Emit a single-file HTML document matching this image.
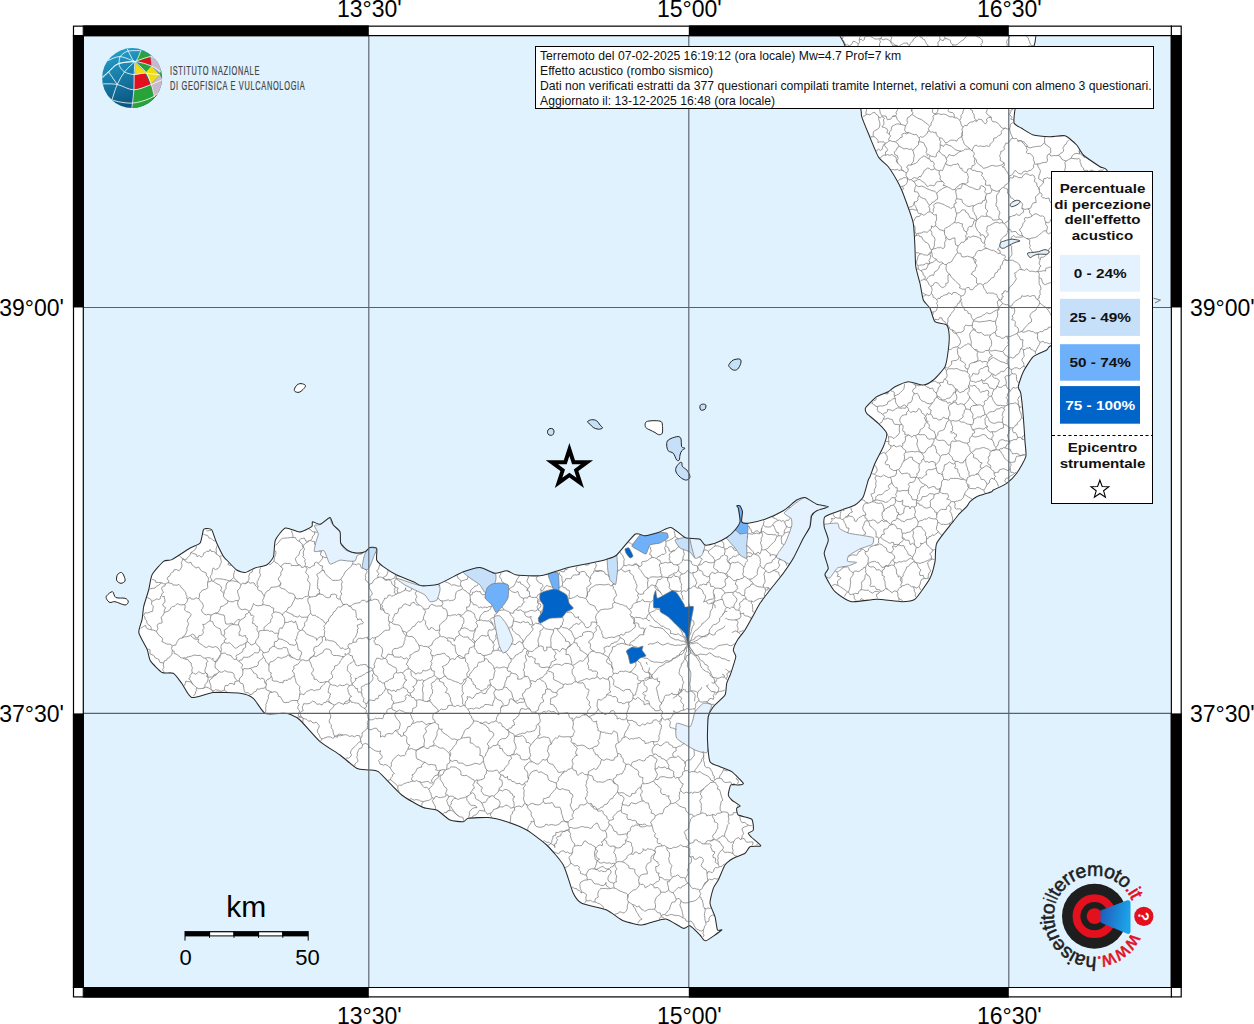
<!DOCTYPE html>
<html><head><meta charset="utf-8">
<style>
html,body{margin:0;padding:0;background:#fff;}
body{width:1254px;height:1024px;position:relative;overflow:hidden;font-family:"Liberation Sans",sans-serif;}
svg text{font-family:"Liberation Sans",sans-serif;}
</style></head><body>
<svg width="1254" height="1024" style="position:absolute;left:0;top:0">
<defs><clipPath id="mapclip"><rect x="83.9" y="36.2" width="1086.8" height="950.8"/></clipPath></defs>
<rect x="83.9" y="36.2" width="1086.8" height="950.8" fill="#e0f2fe"/>
<g clip-path="url(#mapclip)">
<path d="M152.2,574.6 C153.7,571.8 161.6,562.8 163.6,561.3 C165.6,559.8 169.2,560.9 171.9,559.6 C174.6,558.3 187.3,549.7 190.1,548.0 C192.9,546.3 198.8,544.8 200.1,543.0 C201.4,541.2 202.8,531.2 203.4,529.8 C204.0,528.3 205.7,528.5 206.5,528.5 C207.3,528.5 210.7,528.3 211.7,529.8 C212.7,531.2 215.5,540.4 216.7,543.0 C217.9,545.6 222.3,554.6 223.3,556.3 C224.3,558.0 225.4,558.6 226.7,560.0 C228.0,561.4 234.9,568.8 236.7,570.0 C238.5,571.2 243.1,572.7 245.0,572.5 C246.9,572.3 253.3,568.5 255.5,567.8 C257.7,567.0 264.9,566.1 266.7,565.0 C268.5,563.9 272.5,559.4 273.4,556.9 C274.3,554.4 274.2,542.9 275.4,540.0 C276.6,537.1 283.0,528.8 285.4,528.0 C287.8,527.2 296.8,532.1 299.4,532.0 C302.0,531.9 310.4,527.7 311.7,526.7 C313.0,525.7 311.7,522.0 312.5,521.7 C313.3,521.5 318.2,524.6 320.0,524.2 C321.8,523.8 328.7,517.4 330.0,517.5 C331.3,517.6 332.3,523.6 333.3,525.0 C334.3,526.4 339.2,529.9 340.0,531.7 C340.8,533.5 340.0,541.4 340.8,543.3 C341.6,545.2 346.7,549.8 348.3,550.8 C349.9,551.8 355.0,552.9 356.7,553.0 C358.4,553.1 363.7,552.2 365.0,551.7 C366.3,551.2 368.8,547.8 370.0,547.5 C371.2,547.2 376.0,547.0 376.7,548.3 C377.4,549.5 376.0,558.2 376.7,560.0 C377.4,561.8 381.3,565.2 383.3,566.7 C385.3,568.2 393.7,573.5 396.7,575.0 C399.7,576.5 410.8,580.6 413.3,581.7 C415.8,582.8 419.2,585.5 421.7,585.8 C424.2,586.0 434.1,585.6 438.3,584.2 C442.5,582.8 459.1,573.4 463.3,571.7 C467.5,570.0 476.8,567.3 480.0,567.5 C483.2,567.7 492.3,573.0 495.0,573.3 C497.7,573.6 504.5,570.6 506.7,570.8 C508.9,571.0 513.4,574.5 516.7,575.0 C520.0,575.5 536.7,576.0 540.0,575.8 C543.3,575.6 547.2,574.1 550.0,573.3 C552.8,572.5 564.0,568.6 568.3,567.5 C572.6,566.4 589.5,563.3 593.3,562.5 C597.1,561.7 604.4,560.0 606.7,559.2 C609.0,558.5 613.9,557.5 616.7,555.0 C619.5,552.5 632.2,536.1 635.0,534.2 C637.8,532.3 642.7,536.0 645.0,535.8 C647.3,535.6 655.7,533.3 658.3,532.5 C660.9,531.7 668.1,527.0 670.8,527.5 C673.5,528.0 683.1,536.4 685.0,537.5 C686.9,538.6 688.5,538.1 690.0,538.3 C691.5,538.5 698.5,538.5 700.0,539.2 C701.5,539.9 703.5,544.6 705.0,545.0 C706.5,545.4 712.8,544.0 715.0,543.3 C717.2,542.5 724.7,538.8 726.7,537.5 C728.7,536.2 733.7,531.6 735.0,530.0 C736.3,528.4 739.7,523.9 740.0,521.7 C740.3,519.5 738.6,509.9 738.3,508.3 C738.0,506.7 736.5,506.1 736.7,505.8 C736.9,505.6 739.4,505.2 740.0,505.8 C740.6,506.4 742.3,510.1 742.5,511.7 C742.7,513.3 741.1,520.5 741.7,521.7 C742.3,522.9 746.0,523.5 748.3,523.3 C750.6,523.0 761.5,520.5 765.0,519.2 C768.5,518.0 780.1,512.7 783.3,510.8 C786.5,508.9 794.5,501.3 796.7,500.0 C798.9,498.7 803.0,497.1 805.0,497.5 C807.0,497.9 814.4,503.3 816.7,504.2 C819.0,505.1 828.3,506.0 828.3,506.7 C828.3,507.4 818.4,509.9 816.7,510.8 C815.0,511.7 812.4,514.2 811.7,515.8 C811.0,517.4 810.8,524.5 810.0,526.7 C809.2,529.0 805.0,535.1 803.3,538.3 C801.6,541.5 795.3,554.8 793.3,558.3 C791.3,561.8 785.6,570.1 783.3,573.3 C781.0,576.5 772.3,587.0 770.0,590.0 C767.7,593.0 761.8,600.5 760.0,603.3 C758.2,606.1 753.2,615.6 751.7,618.3 C750.2,621.0 746.4,627.8 745.0,630.0 C743.6,632.2 738.7,638.0 737.5,640.0 C736.3,642.0 733.5,648.3 733.3,650.0 C733.1,651.7 736.0,654.4 735.8,656.7 C735.5,659.0 731.7,670.6 730.8,673.3 C729.9,676.0 727.3,681.1 726.7,683.3 C726.1,685.5 726.3,692.7 725.0,695.0 C723.7,697.3 715.0,704.5 713.3,706.7 C711.6,708.9 708.9,713.4 708.3,716.7 C707.7,720.0 707.3,735.5 707.5,740.0 C707.7,744.5 708.8,759.0 710.0,761.7 C711.2,764.4 717.8,765.7 720.0,766.7 C722.2,767.7 729.4,770.0 731.7,771.7 C734.0,773.4 742.6,782.0 743.3,783.3 C744.0,784.6 739.5,784.8 738.3,785.0 C737.0,785.2 731.8,784.0 730.8,785.0 C729.8,786.0 728.2,793.5 728.3,795.0 C728.4,796.5 730.5,798.9 731.7,800.0 C732.9,801.1 739.5,805.0 740.0,805.8 C740.5,806.6 736.9,807.4 736.7,808.3 C736.5,809.2 736.8,813.9 738.3,815.0 C739.8,816.1 750.2,817.7 751.7,819.2 C753.2,820.7 753.6,828.6 753.3,830.0 C753.0,831.4 748.5,832.5 748.3,833.3 C748.1,834.0 750.5,836.2 751.7,837.5 C753.0,838.8 761.0,844.9 760.8,845.8 C760.6,846.7 751.6,846.0 750.0,846.7 C748.4,847.5 746.7,852.1 745.0,853.3 C743.3,854.5 735.3,857.1 733.3,858.3 C731.3,859.5 726.5,862.8 725.0,865.0 C723.5,867.2 719.5,877.7 718.3,880.0 C717.1,882.3 714.1,886.0 713.3,888.3 C712.5,890.6 709.8,900.5 710.0,903.3 C710.2,906.1 714.2,914.0 715.0,916.7 C715.8,919.4 716.8,928.7 717.5,930.0 C718.2,931.3 722.9,928.9 721.7,930.0 C720.5,931.1 708.0,940.3 705.8,940.8 C703.6,941.3 701.6,936.5 700.0,935.0 C698.4,933.5 691.7,926.5 690.0,925.8 C688.3,925.1 685.6,929.0 683.3,928.3 C681.0,927.6 669.7,919.9 666.7,919.2 C663.7,918.5 655.8,921.1 653.3,921.7 C650.8,922.3 644.7,925.1 641.7,925.0 C638.7,924.9 626.8,922.3 623.3,920.8 C619.8,919.3 610.9,911.8 606.7,910.0 C602.5,908.2 585.0,905.0 581.7,903.3 C578.4,901.6 575.1,897.1 573.3,893.3 C571.5,889.5 566.0,869.8 563.3,865.0 C560.6,860.2 550.4,848.5 546.7,845.0 C543.0,841.5 530.7,832.3 526.7,830.0 C522.7,827.7 510.5,823.0 506.7,821.7 C502.9,820.5 492.1,817.8 488.3,817.5 C484.5,817.2 470.8,817.9 468.3,818.3 C465.8,818.7 465.1,821.5 463.3,821.7 C461.5,821.9 452.7,821.2 450.0,820.0 C447.3,818.8 439.4,811.2 436.7,810.0 C434.0,808.8 426.8,809.0 423.3,807.5 C419.8,806.0 406.2,798.6 401.7,795.0 C397.2,791.4 381.6,774.2 378.3,771.7 C375.0,769.2 370.5,770.3 368.3,770.0 C366.1,769.7 359.5,769.8 356.7,768.3 C353.9,766.8 343.7,757.7 340.0,755.0 C336.3,752.3 324.0,745.2 320.0,741.7 C316.0,738.2 303.0,722.8 300.0,720.0 C297.0,717.2 291.7,714.9 290.0,714.2 C288.3,713.5 285.8,713.4 283.3,713.3 C280.8,713.2 268.0,714.8 265.0,713.3 C262.0,711.8 255.8,700.3 253.3,698.3 C250.8,696.3 244.0,693.9 240.0,693.3 C236.0,692.7 218.1,692.1 213.3,692.5 C208.5,692.9 194.9,698.4 191.7,697.5 C188.5,696.6 183.5,685.7 181.7,683.3 C179.9,680.9 175.3,674.4 173.3,673.3 C171.3,672.2 164.4,673.7 162.1,672.5 C159.8,671.3 151.9,663.2 150.4,660.9 C148.9,658.6 148.3,652.1 147.1,649.3 C145.9,646.5 139.3,635.6 138.8,632.6 C138.3,629.6 141.6,622.0 142.1,619.4 C142.6,616.8 143.1,609.1 143.8,606.1 C144.5,603.1 148.0,592.6 148.8,589.5 C149.6,586.4 150.7,577.4 152.2,574.6 Z" fill="#fff"/>
<path d="M838.0,30.0 C857.6,29.4 1016.2,29.4 1036.0,30.0 C1055.8,30.6 1036.0,34.4 1035.8,36.0 C1035.6,37.6 1035.6,41.6 1034.0,46.0 C1032.4,50.4 1021.9,73.7 1020.0,80.0 C1018.1,86.3 1015.6,104.9 1015.0,109.2 C1014.4,113.5 1013.5,121.4 1014.2,123.3 C1014.9,125.2 1019.8,127.1 1021.7,128.3 C1023.6,129.5 1030.5,134.2 1033.3,135.0 C1036.1,135.8 1046.8,136.6 1050.0,136.7 C1053.2,136.8 1062.3,135.0 1065.0,135.8 C1067.7,136.6 1074.9,143.1 1076.7,145.0 C1078.5,146.9 1081.0,152.8 1083.3,155.0 C1085.6,157.2 1097.7,165.2 1100.0,166.7 C1102.3,168.2 1105.2,167.7 1106.7,170.0 C1108.2,172.3 1112.7,181.0 1115.0,190.0 C1117.3,199.0 1127.0,249.0 1130.0,260.0 C1133.0,271.0 1148.0,293.5 1145.0,300.0 C1142.0,306.5 1109.3,320.5 1100.0,325.0 C1090.7,329.5 1057.3,342.5 1052.0,345.0 C1046.7,347.5 1048.6,348.8 1046.7,350.0 C1044.8,351.2 1035.6,354.5 1033.3,356.7 C1031.0,358.9 1024.8,368.7 1023.3,371.7 C1021.8,374.7 1018.5,384.5 1018.3,386.7 C1018.0,388.9 1020.3,390.3 1020.8,393.3 C1021.3,396.3 1022.9,411.9 1023.3,416.7 C1023.7,421.5 1024.8,437.7 1025.0,441.7 C1025.2,445.7 1026.6,453.5 1025.8,456.7 C1025.0,459.9 1018.6,470.6 1016.7,473.3 C1014.8,476.0 1009.0,481.6 1006.7,483.3 C1004.4,485.0 994.8,489.2 993.3,490.0 C991.8,490.8 993.4,491.0 991.7,491.7 C990.0,492.4 978.9,495.7 976.7,496.7 C974.5,497.7 971.0,500.7 970.0,501.7 C969.0,502.7 967.9,505.4 966.7,506.7 C965.5,508.0 959.8,513.3 958.3,515.0 C956.8,516.7 953.9,520.5 951.7,523.3 C949.5,526.1 938.4,539.5 936.7,543.3 C935.0,547.1 935.7,558.2 935.0,561.7 C934.3,565.2 932.0,574.5 930.0,578.3 C928.0,582.0 917.8,596.9 915.0,599.2 C912.2,601.5 905.5,601.7 901.7,601.7 C897.9,601.7 881.7,599.2 876.7,599.2 C871.7,599.2 855.9,602.5 851.7,601.7 C847.5,601.0 837.7,594.4 835.0,591.7 C832.3,589.0 825.7,577.3 825.0,575.0 C824.3,572.7 828.4,570.5 828.3,568.3 C828.2,566.1 824.2,556.1 824.2,553.3 C824.2,550.5 828.3,542.7 828.3,540.0 C828.3,537.3 824.5,529.0 824.2,526.7 C823.9,524.4 823.2,518.4 825.0,516.7 C826.8,515.0 838.7,511.2 841.7,510.0 C844.7,508.8 852.8,506.3 855.0,505.0 C857.2,503.7 862.0,499.2 863.3,496.7 C864.6,494.2 867.6,482.0 868.3,480.0 C869.0,478.0 869.3,478.4 870.0,476.7 C870.7,475.0 873.7,466.3 875.0,463.3 C876.3,460.3 882.1,449.7 883.3,446.7 C884.5,443.7 887.2,435.6 886.7,433.3 C886.2,431.0 880.3,425.3 878.3,423.3 C876.3,421.3 868.0,414.9 866.7,413.3 C865.5,411.7 864.8,409.2 865.8,407.5 C866.8,405.8 874.5,398.3 876.7,396.7 C879.0,395.1 886.5,392.7 888.3,391.7 C890.1,390.7 893.0,387.7 895.0,386.7 C897.0,385.7 905.5,381.9 908.3,381.7 C911.1,381.5 920.8,385.2 923.3,385.0 C925.8,384.8 931.1,381.8 933.3,380.0 C935.5,378.2 943.5,369.7 945.0,366.7 C946.5,363.7 947.9,353.2 948.3,350.0 C948.7,346.8 949.4,337.5 949.2,335.0 C949.0,332.5 948.1,326.3 946.7,325.0 C945.3,323.7 936.7,323.4 935.0,321.7 C933.3,320.0 931.2,310.5 930.0,308.3 C928.8,306.1 924.3,302.5 923.3,300.0 C922.3,297.5 920.8,286.6 920.0,283.3 C919.2,280.0 916.3,270.2 915.8,266.7 C915.3,263.2 915.2,252.6 915.0,248.3 C914.8,244.0 914.1,227.8 913.3,223.3 C912.5,218.8 907.9,206.6 906.7,203.3 C905.5,200.0 902.7,192.3 901.7,190.0 C900.7,187.7 898.0,182.3 896.7,180.0 C895.4,177.7 890.1,169.0 888.3,166.7 C886.5,164.4 880.3,160.0 878.3,156.7 C876.3,153.4 870.0,137.3 868.3,133.3 C866.6,129.3 862.5,119.1 861.7,116.7 C861.0,114.3 861.8,112.9 860.8,109.2 C859.8,105.5 853.6,86.3 852.0,80.0 C850.4,73.7 846.2,50.4 845.0,46.0 C843.8,41.6 840.7,37.6 840.0,36.0 C839.3,34.4 818.4,30.6 838.0,30.0 Z" fill="#fff"/>
<defs><clipPath id="landclip"><path d="M152.2,574.6 C153.7,571.8 161.6,562.8 163.6,561.3 C165.6,559.8 169.2,560.9 171.9,559.6 C174.6,558.3 187.3,549.7 190.1,548.0 C192.9,546.3 198.8,544.8 200.1,543.0 C201.4,541.2 202.8,531.2 203.4,529.8 C204.0,528.3 205.7,528.5 206.5,528.5 C207.3,528.5 210.7,528.3 211.7,529.8 C212.7,531.2 215.5,540.4 216.7,543.0 C217.9,545.6 222.3,554.6 223.3,556.3 C224.3,558.0 225.4,558.6 226.7,560.0 C228.0,561.4 234.9,568.8 236.7,570.0 C238.5,571.2 243.1,572.7 245.0,572.5 C246.9,572.3 253.3,568.5 255.5,567.8 C257.7,567.0 264.9,566.1 266.7,565.0 C268.5,563.9 272.5,559.4 273.4,556.9 C274.3,554.4 274.2,542.9 275.4,540.0 C276.6,537.1 283.0,528.8 285.4,528.0 C287.8,527.2 296.8,532.1 299.4,532.0 C302.0,531.9 310.4,527.7 311.7,526.7 C313.0,525.7 311.7,522.0 312.5,521.7 C313.3,521.5 318.2,524.6 320.0,524.2 C321.8,523.8 328.7,517.4 330.0,517.5 C331.3,517.6 332.3,523.6 333.3,525.0 C334.3,526.4 339.2,529.9 340.0,531.7 C340.8,533.5 340.0,541.4 340.8,543.3 C341.6,545.2 346.7,549.8 348.3,550.8 C349.9,551.8 355.0,552.9 356.7,553.0 C358.4,553.1 363.7,552.2 365.0,551.7 C366.3,551.2 368.8,547.8 370.0,547.5 C371.2,547.2 376.0,547.0 376.7,548.3 C377.4,549.5 376.0,558.2 376.7,560.0 C377.4,561.8 381.3,565.2 383.3,566.7 C385.3,568.2 393.7,573.5 396.7,575.0 C399.7,576.5 410.8,580.6 413.3,581.7 C415.8,582.8 419.2,585.5 421.7,585.8 C424.2,586.0 434.1,585.6 438.3,584.2 C442.5,582.8 459.1,573.4 463.3,571.7 C467.5,570.0 476.8,567.3 480.0,567.5 C483.2,567.7 492.3,573.0 495.0,573.3 C497.7,573.6 504.5,570.6 506.7,570.8 C508.9,571.0 513.4,574.5 516.7,575.0 C520.0,575.5 536.7,576.0 540.0,575.8 C543.3,575.6 547.2,574.1 550.0,573.3 C552.8,572.5 564.0,568.6 568.3,567.5 C572.6,566.4 589.5,563.3 593.3,562.5 C597.1,561.7 604.4,560.0 606.7,559.2 C609.0,558.5 613.9,557.5 616.7,555.0 C619.5,552.5 632.2,536.1 635.0,534.2 C637.8,532.3 642.7,536.0 645.0,535.8 C647.3,535.6 655.7,533.3 658.3,532.5 C660.9,531.7 668.1,527.0 670.8,527.5 C673.5,528.0 683.1,536.4 685.0,537.5 C686.9,538.6 688.5,538.1 690.0,538.3 C691.5,538.5 698.5,538.5 700.0,539.2 C701.5,539.9 703.5,544.6 705.0,545.0 C706.5,545.4 712.8,544.0 715.0,543.3 C717.2,542.5 724.7,538.8 726.7,537.5 C728.7,536.2 733.7,531.6 735.0,530.0 C736.3,528.4 739.7,523.9 740.0,521.7 C740.3,519.5 738.6,509.9 738.3,508.3 C738.0,506.7 736.5,506.1 736.7,505.8 C736.9,505.6 739.4,505.2 740.0,505.8 C740.6,506.4 742.3,510.1 742.5,511.7 C742.7,513.3 741.1,520.5 741.7,521.7 C742.3,522.9 746.0,523.5 748.3,523.3 C750.6,523.0 761.5,520.5 765.0,519.2 C768.5,518.0 780.1,512.7 783.3,510.8 C786.5,508.9 794.5,501.3 796.7,500.0 C798.9,498.7 803.0,497.1 805.0,497.5 C807.0,497.9 814.4,503.3 816.7,504.2 C819.0,505.1 828.3,506.0 828.3,506.7 C828.3,507.4 818.4,509.9 816.7,510.8 C815.0,511.7 812.4,514.2 811.7,515.8 C811.0,517.4 810.8,524.5 810.0,526.7 C809.2,529.0 805.0,535.1 803.3,538.3 C801.6,541.5 795.3,554.8 793.3,558.3 C791.3,561.8 785.6,570.1 783.3,573.3 C781.0,576.5 772.3,587.0 770.0,590.0 C767.7,593.0 761.8,600.5 760.0,603.3 C758.2,606.1 753.2,615.6 751.7,618.3 C750.2,621.0 746.4,627.8 745.0,630.0 C743.6,632.2 738.7,638.0 737.5,640.0 C736.3,642.0 733.5,648.3 733.3,650.0 C733.1,651.7 736.0,654.4 735.8,656.7 C735.5,659.0 731.7,670.6 730.8,673.3 C729.9,676.0 727.3,681.1 726.7,683.3 C726.1,685.5 726.3,692.7 725.0,695.0 C723.7,697.3 715.0,704.5 713.3,706.7 C711.6,708.9 708.9,713.4 708.3,716.7 C707.7,720.0 707.3,735.5 707.5,740.0 C707.7,744.5 708.8,759.0 710.0,761.7 C711.2,764.4 717.8,765.7 720.0,766.7 C722.2,767.7 729.4,770.0 731.7,771.7 C734.0,773.4 742.6,782.0 743.3,783.3 C744.0,784.6 739.5,784.8 738.3,785.0 C737.0,785.2 731.8,784.0 730.8,785.0 C729.8,786.0 728.2,793.5 728.3,795.0 C728.4,796.5 730.5,798.9 731.7,800.0 C732.9,801.1 739.5,805.0 740.0,805.8 C740.5,806.6 736.9,807.4 736.7,808.3 C736.5,809.2 736.8,813.9 738.3,815.0 C739.8,816.1 750.2,817.7 751.7,819.2 C753.2,820.7 753.6,828.6 753.3,830.0 C753.0,831.4 748.5,832.5 748.3,833.3 C748.1,834.0 750.5,836.2 751.7,837.5 C753.0,838.8 761.0,844.9 760.8,845.8 C760.6,846.7 751.6,846.0 750.0,846.7 C748.4,847.5 746.7,852.1 745.0,853.3 C743.3,854.5 735.3,857.1 733.3,858.3 C731.3,859.5 726.5,862.8 725.0,865.0 C723.5,867.2 719.5,877.7 718.3,880.0 C717.1,882.3 714.1,886.0 713.3,888.3 C712.5,890.6 709.8,900.5 710.0,903.3 C710.2,906.1 714.2,914.0 715.0,916.7 C715.8,919.4 716.8,928.7 717.5,930.0 C718.2,931.3 722.9,928.9 721.7,930.0 C720.5,931.1 708.0,940.3 705.8,940.8 C703.6,941.3 701.6,936.5 700.0,935.0 C698.4,933.5 691.7,926.5 690.0,925.8 C688.3,925.1 685.6,929.0 683.3,928.3 C681.0,927.6 669.7,919.9 666.7,919.2 C663.7,918.5 655.8,921.1 653.3,921.7 C650.8,922.3 644.7,925.1 641.7,925.0 C638.7,924.9 626.8,922.3 623.3,920.8 C619.8,919.3 610.9,911.8 606.7,910.0 C602.5,908.2 585.0,905.0 581.7,903.3 C578.4,901.6 575.1,897.1 573.3,893.3 C571.5,889.5 566.0,869.8 563.3,865.0 C560.6,860.2 550.4,848.5 546.7,845.0 C543.0,841.5 530.7,832.3 526.7,830.0 C522.7,827.7 510.5,823.0 506.7,821.7 C502.9,820.5 492.1,817.8 488.3,817.5 C484.5,817.2 470.8,817.9 468.3,818.3 C465.8,818.7 465.1,821.5 463.3,821.7 C461.5,821.9 452.7,821.2 450.0,820.0 C447.3,818.8 439.4,811.2 436.7,810.0 C434.0,808.8 426.8,809.0 423.3,807.5 C419.8,806.0 406.2,798.6 401.7,795.0 C397.2,791.4 381.6,774.2 378.3,771.7 C375.0,769.2 370.5,770.3 368.3,770.0 C366.1,769.7 359.5,769.8 356.7,768.3 C353.9,766.8 343.7,757.7 340.0,755.0 C336.3,752.3 324.0,745.2 320.0,741.7 C316.0,738.2 303.0,722.8 300.0,720.0 C297.0,717.2 291.7,714.9 290.0,714.2 C288.3,713.5 285.8,713.4 283.3,713.3 C280.8,713.2 268.0,714.8 265.0,713.3 C262.0,711.8 255.8,700.3 253.3,698.3 C250.8,696.3 244.0,693.9 240.0,693.3 C236.0,692.7 218.1,692.1 213.3,692.5 C208.5,692.9 194.9,698.4 191.7,697.5 C188.5,696.6 183.5,685.7 181.7,683.3 C179.9,680.9 175.3,674.4 173.3,673.3 C171.3,672.2 164.4,673.7 162.1,672.5 C159.8,671.3 151.9,663.2 150.4,660.9 C148.9,658.6 148.3,652.1 147.1,649.3 C145.9,646.5 139.3,635.6 138.8,632.6 C138.3,629.6 141.6,622.0 142.1,619.4 C142.6,616.8 143.1,609.1 143.8,606.1 C144.5,603.1 148.0,592.6 148.8,589.5 C149.6,586.4 150.7,577.4 152.2,574.6 Z"/><path d="M838.0,30.0 C857.6,29.4 1016.2,29.4 1036.0,30.0 C1055.8,30.6 1036.0,34.4 1035.8,36.0 C1035.6,37.6 1035.6,41.6 1034.0,46.0 C1032.4,50.4 1021.9,73.7 1020.0,80.0 C1018.1,86.3 1015.6,104.9 1015.0,109.2 C1014.4,113.5 1013.5,121.4 1014.2,123.3 C1014.9,125.2 1019.8,127.1 1021.7,128.3 C1023.6,129.5 1030.5,134.2 1033.3,135.0 C1036.1,135.8 1046.8,136.6 1050.0,136.7 C1053.2,136.8 1062.3,135.0 1065.0,135.8 C1067.7,136.6 1074.9,143.1 1076.7,145.0 C1078.5,146.9 1081.0,152.8 1083.3,155.0 C1085.6,157.2 1097.7,165.2 1100.0,166.7 C1102.3,168.2 1105.2,167.7 1106.7,170.0 C1108.2,172.3 1112.7,181.0 1115.0,190.0 C1117.3,199.0 1127.0,249.0 1130.0,260.0 C1133.0,271.0 1148.0,293.5 1145.0,300.0 C1142.0,306.5 1109.3,320.5 1100.0,325.0 C1090.7,329.5 1057.3,342.5 1052.0,345.0 C1046.7,347.5 1048.6,348.8 1046.7,350.0 C1044.8,351.2 1035.6,354.5 1033.3,356.7 C1031.0,358.9 1024.8,368.7 1023.3,371.7 C1021.8,374.7 1018.5,384.5 1018.3,386.7 C1018.0,388.9 1020.3,390.3 1020.8,393.3 C1021.3,396.3 1022.9,411.9 1023.3,416.7 C1023.7,421.5 1024.8,437.7 1025.0,441.7 C1025.2,445.7 1026.6,453.5 1025.8,456.7 C1025.0,459.9 1018.6,470.6 1016.7,473.3 C1014.8,476.0 1009.0,481.6 1006.7,483.3 C1004.4,485.0 994.8,489.2 993.3,490.0 C991.8,490.8 993.4,491.0 991.7,491.7 C990.0,492.4 978.9,495.7 976.7,496.7 C974.5,497.7 971.0,500.7 970.0,501.7 C969.0,502.7 967.9,505.4 966.7,506.7 C965.5,508.0 959.8,513.3 958.3,515.0 C956.8,516.7 953.9,520.5 951.7,523.3 C949.5,526.1 938.4,539.5 936.7,543.3 C935.0,547.1 935.7,558.2 935.0,561.7 C934.3,565.2 932.0,574.5 930.0,578.3 C928.0,582.0 917.8,596.9 915.0,599.2 C912.2,601.5 905.5,601.7 901.7,601.7 C897.9,601.7 881.7,599.2 876.7,599.2 C871.7,599.2 855.9,602.5 851.7,601.7 C847.5,601.0 837.7,594.4 835.0,591.7 C832.3,589.0 825.7,577.3 825.0,575.0 C824.3,572.7 828.4,570.5 828.3,568.3 C828.2,566.1 824.2,556.1 824.2,553.3 C824.2,550.5 828.3,542.7 828.3,540.0 C828.3,537.3 824.5,529.0 824.2,526.7 C823.9,524.4 823.2,518.4 825.0,516.7 C826.8,515.0 838.7,511.2 841.7,510.0 C844.7,508.8 852.8,506.3 855.0,505.0 C857.2,503.7 862.0,499.2 863.3,496.7 C864.6,494.2 867.6,482.0 868.3,480.0 C869.0,478.0 869.3,478.4 870.0,476.7 C870.7,475.0 873.7,466.3 875.0,463.3 C876.3,460.3 882.1,449.7 883.3,446.7 C884.5,443.7 887.2,435.6 886.7,433.3 C886.2,431.0 880.3,425.3 878.3,423.3 C876.3,421.3 868.0,414.9 866.7,413.3 C865.5,411.7 864.8,409.2 865.8,407.5 C866.8,405.8 874.5,398.3 876.7,396.7 C879.0,395.1 886.5,392.7 888.3,391.7 C890.1,390.7 893.0,387.7 895.0,386.7 C897.0,385.7 905.5,381.9 908.3,381.7 C911.1,381.5 920.8,385.2 923.3,385.0 C925.8,384.8 931.1,381.8 933.3,380.0 C935.5,378.2 943.5,369.7 945.0,366.7 C946.5,363.7 947.9,353.2 948.3,350.0 C948.7,346.8 949.4,337.5 949.2,335.0 C949.0,332.5 948.1,326.3 946.7,325.0 C945.3,323.7 936.7,323.4 935.0,321.7 C933.3,320.0 931.2,310.5 930.0,308.3 C928.8,306.1 924.3,302.5 923.3,300.0 C922.3,297.5 920.8,286.6 920.0,283.3 C919.2,280.0 916.3,270.2 915.8,266.7 C915.3,263.2 915.2,252.6 915.0,248.3 C914.8,244.0 914.1,227.8 913.3,223.3 C912.5,218.8 907.9,206.6 906.7,203.3 C905.5,200.0 902.7,192.3 901.7,190.0 C900.7,187.7 898.0,182.3 896.7,180.0 C895.4,177.7 890.1,169.0 888.3,166.7 C886.5,164.4 880.3,160.0 878.3,156.7 C876.3,153.4 870.0,137.3 868.3,133.3 C866.6,129.3 862.5,119.1 861.7,116.7 C861.0,114.3 861.8,112.9 860.8,109.2 C859.8,105.5 853.6,86.3 852.0,80.0 C850.4,73.7 846.2,50.4 845.0,46.0 C843.8,41.6 840.7,37.6 840.0,36.0 C839.3,34.4 818.4,30.6 838.0,30.0 Z"/></clipPath></defs>
<g clip-path="url(#landclip)">
<path d="M314.4,525.6 C314.6,524.8 319.4,525.0 320.7,524.4 C322.0,523.8 328.6,518.1 329.5,518.0 C330.4,517.9 331.1,522.8 331.9,523.6 C332.7,524.4 338.2,526.0 339.1,527.1 C340.0,528.2 342.2,534.9 342.3,536.3 C342.4,537.7 340.4,542.4 340.7,543.5 C341.0,544.6 344.2,549.1 345.5,549.9 C346.8,550.7 354.3,553.3 355.8,553.5 C357.3,553.7 363.7,552.1 363.8,552.3 C363.9,552.5 358.1,554.8 357.4,555.5 C356.7,556.2 355.8,560.5 355.0,561.0 C354.2,561.5 349.1,561.1 347.8,561.0 C346.5,560.9 341.4,559.9 339.9,560.2 C338.4,560.5 331.4,564.4 330.3,564.2 C329.2,564.0 327.6,558.9 327.1,557.8 C326.6,556.7 325.0,551.2 323.9,550.7 C322.8,550.2 315.1,552.2 314.4,551.5 C313.7,550.8 315.7,543.4 316.0,541.9 C316.3,540.4 318.4,535.3 318.3,533.9 C318.2,532.5 314.2,526.4 314.4,525.6 Z" fill="#e3f2fe" stroke="#7a7a7a" stroke-width="0.75"/>
<path d="M369.4,547.5 C370.4,547.0 376.2,548.4 376.6,549.1 C377.0,549.8 374.7,554.1 374.2,555.5 C373.7,556.9 370.8,564.6 370.2,565.8 C369.6,567.0 367.7,569.7 367.0,569.8 C366.3,569.9 362.4,568.7 362.2,567.4 C362.0,566.1 364.0,556.4 364.6,554.7 C365.2,553.0 368.4,548.0 369.4,547.5 Z" fill="#c6e0fa" stroke="#7a7a7a" stroke-width="0.75"/>
<path d="M395.8,578.0 C397.1,578.0 416.5,585.0 420.0,585.5 C423.5,586.0 436.6,583.8 438.3,584.2 C440.0,584.6 440.1,588.7 440.0,590.0 C439.9,591.3 437.8,599.0 437.0,600.0 C436.2,601.0 431.0,602.1 430.0,601.7 C429.0,601.3 426.2,596.0 425.0,595.0 C423.8,594.0 416.7,590.8 415.0,590.0 C413.3,589.2 406.6,586.0 405.0,585.0 C403.4,584.0 394.6,578.0 395.8,578.0 Z" fill="#e3f2fe" stroke="#7a7a7a" stroke-width="0.75"/>
<path d="M462.5,571.0 C463.3,570.1 477.3,567.3 480.0,567.5 C482.7,567.7 493.7,572.3 495.0,573.3 C496.3,574.3 496.1,578.6 495.8,580.0 C495.6,581.4 492.9,589.0 492.0,590.0 C491.1,591.0 486.0,592.9 485.0,592.5 C484.0,592.1 481.2,586.2 480.0,585.0 C478.8,583.8 471.5,579.2 470.0,578.0 C468.5,576.8 461.7,571.9 462.5,571.0 Z" fill="#c6e0fa" stroke="#7a7a7a" stroke-width="0.75"/>
<path d="M487.0,588.0 C487.6,586.8 490.9,584.4 492.0,584.0 C493.1,583.6 498.6,582.9 500.0,583.0 C501.4,583.1 507.6,583.8 508.3,585.0 C509.0,586.2 508.5,596.2 508.0,598.0 C507.5,599.8 503.0,605.8 502.0,607.0 C501.0,608.2 496.8,612.7 496.0,612.5 C495.2,612.3 492.9,606.2 492.0,605.0 C491.1,603.8 485.4,599.4 485.0,598.0 C484.6,596.6 486.4,589.2 487.0,588.0 Z" fill="#6fb0fa" stroke="#7a7a7a" stroke-width="0.75"/>
<path d="M494.0,617.0 C494.3,615.8 498.9,615.3 500.0,616.0 C501.1,616.7 505.9,623.0 507.0,625.0 C508.1,627.0 512.9,637.9 513.0,640.0 C513.1,642.1 508.8,648.9 508.0,650.0 C507.2,651.1 503.8,653.4 503.0,653.0 C502.2,652.6 499.6,646.9 499.0,645.0 C498.4,643.1 496.4,632.3 496.0,630.0 C495.6,627.7 493.7,618.2 494.0,617.0 Z" fill="#e3f2fe" stroke="#7a7a7a" stroke-width="0.75"/>
<path d="M548.0,574.0 C548.3,572.6 557.1,571.7 558.0,573.0 C558.9,574.3 559.3,588.6 559.0,590.0 C558.7,591.4 554.9,591.3 554.0,590.0 C553.1,588.7 547.7,575.4 548.0,574.0 Z" fill="#6fb0fa" stroke="#7a7a7a" stroke-width="0.75"/>
<path d="M540.0,594.2 C540.3,593.5 542.2,592.1 543.3,591.7 C544.4,591.3 552.0,589.3 553.3,589.2 C554.5,589.1 557.2,589.5 558.3,590.0 C559.4,590.5 565.8,593.9 566.7,595.0 C567.6,596.1 568.7,602.2 569.2,603.3 C569.8,604.4 573.5,607.6 573.3,608.3 C573.1,609.0 567.7,610.9 566.7,611.7 C565.7,612.5 563.1,617.0 561.7,617.5 C560.3,618.0 551.8,617.8 550.0,618.3 C548.2,618.8 541.0,623.3 540.0,623.3 C539.0,623.3 538.1,619.3 538.3,618.3 C538.5,617.3 542.1,612.8 542.5,611.7 C542.9,610.6 543.5,606.0 543.3,605.0 C543.1,604.0 540.3,600.9 540.0,600.0 C539.7,599.1 539.7,594.9 540.0,594.2 Z" fill="#0064c8" stroke="#7a7a7a" stroke-width="0.75"/>
<path d="M607.5,558.0 C608.2,556.8 615.7,554.0 616.5,555.0 C617.3,556.0 617.6,567.5 617.5,570.0 C617.4,572.5 616.2,583.8 615.6,584.6 C615.0,585.4 610.6,581.2 610.0,580.0 C609.4,578.8 608.0,571.8 607.8,570.0 C607.6,568.2 606.8,559.2 607.5,558.0 Z" fill="#c6e0fa" stroke="#7a7a7a" stroke-width="0.75"/>
<path d="M625.0,549.0 C625.2,548.6 628.3,547.4 629.0,548.0 C629.7,548.6 632.9,555.2 633.0,556.0 C633.1,556.8 630.6,558.2 630.0,558.0 C629.4,557.8 626.4,553.8 626.0,553.0 C625.6,552.2 624.8,549.4 625.0,549.0 Z" fill="#0064c8" stroke="#7a7a7a" stroke-width="0.75"/>
<path d="M632.0,546.0 C632.2,544.8 638.9,535.9 640.0,535.0 C641.1,534.1 643.5,536.0 645.0,535.8 C646.5,535.6 656.5,532.7 658.3,532.5 C660.1,532.3 666.2,532.5 667.0,533.0 C667.8,533.5 668.6,537.2 668.0,538.0 C667.4,538.8 661.5,542.4 660.0,543.0 C658.5,543.6 651.2,544.1 650.0,545.0 C648.8,545.9 647.0,553.6 646.0,554.0 C645.0,554.4 639.2,550.7 638.0,550.0 C636.8,549.3 631.8,547.2 632.0,546.0 Z" fill="#6fb0fa" stroke="#7a7a7a" stroke-width="0.75"/>
<path d="M675.0,540.0 C675.4,539.1 683.8,537.6 685.0,537.5 C686.2,537.4 688.8,538.2 690.0,538.3 C691.2,538.4 699.2,538.5 700.0,539.2 C700.8,539.9 699.4,545.4 699.0,547.0 C698.6,548.6 695.8,557.6 695.0,558.0 C694.2,558.4 691.2,552.8 690.0,552.0 C688.8,551.2 681.2,549.0 680.0,548.0 C678.8,547.0 674.6,540.9 675.0,540.0 Z" fill="#c6e0fa" stroke="#7a7a7a" stroke-width="0.75"/>
<path d="M655.7,590.5 C656.0,590.7 656.2,598.3 657.6,598.3 C659.0,598.3 670.7,590.9 672.3,590.5 C673.9,590.1 676.1,592.3 677.1,593.4 C678.1,594.5 683.3,603.1 684.0,604.2 C684.7,605.3 684.2,606.9 685.0,607.1 C685.8,607.3 692.7,605.8 693.3,606.6 C693.9,607.4 692.1,615.1 691.8,616.9 C691.5,618.7 690.1,626.3 689.8,628.6 C689.5,630.9 688.3,643.8 687.9,644.2 C687.5,644.6 686.0,635.1 685.0,633.5 C684.0,631.9 677.6,626.1 676.2,624.7 C674.8,623.3 669.7,618.0 668.4,616.9 C667.1,615.8 661.2,612.7 660.5,612.0 C659.8,611.3 660.2,608.5 659.6,608.1 C659.0,607.7 654.2,608.6 653.7,607.6 C653.2,606.6 653.5,597.8 653.7,596.4 C653.9,595.0 655.4,590.3 655.7,590.5 Z" fill="#0064c8" stroke="#7a7a7a" stroke-width="0.75"/>
<path d="M626.4,651.0 C626.7,650.3 631.3,647.4 632.2,647.1 C633.1,646.9 636.1,648.1 637.0,648.0 C637.9,647.9 642.6,646.0 643.0,646.2 C643.4,646.4 641.8,649.2 642.0,650.0 C642.2,650.8 646.1,655.2 645.9,655.9 C645.7,656.6 640.8,657.5 640.0,658.0 C639.2,658.5 636.9,661.3 636.1,661.8 C635.3,662.3 630.9,663.9 630.3,663.7 C629.7,663.5 629.2,659.6 629.0,659.0 C628.8,658.4 628.5,656.6 628.3,655.9 C628.1,655.2 626.1,651.7 626.4,651.0 Z" fill="#0064c8" stroke="#7a7a7a" stroke-width="0.75"/>
<path d="M690.0,538.3 C690.4,536.7 698.8,538.6 700.0,539.2 C701.2,539.8 704.8,543.7 705.0,545.0 C705.2,546.3 702.8,553.9 702.0,555.0 C701.2,556.1 696.0,559.4 695.0,558.0 C694.0,556.6 689.6,539.9 690.0,538.3 Z" fill="#e3f2fe" stroke="#7a7a7a" stroke-width="0.75"/>
<path d="M735.0,530.0 C735.0,529.0 739.7,523.5 740.0,521.7 C740.3,519.9 738.6,509.6 738.3,508.3 C738.0,507.0 736.6,506.0 736.7,505.8 C736.8,505.6 739.5,505.3 740.0,505.8 C740.5,506.3 742.4,510.4 742.5,511.7 C742.6,513.0 741.3,520.8 741.7,521.7 C742.1,522.6 747.0,522.0 747.5,523.0 C748.0,524.0 748.1,532.4 747.5,533.3 C746.9,534.2 741.0,534.3 740.0,534.0 C739.0,533.7 735.0,531.0 735.0,530.0 Z" fill="#6fb0fa" stroke="#7a7a7a" stroke-width="0.75"/>
<path d="M726.7,537.5 C727.3,536.7 733.9,530.3 735.0,530.0 C736.1,529.7 739.0,533.7 740.0,534.0 C741.0,534.3 746.9,532.4 747.5,533.3 C748.1,534.2 746.8,542.9 746.7,545.0 C746.6,547.1 747.3,557.5 746.7,558.3 C746.1,559.1 741.0,555.9 740.0,555.0 C739.0,554.1 736.0,549.2 735.0,548.0 C734.0,546.8 728.7,540.9 728.0,540.0 C727.3,539.1 726.1,538.3 726.7,537.5 Z" fill="#c6e0fa" stroke="#7a7a7a" stroke-width="0.75"/>
<path d="M695.0,711.7 C695.8,710.5 701.9,703.9 703.3,703.3 C704.7,702.7 711.3,703.9 711.7,705.0 C712.1,706.1 708.6,712.8 708.3,716.7 C707.9,720.6 708.6,748.9 707.5,751.7 C706.4,754.5 697.6,751.1 695.0,750.0 C692.4,748.9 678.2,740.5 676.7,738.3 C675.2,736.1 675.6,724.3 676.7,723.3 C677.8,722.3 688.6,727.1 690.0,726.7 C691.4,726.3 692.9,719.5 693.3,718.3 C693.7,717.0 694.2,713.0 695.0,711.7 Z" fill="#e3f2fe" stroke="#7a7a7a" stroke-width="0.75"/>
<path d="M825.1,524.2 C826.4,524.0 836.3,522.7 837.5,523.1 C838.7,523.5 838.8,527.9 839.7,528.7 C840.6,529.5 846.8,532.6 848.7,533.2 C850.6,533.8 860.1,535.0 862.2,535.4 C864.3,535.8 872.6,537.0 873.4,537.7 C874.2,538.5 873.4,543.5 872.3,544.4 C871.2,545.3 861.9,548.0 859.9,548.9 C857.9,549.8 849.7,554.7 848.7,555.7 C847.7,556.7 846.9,560.7 847.6,561.3 C848.3,561.9 856.5,562.0 856.6,562.4 C856.7,562.8 850.3,565.3 848.7,565.8 C847.1,566.3 839.1,567.0 837.5,568.0 C835.9,569.0 830.7,577.6 829.6,578.1 C828.5,578.6 824.6,576.1 824.0,574.0 C823.4,571.9 821.8,556.2 822.0,553.4 C822.2,550.6 826.0,542.2 826.0,539.9 C826.0,537.6 822.6,527.3 822.5,526.0 C822.4,524.7 823.9,524.4 825.1,524.2 Z" fill="#e3f2fe" stroke="#7a7a7a" stroke-width="0.75"/>
<path d="M784.2,513.1 C783.9,514.3 790.6,517.5 791.2,518.5 C791.8,519.5 792.0,524.0 791.8,525.4 C791.6,526.8 789.1,533.6 788.5,535.1 C787.9,536.6 785.6,542.4 784.8,543.7 C784.0,545.0 780.1,550.1 779.4,551.2 C778.7,552.3 775.8,556.3 776.2,557.1 C776.6,557.9 782.6,560.3 783.7,560.9 C784.8,561.5 788.7,564.5 789.6,564.1 C790.5,563.7 793.1,559.0 794.4,556.6 C795.7,554.2 803.9,537.6 805.2,535.1 C806.5,532.6 809.5,528.2 810.0,526.5 C810.5,524.8 810.1,516.4 811.6,514.7 C813.1,513.0 827.9,507.3 828.3,506.4 C828.7,505.5 818.6,504.2 816.7,503.5 C814.8,502.8 807.1,497.5 805.2,497.5 C803.3,497.5 796.1,502.7 794.4,504.0 C792.6,505.3 784.5,511.9 784.2,513.1 Z" fill="#e3f2fe" stroke="#7a7a7a" stroke-width="0.75"/>
</g>
<path d="M164.0,671.8 L164.0,671.8 L162.5,669.6 L163.9,667.3 L163.3,665.1 L163.6,662.9 M163.6,662.9 L160.0,662.5 L158.6,659.2 L155.5,658.1 L153.7,655.4 L150.0,653.9 L150.1,649.9 L147.9,649.0 M163.6,662.9 L164.4,660.8 L166.5,660.4 L167.3,658.3 L169.3,657.7 L170.4,655.9 L172.0,654.6 L172.0,652.5 L172.3,650.5 M172.3,650.5 L171.5,648.3 L172.2,646.0 M172.2,646.0 L171.3,644.7 L169.8,644.1 L168.3,644.2 L166.8,644.1 L164.3,642.7 L161.7,641.5 L162.7,640.0 L162.3,638.2 L161.2,636.9 L159.7,636.1 L157.8,633.9 L156.4,631.4 M156.4,631.4 L153.8,630.2 L151.1,629.8 M151.1,629.8 L149.3,629.4 L147.5,628.7 L146.0,627.4 L145.7,625.4 L144.0,626.0 L142.6,627.1 L141.2,628.0 L140.7,628.4 M149.7,589.2 L150.8,588.6 L152.9,588.3 L155.0,588.0 L156.4,586.2 L158.4,585.4 L160.0,584.0 L161.7,582.8 M161.7,582.8 L158.8,582.5 L155.9,582.4 L155.6,580.7 L154.0,579.9 L152.5,579.5 L151.9,579.3 M184.0,685.2 L184.5,685.3 L185.4,683.2 L185.8,681.0 L187.8,681.6 L189.9,681.6 L191.9,682.5 L193.0,684.4 M193.0,684.4 L191.5,683.2 L191.1,681.3 L190.2,679.7 L188.6,678.7 L190.3,677.4 L190.0,675.4 L191.3,674.1 L192.1,672.4 M192.1,672.4 L191.8,670.0 L192.4,667.6 L191.3,665.5 L191.2,663.0 L189.2,661.6 L187.8,659.5 L185.4,659.2 L183.1,658.2 M183.1,658.2 L181.4,657.8 L179.8,657.1 L178.8,655.8 L177.4,654.8 L175.9,653.9 L174.1,653.5 L174.2,651.4 L172.3,650.5 M151.1,629.8 L151.2,627.6 L150.0,625.7 L148.1,624.7 L146.9,622.8 L146.7,620.7 L145.1,619.2 L144.8,617.1 L143.7,615.4 L144.4,614.1 L145.0,612.7 L146.5,612.9 L148.0,612.9 L150.2,611.9 L152.6,611.3 L152.9,608.7 L153.4,606.2 L151.5,604.2 L151.8,601.4 M151.8,601.4 L150.5,599.0 L147.9,597.8 L147.2,597.6 M151.8,601.4 L154.4,600.3 L156.9,598.8 L158.6,599.5 L160.3,598.8 L160.4,597.0 L161.5,595.5 M161.5,595.5 L161.9,593.6 L163.5,592.5 L162.6,590.8 L161.8,589.2 L161.8,587.4 L163.2,586.4 L165.1,585.8 L165.3,583.9 M165.3,583.9 L163.4,583.7 L161.7,582.8 M165.3,583.9 L166.9,583.0 L168.7,582.8 M168.7,582.8 L168.6,580.6 L167.1,578.9 L168.0,576.8 L170.0,575.7 L170.4,573.9 L171.7,572.5 L173.5,571.6 L174.1,569.7 L176.7,569.6 L178.9,570.9 L180.5,569.0 L181.8,566.8 L181.9,564.6 L181.1,562.6 L182.3,560.8 L182.8,558.6 M182.8,558.6 L181.0,557.2 L179.4,555.8 M156.4,631.4 L157.1,630.0 L158.1,628.8 L157.5,627.3 L157.2,625.7 L157.9,624.2 L159.2,623.4 L160.7,623.2 L162.2,622.8 L161.8,620.0 L161.1,617.2 L163.1,615.1 L164.3,612.5 M164.3,612.5 L164.3,609.9 L165.8,607.8 L163.6,606.4 L162.6,604.1 L164.9,602.3 L164.9,599.4 L164.3,597.9 L164.4,596.4 L162.7,596.7 L161.5,595.5 M172.2,646.0 L173.8,645.3 L175.7,645.2 L176.3,643.5 L177.1,641.9 L178.0,640.4 L178.9,639.0 L180.5,638.3 L182.3,638.0 M182.3,638.0 L183.5,636.0 L185.4,634.7 L186.2,632.6 L187.1,630.4 L186.8,628.0 L187.9,625.9 L188.6,623.6 L187.3,621.4 L188.0,619.0 L189.7,617.2 L191.2,614.7 L189.4,612.4 L186.6,611.7 L184.5,609.8 L185.2,607.1 L184.9,604.3 M184.9,604.3 L182.0,605.0 L179.2,604.5 L177.6,603.7 L176.1,604.5 L175.1,605.6 L173.9,606.6 L172.2,606.6 L171.1,607.7 L170.3,609.0 L169.5,610.3 L167.0,611.6 L164.3,612.5 M182.8,558.6 L183.0,558.6 M183.0,558.6 L184.3,559.7 L186.1,559.7 L186.8,558.3 L188.1,557.2 L190.0,555.2 L190.8,552.6 M190.8,552.6 L192.3,551.7 L193.7,550.6 L195.2,549.5 L196.1,548.0 L196.4,546.2 L196.5,545.7 M184.9,604.3 L186.8,602.3 L187.6,599.6 M187.6,599.6 L186.5,597.9 L187.2,596.1 L185.9,594.8 L185.9,592.9 L184.9,591.4 L183.8,590.1 L182.7,588.7 L181.3,587.7 L180.4,585.9 L179.0,584.4 L177.2,585.2 L175.1,585.0 L173.1,585.1 L172.1,583.4 L170.4,583.3 L168.7,582.8 M187.6,599.6 L188.5,598.0 L190.2,597.4 L191.2,599.1 L193.2,599.1 L194.9,599.0 L195.9,597.7 L197.3,598.4 L198.8,598.5 M198.8,598.5 L199.6,596.1 L199.3,593.6 L201.1,591.9 L202.6,590.0 L205.4,589.4 L207.9,587.8 L207.5,585.0 L207.7,582.1 M207.7,582.1 L208.5,579.7 L208.1,577.3 L206.4,575.3 L206.1,572.8 L203.8,571.9 L201.5,571.0 L200.0,569.0 L198.6,567.0 L196.0,568.1 L193.8,566.3 L191.9,564.7 L191.0,562.4 L188.6,562.9 L186.4,561.8 L184.5,560.4 L183.0,558.6 M183.1,658.2 L184.7,657.5 L186.1,658.5 L187.0,657.0 L188.7,656.8 L191.5,656.1 L194.2,655.0 L197.2,655.5 L200.1,655.4 L201.5,656.1 L202.5,657.2 L203.8,658.0 L205.4,658.2 M205.4,658.2 L207.8,657.6 L210.3,657.9 L211.6,659.1 L213.2,658.3 L212.8,660.0 L213.9,661.3 L216.7,661.7 L218.2,659.2 L219.9,657.4 L220.3,654.9 M220.3,654.9 L220.9,654.0 M220.9,654.0 L220.8,652.2 M220.8,652.2 L219.5,650.1 L218.1,648.0 L215.7,646.5 L213.1,647.4 L210.8,646.9 L208.7,646.0 L206.6,647.6 L204.1,646.7 L202.4,644.9 L200.3,643.8 L197.9,642.0 L198.8,639.2 L196.4,639.3 L194.0,638.7 L192.2,637.1 L190.5,635.4 M190.5,635.4 L188.5,636.3 L186.4,636.7 L184.2,636.9 L182.3,638.0 M193.4,696.3 L193.7,695.7 L195.5,693.4 L195.5,691.7 L196.8,690.7 L196.2,689.2 L196.7,687.6 M196.7,687.6 L194.8,686.0 L193.0,684.4 M190.8,552.6 L192.6,553.3 L194.4,553.9 L196.4,554.5 L197.0,556.6 L199.4,555.5 L201.5,557.2 L203.0,555.5 L203.6,553.2 L205.4,552.5 L206.8,551.1 L209.1,551.4 L210.2,549.4 L211.2,551.4 L213.4,551.5 L215.3,552.3 L216.3,554.1 M216.3,554.1 L216.4,552.5 L216.3,550.9 L216.0,549.3 L216.5,547.7 L217.0,545.7 L217.1,545.6 M215.2,541.2 L213.1,540.4 L211.3,538.6 L208.8,537.8 L207.6,535.4 L204.9,534.9 L203.2,534.0 M190.5,635.4 L192.6,634.1 L194.7,635.3 L195.4,637.7 L197.9,638.0 L198.7,635.9 L200.9,635.4 L202.6,634.2 L203.5,632.4 L202.6,630.1 L204.1,628.3 L203.6,626.2 L202.7,624.3 L204.8,624.4 L206.6,623.1 L208.2,621.9 L210.0,620.8 M210.0,620.8 L210.5,617.9 L211.1,615.0 M211.1,615.0 L209.5,614.7 L208.0,614.2 L206.4,615.0 L204.8,614.4 L203.4,613.3 L202.3,611.9 L201.3,610.0 L202.7,608.4 L203.4,605.6 L202.2,602.9 L200.2,600.9 L198.8,598.5 M196.7,687.6 L198.1,688.6 L199.9,688.6 L201.6,688.5 L203.2,688.4 M203.2,688.4 L204.8,686.7 L205.1,684.5 L206.6,682.9 L207.7,681.0 L208.2,678.8 L207.8,676.5 L207.6,674.1 L205.6,672.7 M205.6,672.7 L205.5,672.6 M205.5,672.6 L203.9,673.8 L202.0,673.4 L200.4,672.5 L198.8,671.7 L197.3,673.0 L195.7,674.2 L193.8,673.4 L192.1,672.4 M211.1,615.0 L213.1,614.1 L215.2,613.2 M215.2,613.2 L217.7,612.7 L219.3,610.7 L220.3,608.6 L220.8,606.3 L223.3,606.1 L225.0,604.3 L227.3,603.3 L228.0,600.9 M228.0,600.9 L226.2,599.7 L224.7,598.0 L223.3,596.1 L223.8,593.8 M223.8,593.8 L222.5,591.8 L220.5,590.5 L221.8,588.3 L220.7,585.9 L219.0,584.6 L217.0,583.9 L215.3,582.7 L213.6,581.4 M213.6,581.4 L211.7,580.9 M211.7,580.9 L209.7,581.6 L207.7,582.1 M213.0,691.8 L212.7,690.8 M212.7,690.8 L212.6,690.7 M212.6,690.7 L210.4,689.3 L208.3,687.8 L205.7,687.1 L203.2,688.4 M212.6,690.7 L210.9,688.5 L210.9,685.8 L210.0,683.3 L209.0,680.9 L210.9,679.1 L212.9,677.5 L214.0,674.8 L216.6,673.8 M216.6,673.8 L215.8,675.5 L213.9,675.8 L212.5,676.9 L210.7,677.1 L208.6,677.1 L206.6,676.7 L207.3,674.3 L205.6,672.7 M220.8,652.2 L221.5,649.4 L220.8,646.7 L221.9,644.0 L224.4,642.5 M224.4,642.5 L224.3,640.2 L226.3,639.0 L224.9,637.6 L223.7,635.9 M223.7,635.9 L221.3,634.4 L221.0,631.5 L220.2,628.8 L217.5,627.8 L215.3,626.4 L213.6,624.4 L212.7,621.7 L210.0,620.8 M205.5,672.6 L204.8,670.8 L205.3,668.9 L205.9,667.1 L206.5,665.4 L206.2,662.9 L208.1,661.4 L206.6,659.9 L205.4,658.2 M211.7,580.9 L211.7,578.9 L210.1,577.6 L210.6,575.8 L211.7,574.3 L212.1,572.7 L212.3,571.1 L212.5,569.4 L213.2,567.9 L215.4,569.6 L218.0,568.5 L219.6,566.6 L220.3,564.2 L221.4,562.3 L221.0,560.1 L220.6,558.0 L219.3,556.3 M219.3,556.3 L218.0,554.9 L216.3,554.1 M216.6,673.8 L218.1,673.0 L219.0,671.5 M219.0,671.5 L217.5,669.4 L215.3,668.0 L215.0,665.4 L215.4,662.9 L216.0,660.5 L217.8,658.9 L219.1,656.9 L220.3,654.9 M213.0,691.7 L213.0,691.0 M213.0,691.0 L212.7,690.8 M219.0,671.5 L220.5,672.1 L222.1,672.2 L223.5,671.5 L224.8,670.5 L227.4,671.9 L230.3,672.2 L232.0,672.4 L233.3,673.3 L234.2,674.7 L234.2,676.4 L235.5,678.9 L237.6,680.9 M237.6,680.9 L239.2,680.9 M239.2,680.9 L239.8,678.0 L242.1,676.1 L242.9,673.4 L242.8,670.5 M242.8,670.5 L242.4,668.9 L241.2,667.7 L242.1,666.4 L242.8,665.0 L240.8,662.9 L238.7,661.2 M238.7,661.2 L236.4,659.3 M236.4,659.3 L234.1,659.4 L232.4,657.8 L231.3,655.8 L229.2,655.0 L226.9,654.6 L225.2,653.1 L223.0,653.1 L220.9,654.0 M213.0,691.0 L214.5,690.6 L215.7,689.5 L217.1,690.2 L218.7,690.1 L220.0,691.0 L221.6,691.2 L223.0,690.4 L224.6,690.2 M224.6,690.2 L224.4,687.8 L225.3,685.5 L228.0,685.6 L229.6,683.4 L232.1,683.5 L234.4,684.7 L234.8,681.7 L237.6,680.9 M205.8,529.6 L206.2,529.9 L207.8,531.0 L209.6,530.4 L211.1,530.6 M219.3,556.3 L221.4,556.0 L222.2,555.9 M227.0,692.1 L226.1,691.4 L224.6,690.2 M223.7,635.9 L224.9,633.2 L224.1,630.3 L226.4,628.8 L228.5,627.0 L230.5,625.0 L233.2,624.5 L235.8,624.9 L238.5,624.8 M238.5,624.8 L238.9,622.2 L240.3,620.1 M240.3,620.1 L238.0,619.3 L236.3,621.1 L234.8,622.6 L233.7,624.4 L231.8,623.1 L229.8,623.9 L227.8,624.1 L225.8,623.9 L225.2,621.7 L224.8,619.5 L224.7,617.2 L224.0,615.0 L221.7,614.8 L219.6,614.1 L217.4,613.5 L215.2,613.2 M228.7,563.1 L227.8,564.4 L230.0,565.4 L231.0,565.4 M213.6,581.4 L214.3,580.1 L215.3,579.0 L216.8,578.7 L218.3,578.8 L221.0,578.9 L223.7,579.4 L226.5,580.0 L229.3,580.9 L231.8,579.4 L233.8,577.3 M233.8,577.3 L233.6,575.0 L234.1,572.8 L234.7,570.6 L235.2,569.6 M223.8,593.8 L224.4,592.2 L223.9,590.7 L225.2,589.9 L226.0,588.5 L226.0,585.7 L226.8,583.0 L229.4,581.3 L232.3,580.7 L235.2,581.3 L238.0,582.1 M238.0,582.1 L237.2,580.7 L235.7,579.9 L234.8,578.6 L233.8,577.3 M236.4,659.3 L236.8,657.7 L235.9,656.3 L236.8,654.9 L238.4,654.5 L240.5,653.0 L242.7,651.6 L243.2,648.9 L245.6,647.4 L245.6,644.9 L246.1,642.3 M246.1,642.3 L245.1,643.7 L243.6,644.1 L242.2,645.1 L240.6,645.1 L239.2,645.9 L238.1,647.0 L236.8,647.8 L235.3,648.3 L234.1,647.3 L233.0,646.0 L231.9,644.8 L230.8,643.7 L229.3,642.7 L227.6,643.3 L226.0,642.9 L224.4,642.5 M249.0,695.8 L249.9,694.6 M249.9,694.6 L248.1,692.5 L245.4,692.9 L244.2,690.7 L243.8,688.3 L243.5,686.0 L242.9,683.8 L240.4,683.1 L239.2,680.9 M240.3,620.1 L242.8,618.7 L245.2,617.1 L245.3,615.5 L245.9,614.0 L247.5,613.6 L248.6,612.4 M248.6,612.4 L249.0,611.3 M249.0,611.3 L247.2,609.8 L245.0,609.0 L242.8,609.7 L240.5,609.2 L239.0,607.3 L238.0,605.3 L237.5,602.9 L238.3,600.7 M238.3,600.7 L235.6,600.5 L233.2,601.8 L230.5,601.7 L228.0,600.9 M238.3,600.7 L239.5,598.7 L238.9,596.5 L238.3,594.4 L237.7,592.4 L237.7,590.1 L239.5,588.7 L240.3,586.8 L241.0,584.8 M241.0,584.8 L239.8,583.1 L238.0,582.1 M241.0,584.8 L242.7,582.9 L245.1,583.9 M245.1,583.9 L246.5,583.2 L247.7,582.2 L248.2,580.7 L248.9,579.4 L249.1,577.8 L248.6,576.4 L249.3,575.0 L249.6,573.5 L250.9,572.6 L252.3,572.0 L252.5,570.5 L252.7,569.9 M246.1,642.3 L247.6,641.8 M247.6,641.8 L246.9,640.1 L247.6,638.4 L245.8,637.6 L245.6,635.6 L243.9,635.8 L242.3,636.4 L240.8,635.4 L239.1,635.4 L239.1,632.6 L240.4,630.0 L239.8,627.3 L238.5,624.8 M247.6,641.8 L249.5,643.3 L251.1,645.1 L253.4,644.3 L255.4,643.0 M255.4,643.0 L256.1,640.2 L258.1,638.1 L258.8,635.3 L258.7,632.5 M258.7,632.5 L257.5,631.3 L256.9,629.7 L257.2,628.1 L257.4,626.5 L255.8,626.0 L255.0,624.5 L253.8,623.5 L252.2,623.2 L252.7,621.5 L253.2,619.9 L252.7,618.0 L254.1,616.6 L252.7,615.3 L250.8,615.3 L250.6,613.2 L248.6,612.4 M238.7,661.2 L240.1,660.2 L241.9,660.0 L242.8,658.5 L243.6,657.0 L245.2,657.2 L246.8,657.4 L248.4,657.0 L250.0,656.8 L250.9,655.4 L252.5,655.0 L253.4,653.7 L254.5,652.7 L256.4,652.8 L258.2,652.9 L259.3,651.3 L259.7,649.4 M259.7,649.4 L259.8,647.2 L258.0,645.9 L256.9,644.3 L255.4,643.0 M249.0,611.3 L251.0,610.0 L251.9,607.7 L252.8,605.6 L253.5,603.4 L255.3,605.2 L257.7,605.8 L260.2,605.6 L262.5,604.9 M262.5,604.9 L263.2,602.6 L262.6,600.3 L263.7,598.3 L264.3,596.1 M264.3,596.1 L262.6,594.0 L261.5,591.4 L260.1,590.9 L258.7,590.5 L257.7,589.2 L257.7,587.6 M257.7,587.6 L256.3,586.4 L255.1,585.0 L254.3,583.1 L252.3,582.7 L250.2,583.3 L248.5,581.9 L246.4,582.3 L245.1,583.9 M242.8,670.5 L244.0,668.4 L246.3,668.8 L248.3,668.7 L250.3,668.3 M250.3,668.3 L252.4,667.6 L254.5,666.8 L257.0,666.4 L258.3,664.3 L258.4,661.8 L260.4,660.2 L261.9,658.5 L263.7,657.1 M263.7,657.1 L262.6,654.8 L263.1,652.3 M263.1,652.3 L261.8,650.4 L259.7,649.4 M268.7,563.9 L268.9,564.2 L270.7,564.4 L271.9,563.0 L273.2,562.0 L274.1,560.6 M274.1,560.6 L274.3,559.0 L274.3,557.3 L275.2,555.9 L275.7,554.4 L276.0,552.7 L275.7,551.1 L274.9,550.6 M249.9,694.6 L252.4,694.2 L253.7,692.1 L256.1,691.3 L257.0,688.9 L259.3,689.2 L261.5,688.3 L263.9,688.3 L265.8,686.8 M265.8,686.8 L266.5,684.6 M266.5,684.6 L265.2,683.5 L264.6,681.9 L264.6,680.2 L263.6,678.8 L261.9,678.0 L260.3,679.1 L258.9,678.0 L257.2,677.6 L257.2,676.0 L256.7,674.4 L255.3,673.5 L253.8,673.0 L252.3,670.4 L250.3,668.3 M258.7,632.5 L259.3,630.9 L261.0,630.6 L262.5,630.4 L264.1,630.4 M264.1,630.4 L264.0,627.4 L266.3,625.6 L268.2,623.7 L270.5,622.3 L270.8,619.6 L272.5,617.5 L271.7,614.7 L273.6,612.5 M273.6,612.5 L273.4,610.3 L273.8,608.1 L271.5,607.6 L269.9,605.9 L268.1,605.6 L266.3,605.3 L264.5,604.7 L262.5,604.9 M263.1,652.3 L264.8,652.8 L266.5,652.3 L268.3,651.9 L269.3,650.3 L269.7,648.4 L271.5,647.8 L272.6,646.2 L274.6,646.6 M274.6,646.6 L274.2,644.1 L274.5,641.7 L277.1,641.2 L278.6,639.0 M278.6,639.0 L277.6,636.3 L278.5,633.5 M278.5,633.5 L276.5,633.1 L274.6,633.5 L273.3,631.9 L271.5,631.0 L269.5,631.3 L267.8,630.2 L265.9,630.4 L264.1,630.4 M266.5,684.6 L265.7,681.9 L267.3,679.5 L269.8,678.6 L271.3,676.3 M271.3,676.3 L270.7,674.6 L271.5,673.0 L269.9,672.4 L268.9,671.1 L268.9,668.2 L269.0,665.3 M269.0,665.3 L267.8,663.1 L265.8,661.6 L265.1,659.2 L263.7,657.1 M257.7,587.6 L258.3,585.8 L256.9,584.6 L257.3,583.0 L257.1,581.4 L258.2,580.3 L258.6,578.7 L259.4,577.4 L260.1,576.0 L260.6,574.3 L259.4,572.9 L259.9,571.4 L259.6,569.8 L260.5,568.5 L260.7,567.3 M266.1,712.5 L265.6,712.0 L265.9,710.1 L265.5,708.2 L266.1,706.4 L265.8,704.4 L266.7,703.0 L267.2,701.3 L267.6,699.6 L268.6,698.2 L268.1,696.2 L269.0,694.4 L269.9,692.3 L272.2,692.4 M272.2,692.4 L270.2,691.2 L268.0,690.7 L265.9,689.3 L265.8,686.8 M264.3,596.1 L265.3,593.4 L266.9,591.2 L269.5,590.0 L270.9,587.4 L273.7,587.1 L276.6,586.9 L279.3,585.7 L280.9,583.2 M280.9,583.2 L279.5,581.1 L278.1,579.0 L279.4,576.9 L281.1,575.0 L280.7,572.8 L282.0,570.9 L282.9,568.5 L280.9,566.9 M280.9,566.9 L279.4,565.1 L277.7,563.5 L275.5,562.5 L274.1,560.6 M273.6,612.5 L275.9,611.9 L278.3,612.5 L280.6,613.1 L282.2,615.0 M282.2,615.0 L283.5,612.9 L285.6,611.5 M285.6,611.5 L287.3,609.9 L288.1,607.7 L290.3,607.0 L291.8,605.1 L292.6,603.0 L293.7,601.1 L294.7,599.1 L295.2,596.9 M295.2,596.9 L294.1,594.4 L291.6,593.3 L288.9,593.0 L286.9,591.2 L284.8,589.3 L282.1,588.5 L280.5,587.8 L279.6,586.3 L280.6,584.9 L280.9,583.2 M272.2,692.4 L274.4,691.6 L276.7,692.2 L278.0,694.1 L278.4,696.4 L280.5,696.8 L281.5,698.7 L282.4,700.3 L283.2,702.0 L285.1,702.6 L287.0,702.4 L289.1,702.4 L290.5,700.8 L292.3,700.7 L294.1,700.4 L296.0,700.6 L297.8,700.3 M297.8,700.3 L299.0,699.1 L299.1,697.5 L299.5,696.0 L299.6,694.5 M299.6,694.5 L300.2,691.9 L299.3,689.5 L299.9,686.7 L298.0,684.6 L296.1,682.8 L295.6,680.3 L294.9,677.8 L294.4,675.4 M294.4,675.4 L293.1,676.6 L291.6,677.4 L290.5,679.2 L288.5,678.8 L287.3,680.5 L285.2,680.2 L283.3,680.9 L283.1,683.0 L281.4,682.5 L279.6,682.6 L278.1,681.6 L276.4,681.1 L274.2,681.2 L272.2,680.4 L272.3,678.2 L271.3,676.3 M280.9,566.9 L282.4,564.7 L284.7,563.2 L287.3,563.6 L289.9,563.2 L291.0,564.3 L291.4,565.8 L292.9,565.5 L294.4,565.5 L297.0,565.7 L299.5,565.0 M299.5,565.0 L297.7,564.3 L296.8,562.5 L295.9,560.9 L295.4,559.1 L296.1,557.4 L297.5,556.2 L298.7,554.9 L299.5,553.3 L299.7,551.5 L300.8,550.0 L302.0,548.7 L303.3,547.5 L302.2,546.0 L302.3,544.1 L300.9,543.0 L299.7,541.6 M299.7,541.6 L297.9,540.8 L296.4,539.6 L295.4,537.5 L293.0,537.6 M293.0,537.6 L290.4,537.5 L287.7,537.9 L285.1,538.1 L282.5,538.3 L280.3,539.9 L278.9,542.1 L277.0,544.0 L275.6,545.3 M293.0,537.6 L292.8,534.7 L291.7,532.0 L291.7,530.6 M269.0,665.3 L269.5,663.5 L270.3,661.8 L272.2,661.6 L273.8,660.6 L275.3,659.8 L276.4,658.5 L277.9,657.1 L279.8,657.8 L281.5,658.4 L283.1,657.5 L284.7,657.0 L286.4,656.8 L287.6,654.9 L290.0,655.2 L291.6,656.4 L292.9,657.8 M292.9,657.8 L291.3,657.2 L289.7,656.6 L289.9,654.8 L288.8,653.3 L288.1,651.9 L287.8,650.4 L287.6,648.8 L286.6,647.6 L284.9,647.8 L283.3,647.2 L282.2,648.6 L280.4,648.9 L278.8,648.8 L277.2,648.4 L276.0,647.4 L274.6,646.6 M278.5,633.5 L278.9,631.7 L278.9,629.8 L280.1,627.9 L282.4,628.4 L282.9,626.8 L283.6,625.4 L284.6,624.0 L284.7,622.3 M284.7,622.3 L284.7,620.3 L284.6,618.3 L283.6,616.5 L282.2,615.0 M297.1,717.4 L298.3,717.2 L300.7,717.2 M300.7,717.2 L298.3,716.0 L298.6,713.3 L299.8,710.9 L297.9,709.0 L297.8,706.6 L299.2,704.6 L297.7,702.7 L297.8,700.3 M303.1,722.2 L302.8,721.0 L303.4,718.4 M303.4,718.4 L300.7,717.2 M292.9,657.8 L294.6,658.4 L296.2,659.4 L298.0,660.0 L299.8,659.2 M299.8,659.2 L300.0,657.1 L300.9,655.1 L301.8,652.9 L300.5,650.8 L298.3,649.9 L297.9,647.5 L297.5,645.4 L296.9,643.3 M296.9,643.3 L294.8,645.3 L291.9,644.9 L289.2,644.3 L287.5,642.0 L285.4,641.1 L283.3,640.0 L281.0,639.1 L278.6,639.0 M294.4,675.4 L294.0,672.8 L292.0,670.9 L294.1,669.0 L293.7,666.2 L295.8,665.1 L298.0,664.1 L299.5,662.3 L300.8,660.3 M300.8,660.3 L299.8,659.2 M296.9,643.3 L296.2,641.5 L295.1,639.9 L297.0,638.6 L296.6,636.3 L297.8,634.8 L297.8,632.9 L298.9,631.4 L300.5,630.5 M300.5,630.5 L297.9,629.0 L297.4,626.0 L296.3,623.5 L295.5,620.9 L294.6,622.3 L292.9,622.4 L291.8,620.9 L290.1,621.4 L287.5,622.4 L284.7,622.3 M300.8,660.3 L302.9,659.7 L304.9,660.5 L307.0,660.9 L308.9,659.9 M308.9,659.9 L309.4,659.5 M309.4,659.5 L310.2,657.7 L312.0,657.1 L313.6,656.1 L314.3,654.3 L314.8,652.4 L313.6,650.8 L313.7,649.0 L314.3,647.2 L316.0,646.6 L317.7,646.1 L319.2,645.1 L320.2,643.5 L321.9,642.5 L322.6,640.7 L322.2,638.8 L322.5,637.0 M322.5,637.0 L320.6,636.7 L318.9,637.5 L317.5,638.8 L316.7,640.4 L316.5,638.3 L314.5,637.7 L313.2,636.5 L311.4,636.1 L308.8,635.0 L306.2,633.9 L304.6,631.4 L302.2,629.9 M302.2,629.9 L300.5,630.5 M295.2,596.9 L296.1,598.7 L298.2,598.9 L300.1,598.4 L301.9,598.9 L303.5,597.9 L304.8,596.6 L306.6,596.7 L308.3,595.8 M308.3,595.8 L308.6,593.9 L308.4,592.0 L309.2,590.3 L309.6,588.4 L309.7,586.5 L310.1,584.5 L309.6,582.5 L307.9,581.2 L307.6,579.2 L308.6,577.4 L308.3,575.4 L306.8,574.0 L305.6,572.3 L306.5,570.4 L307.2,568.3 L305.5,566.8 M305.5,566.8 L304.7,566.5 M304.7,566.5 L303.2,567.3 L301.6,567.5 L301.1,565.9 L299.5,565.0 M302.2,629.9 L302.8,628.2 L304.1,626.8 L304.8,625.1 L304.4,623.2 L305.5,621.7 L307.0,620.7 L307.2,618.8 L307.7,617.1 M307.7,617.1 L304.8,617.2 L301.8,617.3 L300.4,616.5 L299.1,615.5 L297.9,617.1 L296.0,616.7 L294.6,616.0 L293.1,616.0 L292.7,614.2 L290.9,614.0 L288.3,612.6 L285.6,611.5 M299.7,541.6 L299.7,539.8 L300.9,538.5 L302.6,538.6 L304.2,537.8 L305.0,539.4 L305.7,541.0 L307.5,541.3 L309.2,540.7 M309.2,540.7 L310.3,540.4 M310.3,540.4 L312.0,538.6 L312.7,536.2 L314.6,534.4 L314.7,531.8 M314.7,531.8 L312.9,531.8 L311.4,530.8 L310.2,529.4 L308.5,528.9 M303.4,718.4 L303.4,718.5 M303.4,718.5 L302.3,717.2 L300.8,716.2 L300.5,714.5 L300.0,712.9 L301.4,711.4 L303.3,710.6 L302.5,708.8 L302.3,706.8 L303.2,705.2 L303.8,703.5 L305.5,703.9 L307.3,703.7 L308.9,703.7 L310.3,703.1 L311.3,702.0 L312.6,701.1 L315.2,702.1 L316.8,704.3 L319.5,703.9 L322.0,705.1 L322.8,703.7 L324.0,702.6 L325.8,702.6 L326.6,700.9 L328.1,701.5 L329.3,702.4 L330.8,702.9 L332.1,703.9 M332.1,703.9 L330.7,703.0 L329.2,702.4 L329.1,700.7 L328.0,699.3 L329.1,698.2 L329.9,696.9 L330.0,695.3 L330.9,694.0 L329.4,693.2 L328.0,692.4 L328.3,690.8 L328.5,689.2 L329.4,686.6 L330.3,684.1 M330.3,684.1 L328.7,682.0 M328.7,682.0 L326.4,681.5 M326.4,681.5 L325.3,683.0 L323.9,684.4 L322.5,685.8 L320.9,686.8 L320.3,689.0 L318.2,689.8 L316.2,689.9 L314.3,690.8 L312.5,689.7 L310.4,689.7 L308.6,690.7 L306.7,691.5 L305.1,693.0 L303.9,694.8 L301.8,693.9 L299.6,694.5 M320.7,741.2 L320.7,741.0 L322.1,738.9 M322.1,738.9 L320.3,737.7 L319.5,735.7 L318.7,733.8 L317.4,732.2 L317.4,730.0 L318.6,728.1 L319.4,725.9 L317.9,724.0 L316.3,722.2 L314.1,723.0 L312.1,722.3 L310.9,720.7 L308.7,721.3 L307.1,719.7 L305.3,718.9 L303.4,718.5 M307.7,617.1 L308.9,614.9 L310.7,613.3 M310.7,613.3 L310.6,611.2 L310.0,609.2 L310.0,607.2 L309.7,605.1 L308.4,603.1 L307.8,600.8 L308.1,598.0 L310.6,597.0 M310.6,597.0 L308.3,595.8 M326.4,681.5 L324.3,682.0 L322.1,682.5 L319.8,682.6 L318.1,680.9 L316.4,679.3 L314.0,679.2 L314.1,676.7 L312.1,675.1 L311.6,672.9 L313.1,671.2 L313.5,668.9 L311.9,667.2 L311.4,665.3 L310.8,663.4 L309.9,661.7 L308.9,659.9 M314.7,531.8 L316.3,532.4 L317.4,531.9 M305.5,566.8 L307.6,566.7 L309.0,568.0 L310.7,567.3 L312.2,566.1 L314.4,565.4 L314.5,563.0 L316.5,562.1 L318.3,563.4 M318.3,563.4 L319.6,561.7 L321.2,560.4 L322.4,558.6 L322.6,556.5 M322.6,556.5 L320.4,555.0 L321.1,552.3 M321.1,552.3 L319.4,551.1 M315.5,544.7 L314.4,544.2 L314.6,541.5 L312.4,541.3 L310.3,540.4 M309.2,540.7 L307.8,542.1 L306.0,542.8 L304.7,544.3 L303.1,545.3 L303.6,547.3 L304.6,549.1 L303.6,550.9 L303.2,552.9 L303.6,554.9 L302.8,556.7 L304.1,558.1 L305.4,559.6 L304.5,561.3 L305.5,563.1 L305.4,564.8 L304.7,566.5 M345.9,758.6 L347.0,757.9 L348.7,758.2 L349.9,757.1 L351.1,756.1 L351.4,754.4 L350.4,753.0 L351.2,750.4 L352.8,748.2 L354.9,746.6 L356.8,744.6 L358.5,742.5 L360.9,741.2 M360.9,741.2 L360.3,738.8 M360.3,738.8 L359.8,735.9 L356.8,735.4 L354.5,736.8 L352.0,735.7 L349.7,736.5 L347.6,735.2 L345.4,734.7 L343.2,735.0 M343.2,735.0 L340.5,735.6 L337.8,735.9 L336.3,735.8 L334.8,736.0 L334.2,737.5 L332.9,738.4 L330.4,736.9 L327.5,736.9 L324.8,737.9 L322.1,738.9 M322.5,637.0 L324.1,636.3 M324.1,636.3 L324.4,634.7 L324.4,633.0 L324.9,631.1 L323.7,629.7 L324.9,627.9 L323.7,626.2 L324.8,624.8 L326.1,623.6 M326.1,623.6 L324.1,622.2 L322.9,620.2 L320.7,619.2 L319.0,617.5 L316.7,616.7 L315.0,615.2 L312.3,615.4 L310.7,613.3 M310.6,597.0 L313.5,596.7 L316.4,596.1 M316.4,596.1 L318.0,594.6 L320.0,593.8 L319.2,591.8 L319.7,589.6 L317.6,588.7 L317.8,586.4 L317.4,584.6 L317.7,582.7 L317.7,580.5 L318.4,578.5 L317.5,576.5 L316.7,574.5 L318.4,573.3 L320.3,572.4 L321.6,570.3 L324.1,570.8 M324.1,570.8 L322.1,568.8 L322.7,566.0 L320.0,565.5 L318.3,563.4 M321.1,552.3 L321.7,550.9 M309.4,659.5 L311.2,657.6 L313.0,655.6 L315.8,656.7 L318.3,655.0 L320.5,653.8 L322.8,652.7 L323.8,650.3 L326.0,648.8 L328.8,649.2 L331.1,650.7 L331.3,652.2 L331.4,653.7 L332.5,654.8 L333.8,655.5 L336.4,655.5 L339.0,655.7 L341.5,656.4 L344.1,656.8 M344.1,656.8 L345.3,655.4 L344.9,653.6 L346.7,654.7 L348.2,653.4 M348.2,653.4 L349.9,652.6 L349.8,650.8 L350.1,648.9 L348.5,648.0 M348.5,648.0 L346.7,649.0 L344.7,649.5 L343.0,647.7 L340.8,648.7 L339.8,647.1 L338.5,645.6 L336.8,644.5 L336.1,642.7 L334.5,641.9 L333.0,640.9 L331.2,641.0 L329.5,640.6 L327.4,639.9 L325.3,640.3 L325.9,638.0 L324.1,636.3 M324.1,570.8 L324.9,573.3 L326.8,575.1 L328.5,577.1 L330.7,578.5 L332.7,580.5 L335.6,580.3 L338.3,580.4 L340.8,579.5 M340.8,579.5 L342.0,577.3 L343.5,575.4 L344.5,573.2 L345.7,571.1 L347.7,569.6 L349.3,567.8 L351.3,566.3 L352.4,564.0 M352.4,564.0 L353.1,562.5 L352.4,561.0 M326.9,557.3 L324.9,557.7 L322.6,556.5 M326.1,623.6 L326.8,621.8 L328.7,621.1 L328.2,619.1 L329.9,617.8 L330.5,616.0 L332.2,615.1 L333.0,613.6 L333.5,611.9 L335.2,611.2 L336.2,609.6 L337.1,608.0 L338.4,606.8 L340.3,607.2 L342.0,606.1 L343.4,605.1 L345.1,604.4 M345.1,604.4 L342.8,604.5 L341.9,602.4 L341.0,600.6 L340.2,598.9 M340.2,598.9 L338.1,599.0 L336.5,597.6 L336.8,595.2 L334.6,594.2 L332.6,594.2 L330.7,594.8 L330.5,597.0 L328.3,597.8 L326.6,597.5 L325.0,596.9 L324.0,595.6 L322.7,594.5 L320.9,594.4 L319.2,593.7 L317.2,594.1 L316.4,596.1 M343.2,735.0 L341.3,734.6 L339.5,734.1 L337.5,735.0 L337.3,737.2 L335.5,737.0 L334.3,735.6 L333.6,734.1 L333.2,732.4 L332.8,729.8 L331.2,727.7 L331.4,724.8 L329.4,722.9 L329.2,720.3 L330.5,718.1 L330.7,715.6 L329.5,713.4 L329.5,710.8 L331.3,708.9 L333.3,707.4 L334.2,705.1 M334.2,705.1 L332.1,703.9 M328.7,682.0 L329.0,679.9 L330.9,679.0 L332.5,677.7 L332.6,675.6 L331.2,673.7 L331.6,671.4 L333.3,670.1 L334.5,668.3 L334.7,666.0 L336.9,665.4 L338.4,664.3 L339.7,662.9 L340.2,661.0 L341.6,659.7 L342.3,657.8 L344.1,656.8 M348.5,648.0 L347.9,645.8 L349.0,643.8 L351.3,643.8 L353.0,642.2 M353.0,642.2 L353.3,639.3 L355.5,637.2 L356.5,634.6 L357.6,632.0 L357.2,630.1 L358.3,628.5 L357.5,626.9 L357.2,625.1 L358.9,624.7 L360.4,623.9 L362.3,623.9 L363.5,622.4 L361.8,621.2 L361.3,619.2 L359.3,619.0 L357.6,620.0 L357.3,618.3 L356.1,617.1 L356.3,615.5 L356.2,613.9 L355.9,612.2 L355.7,610.6 L354.3,609.8 L352.6,609.5 L351.1,606.9 L348.4,605.8 M348.4,605.8 L347.2,604.1 L345.1,604.4 M340.2,598.9 L340.3,596.3 L341.8,594.2 L340.6,591.7 L341.6,589.2 L342.0,586.7 L341.3,584.3 L342.5,581.8 L340.8,579.5 M348.4,605.8 L351.0,606.2 L352.9,604.3 L355.1,603.4 L357.4,603.0 L360.1,602.6 L361.8,600.4 L364.5,600.3 L366.7,602.0 M366.7,602.0 L369.3,601.1 L371.1,598.9 L370.0,597.7 L370.4,596.0 L371.6,595.1 L372.4,593.7 L371.3,591.4 L369.9,589.2 L369.0,586.7 L369.7,584.1 M369.7,584.1 L368.1,582.9 L367.1,581.2 L365.1,579.8 L365.8,577.5 L365.3,575.6 L366.0,573.7 L367.3,571.8 L365.9,569.9 L365.2,568.9 M363.3,568.0 L361.8,568.4 L360.7,566.5 L360.3,564.3 L358.2,563.8 L356.3,564.8 L354.4,564.2 L352.4,564.0 M334.2,705.1 L336.6,703.9 L338.8,702.4 L341.2,703.4 L343.7,704.4 M343.7,704.4 L345.0,703.0 L346.7,703.8 L348.0,702.8 L349.5,702.3 L349.8,700.6 L349.3,699.0 L349.9,697.2 L351.6,696.4 L350.3,695.4 L349.1,694.5 L348.9,692.9 L348.1,691.4 L348.1,689.7 L347.3,688.2 L348.7,687.1 L349.3,685.5 M349.3,685.5 L347.0,683.7 L344.6,685.3 L342.1,685.7 L339.8,684.8 L337.5,686.6 L335.0,685.1 L332.5,685.2 L330.3,684.1 M360.2,554.1 L361.5,554.0 L363.4,552.8 M366.6,551.4 L366.8,551.3 M349.3,685.5 L352.0,685.0 M352.0,685.0 L352.2,684.3 M352.2,684.3 L351.8,682.7 L351.0,681.2 L350.8,679.5 L351.4,677.9 L350.3,676.2 L351.1,674.4 L349.9,673.1 L348.6,672.0 L347.2,670.4 L347.5,668.4 L347.4,666.4 L348.6,664.8 L349.9,663.5 L351.6,662.8 L352.8,661.5 L354.2,660.4 M354.2,660.4 L352.7,658.4 L352.4,655.9 L349.8,655.4 L348.2,653.4 M355.0,765.9 L355.0,765.9 L354.8,764.1 L356.4,762.6 L358.1,761.3 L357.6,759.2 L356.6,757.2 L357.5,755.6 L357.1,753.7 L357.8,752.0 L358.4,750.3 L359.4,748.5 L361.5,748.1 L362.3,746.4 L362.6,744.5 M362.6,744.5 L361.1,743.2 L360.9,741.2 M360.3,738.8 L361.6,737.6 L362.0,735.9 L362.2,734.3 L362.2,732.6 L363.7,731.8 L364.7,730.6 L366.1,729.6 L367.1,728.3 M367.1,728.3 L367.7,725.5 L367.2,722.6 L367.7,721.2 L368.5,719.9 L368.2,718.4 L368.0,716.9 M368.0,716.9 L367.4,714.7 L365.8,713.0 L366.6,710.6 L365.0,708.5 M365.0,708.5 L362.4,707.3 L360.1,705.6 L359.6,704.0 L358.0,703.5 L356.6,702.9 L355.0,703.1 L353.3,702.2 L351.4,702.4 L350.7,700.6 L348.9,699.8 L347.5,701.0 L345.7,701.4 L344.6,702.8 L343.7,704.4 M354.2,660.4 L354.9,661.9 L355.1,663.5 L355.9,665.0 L357.4,665.7 L359.1,665.7 L360.4,664.8 L362.0,665.0 L363.5,664.5 L366.4,664.7 L367.8,667.2 L370.3,667.7 L372.6,668.8 M372.6,668.8 L374.8,667.2 L374.0,664.6 L374.8,662.5 L375.5,660.5 L376.8,658.1 L379.5,658.5 L381.8,659.4 L384.0,658.3 M384.0,658.3 L382.8,657.0 L381.2,656.2 L381.8,654.5 L382.3,652.8 L382.7,649.9 L381.5,647.2 L380.1,646.0 L378.8,644.8 L377.0,644.7 L375.3,644.3 L374.8,642.4 L373.7,640.8 L375.4,639.5 L375.6,637.4 M375.6,637.4 L373.9,638.2 L372.2,637.6 L371.1,638.8 L369.9,639.9 L367.8,639.2 L367.5,637.0 L365.8,637.7 L363.9,638.2 L362.4,638.7 L360.9,638.2 L359.4,638.4 L357.9,638.8 L356.8,640.1 L356.5,641.9 L354.8,642.4 L353.0,642.2 M365.0,708.5 L366.7,706.2 L365.7,703.5 M365.7,703.5 L364.6,702.2 L363.1,701.6 L363.6,700.0 L364.0,698.4 L362.1,696.3 L361.9,693.5 M361.9,693.5 L360.4,692.1 L358.3,692.2 L357.5,690.4 L357.6,688.5 L355.6,688.5 L354.8,686.7 L353.5,685.7 L352.0,685.0 M362.6,744.5 L365.3,743.4 L368.0,744.4 L368.9,745.9 L368.3,747.6 L370.1,747.2 L371.5,748.4 L373.6,749.8 L375.8,751.0 L378.3,751.5 L380.8,750.8 L379.9,752.4 L380.1,754.2 L381.6,755.2 L382.3,756.8 L381.5,758.4 L380.0,759.2 L378.6,760.6 L379.5,762.4 L380.1,764.2 L382.0,764.4 L383.5,765.3 L385.1,764.4 L387.8,765.6 L390.0,767.7 M390.0,767.7 L391.4,766.4 L391.4,764.6 L391.2,762.8 L392.2,761.3 L393.0,759.7 L394.0,758.4 L395.5,757.5 L396.5,756.1 L398.4,754.8 L400.3,756.1 L402.2,755.7 L404.1,755.7 L405.7,754.4 L405.8,752.4 L406.9,750.8 L407.9,749.2 M407.9,749.2 L408.6,747.0 L409.9,745.1 L407.6,744.1 L406.7,741.8 L406.6,739.6 L407.1,737.4 L405.5,735.9 L403.5,734.9 M403.5,734.9 L402.5,736.2 L400.8,736.3 L400.3,734.7 L398.6,734.2 L397.6,731.8 L395.2,730.6 M395.2,730.6 L393.6,732.3 L392.3,734.1 L390.1,733.5 L387.8,733.7 L385.5,734.7 L384.9,737.1 L382.7,735.9 L380.5,737.1 L380.6,734.4 L380.6,731.8 L378.0,730.8 L376.7,728.3 L374.1,728.2 L371.9,729.6 L369.3,729.7 L367.1,728.3 M361.9,693.5 L361.3,691.7 L361.9,689.9 L361.0,688.0 L362.0,686.3 L363.9,685.8 L365.3,684.6 L367.0,684.1 L368.8,683.9 L370.0,682.9 L370.9,681.7 L372.2,680.7 L372.8,679.3 L373.1,677.6 L372.3,676.1 L372.7,674.4 L373.8,673.2 M373.8,673.2 L373.2,671.4 M373.2,671.4 L371.5,670.4 L369.9,671.5 L368.5,672.2 L366.9,672.5 L365.5,673.4 L364.4,674.5 L362.7,674.9 L361.6,676.2 L359.9,676.5 L358.4,677.2 L357.1,678.5 L355.2,678.3 L355.8,680.2 L354.3,681.6 L353.1,682.9 L352.2,684.3 M373.2,671.4 L372.6,668.8 M399.3,791.5 L399.2,791.4 L398.2,789.9 L397.7,788.1 L397.9,786.3 M397.9,786.3 L396.1,784.6 L394.4,782.8 L392.4,781.4 L390.6,779.7 M390.6,779.7 L388.0,780.2 M375.6,637.4 L378.1,636.4 L380.2,634.6 L382.3,633.0 L384.1,631.0 L385.7,630.2 L387.4,630.3 L389.5,630.0 L389.9,628.0 L389.5,626.4 L388.8,624.8 L389.5,623.2 L389.0,621.5 M389.0,621.5 L388.4,619.9 L388.5,618.1 L388.7,616.4 L389.5,614.8 L388.1,613.7 L386.4,613.3 L384.7,612.6 L384.1,610.8 M384.1,610.8 L382.5,609.9 L380.6,609.6 L380.5,607.8 L380.5,606.0 L380.6,604.3 L379.3,603.2 L378.9,601.7 L378.5,600.3 L377.0,599.7 L375.5,599.2 L373.8,599.3 L372.5,600.2 L370.8,600.3 L369.2,600.0 L367.9,600.9 L366.7,602.0 M365.7,703.5 L367.7,703.2 L368.1,701.1 L369.6,700.0 L371.4,700.2 L373.1,700.5 L374.8,700.5 L375.7,698.6 L377.8,698.8 L378.5,697.1 L378.9,695.3 L380.8,695.2 L382.3,693.9 L383.0,692.5 L384.2,691.3 L385.0,689.8 L385.6,688.3 M385.6,688.3 L384.8,685.7 L384.4,683.0 M384.4,683.0 L382.3,683.1 L381.0,681.5 L379.0,681.1 L377.9,679.4 L377.8,677.4 L376.8,675.7 L374.9,675.0 L373.8,673.2 M390.6,779.7 L390.9,777.8 L392.3,776.4 L392.7,774.4 L394.5,773.5 L393.1,772.3 L391.9,770.8 L391.1,769.2 L390.0,767.7 M368.0,716.9 L368.6,719.6 L371.3,719.9 L373.6,719.5 L375.3,718.0 L377.1,718.9 L379.0,718.2 L380.8,718.5 L382.6,718.8 L383.4,717.0 L383.5,714.9 L385.4,714.2 L386.7,712.6 L386.9,710.5 L388.3,708.9 L390.3,708.6 L392.0,707.4 M392.0,707.4 L392.0,705.5 L393.1,703.8 M393.1,703.8 L393.7,701.5 L391.8,700.0 L391.7,698.0 L391.8,696.1 L390.6,694.2 L388.5,693.5 L387.8,691.6 L387.5,689.5 M387.5,689.5 L385.6,688.3 M384.4,683.0 L385.8,681.4 L387.9,681.1 L389.3,679.5 L391.3,678.8 L393.5,677.9 L393.4,675.4 L394.4,673.5 L396.3,672.5 M396.3,672.5 L396.9,669.9 L395.7,667.5 L393.2,666.7 L391.1,665.2 L389.0,664.2 L387.3,662.7 L387.1,660.2 L385.3,658.5 M385.3,658.5 L384.0,658.3 M369.7,584.1 L372.4,583.1 L373.5,580.4 L375.5,578.7 L378.0,577.6 M378.0,577.6 L377.7,575.5 L379.1,573.8 L377.8,572.3 L376.7,570.7 L378.2,569.6 L378.9,567.9 L379.2,566.1 L380.0,564.5 M375.9,552.7 L375.4,552.4 M384.1,610.8 L383.5,608.8 L381.5,608.1 L382.7,606.1 L381.3,604.4 L382.5,603.1 L383.1,601.3 L384.2,599.9 L384.5,598.1 L386.3,598.4 L387.7,597.3 L388.1,595.3 L390.2,595.0 L391.7,596.2 L393.5,595.7 L395.0,594.8 L396.5,594.1 M396.5,594.1 L395.2,593.2 L393.9,592.3 L395.1,590.9 L394.2,589.2 L395.4,587.8 L394.5,586.1 L393.2,585.4 L392.1,584.2 L391.7,582.8 L391.2,581.3 L390.1,580.2 L388.5,579.9 L385.7,579.5 L383.3,578.0 M383.3,578.0 L382.7,577.8 M382.7,577.8 L380.4,576.9 L378.0,577.6 M382.7,577.8 L384.6,576.6 L386.6,575.6 L387.3,573.6 L388.0,571.5 L387.7,570.4 M375.9,552.7 L375.4,552.4 M385.3,658.5 L386.8,656.3 L388.1,654.0 L390.7,654.5 L393.3,655.2 M393.3,655.2 L392.2,653.1 L392.4,650.7 L393.9,648.7 L396.4,648.4 L398.3,648.2 L399.9,647.1 L402.0,647.0 L403.1,645.2 L404.0,643.6 L404.1,641.7 L405.1,640.0 L404.9,638.1 L406.0,636.2 L404.6,634.4 L403.4,632.9 L402.6,631.2 M402.6,631.2 L402.1,629.4 L401.3,627.7 L400.2,626.1 L398.7,624.9 L396.9,624.8 L395.1,624.3 L393.1,624.0 L391.8,622.6 M391.8,622.6 L389.0,621.5 M387.5,689.5 L389.7,689.8 L391.6,691.1 L394.0,690.0 L395.9,691.9 L397.1,689.5 L399.7,689.9 L401.2,688.2 L403.5,687.6 M403.5,687.6 L403.0,685.4 L404.1,683.3 L405.1,681.3 L407.0,680.1 L404.7,679.0 L404.9,676.5 L403.8,674.7 L402.5,673.1 M402.5,673.1 L401.0,672.2 L399.4,672.7 L397.8,673.1 L396.3,672.5 M397.9,786.3 L399.7,785.0 L401.9,785.4 L403.4,783.9 L405.4,783.3 L407.3,782.4 L409.3,782.3 L411.2,781.3 L413.2,781.2 M413.2,781.2 L411.8,780.0 L411.6,778.2 L412.9,776.6 L411.9,774.8 L413.7,774.4 L414.7,772.9 L415.8,771.6 L416.4,770.0 L417.1,768.5 L418.7,767.9 L420.1,767.2 L421.7,767.2 L421.6,765.5 L422.5,764.1 L423.9,763.4 L424.9,762.1 M424.9,762.1 L422.7,761.9 L420.9,760.6 L419.0,759.7 L417.0,759.0 L416.2,757.0 L416.1,754.9 L415.9,752.7 L416.3,750.6 M416.3,750.6 L415.5,750.2 M415.5,750.2 L413.6,749.5 L411.8,748.5 L409.9,749.0 L407.9,749.2 M383.3,578.0 L384.5,579.8 L386.6,580.5 L388.4,579.2 L390.7,579.7 L392.5,578.8 L394.5,578.1 L395.2,576.1 L395.5,575.2 M395.2,730.6 L396.7,730.0 L398.3,729.9 L399.3,728.6 L399.6,727.0 L400.3,724.2 L399.4,721.3 L397.3,719.5 L395.8,717.1 L395.1,715.8 L394.9,714.2 L395.3,712.8 L396.3,711.6 M396.3,711.6 L395.1,710.5 L393.5,710.2 L392.0,709.2 L392.0,707.4 M403.5,734.9 L403.4,732.7 L405.5,731.9 L406.5,730.4 L407.1,728.6 L407.9,726.7 L410.1,726.5 L411.2,725.1 L412.2,723.5 M412.2,723.5 L413.0,722.2 L413.5,720.7 L412.6,719.5 L412.0,718.1 L411.1,715.5 L409.7,713.1 M409.7,713.1 L408.0,712.9 L406.2,712.9 L404.5,712.2 L403.2,711.0 L401.2,711.0 L399.6,709.8 L398.1,710.9 L396.3,711.6 M391.8,622.6 L393.2,620.6 L392.8,618.1 L394.1,616.2 L394.8,613.9 L397.3,613.4 L398.4,611.1 L398.8,608.3 L401.5,607.7 L402.8,605.2 L405.2,603.7 L407.6,604.9 L410.2,605.8 L410.7,604.4 L411.4,603.0 L412.8,602.6 L414.3,602.3 L415.0,603.6 L416.1,604.7 L417.6,605.1 L419.1,604.9 M419.1,604.9 L417.4,603.4 L416.1,601.4 L415.5,598.9 L417.1,596.9 L416.1,595.1 L415.1,593.2 L416.7,591.1 L416.4,590.7 M412.0,588.5 L411.2,590.0 L410.2,591.3 L408.6,591.0 L407.1,590.6 L405.4,589.6 L405.8,587.7 L405.0,590.3 L402.6,591.4 L400.4,592.6 L398.0,593.2 M398.0,593.2 L396.5,594.1 M402.5,673.1 L403.6,671.7 L405.1,670.6 L406.5,669.4 L408.3,668.9 M408.3,668.9 L408.2,666.2 L406.2,664.2 L407.6,662.1 L408.4,659.6 M408.4,659.6 L406.6,657.9 L404.4,658.9 L402.5,658.1 L401.1,656.5 L399.1,657.4 L397.0,656.9 L394.6,657.2 L393.3,655.2 M398.0,593.2 L397.1,590.6 L398.2,588.0 L396.6,587.6 L395.1,587.1 L394.2,585.5 L395.0,583.9 L394.4,581.2 L396.1,579.1 L396.2,578.3 M396.2,578.1 L396.3,576.6 L396.1,575.6 M421.8,805.7 L421.9,803.8 L423.7,801.5 M423.7,801.5 L422.1,801.3 L420.5,801.1 L419.2,800.1 L417.6,799.9 L415.9,799.5 L414.3,800.2 L412.8,799.5 L411.4,798.8 L409.9,798.8 M409.7,713.1 L411.9,712.8 L412.6,710.7 L412.7,708.5 L414.8,707.7 L416.7,706.4 L416.7,704.2 L416.8,702.1 L415.8,700.3 M415.8,700.3 L414.6,699.0 L413.8,697.5 L411.7,697.5 L410.8,695.5 M410.8,695.5 L409.0,696.1 L407.8,694.6 L406.3,695.1 L405.1,696.3 L406.0,697.8 L405.5,699.6 L404.4,700.9 L402.8,701.6 L400.4,702.1 L397.9,702.7 L395.4,703.0 L393.1,703.8 M410.8,695.5 L410.0,693.2 M410.0,693.2 L407.8,692.1 L407.3,689.8 L405.5,688.5 L403.5,687.6 M416.9,584.5 L416.8,584.3 M410.0,693.2 L411.9,692.3 L413.6,690.9 L414.4,688.5 L412.6,686.7 L414.4,686.1 L415.6,684.6 L416.5,683.0 L416.9,681.1 M416.9,681.1 L416.6,679.3 L414.9,678.7 L413.6,677.7 L412.4,676.7 L411.3,675.4 L411.1,673.7 L410.8,672.1 L411.2,670.5 M411.2,670.5 L410.1,668.9 L408.3,668.9 M415.5,750.2 L417.8,749.5 L419.7,748.1 L422.1,747.5 L424.1,746.2 L424.0,743.8 L424.5,741.4 L424.3,739.0 L423.3,736.7 L424.0,734.6 L425.7,733.1 L426.5,730.8 L425.1,728.7 L426.3,727.0 L428.0,725.7 L429.6,724.4 L431.5,723.5 M431.5,723.5 L428.7,723.5 L426.1,724.7 L424.1,722.8 L421.9,721.2 L419.4,722.0 L416.9,721.8 L414.7,723.0 L412.2,723.5 M402.6,631.2 L404.7,631.6 L406.6,632.7 M406.6,632.7 L408.7,631.0 L410.9,629.4 L412.3,626.9 L415.0,625.9 L416.3,623.4 L418.5,621.6 L420.1,622.3 L421.6,621.4 L422.8,620.4 L423.4,619.0 M423.4,619.0 L423.7,616.4 L424.8,614.0 L425.5,611.1 L423.4,608.9 M423.4,608.9 L422.8,607.5 L421.8,606.3 L420.5,605.6 L419.1,604.9 M408.4,659.6 L410.2,657.7 L409.8,655.1 L412.1,654.4 L413.7,652.6 L416.1,651.6 L418.6,650.9 L419.5,648.3 L419.0,645.7 M419.0,645.7 L418.1,643.5 L416.3,642.0 L415.7,639.7 L414.1,638.0 L412.0,636.4 L409.4,636.6 L406.6,635.7 L406.6,632.7 M411.2,670.5 L412.6,671.0 L413.5,672.3 L415.0,672.9 L415.7,674.4 L416.9,673.3 L418.4,672.9 L420.0,673.4 L421.5,672.9 L422.6,671.6 L423.2,670.1 L424.7,670.9 L426.4,670.7 L428.8,669.7 L431.1,668.3 M431.1,668.3 L430.4,666.6 L431.3,665.0 L432.1,663.2 L430.7,661.8 L431.7,660.3 L432.6,658.8 L432.4,657.0 L431.7,655.3 M431.7,655.3 L430.4,653.0 L431.5,650.5 L430.0,648.7 L428.1,647.1 M428.1,647.1 L425.9,646.4 L423.6,646.5 L421.4,645.3 L419.0,645.7 M423.4,608.9 L426.1,609.2 L428.7,608.4 L429.6,605.8 L431.9,604.3 L434.2,605.3 L436.5,606.2 L438.9,605.9 L441.4,606.1 M441.4,606.1 L442.9,603.6 L441.9,600.9 M441.9,600.9 L440.0,600.5 L438.9,598.7 L437.6,597.9 M415.8,700.3 L417.7,700.1 L419.5,699.6 L421.4,700.0 L423.2,700.6 M423.2,700.6 L422.9,698.1 L423.0,695.6 L423.2,693.1 L422.4,690.7 L422.5,688.2 L423.3,685.8 L422.6,683.2 L423.9,680.9 M423.9,680.9 L422.2,679.7 L420.4,680.4 L418.5,680.1 L416.9,681.1 M431.5,723.5 L433.2,722.8 L435.0,722.3 M435.0,722.3 L434.8,720.3 L433.1,719.4 L432.7,717.7 L432.9,715.9 L433.2,714.0 L434.9,713.1 L436.5,712.3 L438.1,711.8 M438.1,711.8 L438.0,709.6 L436.3,708.3 L435.2,706.6 L433.4,705.6 L432.2,703.9 L431.1,702.1 L429.1,700.9 L426.9,701.5 M426.9,701.5 L424.9,701.4 L423.2,700.6 M438.9,586.4 L439.3,585.4 L439.7,584.4 M423.7,801.5 L426.0,800.8 L428.3,800.6 L430.4,799.5 L432.3,798.0 M432.3,798.0 L431.3,795.8 L430.9,793.5 L429.7,791.4 L428.8,789.2 M428.8,789.2 L427.5,788.2 L426.5,787.0 L424.8,787.6 L423.3,786.7 L422.2,785.6 L421.8,784.1 L420.5,783.2 L420.0,781.7 M420.0,781.7 L418.1,781.6 L416.7,780.4 L415.1,781.3 L413.2,781.2 M428.1,647.1 L429.9,645.9 L431.9,645.0 L432.4,642.9 L433.6,641.1 L435.0,639.5 L436.6,638.3 L438.7,637.6 L440.0,635.9 M440.0,635.9 L439.7,634.2 L438.9,632.8 L439.3,631.1 L439.9,629.6 M439.9,629.6 L438.4,630.1 L436.9,630.5 L435.3,630.3 L434.1,629.2 L432.7,628.0 L431.1,627.3 L430.2,629.2 L428.3,629.5 L427.1,626.8 L425.3,624.4 L425.7,622.9 L425.6,621.2 L424.5,620.1 L423.4,619.0 M416.3,750.6 L418.1,749.4 L420.1,748.6 L421.7,746.9 L424.0,746.6 L425.9,748.2 L428.4,748.6 L429.9,746.4 L432.6,746.0 M432.6,746.0 L434.3,743.8 L433.2,741.2 L435.1,739.6 L436.0,737.2 L437.1,735.0 L436.8,732.6 L437.7,730.4 L438.8,728.3 M438.8,728.3 L438.5,726.4 L438.3,724.4 L436.5,723.6 L435.0,722.3 M423.9,680.9 L426.5,679.6 L429.0,678.0 L431.8,677.2 L434.2,675.4 M434.2,675.4 L434.2,673.2 L434.4,671.1 L431.9,670.7 L431.1,668.3 M435.4,809.0 L435.5,807.8 L434.9,805.3 L433.5,803.2 L432.4,800.5 L434.4,798.3 M434.4,798.3 L432.3,798.0 M426.9,701.5 L428.7,700.8 L430.6,700.2 L429.3,698.2 L430.7,696.3 L431.3,694.7 L432.5,693.4 L432.5,691.8 L432.7,690.1 L431.5,688.4 L432.1,686.4 L431.2,684.5 L432.1,682.6 L433.9,681.9 L435.3,680.6 L436.5,678.8 L438.6,678.8 M438.6,678.8 L436.4,677.1 L434.2,675.4 M420.0,781.7 L421.6,782.6 L423.3,782.1 L425.0,781.9 L426.6,781.4 L428.4,781.5 L429.6,782.9 L431.3,783.1 L432.9,782.8 L431.4,781.2 L432.2,779.1 L433.4,777.7 L434.4,776.1 L436.1,775.3 L438.1,775.1 L438.1,773.0 L439.3,771.5 M439.3,771.5 L441.0,770.1 M441.0,770.1 L438.3,770.5 L435.6,769.8 L436.5,768.4 L435.9,766.8 L435.4,765.0 L433.6,764.9 L431.2,764.4 L428.8,764.9 L426.8,763.5 L424.9,762.1 M428.8,789.2 L430.6,787.3 L432.4,785.4 L433.8,783.2 L434.5,780.6 L436.6,778.8 L438.8,777.0 L438.7,774.2 L439.3,771.5 M441.0,770.1 L443.4,769.6 L445.8,770.0 M445.8,770.0 L446.8,769.3 M446.8,769.3 L446.9,766.8 L447.2,764.3 L449.6,763.0 L450.0,760.2 M450.0,760.2 L449.4,758.2 L450.0,756.2 M450.0,756.2 L449.3,753.4 L447.2,751.5 L445.3,749.6 L443.1,747.9 L440.4,748.2 L437.8,747.1 L436.8,746.0 L435.5,745.2 L434.1,745.9 L432.6,746.0 M438.6,678.8 L439.4,678.9 M439.4,678.9 L441.1,678.4 L442.6,677.6 L444.1,675.9 L446.1,676.7 M446.1,676.7 L444.2,674.6 L443.2,672.1 L443.9,669.1 L442.1,666.7 L444.6,665.6 L447.1,664.3 L448.8,662.1 L450.0,659.6 M450.0,659.6 L449.1,656.9 L446.5,655.7 L445.4,654.7 L444.7,653.3 L443.2,653.4 L441.7,653.9 L439.2,654.4 L436.7,654.6 L434.4,656.0 L431.7,655.3 M439.9,629.6 L439.5,627.3 L439.7,625.0 L441.2,623.3 L442.9,621.9 L444.8,620.7 L446.2,619.1 L447.2,617.1 L447.4,614.9 M447.4,614.9 L447.2,612.0 L446.1,609.3 L444.7,608.7 L443.2,608.5 L442.7,607.1 L441.4,606.1 M434.4,798.3 L435.3,796.5 L437.3,796.5 L438.8,797.6 L440.6,797.6 L442.1,797.1 L443.7,797.1 L445.4,796.5 L446.1,794.9 M446.1,794.9 L445.6,793.2 L446.3,791.5 L447.0,789.8 L446.5,788.1 L444.9,787.2 L443.8,785.8 L443.3,784.1 L442.4,782.5 L441.2,780.9 L440.1,779.2 L440.3,777.2 L440.0,775.2 L442.2,775.1 L443.5,773.2 L444.0,771.1 L445.8,770.0 M438.1,711.8 L439.7,710.3 L441.3,708.9 L443.4,709.7 L445.6,709.3 L447.5,708.0 L447.9,705.6 L450.2,705.3 L452.4,705.5 M452.4,705.5 L452.1,703.5 L451.0,701.9 L450.2,700.0 L450.7,698.0 L449.4,696.3 L449.0,694.3 L447.2,693.2 L445.3,692.5 L446.8,690.6 L447.1,688.3 L445.6,686.6 L443.9,685.0 L443.7,682.8 L441.6,682.0 L439.4,681.2 L439.4,678.9 M438.8,728.3 L440.3,729.4 L442.2,728.9 L441.6,730.7 L442.7,732.3 L445.0,733.9 L447.4,735.4 L449.6,737.3 L451.8,739.1 L454.8,739.0 L457.6,740.0 M457.6,740.0 L459.5,739.6 L461.2,738.3 M461.2,738.3 L462.3,735.9 L463.6,733.6 L464.4,730.9 L466.3,728.9 L469.0,728.0 L470.6,725.5 L472.9,723.7 L473.5,720.9 M473.5,720.9 L473.1,719.2 L471.6,718.2 L471.7,716.3 L470.2,715.2 L469.1,713.7 L469.7,711.9 L468.6,710.7 L467.8,709.1 M467.8,709.1 L466.3,707.7 L465.0,706.0 M465.0,706.0 L463.9,705.2 M463.9,705.2 L462.5,705.8 L461.1,706.5 L459.4,706.2 L458.1,705.2 L456.6,705.6 L455.3,706.6 L453.8,706.2 L452.4,705.5 M441.9,600.9 L443.6,600.9 L445.2,600.8 L446.7,600.2 L448.4,599.9 L449.9,601.0 L451.7,600.4 L453.4,600.2 L454.8,599.3 L455.4,597.5 L455.3,595.7 L455.8,594.0 L456.1,592.2 L457.5,591.1 L459.2,590.3 L461.0,589.9 L462.4,588.7 M462.4,588.7 L462.1,587.1 L460.9,586.0 M460.9,586.0 L458.5,586.2 L456.2,585.5 L453.9,584.7 L451.5,585.2 L449.7,583.6 L447.5,582.6 L445.2,581.9 L444.9,581.8 M450.0,756.2 L450.9,753.7 L449.6,751.3 L451.6,749.8 L452.9,747.7 L454.3,745.9 L455.9,744.3 L456.6,742.0 L457.6,740.0 M450.0,659.6 L452.5,658.6 L454.9,659.6 L456.2,657.5 L458.2,656.0 M458.2,656.0 L458.4,655.4 M458.4,655.4 L456.3,653.4 L455.6,650.6 L455.2,647.8 L455.0,645.0 L453.4,645.1 L452.0,644.5 L451.1,643.2 L450.7,641.7 L449.3,641.0 L447.7,641.0 L447.6,639.4 L446.5,638.2 M446.5,638.2 L445.0,637.3 L443.4,636.6 L441.6,636.9 L440.0,635.9 M443.1,813.8 L444.1,812.7 L446.2,812.6 M446.2,812.6 L448.2,811.1 L449.9,809.4 L449.5,806.9 L448.1,804.8 L447.5,802.7 L446.6,800.7 L447.7,798.8 L448.7,796.9 M448.7,796.9 L448.0,795.1 L446.1,794.9 M446.5,638.2 L448.7,637.8 L451.0,638.1 L453.5,638.6 L454.3,641.1 L455.2,639.1 L455.9,637.0 L457.9,636.1 L459.6,634.7 M459.6,634.7 L459.0,632.9 L458.5,631.1 L460.5,630.3 L461.0,628.2 M461.0,628.2 L462.3,626.6 L462.4,624.6 L463.8,623.0 L463.9,621.0 L463.8,618.9 L462.6,617.2 L460.4,616.6 L459.7,614.5 M459.7,614.5 L457.9,614.1 L456.7,615.5 L455.2,614.6 L453.5,615.0 L451.9,615.1 L450.4,615.8 L448.8,615.6 L447.4,614.9 M448.7,796.9 L450.6,796.1 L452.6,796.3 L454.3,797.2 L455.9,798.4 M455.9,798.4 L457.3,799.2 L458.9,799.4 L460.1,798.3 L461.8,798.2 L464.7,797.6 L467.3,796.1 M467.3,796.1 L469.2,795.3 L470.5,793.8 M470.5,793.8 L470.7,792.0 L472.2,790.8 L472.8,789.1 L474.4,788.2 L473.8,786.4 L472.8,784.8 L474.0,783.2 L474.6,781.4 M474.6,781.4 L473.6,779.5 L471.5,779.1 L470.3,777.5 L468.3,776.9 L466.8,775.3 L464.7,775.6 L462.7,775.6 L460.9,774.9 L461.0,772.3 L460.0,770.0 L457.8,768.7 L455.8,767.2 L453.4,767.0 L451.0,766.8 L449.2,768.6 L446.8,769.3 M463.4,820.7 L463.4,819.0 L462.7,817.1 L460.7,817.0 L458.7,816.4 M458.7,816.4 L457.5,815.0 L455.8,814.2 L454.7,812.8 L453.4,811.6 L451.7,810.4 L449.6,810.5 L447.5,810.9 L446.2,812.6 M463.9,705.2 L462.5,703.9 L462.8,702.0 L462.6,700.3 L462.5,698.6 L461.8,697.0 L461.8,695.2 L463.5,693.9 L462.8,691.9 L462.1,690.3 L462.4,688.5 L462.1,686.8 L462.5,685.0 L464.0,684.0 L464.9,682.4 L466.0,680.9 L465.8,679.0 M465.8,679.0 L463.9,679.4 L463.6,681.4 L462.5,682.6 L461.6,683.9 L459.8,683.8 L458.6,682.5 L457.0,682.1 L455.5,681.6 L452.9,680.8 L450.7,679.4 L447.8,679.0 L446.1,676.7 M458.7,816.4 L456.9,814.5 L454.9,812.7 L453.4,810.4 L451.8,808.2 L450.9,806.8 L449.8,805.4 L451.5,804.1 L451.0,802.1 L452.2,801.1 L453.0,799.7 L454.1,798.4 L455.9,798.4 M459.7,614.5 L462.1,615.4 L463.9,613.5 L465.3,611.8 L467.2,610.7 M467.2,610.7 L466.7,608.9 L466.5,607.0 L468.7,607.0 L469.7,605.1 L470.1,603.5 L470.8,602.1 L470.2,600.5 L470.4,598.9 M470.4,598.9 L470.1,597.0 L470.0,595.1 M470.0,595.1 L469.3,593.6 M469.3,593.6 L467.3,592.7 L466.0,591.0 L464.0,590.1 L462.4,588.7 M460.9,586.0 L460.4,583.5 L461.1,581.1 M461.1,581.1 L459.9,579.4 L458.1,578.2 L457.2,575.9 L457.6,575.4 M465.8,679.0 L467.5,677.0 M467.5,677.0 L466.9,675.3 L466.8,673.5 L467.9,672.0 L469.1,670.7 L468.9,669.0 L468.6,667.4 L467.7,665.9 L468.0,664.2 L466.8,662.7 L465.4,661.5 L465.6,659.6 L465.1,657.7 L463.2,658.3 L461.3,658.4 L459.2,657.8 L458.2,656.0 M468.8,817.5 L468.8,816.5 L469.5,814.3 L469.3,812.1 L470.8,810.3 L472.4,808.5 L474.6,807.7 L477.0,807.6 L475.7,805.8 L473.5,805.3 L471.3,805.4 L469.5,804.1 L468.6,802.1 L467.1,800.5 L466.7,798.2 L467.3,796.1 M450.0,760.2 L452.2,761.5 L454.5,760.4 L457.2,760.6 L458.2,763.1 L460.5,763.1 L462.8,763.1 L464.4,764.8 L466.6,765.7 L468.8,765.4 L470.9,764.9 L473.0,764.2 L474.9,763.2 L477.4,763.7 L479.8,764.4 L481.9,762.8 L483.4,760.8 M483.4,760.8 L483.3,758.0 M483.3,758.0 L482.2,755.8 L479.7,755.3 L480.2,753.1 L480.2,750.9 L479.9,748.7 L478.7,746.9 L476.4,746.9 L474.7,745.4 L472.7,743.4 L470.0,742.8 L470.4,740.1 L470.2,737.4 L467.9,737.1 L465.7,737.7 L463.4,737.7 L461.2,738.3 M461.1,581.1 L462.6,580.6 L464.1,580.3 L465.5,579.6 L467.1,579.5 L467.6,578.0 L468.1,576.5 L468.1,576.3 M474.6,781.4 L476.9,779.9 M476.9,779.9 L478.9,780.3 L481.0,779.7 L483.0,779.1 L484.7,777.8 L484.4,775.6 L486.0,774.0 L486.5,772.0 L486.9,770.0 M486.9,770.0 L485.4,768.0 L484.8,765.5 L483.9,763.2 L483.4,760.8 M465.0,706.0 L465.1,703.6 L465.8,701.3 L467.5,699.3 L467.1,696.6 L468.6,697.1 L470.1,696.8 L471.2,698.1 L472.8,698.4 L474.7,696.1 L476.3,693.7 L478.9,693.2 L481.1,691.8 L483.2,693.6 L486.0,693.3 L486.8,691.0 L488.2,689.0 L490.0,687.2 L490.5,684.7 M490.5,684.7 L488.2,685.1 L487.6,687.3 L486.2,688.7 L484.3,689.2 L482.6,691.0 L480.3,690.3 L478.6,689.1 L476.6,688.5 L475.5,687.0 L475.3,685.1 L473.2,684.4 L473.0,682.3 L471.6,680.9 L471.4,678.9 L469.4,678.5 L468.3,676.8 M468.3,676.8 L467.5,677.0 M469.3,593.6 L470.7,592.1 L470.7,590.1 L472.1,588.8 L473.6,587.7 L474.8,586.1 L476.8,585.8 L478.2,584.5 L478.4,583.9 M458.4,655.4 L460.0,655.6 L461.4,656.4 L462.8,657.3 L464.1,658.1 L464.9,656.4 L465.0,654.5 L466.8,653.8 L468.7,653.7 L468.8,650.8 L469.7,648.0 L472.3,647.0 L474.6,645.2 M474.6,645.2 L474.5,643.2 M474.5,643.2 L472.7,641.9 L471.3,640.2 L469.2,639.1 L468.2,637.0 L465.9,636.9 L463.6,637.3 L461.7,635.9 L459.6,634.7 M474.5,643.2 L474.8,642.6 M474.8,642.6 L474.3,640.4 L472.3,639.3 L473.5,637.6 L473.8,635.5 L473.8,633.7 L474.6,632.1 L475.4,630.5 L475.3,628.6 M475.3,628.6 L474.3,630.8 L471.9,631.0 L469.7,630.7 L468.1,629.2 L466.4,628.5 L464.7,627.8 L462.9,628.4 L461.0,628.2 M468.3,676.8 L469.7,675.7 L469.6,673.9 L470.9,673.1 L471.7,671.7 L472.7,670.6 L473.5,669.3 L474.4,667.9 L475.9,667.3 L477.4,666.5 L477.5,664.7 L478.2,663.3 L479.1,662.0 L480.8,662.2 L482.3,661.4 L484.3,661.0 L484.6,659.1 M484.6,659.1 L484.1,657.2 L484.6,655.4 M484.6,655.4 L482.3,655.4 L481.0,653.5 L479.0,653.5 L477.1,652.8 L476.6,650.7 L475.1,649.2 L474.2,647.3 L474.6,645.2 M475.3,628.6 L477.4,627.3 L477.4,624.8 L475.8,622.6 L477.3,620.4 M477.3,620.4 L476.1,618.9 L475.1,617.2 L474.8,615.4 L474.1,613.5 L472.5,612.6 L471.0,611.3 L469.1,610.8 L467.2,610.7 M471.9,817.4 L472.1,816.7 L474.1,815.4 L476.4,814.6 L477.9,812.5 L479.4,810.3 L482.0,810.8 L484.6,811.0 M484.6,811.0 L484.3,808.5 L483.1,806.3 L482.5,803.9 L480.7,802.1 M480.7,802.1 L479.6,800.8 L478.1,800.1 L476.5,799.4 L475.5,798.1 L475.2,796.1 L474.5,794.2 L472.6,792.7 L470.5,793.8 M484.6,655.4 L486.9,655.1 L489.0,654.3 L491.5,653.7 L492.4,651.3 M492.4,651.3 L493.7,649.3 L493.0,647.1 L494.4,644.8 L492.8,642.8 M492.8,642.8 L491.8,640.5 L489.7,639.3 L489.2,637.0 L488.2,634.9 M488.2,634.9 L486.4,636.1 L484.2,635.8 L482.1,635.3 L480.2,636.4 L479.0,638.1 L477.5,639.5 L475.9,640.8 L474.8,642.6 M477.3,620.4 L479.5,620.3 M479.5,620.3 L479.8,617.8 L480.6,615.4 L482.5,613.7 L484.0,611.7 L486.6,611.4 L489.0,610.4 L490.8,608.4 L491.6,605.9 M491.6,605.9 L490.2,606.7 L488.6,606.7 L487.1,607.6 L485.5,607.2 L483.8,607.1 L482.4,608.0 L480.9,606.9 L479.2,607.8 L477.9,606.6 L476.8,605.3 L475.1,604.7 L473.4,604.8 L472.9,603.1 L471.7,602.0 L470.2,600.8 L470.4,598.9 M480.7,802.1 L482.2,803.2 L483.9,802.3 L485.6,802.2 L486.7,800.7 L487.1,799.2 L488.3,798.1 L489.8,797.4 L490.7,796.1 M490.7,796.1 L489.1,796.4 L487.7,795.8 L486.2,795.4 L484.7,795.0 L483.3,794.4 L482.6,792.8 L481.4,791.8 L481.2,790.2 L482.1,788.7 L482.0,786.9 L480.3,786.3 L479.1,785.0 L478.3,783.6 L476.8,783.0 L477.6,781.4 L476.9,779.9 M483.3,758.0 L485.3,756.1 L486.0,753.4 L487.6,751.2 L488.3,748.6 M488.3,748.6 L489.1,746.0 L487.1,744.1 L488.5,742.3 L489.8,740.4 L491.1,738.6 L492.6,737.0 L494.0,735.0 L493.1,732.7 L491.3,731.4 L489.1,730.9 L489.0,728.5 L487.0,727.1 L485.7,725.2 L483.7,724.5 L482.0,722.9 L479.8,722.8 M479.8,722.8 L478.5,721.7 L476.8,721.2 L475.2,721.1 L473.5,720.9 M488.2,634.9 L487.9,632.2 L489.0,629.8 L491.8,630.1 L494.2,628.8 M494.2,628.8 L494.1,626.8 L493.1,625.1 M493.1,625.1 L492.5,622.9 L490.3,622.7 L489.1,620.7 L486.9,621.2 L485.1,620.5 L483.2,620.9 L481.5,620.0 L479.5,620.3 M486.9,770.0 L488.2,771.1 L490.0,771.0 L491.6,771.1 L493.2,771.3 L494.9,770.3 L496.9,770.1 L498.3,771.5 L499.3,773.2 M499.3,773.2 L501.1,771.0 L503.9,770.3 L504.9,767.6 L507.0,765.7 L508.8,763.5 L509.0,760.7 L510.4,759.8 L511.5,758.6 L511.1,757.0 L510.4,755.5 M510.4,755.5 L508.0,755.9 L506.0,754.6 L504.6,752.9 L503.0,751.3 L502.4,748.8 L499.7,748.4 L500.0,745.8 L497.6,744.7 M497.6,744.7 L495.2,745.5 L492.6,745.8 L490.9,747.9 L488.3,748.6 M492.3,817.6 L492.0,817.3 L490.3,815.4 L491.0,812.9 M491.0,812.9 L489.1,813.6 L487.2,814.2 L486.1,812.5 L484.6,811.0 M470.0,595.1 L472.2,594.6 L472.6,592.3 L474.6,592.2 L476.2,591.0 L478.2,591.8 L480.3,591.5 L481.0,593.5 L482.7,594.8 L484.2,594.5 L485.8,594.0 L485.8,594.0 M490.5,684.7 L490.7,684.7 M490.7,684.7 L490.0,682.3 L489.6,679.8 L492.5,679.6 L493.8,677.1 L494.0,675.0 L494.3,672.9 L495.2,670.8 L494.0,668.8 M494.0,668.8 L493.9,666.9 L493.0,665.3 L491.6,664.2 L490.5,662.7 L488.7,662.1 L488.0,660.2 L486.6,658.7 L484.6,659.1 M467.8,709.1 L469.7,708.7 L471.7,708.4 L473.7,709.2 L475.5,707.9 L477.6,708.0 L479.6,708.8 L481.0,707.0 L483.3,706.8 L484.9,704.4 L487.8,704.6 L490.3,705.0 L492.7,705.7 L492.8,703.3 L493.6,701.0 L494.7,698.9 L495.0,696.5 M495.0,696.5 L494.3,694.6 L493.7,692.7 L494.8,691.2 L495.6,689.3 M495.6,689.3 L494.8,687.8 L493.2,686.9 L492.0,685.7 L490.7,684.7 M505.3,584.3 L505.1,583.9 L503.9,582.8 L502.4,582.2 L501.6,580.7 L501.4,579.1 L500.1,577.8 L499.5,576.0 L500.7,574.5 L500.9,572.9 M491.0,812.9 L492.7,811.7 L493.3,809.7 L495.1,809.0 L497.0,808.5 M497.0,808.5 L498.9,807.4 L499.4,805.3 L500.3,803.4 L499.5,801.3 L498.4,799.6 L496.5,799.0 L494.8,798.0 L493.8,796.3 M493.8,796.3 L492.3,795.7 L490.7,796.1 M479.8,722.8 L482.1,723.8 L484.0,722.3 L486.5,721.8 L488.0,723.8 L490.0,723.2 L491.7,722.0 L493.9,722.0 L495.8,720.9 M495.8,720.9 L496.5,719.2 L496.5,717.4 L497.7,716.0 L498.0,714.2 L500.0,713.5 L500.6,711.5 L500.5,709.6 L500.8,707.8 M500.8,707.8 L501.9,705.9 L503.4,704.2 L502.2,702.4 L500.9,700.6 L499.1,700.1 L497.3,699.4 L496.2,697.9 L495.0,696.5 M493.8,796.3 L495.1,794.7 L496.6,793.4 L498.2,792.0 L498.9,790.0 M498.9,790.0 L499.4,787.8 L501.4,786.8 L502.2,784.9 L502.4,782.8 L501.8,780.2 L499.3,779.3 L500.2,777.2 L501.0,775.0 M501.0,775.0 L499.3,773.2 M491.6,605.9 L492.3,605.5 M510.1,822.2 L510.2,821.9 L510.5,819.8 L510.7,817.6 L510.7,815.5 L512.3,813.9 L512.6,811.6 L514.8,810.2 L514.3,807.7 M514.3,807.7 L513.3,807.5 M513.3,807.5 L510.9,808.2 L509.1,806.5 L507.2,805.2 L505.0,805.3 L503.3,807.0 L501.0,806.9 L498.6,806.8 L497.0,808.5 M493.1,625.1 L491.9,623.9 L491.7,622.2 L490.9,620.8 L490.2,619.4 L491.4,618.1 L493.1,617.7 L494.0,617.2 M494.4,616.9 L494.8,616.7 L494.6,614.7 L497.1,613.3 L498.5,610.8 L501.2,610.2 L503.9,609.9 M503.9,609.9 L503.3,608.4 L502.0,607.3 L501.8,607.1 M495.6,689.3 L497.9,690.1 L500.2,689.7 L502.8,689.3 L503.8,686.9 M503.8,686.9 L504.8,685.1 L504.9,683.0 L505.7,681.2 L506.5,679.4 L507.0,676.9 L509.4,676.5 L510.3,674.7 L511.2,672.8 M511.2,672.8 L510.1,671.1 L508.1,671.3 L507.2,669.8 L507.7,668.0 M507.7,668.0 L505.9,667.8 L504.3,666.9 L502.6,667.2 L500.8,667.7 L498.9,668.1 L497.2,666.9 L495.6,667.9 L494.0,668.8 M492.4,651.3 L493.9,650.9 L495.3,650.4 L496.8,650.3 L498.3,650.2 M498.3,650.2 L498.0,648.4 L499.6,647.4 L500.0,647.0 M496.7,633.7 L496.2,634.6 L495.6,636.2 L496.2,637.9 L495.7,639.3 L494.5,640.4 L493.9,641.8 L492.8,642.8 M507.7,668.0 L508.7,665.6 L509.3,663.2 L510.8,662.4 L511.3,660.8 L511.0,659.3 L509.9,658.1 M509.9,658.1 L509.1,656.4 L507.8,655.1 L506.8,653.5 L505.5,652.2 L504.9,651.9 M501.9,650.8 L500.1,651.1 L498.3,650.2 M494.2,628.8 L496.0,629.9 M508.3,628.3 L510.0,627.6 L511.4,626.4 L512.7,625.0 M512.7,625.0 L513.1,623.1 L513.3,621.2 M513.3,621.2 L513.9,618.5 L512.1,616.5 L510.5,614.6 L509.6,612.4 M509.6,612.4 L508.4,611.3 L506.8,611.0 L505.4,610.2 L503.9,609.9 M497.6,744.7 L498.2,742.0 L499.9,739.9 L502.3,738.6 L505.0,738.8 L507.4,737.1 L508.8,734.6 L508.7,733.0 L508.9,731.4 L507.8,730.3 L506.4,729.5 M506.4,729.5 L505.1,728.4 L504.0,727.0 L502.0,726.3 L501.8,724.3 L500.6,722.7 L498.6,723.0 L497.3,721.8 L495.8,720.9 M508.2,589.3 L508.8,589.1 M508.8,589.1 L511.2,587.5 L513.8,586.1 L515.2,583.5 L516.4,580.9 M516.4,580.9 L517.3,578.9 L518.7,577.2 L519.4,575.9 M500.8,707.8 L502.3,706.6 L504.0,705.8 L505.9,705.5 L507.8,705.3 L508.6,703.6 L509.4,701.9 L509.2,699.7 L511.1,698.6 L512.7,699.7 L514.1,701.1 L515.9,702.0 L517.1,703.6 L518.8,702.6 L520.8,702.3 L522.8,702.4 L524.6,701.4 M524.6,701.4 L524.3,699.0 M524.3,699.0 L522.3,699.1 L520.4,698.3 L518.9,699.5 L517.5,700.9 L515.3,701.1 L513.6,699.9 L513.1,697.9 L512.3,696.0 L512.2,694.3 L511.5,692.8 L510.8,691.2 L509.3,690.3 L508.0,689.2 L507.2,687.7 L505.5,687.3 L503.8,686.9 M513.3,807.5 L514.2,805.8 L514.0,804.0 L513.9,802.2 L513.0,800.6 L513.0,798.2 L514.9,796.8 L512.9,795.9 L512.2,793.7 L510.3,792.9 L509.6,791.0 L507.9,790.2 L506.2,789.4 L504.2,789.7 L502.7,791.0 L500.8,790.4 L498.9,790.0 M509.6,612.4 L511.5,613.2 L513.7,613.1 L514.0,610.8 L515.9,609.6 M515.9,609.6 L517.6,608.5 L518.5,606.8 L520.5,606.7 L522.0,605.4 L522.7,603.4 L524.5,602.3 L523.2,600.5 L523.7,598.3 M523.7,598.3 L521.2,597.7 L519.5,595.8 L518.6,593.6 L517.7,591.3 L515.4,592.6 L512.8,592.0 L510.7,590.7 L508.8,589.1 M509.9,658.1 L512.4,659.1 L514.5,657.3 L515.6,655.1 L517.9,654.3 L519.7,652.9 L521.9,652.1 L522.9,650.1 L524.3,648.2 M524.3,648.2 L523.4,645.8 L522.6,643.3 M522.6,643.3 L521.8,642.8 M521.8,642.8 L519.5,641.3 L517.2,642.8 L515.3,644.8 L512.7,643.9 L510.9,644.2 M506.4,729.5 L507.9,729.7 M507.9,729.7 L509.5,728.2 L511.6,727.9 L512.3,725.7 L514.6,725.0 L514.1,722.5 L512.9,720.2 L515.2,719.1 L516.8,717.1 L518.8,715.6 L519.4,713.1 L520.1,710.9 L520.9,708.6 L523.3,708.8 L525.6,709.4 L528.0,708.5 L530.3,709.6 M530.3,709.6 L528.5,707.7 L526.4,706.2 L525.8,703.7 L524.6,701.4 M514.3,807.7 L516.9,806.3 L519.9,806.1 L521.6,807.1 L523.1,805.9 L523.7,804.3 L525.1,803.4 M525.1,803.4 L524.1,800.9 L523.3,798.4 L524.2,795.9 L523.8,793.2 L524.3,790.4 L523.0,788.0 L524.0,786.8 L525.1,785.8 L525.2,784.2 L524.4,782.9 M524.4,782.9 L523.4,784.7 L521.4,785.0 L520.0,783.3 L517.9,783.6 L516.1,783.7 L515.0,782.2 L513.5,781.5 L511.9,781.4 L510.7,779.5 L508.4,779.9 L507.4,778.2 L507.6,776.2 L506.1,777.8 L504.0,777.0 L503.1,775.0 L501.0,775.0 M510.4,755.5 L511.5,754.9 M511.5,754.9 L514.1,753.7 L514.4,750.9 L516.0,748.7 L515.9,746.1 L515.0,743.7 L514.0,741.4 L514.3,738.8 L514.5,736.3 M514.5,736.3 L513.6,733.9 L511.2,732.9 L509.1,731.8 L507.9,729.7 M524.4,782.9 L525.7,781.8 L527.4,782.0 L527.6,780.4 L528.5,779.1 M528.5,779.1 L527.6,776.4 L527.9,773.6 L526.8,770.9 L524.5,769.2 L524.5,767.6 L524.8,766.1 L526.3,765.4 L526.9,764.0 L528.1,763.0 L529.2,762.0 L530.7,761.8 L532.3,761.8 M532.3,761.8 L530.1,760.1 L529.6,757.3 M529.6,757.3 L527.8,759.4 L525.2,759.9 L522.6,759.7 L520.2,758.5 L520.3,756.9 L519.8,755.3 L518.1,755.1 L517.1,753.7 L514.4,754.7 L511.5,754.9 M521.8,642.8 L523.1,641.6 L522.8,639.9 L521.7,638.8 L520.5,637.8 L519.3,635.3 L516.9,634.1 L514.8,632.4 L512.9,630.4 L511.7,627.7 L512.7,625.0 M511.2,672.8 L513.6,673.6 L516.2,674.1 L518.0,676.4 L517.5,679.2 L519.8,679.2 L522.1,678.7 L523.6,676.8 L526.1,676.5 M526.1,676.5 L524.2,675.6 L524.3,673.5 L524.3,671.6 L523.1,670.2 L524.1,668.6 L524.7,666.9 L524.5,665.2 L524.2,663.4 L525.5,661.9 L526.7,660.4 L526.0,658.6 L525.4,656.8 L525.5,655.0 L526.8,653.8 L526.3,652.0 L527.5,650.5 M527.5,650.5 L527.4,650.4 M527.4,650.4 L526.2,648.8 L524.3,648.2 M524.3,699.0 L522.8,696.6 L522.3,693.8 L524.7,692.2 L525.7,689.4 L528.5,688.4 L530.9,686.7 L530.3,684.8 L531.9,683.6 L530.1,682.9 L530.2,680.9 M530.2,680.9 L529.6,679.4 L528.9,677.9 L527.9,676.4 L526.1,676.5 M527.8,829.8 L527.7,828.7 L528.6,826.3 L530.2,824.2 L531.1,822.9 L531.1,821.3 L532.7,821.8 L534.2,821.1 M534.2,821.1 L533.6,818.7 L531.9,816.9 L531.1,814.5 L531.2,812.1 L529.8,810.1 L527.9,808.5 L527.4,806.1 L526.0,804.1 M526.0,804.1 L525.1,803.4 M529.6,757.3 L530.6,755.9 L530.5,754.2 L529.7,752.7 L529.8,751.0 L529.6,749.2 L529.1,747.6 L530.1,746.2 L530.8,744.7 M530.8,744.7 L529.0,742.6 L526.2,742.3 L526.0,739.6 L524.4,737.4 L522.3,735.6 L519.6,736.4 L517.2,736.6 L514.8,736.3 M514.8,736.3 L514.5,736.3 M530.3,709.6 L530.8,711.1 L532.0,712.2 L533.5,712.1 L535.0,712.1 M535.0,712.1 L536.6,711.0 L538.2,710.1 L538.6,708.3 L538.8,706.5 L539.8,705.0 L540.5,703.3 L542.1,702.5 L543.6,701.7 L543.4,699.6 L541.8,698.2 L542.5,696.4 L542.9,694.4 L545.0,693.9 L545.5,691.9 L545.6,689.6 L547.8,689.0 M547.8,689.0 L546.7,687.5 L546.5,685.8 L545.8,684.2 L545.0,682.7 L543.8,681.4 L542.1,680.8 L540.8,679.7 L539.4,678.7 M539.4,678.7 L536.9,679.8 L535.3,682.0 L532.9,680.8 L530.2,680.9 M522.6,643.3 L523.9,640.9 L525.4,638.6 L526.8,636.2 L529.1,634.6 L530.7,632.3 L532.7,630.3 L533.1,628.3 L531.3,627.2 L532.2,625.6 L533.8,624.8 M533.8,624.8 L532.6,624.1 M532.6,624.1 L531.2,624.9 L529.6,624.6 L529.1,623.1 L528.0,622.0 L525.5,622.5 L523.1,621.4 L520.8,622.9 L518.2,622.1 L515.8,621.5 L513.3,621.2 M523.7,598.3 L525.5,597.7 L527.2,598.4 L528.2,596.6 L530.2,596.4 M530.2,596.4 L529.5,594.7 L529.5,593.0 L528.9,591.0 L527.0,590.6 M527.0,590.6 L527.4,588.3 L525.5,587.1 L524.2,585.7 L522.7,584.6 L520.7,583.8 L520.2,581.7 L518.0,582.6 L516.4,580.9 M526.0,804.1 L528.3,805.4 L530.5,803.9 L532.8,803.4 L535.0,804.4 L537.4,804.9 L539.8,804.6 L541.7,803.2 L543.4,801.3 M543.4,801.3 L543.2,799.8 L543.8,798.3 L545.4,798.7 L546.8,797.7 L549.4,797.1 L550.5,794.5 L552.1,792.6 L553.9,790.9 L555.6,789.1 L556.7,786.8 M556.7,786.8 L556.5,784.9 L556.2,782.9 M556.2,782.9 L554.2,782.5 L552.3,781.5 L550.3,781.0 L548.5,779.8 L547.9,777.6 L547.6,775.3 L545.4,774.4 L543.4,773.2 L541.2,771.8 L538.6,772.5 L536.8,770.1 L533.9,770.9 L531.5,772.0 L530.0,774.2 L528.7,776.5 L528.5,779.1 M514.8,736.3 L516.1,735.4 L517.7,734.9 L519.1,734.0 L520.8,733.9 L522.4,733.0 L524.1,733.4 L525.8,732.9 L526.8,731.5 L528.7,732.0 L530.6,731.7 L532.5,731.2 L534.3,730.9 L535.4,729.4 L536.4,727.8 L536.2,725.7 L537.6,724.2 M537.6,724.2 L539.8,722.7 L540.3,720.1 L539.5,717.8 L539.3,715.3 M539.3,715.3 L537.4,713.4 L535.0,712.1 M527.4,650.4 L528.9,651.0 L530.5,651.4 L532.2,651.5 L533.7,650.6 L534.8,649.4 L535.8,648.2 L537.5,647.8 L538.4,646.4 M538.4,646.4 L538.7,643.8 L537.9,641.3 L538.3,638.7 L539.4,636.3 L540.3,633.7 L539.8,631.0 L542.4,629.7 L543.6,627.2 M543.6,627.2 L542.4,625.9 L541.4,624.5 L539.7,624.1 L538.1,623.6 M538.1,623.6 L535.6,623.1 L533.8,624.8 M532.6,624.1 L532.3,622.1 L531.7,620.3 L530.7,618.5 L531.2,616.4 L528.9,617.3 L526.5,616.6 L524.9,614.7 L524.7,612.2 M524.7,612.2 L522.5,611.3 L520.6,609.8 L518.2,610.5 L515.9,609.6 M538.1,623.6 L539.5,622.8 L539.7,622.6 M541.0,614.0 L540.5,613.4 M540.5,613.4 L540.4,611.2 L538.3,610.4 L538.7,608.4 L540.4,607.3 L540.9,605.6 L540.3,603.9 L538.8,603.1 L537.5,601.9 M537.5,601.9 L538.5,604.6 L537.0,606.9 L537.6,608.4 L537.2,610.0 L535.9,610.9 L534.4,611.2 L532.0,610.1 L529.5,611.0 L527.2,611.9 L524.7,612.2 M532.3,761.8 L534.3,762.6 L536.0,763.9 L538.3,764.1 L540.1,762.7 L541.6,761.1 L542.8,759.3 L545.0,760.2 L547.2,759.4 M547.2,759.4 L548.1,757.3 L549.2,755.4 L548.7,753.1 L547.4,751.3 L548.0,749.2 L548.3,747.1 L549.3,745.0 L551.4,744.1 M551.4,744.1 L550.3,742.1 L550.0,739.8 L548.7,737.6 L546.2,737.3 L544.1,736.8 L541.9,737.3 L539.9,738.3 L537.7,737.9 M537.7,737.9 L535.6,739.2 L534.0,741.0 L532.7,743.0 L530.8,744.7 M537.7,737.9 L538.1,735.6 L540.3,734.9 L539.5,733.0 L539.7,731.0 L539.8,729.1 L539.9,727.2 L539.1,725.5 L537.6,724.2 M537.5,601.9 L537.5,601.1 M537.5,601.1 L538.2,598.9 L536.4,597.5 M536.4,597.5 L534.7,597.3 L533.1,597.6 L531.6,597.2 L530.2,596.4 M539.4,678.7 L540.8,677.8 L542.4,677.7 L543.2,676.3 L544.4,675.3 L545.3,674.0 L546.9,673.4 L546.8,671.8 L547.8,670.4 M547.8,670.4 L549.0,669.1 L548.9,667.4 M548.9,667.4 L547.0,666.9 L545.0,667.4 L543.1,667.6 L541.2,667.4 L539.2,666.1 L539.1,663.7 L536.9,663.9 L534.9,663.2 L534.8,660.9 L535.5,658.7 L533.4,657.9 L531.6,656.6 L529.0,657.0 L527.4,655.0 L528.6,652.8 L527.5,650.5 M537.5,576.5 L537.2,577.0 L536.1,578.1 L536.8,579.6 L537.3,581.2 L538.7,581.9 L539.7,583.2 L541.4,583.3 L542.5,584.6 L543.0,586.2 L542.0,587.6 L540.5,588.8 L541.0,590.6 M541.0,590.6 L542.7,590.4 L543.8,589.1 L544.5,587.7 L545.4,586.4 L546.9,585.4 L548.4,586.2 L549.9,586.5 L551.4,586.9 L553.0,587.2 M558.8,587.2 L559.9,587.3 L562.3,585.7 M562.3,585.7 L562.7,582.8 M562.7,582.8 L562.1,580.8 L561.9,578.7 L561.8,576.3 L559.8,574.9 L559.4,572.8 L558.2,571.5 M527.0,590.6 L528.3,588.1 L530.1,585.9 L528.5,583.6 L526.9,581.3 L527.6,579.1 L528.6,577.0 L528.3,576.2 M536.4,597.5 L537.4,595.7 L538.7,594.1 L541.1,593.1 L541.0,590.6 M539.3,715.3 L541.2,713.3 L543.3,711.6 L544.8,711.6 L546.2,712.3 L547.3,711.2 L548.7,710.6 L551.2,711.9 L554.0,711.5 L556.0,713.3 L558.4,714.5 M558.4,714.5 L558.6,712.7 L557.6,711.1 L556.4,709.7 L556.2,707.8 L554.5,706.8 L553.8,705.0 L552.0,704.5 L550.1,704.2 L550.6,702.6 L550.6,700.8 L550.5,698.7 L552.4,697.9 L554.1,697.0 L556.0,696.5 L557.3,694.8 L556.7,692.7 M556.7,692.7 L554.2,692.4 L551.8,691.8 L550.5,689.4 L547.8,689.0 M538.4,646.4 L540.9,645.9 L543.2,646.7 L543.3,649.1 L544.6,651.2 L547.0,649.8 L546.6,647.0 L548.9,647.2 L551.2,647.2 M551.2,647.2 L550.8,645.0 L551.1,642.8 L550.7,640.6 L550.9,638.4 L551.3,636.1 L552.5,634.2 L553.4,632.2 L553.5,629.9 M553.5,629.9 L551.0,629.7 L548.4,629.2 L545.7,628.9 L543.6,627.2 M540.5,613.4 L541.2,611.8 L542.1,610.3 L542.8,609.6 M540.5,600.8 L539.4,601.1 L537.5,601.1 M558.0,857.4 L557.6,856.7 L557.5,856.7 M548.9,667.4 L549.0,667.3 M549.0,667.3 L550.7,664.9 L551.3,662.0 L553.9,660.8 L556.4,659.5 L554.9,658.4 L554.3,656.7 L554.9,655.0 L556.2,653.8 L554.8,651.4 L552.8,649.3 M552.8,649.3 L551.2,647.2 M553.5,629.9 L554.7,628.1 L556.8,628.6 M556.8,628.6 L559.7,628.7 L560.7,626.0 M560.7,626.0 L562.5,624.6 L562.5,622.4 L563.6,620.5 L562.9,618.4 L562.7,616.4 L562.7,616.3 M571.9,886.9 L572.0,886.9 L573.4,887.7 L574.9,888.6 L576.6,888.5 L577.4,890.1 L579.2,890.4 L580.3,891.6 L581.3,892.9 M581.3,892.9 L581.4,890.7 L580.3,888.7 L580.0,886.6 L579.8,884.4 L580.7,882.2 L582.8,881.1 L584.9,880.1 L587.2,880.0 M587.2,880.0 L587.1,877.3 L586.2,874.7 M586.2,874.7 L584.6,875.0 L583.2,874.2 L581.7,873.8 L580.3,873.3 L580.7,871.5 L579.4,870.3 L578.7,868.7 L579.6,867.2 L577.4,865.5 L574.7,866.0 L572.7,864.4 L570.7,862.9 M570.7,862.9 L569.5,865.0 L567.7,866.5 L565.5,867.5 L565.0,867.5 M551.4,744.1 L552.3,741.4 L554.3,739.2 L555.5,737.8 L557.2,738.2 L558.5,737.2 L558.9,735.7 L561.6,736.8 L564.5,736.9 L567.3,736.7 L570.2,736.9 M570.2,736.9 L572.8,736.3 L573.5,733.7 L574.8,731.3 L573.0,729.2 L572.6,727.1 L573.3,725.1 L573.4,723.0 L572.9,721.0 M572.9,721.0 L572.1,719.5 L572.5,718.0 L570.8,718.3 L569.5,717.4 L568.8,715.0 L567.9,712.7 L565.5,712.9 L563.1,713.4 L560.6,713.4 L558.4,714.5 M543.1,841.3 L544.5,840.7 L545.7,841.7 L547.1,842.4 L548.9,842.1 L550.1,843.4 L551.7,843.8 L552.8,845.1 L554.5,845.7 L554.8,847.5 L554.7,845.8 L554.1,844.2 L556.1,843.7 L556.4,841.6 L557.6,839.9 L556.4,838.2 L557.4,836.6 L559.2,836.2 L561.0,835.5 L561.0,833.6 L562.1,832.4 L563.4,831.6 L565.0,831.1 L566.1,830.0 L567.8,830.1 L569.0,829.0 M569.0,829.0 L569.2,827.5 M569.2,827.5 L568.1,824.9 L568.1,822.2 M568.1,822.2 L565.7,821.9 L563.5,821.0 L561.1,821.8 L559.7,823.8 L557.6,824.7 L555.5,825.4 L553.3,824.8 L551.1,824.6 L548.4,825.3 L545.9,824.0 L544.4,826.3 L541.8,827.1 L538.9,827.2 L536.2,826.4 L534.5,824.0 L534.2,821.1 M556.2,782.9 L557.5,781.6 L558.5,780.0 L558.5,778.1 L559.5,776.5 L561.1,775.5 L561.8,773.8 L563.7,773.0 L564.2,771.1 M564.2,771.1 L562.9,772.0 L561.2,772.1 L559.6,772.4 L558.0,772.2 L557.4,770.7 L556.6,769.4 L555.4,768.3 L554.6,766.9 L553.0,764.4 L550.1,763.9 L547.9,762.2 L547.2,759.4 M556.7,692.7 L557.8,690.2 L560.0,688.5 L561.5,688.0 L563.0,687.6 L563.0,686.0 L563.7,684.6 M563.7,684.6 L561.2,683.4 L558.9,682.0 L556.4,680.8 L553.9,679.6 L553.3,678.0 L553.9,676.4 L553.1,674.9 L553.6,673.2 L552.1,672.6 L550.8,671.7 L549.1,671.5 L547.8,670.4 M568.1,599.6 L568.9,598.5 M568.9,598.5 L569.2,596.5 L569.1,594.4 L569.6,592.4 L569.1,590.3 L566.8,589.9 L565.8,587.9 L563.5,587.7 L562.3,585.7 M549.0,667.3 L550.7,668.0 L552.0,666.7 L552.9,665.4 L554.3,664.7 L557.2,664.1 L560.2,664.7 L561.7,665.4 L563.2,664.7 L564.3,663.6 L565.9,663.3 L568.8,663.6 L571.6,664.6 M571.6,664.6 L571.9,662.6 L571.1,660.6 L570.9,658.6 L570.2,656.7 L568.6,654.5 L565.8,654.6 L566.3,652.2 L566.2,649.8 M566.2,649.8 L564.2,649.0 L562.1,648.4 L561.1,650.3 L559.5,651.8 L558.2,650.4 L556.5,649.5 L554.7,649.5 L552.8,649.3 M548.2,845.5 L548.2,845.4 L550.0,844.1 L551.8,842.6 L551.9,840.2 L552.9,838.3 L552.9,836.1 L555.7,835.3 L555.9,832.4 L558.3,832.5 L560.5,831.3 L562.7,831.2 L564.9,831.5 L567.2,830.1 L569.3,831.8 M569.3,831.8 L569.0,829.0 M568.1,822.2 L568.2,822.0 M568.2,822.0 L565.7,821.6 L563.7,820.1 L562.8,817.8 L562.4,815.4 L561.3,813.3 L561.4,811.1 L560.7,809.0 L559.6,807.0 L557.1,807.3 L554.5,806.9 L553.6,804.5 L552.1,802.4 L549.9,803.3 L547.6,803.1 L544.8,803.7 L543.4,801.3 M569.2,827.5 L571.5,827.5 L573.7,828.4 L575.9,828.2 L578.2,827.9 L580.3,826.9 L582.6,826.5 L584.8,827.3 L587.2,827.2 L588.8,827.6 L590.2,828.5 L592.0,827.8 L592.6,826.1 L594.7,824.3 L597.1,822.9 L598.6,825.4 L599.5,828.3 L600.7,829.2 L601.7,830.4 L603.3,831.0 L604.8,830.5 M604.8,830.5 L606.7,829.6 L607.6,827.7 L608.8,826.1 L609.3,824.2 M609.3,824.2 L608.3,822.3 L609.3,820.4 M609.3,820.4 L608.1,819.4 L606.9,818.4 L607.0,816.5 L605.4,815.6 L604.1,814.6 L603.2,813.3 L603.1,811.5 L601.6,810.7 L599.7,811.0 L597.8,811.2 L597.0,809.4 L596.0,807.8 L594.6,806.2 L592.5,807.0 L590.8,805.7 L591.3,803.6 M591.3,803.6 L589.1,803.7 L587.2,802.5 M587.2,802.5 L585.8,804.2 L583.7,805.0 L581.5,804.7 L579.4,805.3 L578.9,807.5 L577.0,808.7 L575.1,809.7 L573.6,811.3 M573.6,811.3 L573.4,813.1 L572.2,814.6 L572.3,816.5 L573.5,818.0 L572.3,819.3 L570.4,819.4 L569.4,820.8 L568.2,822.0 M573.6,811.3 L572.1,809.5 L571.1,807.4 L570.0,805.0 L571.4,802.8 L571.5,800.6 L571.7,798.4 L573.0,796.4 L572.3,794.1 L570.0,793.0 L569.3,790.6 L567.1,790.0 L564.8,789.7 L562.6,788.5 L560.3,789.7 L557.9,788.9 L556.7,786.8 M570.7,862.9 L569.9,860.0 L568.9,857.3 L571.0,855.2 L572.6,852.7 M572.6,852.7 L570.9,853.3 L569.1,853.3 L567.6,851.9 L565.6,852.8 L564.2,851.0 L561.8,850.9 L559.9,852.0 L558.7,853.8 L557.0,853.2 L555.4,852.5 L553.7,851.9 L553.4,851.8 M587.2,802.5 L586.7,800.5 L585.3,799.0 L585.7,797.0 L587.2,795.6 L586.9,793.7 L587.9,792.1 L586.7,790.5 L587.1,788.7 L586.5,786.9 L585.6,785.3 L586.6,783.6 L586.3,781.7 L587.1,780.0 L588.1,778.5 L587.9,776.7 L587.7,774.8 M587.7,774.8 L584.7,774.5 L582.6,772.5 L580.0,773.6 L577.9,775.5 L576.5,773.4 L576.2,770.8 L573.5,770.1 L572.2,767.7 M572.2,767.7 L570.3,768.9 L568.1,769.3 L566.7,771.3 L564.2,771.1 M572.2,767.7 L572.2,765.7 L573.2,763.9 L572.5,762.1 L572.0,760.2 L573.1,758.6 L574.4,757.3 L575.6,755.6 L577.6,755.3 L575.8,754.0 L575.7,751.8 L576.7,750.0 L577.3,748.1 L576.0,746.9 L574.5,745.8 L573.6,744.2 L572.4,742.8 M572.4,742.8 L570.9,741.6 L571.5,739.8 L571.2,738.2 L570.2,736.9 M572.9,721.0 L573.7,719.5 L575.1,718.6 L576.1,716.9 L578.0,717.3 L579.7,717.3 L581.0,716.3 L582.2,715.2 L583.9,714.9 M583.9,714.9 L585.4,714.9 L586.8,714.1 L587.7,712.8 L587.5,711.2 L589.2,709.1 L590.8,707.1 L588.9,704.7 L589.7,701.8 L587.8,699.9 L586.5,697.5 L587.9,695.1 L588.3,692.4 L589.1,690.8 L588.5,689.1 L586.8,689.0 L585.5,687.8 L584.6,685.0 L583.0,682.7 L580.1,683.1 L577.3,682.5 M577.3,682.5 L576.4,681.8 M576.4,681.8 L574.7,681.8 L573.3,682.7 L572.1,684.0 L570.3,684.0 L568.6,684.3 L567.0,684.5 L565.3,683.7 L563.7,684.6 M569.3,831.8 L570.6,833.5 L570.1,835.5 L570.8,837.2 L571.2,839.1 L572.0,840.8 L573.0,842.4 L574.6,843.8 L574.5,845.9 M574.5,845.9 L576.2,845.8 L577.9,845.3 L579.5,845.7 L581.2,845.8 L582.5,844.6 L583.2,843.0 L584.0,841.3 L585.9,840.9 L586.7,842.3 L588.2,843.1 L589.5,844.1 L591.2,844.2 L592.4,845.3 L593.8,846.1 L595.3,847.0 L595.4,848.8 M595.4,848.8 L596.6,847.1 L598.1,845.7 L600.2,844.8 L602.2,845.9 L602.5,843.8 L601.4,841.9 L603.4,841.0 L604.3,838.9 M604.3,838.9 L606.8,837.6 L606.7,834.8 L606.1,832.5 L604.8,830.5 M576.4,681.8 L575.0,680.0 L575.0,677.6 L573.7,675.8 L572.3,674.1 L572.1,671.9 L572.2,669.7 L574.0,667.7 L572.7,665.3 M572.7,665.3 L571.6,664.6 M566.2,649.8 L567.0,648.6 M567.0,648.6 L568.5,647.0 L570.4,646.1 L570.0,644.0 L569.3,642.0 L567.4,641.4 L565.4,641.2 L565.7,639.0 L563.9,637.6 L562.3,635.2 L560.3,633.1 L558.4,631.0 L556.8,628.6 M560.7,626.0 L562.4,627.4 L564.6,627.9 L566.8,628.1 L568.6,629.5 M568.6,629.5 L570.2,628.3 L571.9,627.3 L572.8,625.5 L574.5,624.4 L576.6,623.5 L578.7,624.4 L580.4,623.2 L581.8,621.6 M581.8,621.6 L580.9,620.3 L579.4,619.6 L578.3,618.3 L578.7,616.7 L577.0,617.4 L575.2,617.3 L574.2,615.9 L573.4,614.3 L572.2,613.1 L570.8,612.1 L569.0,612.0 L567.4,612.6 L566.9,611.6 M560.2,570.9 L560.4,571.0 L562.1,571.8 L564.3,571.8 L565.0,569.7 L567.0,569.6 L567.9,568.5 M586.2,874.7 L587.4,872.1 L588.7,869.7 L591.4,868.8 L594.3,868.8 M594.3,868.8 L594.4,868.7 M594.4,868.7 L595.5,866.3 L596.4,863.7 L597.0,860.8 L599.6,859.2 L598.2,858.6 L596.9,857.7 L596.3,856.4 L595.8,854.9 L596.1,853.1 L597.5,852.0 L597.1,850.2 L595.6,849.2 M595.6,849.2 L595.4,848.8 M574.5,845.9 L573.3,847.4 L572.7,849.1 L572.6,850.9 L572.6,852.7 M572.4,742.8 L575.2,743.6 L577.0,745.9 L579.7,745.5 L582.4,745.1 L585.0,746.1 L587.0,747.9 L589.6,749.0 L592.3,748.0 M592.3,748.0 L594.6,746.6 L597.3,745.9 L598.1,744.6 L599.0,743.4 L598.7,741.8 L597.9,740.5 L599.6,738.8 L599.9,736.3 L600.2,734.0 L600.9,731.7 M600.9,731.7 L599.3,731.0 L597.7,730.4 L598.2,728.6 L597.2,727.0 L597.2,725.5 L596.9,724.0 L596.5,722.5 L596.8,721.0 L595.1,721.8 L593.3,721.6 L592.0,720.3 L591.5,718.6 L588.8,717.3 L586.9,715.0 M586.9,715.0 L585.4,714.4 L583.9,714.9 M567.0,648.6 L568.2,646.5 L570.2,645.3 L572.2,644.1 L573.9,642.5 M573.9,642.5 L574.6,640.7 L575.1,638.8 M575.1,638.8 L573.6,636.4 L572.4,633.7 L571.2,631.0 L568.6,629.5 M572.7,665.3 L574.7,664.4 L576.5,663.2 L578.3,661.9 L580.2,660.6 L582.7,661.4 L584.6,659.5 L585.8,657.5 L587.8,656.2 M587.8,656.2 L587.8,656.1 M587.8,656.1 L586.5,654.0 L584.3,652.7 L582.3,651.2 L580.0,650.2 L579.8,647.4 L577.5,646.0 L577.2,644.5 L576.9,643.0 L575.4,642.8 L573.9,642.5 M584.5,903.2 L585.1,902.6 L586.2,900.7 M586.2,900.7 L585.8,897.9 L586.5,895.1 L585.7,893.7 L584.4,893.0 L582.9,892.0 L581.3,892.9 M562.7,582.8 L564.8,581.2 L565.8,578.8 L568.4,578.6 L570.9,578.8 L572.0,576.4 L574.0,574.8 L576.5,575.0 L579.1,574.6 M579.1,574.6 L579.3,572.5 L577.4,571.5 L576.3,570.1 L576.0,568.3 L577.1,566.8 L577.4,566.5 M568.9,598.5 L571.2,598.4 L573.4,597.6 L575.6,596.7 L577.3,595.1 L578.8,597.0 L581.3,597.4 L583.6,597.8 L585.7,598.6 M585.7,598.6 L586.5,597.0 M586.5,597.0 L587.6,594.8 L587.4,592.3 L587.0,589.9 L586.8,587.4 L589.0,585.7 L591.2,584.0 L590.5,582.7 L589.6,581.4 L589.5,579.8 L590.6,578.6 M590.6,578.6 L588.9,577.7 L588.2,576.0 L586.4,575.2 L586.0,573.2 L584.4,571.4 L582.0,571.5 L579.7,572.2 L579.1,574.6 M581.8,621.6 L583.7,623.1 L584.6,625.4 L586.1,627.8 L589.0,627.3 L591.0,625.1 L591.3,622.2 L594.1,622.0 L596.9,622.7 M596.9,622.7 L596.1,619.9 L595.5,617.1 L596.5,614.3 L598.5,612.2 M598.5,612.2 L597.0,610.4 L595.7,608.4 L594.8,606.1 L592.5,605.1 L590.1,604.4 L588.2,602.8 L587.2,600.5 L585.7,598.6 M584.9,565.0 L586.2,565.1 L588.4,565.0 L589.2,564.1 M577.3,682.5 L579.6,681.2 L582.1,680.4 L584.5,679.4 L586.9,678.5 L589.6,679.6 L592.1,678.2 L594.8,678.3 L597.1,676.9 M597.1,676.9 L596.9,674.8 L597.8,672.9 L596.4,671.2 L594.3,671.0 L592.3,671.3 L591.3,669.6 L589.4,670.1 L588.2,668.5 L588.8,667.0 L588.3,665.4 L587.3,663.9 L588.1,662.3 L588.7,660.8 L588.5,659.2 L588.1,657.7 L587.8,656.2 M587.7,774.8 L588.2,774.6 M588.2,774.6 L588.3,773.0 L588.6,771.4 L590.1,770.7 L591.5,769.9 L592.9,769.2 L594.1,768.3 L595.4,769.6 L597.1,768.9 L598.2,766.4 L600.1,764.5 L600.7,761.9 L601.5,759.4 M601.5,759.4 L600.1,758.1 L598.5,757.0 L597.8,754.8 L595.6,754.7 L595.1,752.9 L593.9,751.4 L593.3,749.6 L592.3,748.0 M575.1,638.8 L577.6,637.9 L579.7,636.4 L581.3,636.3 L582.7,635.5 L582.4,633.9 L583.2,632.5 L585.8,631.8 L588.4,631.3 L591.2,631.8 L593.4,633.4 M593.4,633.4 L595.1,631.8 L596.6,630.1 L595.7,627.5 L597.7,625.6 M597.7,625.6 L596.6,624.3 L596.9,622.7 M586.2,900.7 L588.5,900.9 L590.7,900.3 L592.4,901.8 L594.8,902.0 M594.8,902.0 L595.0,900.3 L595.5,898.7 L596.9,897.8 L598.4,897.0 L597.9,895.5 L597.9,893.9 L598.1,892.4 L598.7,890.9 L599.9,889.7 L600.8,888.3 L602.5,888.5 L604.2,888.5 L605.7,888.4 L607.2,888.8 L608.7,888.7 L610.2,888.6 M610.2,888.6 L608.7,887.3 L606.9,886.3 L606.0,884.5 L606.0,882.4 L605.0,884.5 L603.0,885.7 L600.7,885.3 L598.7,884.2 L597.1,884.0 L595.5,884.0 L593.9,883.3 L593.0,881.9 L592.2,880.3 L590.6,879.4 L588.9,879.5 L587.2,880.0 M587.8,656.1 L588.6,654.0 L590.0,652.4 L592.0,651.3 L594.2,651.1 M594.2,651.1 L591.6,650.0 L590.1,647.6 L590.5,646.1 L590.6,644.6 L589.9,643.1 L588.4,642.5 L589.9,640.2 L592.3,638.7 L593.3,636.2 L593.4,633.4 M603.3,908.3 L603.3,906.7 L601.9,905.6 L600.7,904.5 L599.3,903.6 L597.7,903.2 L596.3,902.4 L594.8,902.0 M590.6,578.6 L590.6,576.3 L591.8,574.4 L593.5,572.9 L593.9,570.7 L596.0,571.4 L598.1,571.6 L600.2,570.8 L602.5,571.1 M602.5,571.1 L600.4,570.6 L598.4,570.5 L596.1,570.8 L594.4,569.2 L595.8,567.2 L596.3,564.8 L595.1,562.9 M597.1,676.9 L598.7,677.7 L599.7,679.2 L601.3,678.5 L602.8,677.6 L605.4,679.0 L608.3,679.2 M608.3,679.2 L609.0,676.8 L611.4,676.6 M611.4,676.6 L612.6,675.3 L613.5,673.6 M613.5,673.6 L612.7,671.4 L613.0,669.1 M613.0,669.1 L611.5,667.1 L611.9,664.5 L611.6,662.0 L609.5,660.5 L609.0,657.9 L607.0,656.3 L604.9,655.2 L602.8,654.1 M602.8,654.1 L600.7,653.0 L598.5,652.6 L596.0,652.7 L594.2,651.1 M598.5,612.2 L600.1,610.0 L602.7,609.4 L605.3,609.1 L607.8,609.2 L610.5,608.6 L613.0,607.5 L612.8,606.0 L612.4,604.5 L613.3,603.1 L614.8,602.4 M614.8,602.4 L613.7,600.1 L614.4,597.6 L616.7,595.7 L615.8,592.9 L615.0,590.4 L613.2,588.4 L613.5,586.6 L612.0,585.5 L612.9,584.1 L614.2,583.5 M614.3,583.5 L612.8,585.2 L610.6,586.0 L608.8,584.0 L606.2,584.7 L604.1,584.9 L602.0,584.8 L599.9,584.4 L597.8,584.9 L595.5,585.0 L593.6,586.5 L591.6,587.4 L589.8,588.8 L589.5,591.3 L587.3,592.5 L587.3,594.9 L586.5,597.0 M602.5,571.1 L604.6,572.0 L605.3,574.2 L607.5,574.7 L608.9,576.5 L609.1,575.9 M617.2,571.9 L617.8,571.7 L618.5,570.2 L620.1,570.0 L621.2,568.8 M621.2,568.8 L622.5,567.1 L623.8,565.3 M623.8,565.3 L623.9,563.3 L623.8,561.3 L624.4,559.3 L623.3,557.4 L622.7,555.2 L621.0,553.8 L620.3,552.1 M597.7,625.6 L599.5,626.5 L599.9,628.5 L600.7,630.2 L602.1,631.4 L601.6,633.4 L602.7,635.2 L602.9,637.4 L605.1,638.1 L606.9,638.3 L608.6,637.4 L610.5,637.4 L612.2,637.0 L614.1,637.7 L615.9,636.6 L617.5,635.8 L619.3,635.5 M619.3,635.5 L621.1,634.2 L623.0,635.3 L624.7,634.3 L625.4,632.5 L627.2,632.2 L628.9,632.1 L630.4,631.1 L631.8,630.2 L633.4,628.6 L635.1,627.3 L635.6,624.9 L633.6,623.3 L634.0,621.4 L633.7,619.5 L632.4,618.0 L631.1,616.6 M631.1,616.6 L630.0,614.5 L631.5,612.7 L630.6,610.8 L629.3,609.3 M629.3,609.3 L627.4,608.1 L626.6,606.1 L624.5,605.8 L622.6,604.7 L620.5,604.6 L618.7,603.6 L616.7,603.1 L614.8,602.4 M586.9,715.0 L588.4,716.5 L590.5,716.2 L592.2,715.2 L594.0,714.6 L595.7,713.6 L596.2,711.7 L597.6,710.6 L598.1,708.8 M598.1,708.8 L597.0,706.5 L597.2,704.0 L597.4,701.5 L598.3,699.2 L601.1,700.3 L603.3,698.4 L605.8,697.2 L606.7,694.6 M606.7,694.6 L608.7,693.1 L610.9,692.0 L609.2,689.8 L610.0,687.1 L609.7,685.1 L609.7,683.0 L609.2,681.0 L608.3,679.2 M614.7,914.3 L616.2,913.8 L618.2,913.4 L619.4,911.8 L621.3,912.2 L623.0,913.0 L624.7,912.5 L626.0,911.2 L626.8,909.7 L627.4,908.1 L627.2,906.4 L627.5,904.7 L628.2,903.2 L628.4,901.5 M628.4,901.5 L627.3,899.8 L627.8,897.8 M627.8,897.8 L628.2,895.2 L626.4,893.3 L624.1,892.6 L621.9,891.7 L619.9,891.0 L618.0,890.0 L616.3,888.7 L614.3,888.1 M614.3,888.1 L612.2,888.0 L610.2,888.6 M594.4,868.7 L595.8,869.2 L597.4,869.4 L598.3,870.7 L599.7,871.5 L601.3,870.4 L602.8,871.5 L604.3,871.6 L605.8,871.7 L606.6,870.5 L607.6,869.3 L609.0,868.8 L610.1,867.7 L611.4,866.8 L613.0,866.6 L613.6,865.1 L614.8,864.0 M614.8,864.0 L615.2,863.4 M615.2,863.4 L613.2,863.2 L611.4,863.9 L609.8,862.8 L607.8,863.1 L605.8,863.1 L604.1,862.1 L602.3,862.9 L600.4,863.1 L598.6,862.1 L597.4,860.5 L595.3,859.4 L595.0,857.2 L594.5,855.2 L594.5,853.1 L594.8,851.1 L595.6,849.2 M591.3,803.6 L592.8,805.9 L593.7,808.4 L596.3,809.5 L599.1,809.0 L600.9,807.4 L603.2,806.8 L604.5,804.5 L607.1,804.1 L608.1,802.3 L609.3,800.7 L610.5,798.9 L612.7,798.5 L613.5,796.6 L614.7,795.0 L616.2,793.6 L617.4,792.1 M617.4,792.1 L617.9,789.8 L618.1,787.6 L617.8,785.0 L615.5,783.9 M615.5,783.9 L614.3,782.1 L612.5,780.9 L610.9,779.3 L608.6,779.6 L606.7,780.3 L605.0,781.5 L603.0,782.3 L600.9,782.0 L598.9,781.8 L596.9,782.2 L595.5,780.7 L593.6,780.0 L593.2,777.9 L592.3,775.9 L590.2,775.4 L588.2,774.6 M601.5,759.4 L604.0,760.5 L606.3,758.9 L608.6,759.4 L610.9,760.3 L613.8,760.2 L614.7,757.4 L617.5,756.5 L617.7,753.6 M617.7,753.6 L616.9,752.2 L616.8,750.6 L616.4,749.1 L615.9,747.7 L615.5,745.9 L616.0,744.1 L617.5,743.1 L619.2,742.4 M619.2,742.4 L618.0,741.1 L617.9,739.3 L617.9,737.7 L617.6,736.0 L617.5,734.2 L616.9,732.5 L615.2,731.7 L613.8,730.7 L612.7,732.4 L611.5,734.1 L609.5,733.6 L607.5,733.2 L605.7,733.1 L604.3,732.1 L602.5,732.4 L600.9,731.7 M614.3,888.1 L613.7,885.8 L613.9,883.4 M613.9,883.4 L611.7,882.5 L609.4,881.9 L608.0,879.9 L608.0,877.5 L608.9,875.3 L610.7,873.7 L611.1,871.0 L609.2,869.2 L607.2,869.1 L605.3,868.5 L603.8,867.1 L601.8,866.5 L600.1,867.6 L598.3,868.5 L596.4,869.7 L594.3,868.8 M619.2,742.4 L620.4,741.2 L621.6,739.9 L622.2,738.1 L624.0,737.5 M624.0,737.5 L624.3,735.1 L625.1,732.9 L626.2,730.9 L627.6,729.1 L628.3,726.6 L629.8,724.4 L627.9,722.5 L627.3,720.0 M627.3,720.0 L626.4,718.3 M626.4,718.3 L624.3,719.8 L621.8,719.6 L619.6,718.1 L617.1,719.0 L617.0,716.3 L614.7,714.9 L615.0,712.4 L613.3,710.5 L610.8,711.0 L609.5,713.3 L607.1,713.6 L605.1,714.9 L603.5,713.1 L601.1,712.5 L599.4,710.8 L598.1,708.8 M615.2,863.4 L616.3,862.5 M616.3,862.5 L615.9,860.4 L616.3,858.4 L615.7,856.4 L615.4,854.3 L613.6,852.6 L614.6,850.3 L615.3,848.2 L614.6,846.2 M614.6,846.2 L612.8,846.0 L611.0,846.4 L609.3,845.9 L607.9,844.7 L606.8,843.3 L606.7,841.4 L605.2,840.5 L604.3,838.9 M602.8,654.1 L604.2,652.7 L605.2,651.1 L604.1,649.4 L604.2,647.3 L605.8,646.9 L607.3,646.1 L609.4,646.6 L610.6,644.9 L611.5,643.4 L613.3,643.5 L614.3,642.0 L616.1,642.2 L617.4,641.4 L618.5,640.2 L619.4,639.0 L620.2,637.7 M620.2,637.7 L619.3,635.5 M606.7,694.6 L608.2,695.0 L609.7,695.2 L611.3,695.4 L612.3,696.6 L614.0,696.7 L615.7,696.6 L616.8,697.8 L617.8,699.1 L617.2,701.4 L619.2,702.7 L621.3,702.5 L622.9,703.8 L624.6,703.5 L626.0,702.3 L627.8,702.1 L629.5,702.0 M629.5,702.0 L631.9,700.7 L632.9,698.2 M632.9,698.2 L633.1,695.4 M633.1,695.4 L632.5,693.4 L631.1,691.8 L630.1,689.7 L627.8,689.4 L625.4,689.5 L623.7,691.1 L621.7,690.1 L619.9,688.8 L618.2,687.6 L616.2,687.0 L614.5,685.9 L613.1,684.5 L613.8,682.4 L614.0,680.2 L612.4,678.6 L611.4,676.6 M615.5,783.9 L613.5,783.0 L613.2,780.8 L613.4,778.7 L615.3,777.7 L616.3,776.3 L616.8,774.6 L618.6,774.8 L620.2,773.9 L621.9,774.0 L622.9,772.5 L623.3,771.0 L624.5,770.0 L625.3,767.2 L625.9,764.4 M625.9,764.4 L624.8,762.8 L623.1,761.9 L623.3,760.0 L622.9,758.2 L621.2,757.0 L621.1,754.9 L619.6,753.8 L617.7,753.6 M614.6,846.2 L616.0,847.8 L618.2,848.0 L620.1,847.5 L621.9,846.5 L622.9,844.5 L625.0,844.1 L625.8,842.2 L625.5,840.2 M625.5,840.2 L626.7,838.8 L627.8,837.4 L626.8,835.7 L627.5,833.8 M627.5,833.8 L624.6,834.0 L621.8,834.7 L620.2,834.7 L618.6,834.7 L617.1,833.8 L616.8,832.0 L614.0,831.0 L612.9,828.3 L611.7,825.7 L609.3,824.2 M629.3,609.3 L631.8,607.9 L632.4,605.0 L634.5,603.2 L637.0,602.3 M637.0,602.3 L636.9,599.7 L638.8,597.9 L637.5,595.6 L638.5,593.1 M638.5,593.1 L636.7,591.7 L635.8,589.6 L636.6,587.5 L637.1,585.4 L636.0,583.6 L635.7,581.7 L634.7,579.9 L633.7,578.2 L633.5,575.8 L631.7,574.3 L629.7,572.7 L630.0,570.2 L627.5,570.8 L625.2,572.0 L622.9,570.8 L621.2,568.8 M613.9,883.4 L614.9,882.0 L616.6,881.8 L616.0,880.4 L616.1,878.8 L616.8,876.1 L615.4,873.8 L615.4,871.0 L616.9,868.8 L615.3,866.6 L614.8,864.0 M627.8,897.8 L627.6,895.1 L629.7,893.4 L631.3,891.6 L633.2,890.2 L635.8,889.5 L637.7,887.7 L639.3,885.5 L639.1,882.8 M639.1,882.8 L638.5,880.1 L639.3,877.5 M639.3,877.5 L637.1,875.5 L635.3,873.3 L634.7,871.6 L635.0,869.8 L633.5,868.9 L631.7,868.7 L630.1,868.5 L628.7,867.9 L629.0,865.9 L627.3,865.0 L625.1,863.0 L622.4,861.8 M622.4,861.8 L620.9,861.7 L619.3,861.6 L617.7,861.7 L616.3,862.5 M609.3,820.4 L611.5,820.0 L613.6,819.3 L612.8,816.7 L614.9,814.9 L616.3,813.4 L617.4,811.7 L619.4,811.1 L621.2,810.2 M621.2,810.2 L621.5,808.5 L621.5,806.7 L622.6,805.1 L622.2,803.3 M622.2,803.3 L622.9,801.7 L623.7,800.2 L624.1,798.4 L623.2,796.7 L621.8,795.6 L620.0,795.4 L618.9,794.1 L618.0,792.6 M618.0,792.6 L617.4,792.1 M613.0,669.1 L612.2,666.5 L610.4,664.5 L607.8,663.4 L606.2,661.2 L607.5,658.9 L608.9,656.7 L609.6,654.1 L611.3,652.0 L612.3,649.5 L612.5,646.9 L615.3,646.5 L617.1,644.4 L619.6,643.9 L622.0,643.3 L624.3,644.0 L626.8,644.5 M626.8,644.5 L624.6,642.9 L624.4,640.3 L622.5,638.7 L620.2,637.7 M622.4,861.8 L624.6,859.8 L627.0,858.0 L627.1,856.3 L628.3,855.0 L629.7,854.3 L631.2,853.9 M631.2,853.9 L632.4,852.0 L632.8,849.8 L632.7,847.6 L631.6,845.7 L631.6,843.2 L629.5,841.9 L627.3,841.4 L625.5,840.2 M625.9,764.4 L628.7,764.1 L630.9,765.7 M630.9,765.7 L631.5,764.1 L632.1,762.5 L633.6,761.6 L635.4,761.3 L637.0,760.7 L638.4,759.8 L640.1,759.7 L641.6,760.6 L643.4,761.0 L645.0,760.4 L645.7,758.9 L646.8,757.6 L648.5,757.1 L649.4,755.6 L651.0,755.4 L652.6,755.9 M652.6,755.9 L653.6,754.6 M653.6,754.6 L652.3,752.4 L652.0,749.9 L653.0,747.6 L654.5,745.6 M654.5,745.6 L653.6,743.6 L653.4,741.5 M653.4,741.5 L651.2,741.6 L649.3,742.6 L647.2,743.1 L645.1,743.6 L644.7,741.1 L642.2,740.4 L640.9,738.6 L639.0,737.5 L637.2,738.2 L635.3,738.2 L633.5,739.1 L631.5,738.5 L629.5,739.3 L627.7,738.2 L626.1,736.5 L624.0,737.5 M623.8,565.3 L626.3,565.9 L628.5,564.6 L630.7,565.3 L633.1,565.4 M633.1,565.4 L634.4,563.9 L636.4,563.8 L637.9,565.0 L639.1,566.4 L640.9,566.2 L642.0,564.7 L641.6,563.0 L642.4,561.4 L645.1,561.4 L647.6,560.5 L649.6,558.8 L651.9,557.6 M651.9,557.6 L651.5,555.4 L649.4,554.4 L650.3,552.6 L651.3,550.8 L650.6,549.2 L650.5,547.5 L649.3,546.6 M633.4,544.0 L631.7,544.2 L630.0,542.7 L628.4,542.9 M626.4,718.3 L627.1,716.2 L626.4,714.1 L627.2,712.1 L627.9,710.1 L628.5,708.1 L629.3,706.2 L628.4,704.0 L629.5,702.0 M618.0,792.6 L619.7,793.0 L621.4,792.7 L623.2,792.8 L624.7,793.7 L626.0,795.0 L627.7,795.6 L629.4,796.6 L631.2,795.7 L631.7,793.7 L633.8,793.5 L635.8,793.0 L636.0,790.9 L637.0,789.6 L638.3,788.4 L639.8,787.5 L641.4,786.8 M641.4,786.8 L641.2,785.0 L642.6,783.8 M642.6,783.8 L643.1,782.2 L642.4,780.7 L642.8,779.2 L643.0,777.7 L641.4,777.2 L639.8,776.8 L638.9,775.4 L638.2,773.8 L638.9,772.2 L637.9,770.8 L637.0,769.4 L635.3,769.1 L633.2,767.3 L630.9,765.7 M627.5,833.8 L627.7,832.0 L629.6,831.5 L630.6,830.2 L630.2,828.5 L631.1,827.2 L632.1,825.9 L633.8,826.3 L635.2,825.1 L638.1,825.1 L641.0,824.5 L642.7,824.8 L644.1,823.9 L645.7,824.5 L646.7,825.7 M646.7,825.7 L644.7,826.7 L642.6,826.9 L639.9,826.7 L639.2,824.2 L636.9,823.5 L636.4,821.2 L634.5,820.3 L632.4,820.6 L630.3,819.4 L627.8,819.4 L626.8,817.1 L627.4,814.7 L625.5,814.0 L623.6,813.5 L621.6,812.4 L621.2,810.2 M626.8,644.5 L629.6,645.4 M629.6,645.4 L630.2,643.0 L631.8,641.3 L634.2,640.7 L635.4,638.5 L637.6,637.4 L638.9,635.4 L641.2,634.7 L643.6,634.7 M643.6,634.7 L643.6,633.3 M643.6,633.3 L644.4,630.7 L643.6,628.0 L642.1,628.2 L640.6,628.2 L639.5,627.1 L638.8,625.8 L638.7,623.9 L637.1,622.9 L635.4,623.0 L633.8,623.6 L634.7,620.9 L634.1,618.1 M634.1,618.1 L632.9,616.8 L631.1,616.6 M613.5,673.6 L615.7,673.2 L617.8,673.7 L619.1,671.8 L621.3,671.1 L623.4,671.7 L625.5,670.9 L627.4,671.7 L629.4,672.3 M629.4,672.3 L631.4,671.5 L632.5,669.7 L634.1,668.3 L635.3,666.6 L636.1,664.7 L635.7,662.5 L635.7,661.9 M637.3,647.9 L636.9,646.8 L635.0,646.9 L633.2,646.2 L631.7,644.9 L629.6,645.4 M633.1,695.4 L635.6,694.8 L635.9,692.2 L636.9,690.2 L637.1,688.1 L638.0,685.9 L637.7,683.5 L640.2,683.2 L641.4,680.9 M641.4,680.9 L639.2,680.7 L637.4,679.2 L638.1,676.9 L636.5,675.0 L634.8,674.1 L633.0,673.5 L631.5,672.1 L629.4,672.3 M631.2,853.9 L633.5,854.3 L634.6,852.3 L636.7,851.9 L638.1,853.4 L640.3,853.7 L641.7,852.1 L643.3,850.7 L643.0,848.6 L644.3,850.1 L646.2,850.3 L647.5,848.6 L649.6,849.3 L651.4,849.2 L652.9,850.2 L654.5,850.9 L655.4,852.5 M655.4,852.5 L654.8,849.6 L656.3,847.0 L659.0,846.3 L661.7,846.0 M661.7,846.0 L661.3,844.5 L660.1,843.3 L658.3,843.8 L657.2,842.2 L657.3,840.4 L657.9,838.7 L656.1,838.2 L654.8,836.8 L654.7,835.1 L655.6,833.6 L654.4,832.4 L653.4,831.2 L652.8,828.4 L651.9,825.6 M651.9,825.6 L649.3,826.1 L646.7,825.7 M637.8,923.3 L638.2,922.5 L639.6,920.3 L642.0,919.2 L640.5,917.6 L638.9,916.2 L638.2,914.1 L636.8,912.4 L635.9,910.5 L635.2,908.5 L633.5,907.0 L633.0,904.8 M633.0,904.8 L630.6,903.3 L628.4,901.5 M627.3,720.0 L629.6,720.5 L632.0,720.3 L634.0,721.6 L636.3,722.4 L637.4,724.9 L640.0,726.1 L641.2,725.1 L642.3,724.0 L643.8,724.4 L645.2,725.1 L647.0,722.8 L649.8,723.5 L652.4,722.7 L653.3,720.2 L654.9,720.0 L656.5,719.7 L657.6,720.9 L658.7,722.1 L660.6,719.9 L662.4,717.7 M662.4,717.7 L661.2,715.6 L662.4,713.5 L662.3,711.1 L660.4,709.8 M660.4,709.8 L658.8,710.6 L656.9,710.8 L654.8,710.6 L653.9,708.7 L652.3,708.1 L651.2,706.7 L650.0,705.4 L649.4,703.8 M649.4,703.8 L646.7,703.8 L644.2,704.9 L643.9,701.9 L641.4,700.4 L639.7,698.7 L637.7,697.3 L635.6,699.4 L632.9,698.2 M622.2,803.3 L623.2,804.6 L624.7,805.0 L626.3,805.1 L627.6,805.8 L629.5,805.8 L630.1,804.0 L631.3,802.6 L633.0,803.2 L635.8,803.8 L638.4,802.4 L640.9,801.3 L643.6,800.8 M643.6,800.8 L641.7,799.7 L641.8,797.6 L640.7,796.0 L640.6,794.1 L642.0,792.6 L642.3,790.6 L640.5,789.0 L641.4,786.8 M634.1,618.1 L635.6,617.3 L637.2,617.5 L638.8,617.5 L640.3,617.7 L641.8,618.4 L643.3,619.1 L644.8,618.3 L646.5,618.5 M646.5,618.5 L647.1,616.1 L648.4,614.1 L650.3,612.6 L652.5,611.5 L654.7,610.7 L656.4,609.1 L659.1,609.4 L659.7,608.6 M653.7,599.9 L652.5,600.3 L651.3,602.2 L649.0,601.7 L647.3,601.6 L645.6,601.7 L643.8,601.2 L642.9,599.5 L641.4,600.3 L640.3,601.6 L638.6,601.7 L637.0,602.3 M651.9,825.6 L651.8,823.9 L650.3,822.9 L651.3,821.6 L652.1,820.2 L654.5,818.6 L655.3,815.8 M655.3,815.8 L653.7,813.7 L651.1,813.1 L651.5,810.3 L649.5,808.3 L649.1,805.7 L648.4,803.1 L645.5,802.8 L643.6,800.8 M633.0,904.8 L634.7,905.0 L635.8,906.3 L637.6,907.0 L638.9,905.7 L639.4,907.3 L641.0,908.0 L641.5,909.6 L643.2,910.0 L644.4,911.2 L646.1,910.8 L647.4,909.9 L648.9,909.3 L651.7,909.3 L654.6,909.2 M654.6,909.2 L655.5,907.0 L655.5,904.6 L654.8,902.3 L655.3,899.9 L656.2,897.7 L657.7,895.9 L659.8,894.6 L660.8,892.3 M660.8,892.3 L659.8,889.6 L657.8,887.5 L656.0,887.7 L654.3,888.0 L653.8,886.3 L652.6,884.9 M652.6,884.9 L650.4,884.2 L648.7,885.8 L646.9,886.8 L645.3,888.0 L644.6,885.9 L643.1,884.3 L640.8,884.5 L639.1,882.8 M641.4,680.9 L643.1,680.6 M643.1,680.6 L644.8,680.0 L646.7,680.3 L648.0,679.1 L649.8,678.5 M649.8,678.5 L649.3,676.9 L649.7,675.2 L650.1,673.1 L648.3,672.1 L646.5,672.5 L644.7,671.9 L643.6,670.5 L642.4,669.1 L642.4,667.5 L641.6,666.1 L640.9,664.8 L640.6,663.2 L639.5,662.0 L638.0,661.4 L637.6,660.3 M638.5,593.1 L639.7,594.4 L641.5,594.2 L643.5,593.9 L643.8,591.9 L645.7,590.0 L647.9,588.3 M647.9,588.3 L647.7,585.6 L647.5,583.0 L648.2,580.2 L646.9,577.7 M646.9,577.7 L644.7,576.5 L643.5,574.4 L642.1,572.5 L640.9,570.5 L638.9,568.5 L638.5,565.7 L635.9,564.4 L633.1,565.4 M655.3,815.8 L657.4,814.8 L659.5,813.7 L662.4,813.9 L663.5,811.2 L664.1,808.8 L666.0,807.1 L668.2,806.1 L669.8,804.3 M669.8,804.3 L670.7,802.2 L670.0,800.0 L668.5,798.1 L669.1,795.8 L666.8,796.2 L665.1,794.5 L662.8,794.5 L661.1,793.1 L660.4,791.0 L661.3,789.1 L659.9,787.5 L658.2,786.5 L657.2,784.8 L655.5,784.1 L654.6,782.5 L653.6,781.0 M653.6,781.0 L651.0,782.2 L648.3,783.4 L645.5,783.7 L642.6,783.8 M639.3,877.5 L640.6,875.4 L642.7,874.4 L645.0,874.0 L647.3,873.9 L647.3,871.6 L646.3,869.6 L645.8,867.3 L646.7,865.2 L647.6,863.5 L649.3,862.7 L651.1,861.6 L650.9,859.4 L651.1,857.5 L652.0,855.8 L653.3,854.4 L655.0,853.5 M655.0,853.5 L655.4,852.5 M653.6,781.0 L655.1,779.1 M655.1,779.1 L656.7,776.7 L657.5,774.0 L656.0,771.6 L654.9,769.0 M654.9,769.0 L655.3,767.3 L655.1,765.5 L655.4,763.7 L656.3,762.1 L657.2,760.0 L655.9,758.1 L653.9,757.6 L652.6,755.9 M654.9,769.0 L657.3,768.6 L658.5,766.5 L660.4,767.7 L662.8,767.6 L665.1,766.8 L666.6,768.7 L668.8,768.5 L670.4,769.9 M670.4,769.9 L668.5,768.0 L668.9,765.2 L667.4,763.2 L666.6,760.9 M666.6,760.9 L665.0,760.0 L663.5,758.9 L661.5,758.5 L660.6,756.7 L658.5,756.6 L657.3,754.9 L655.5,753.9 L653.6,754.6 M653.4,741.5 L655.6,741.8 L657.7,741.6 L658.8,739.7 L659.3,737.6 L658.7,735.7 L659.8,734.1 L659.9,732.4 L660.2,730.6 L661.0,729.0 L661.3,727.2 L661.6,725.1 L659.7,724.0 L660.2,722.4 L661.2,721.1 L661.3,719.3 L662.7,718.2 M662.7,718.2 L662.4,717.7 M652.6,884.9 L654.8,883.3 L656.9,881.7 L658.4,881.1 L659.6,880.1 L659.3,878.6 L659.5,877.0 M659.5,877.0 L658.3,875.1 L659.3,873.0 L657.0,873.0 L656.0,870.9 L655.8,868.8 L655.6,866.7 L657.8,866.3 L659.4,864.8 L658.2,863.6 L657.9,861.9 L656.1,861.5 L655.0,860.0 L653.3,858.9 L653.6,856.8 L654.0,855.0 L655.0,853.5 M649.4,703.8 L649.2,702.0 L648.1,700.6 L646.1,700.8 L644.8,699.3 L644.4,697.2 L645.8,695.5 L643.9,694.8 L642.6,693.2 L644.3,691.9 L646.5,691.4 L647.2,689.3 L646.9,687.1 L645.3,685.9 L643.9,684.5 L644.3,682.4 L643.1,680.6 M649.8,678.5 L652.6,678.0 M652.6,678.0 L651.7,676.3 L651.2,674.4 L649.1,673.8 L648.5,671.7 L649.1,669.7 L649.5,667.7 L649.8,667.4 M648.0,664.1 L647.6,664.2 L646.0,662.8 L647.1,662.3 M643.6,633.3 L644.4,630.7 L645.6,628.3 L646.5,627.7 M650.0,620.7 L648.1,620.5 L646.5,618.5 M644.4,634.6 L643.6,634.7 M651.9,557.6 L654.4,557.6 L656.6,558.6 M656.6,558.6 L657.9,556.5 L660.1,555.9 L661.9,554.4 L664.3,554.3 L666.0,552.5 L665.4,550.1 L664.5,547.8 L665.9,545.7 M665.9,545.7 L666.0,543.6 L665.9,541.4 M665.9,541.4 L665.1,539.8 M660.4,709.8 L660.0,708.2 L659.7,706.5 L660.3,704.8 L661.7,703.9 M661.7,703.9 L661.0,702.4 L659.6,701.4 L659.1,699.8 L658.6,698.2 L658.5,696.5 L657.8,695.0 L657.7,693.4 L657.1,691.8 L657.0,690.0 L656.3,688.3 L657.0,686.5 L658.5,685.4 L659.4,683.6 L660.0,681.7 L657.6,681.3 L657.2,678.9 M657.2,678.9 L654.7,679.4 L652.6,678.0 M662.7,718.2 L663.9,719.2 L664.9,720.3 L666.2,719.4 L667.7,719.1 M667.7,719.1 L669.2,718.8 L670.8,718.7 L671.2,717.2 L672.2,716.0 L672.9,714.2 L674.8,713.8 L674.1,712.2 L673.6,710.7 L675.9,712.5 L678.8,712.1 L681.1,710.5 L683.8,710.2 M683.8,710.2 L683.1,707.5 L683.7,704.8 L681.8,702.8 L680.5,700.4 L681.7,698.8 L680.8,697.0 L679.1,696.4 L678.3,694.7 L679.5,693.7 L680.2,692.3 L681.9,691.8 L682.2,690.1 M682.2,690.1 L679.6,690.1 M679.6,690.1 L678.7,691.7 L678.6,693.5 L677.1,694.8 L675.2,694.4 L673.0,694.7 L672.0,692.8 L670.8,694.2 L669.1,695.0 L667.4,695.2 L665.6,695.2 L664.4,696.6 L664.2,698.4 L663.4,699.7 L663.2,701.3 L661.6,702.1 L661.7,703.9 M662.5,595.7 L661.1,593.2 M661.1,593.2 L659.5,591.7 L658.3,589.9 L657.5,587.8 L656.2,586.1 L653.8,585.4 L651.4,584.9 L649.8,586.7 L647.9,588.3 M659.5,919.7 L659.5,918.3 L661.0,916.7 M661.0,916.7 L661.1,915.8 M661.1,915.8 L660.4,913.1 L657.6,912.7 L656.2,910.9 L654.6,909.2 M683.2,599.6 L683.1,599.4 L682.6,597.5 L682.4,595.6 L681.1,593.8 L681.8,591.8 M681.8,591.8 L680.6,591.1 M680.6,591.1 L678.3,591.4 M678.3,591.4 L675.5,590.7 L674.7,591.9 M646.9,577.7 L648.9,578.5 L650.6,577.1 L652.4,576.8 L654.3,576.9 L656.2,577.0 L658.1,577.1 L660.0,576.8 L661.8,576.3 M661.8,576.3 L661.9,574.4 L660.5,573.2 L660.9,571.4 L660.1,569.8 L660.5,567.8 L659.3,566.2 L659.6,564.0 L661.8,563.4 M661.8,563.4 L660.3,562.1 L659.9,560.2 L658.0,559.9 L656.6,558.6 M657.2,678.9 L658.1,677.6 M661.7,846.0 L664.6,845.5 L666.8,847.3 M666.8,847.3 L669.0,848.4 L671.5,848.5 L673.7,847.2 L676.3,847.4 L678.7,846.3 L680.8,844.8 L683.0,846.5 L685.7,846.7 M685.7,846.7 L688.1,845.7 L689.7,843.6 M689.7,843.6 L688.8,841.9 L688.1,840.1 L686.4,839.0 L686.1,836.9 L685.4,834.7 L684.3,832.6 L685.5,830.5 L687.7,829.5 L688.6,827.9 L689.1,826.2 L688.9,824.3 L689.7,822.6 L690.3,820.8 L690.7,818.9 L692.0,817.6 L693.5,816.4 M693.5,816.4 L692.8,815.0 L691.4,814.2 L689.7,814.4 L688.5,813.3 L687.4,812.1 L686.2,811.2 L685.7,809.6 L685.6,808.1 L682.7,807.3 L680.0,806.3 L677.6,804.5 L675.6,802.4 M675.6,802.4 L674.2,803.0 L672.8,803.6 L671.2,803.3 L669.8,804.3 M655.1,779.1 L658.0,779.7 L659.6,777.2 L662.0,776.7 L664.4,776.7 L666.8,777.5 L669.4,777.8 L672.1,777.7 L674.0,775.8 M674.0,775.8 L673.4,773.8 L674.0,771.8 L672.4,770.5 L670.4,769.9 M661.1,593.2 L659.5,590.9 L656.8,590.0 L656.1,588.5 L654.8,587.6 L655.4,586.1 L656.0,584.7 L657.0,582.2 L657.6,579.7 L660.6,579.5 L662.2,577.1 M662.2,577.1 L661.8,576.3 M660.8,892.3 L662.9,892.1 L665.1,892.3 L667.0,891.3 L668.7,889.9 M668.7,889.9 L668.5,887.3 L667.7,884.8 L667.4,883.2 L667.3,881.6 L669.2,881.8 L670.0,880.0 M670.0,880.0 L667.2,879.9 L664.4,879.7 L662.2,877.9 L659.5,877.0 M670.0,880.0 L671.5,878.8 L672.5,877.1 M672.5,877.1 L671.0,875.6 L671.0,873.5 L670.5,871.6 L670.8,869.7 L671.1,867.5 L672.0,865.6 L670.6,864.0 L669.3,862.3 L669.1,860.3 L668.6,858.4 L669.5,856.5 L669.6,854.5 L669.3,852.5 L667.8,851.1 L666.8,849.3 L666.8,847.3 M666.6,760.9 L668.1,759.3 L669.8,757.9 L671.9,757.2 L674.1,757.2 M674.1,757.2 L672.4,754.8 L673.6,752.2 L676.2,750.8 L676.0,747.8 M676.0,747.8 L674.5,747.4 L672.9,747.4 L672.4,745.7 L670.8,745.1 L669.2,744.4 L668.8,742.7 L667.4,742.0 L665.8,742.0 L664.5,743.0 L663.2,743.8 L662.2,745.1 L660.8,745.8 L659.0,745.3 L657.7,743.9 L656.1,744.7 L654.5,745.6 M678.3,591.4 L675.7,591.3 L673.1,590.9 L670.7,589.7 L669.1,587.6 L669.5,585.1 L669.0,582.6 L667.6,580.4 L667.4,577.8 M667.4,577.8 L666.2,577.4 M666.2,577.4 L664.2,577.1 L662.2,577.1 M676.0,747.8 L677.5,747.0 L678.9,746.1 L680.6,746.0 L681.9,744.8 L683.3,743.9 L684.4,743.2 M676.7,729.2 L675.3,729.3 L673.9,728.3 L672.1,728.0 L670.2,727.5 L669.7,725.5 L670.2,723.6 L670.4,721.7 L669.3,720.2 L667.7,719.1 M664.3,918.8 L663.4,917.4 L661.0,916.7 M661.8,563.4 L663.8,563.0 L665.7,562.2 L667.7,563.0 L669.8,562.6 M669.8,562.6 L670.1,560.6 L668.9,559.0 L670.0,557.2 L669.2,555.3 L669.9,553.4 L671.6,552.3 L673.1,551.2 L674.9,550.6 M674.9,550.6 L673.0,550.2 L672.0,551.8 L670.5,551.3 L668.9,550.9 L669.0,549.2 L668.4,547.7 L667.0,546.8 L665.9,545.7 M703.1,937.0 L703.1,937.0 L704.1,935.1 L702.9,933.4 L703.4,931.7 L703.3,929.9 M703.3,929.9 L701.8,931.0 L699.9,930.8 L698.4,929.7 L696.7,929.2 L695.5,928.0 L694.6,926.5 L693.9,925.0 L693.3,923.4 L691.9,922.4 L691.0,920.9 L689.4,921.5 L687.7,921.4 L685.9,920.9 L685.6,919.0 L684.3,918.3 L682.8,917.8 M682.8,917.8 L680.8,916.5 L678.6,915.6 L676.3,915.4 L673.9,915.2 L671.7,914.4 L669.3,914.9 L667.0,915.9 L664.7,914.6 M664.7,914.6 L662.7,914.7 L661.1,915.8 M713.8,915.9 L712.7,915.0 L710.3,916.2 L709.0,918.5 L709.1,920.0 L708.6,921.5 L707.1,921.8 L705.7,922.3 M705.7,922.3 L706.0,924.5 L704.6,926.1 L704.2,928.1 L703.3,929.9 M664.7,914.6 L666.4,912.9 L667.8,910.9 L669.6,909.2 L670.2,906.7 L671.0,904.4 L672.2,902.2 L675.0,901.9 L676.2,899.3 M676.2,899.3 L675.6,897.5 L674.9,895.8 L674.0,894.2 L673.0,892.7 M673.0,892.7 L670.4,892.0 L668.7,889.9 M675.6,802.4 L676.8,801.3 L678.2,800.3 L679.7,799.1 L679.4,797.2 L679.1,795.5 L679.8,794.0 L679.4,792.1 L680.9,790.9 M680.9,790.9 L680.1,788.8 L681.9,787.3 L682.4,785.5 L683.3,783.9 L681.4,783.1 L680.5,781.3 L679.0,780.0 L678.8,777.9 M678.8,777.9 L677.0,777.3 L675.6,778.5 L674.6,777.3 L674.0,775.8 M679.6,690.1 L679.6,688.4 M678.8,777.9 L680.8,776.7 L682.6,775.1 L682.6,772.3 L684.9,770.9 M684.9,770.9 L684.4,769.2 L684.5,767.4 L685.6,765.9 L685.2,764.0 M685.2,764.0 L684.5,762.3 L683.9,760.6 L682.1,760.0 L680.9,758.5 L679.6,757.0 L677.9,755.8 L676.3,757.3 L674.1,757.2 M673.0,892.7 L674.7,891.1 L676.3,889.4 L678.2,887.5 L680.9,888.1 L682.3,886.1 L684.6,885.5 L686.3,883.9 L688.5,883.1 M688.5,883.1 L687.3,882.3 L686.1,881.3 L685.7,879.8 L685.3,878.4 M685.3,878.4 L683.7,877.5 L681.9,877.8 L680.1,877.3 L679.1,875.8 L677.3,874.8 L675.7,876.2 L674.0,876.3 L672.5,877.1 M666.2,577.4 L668.5,577.5 L669.3,575.4 L671.1,575.0 L672.7,573.9 L674.4,572.9 L676.4,572.7 L677.7,571.3 L678.6,569.6 M678.6,569.6 L679.0,566.6 L676.6,564.9 M676.6,564.9 L674.7,564.8 L673.0,564.3 L672.0,562.3 L669.8,562.6 M665.9,541.4 L668.5,540.6 L670.9,539.4 L673.3,538.1 L675.2,536.1 M675.2,536.1 L674.7,533.4 L674.1,530.8 M674.9,550.6 L676.6,548.5 L678.6,546.8 L679.4,547.1 M678.8,539.0 L678.1,538.4 L676.2,537.8 L675.2,536.1 M676.6,564.9 L678.8,564.4 L680.6,563.1 L682.2,561.5 L682.8,559.3 M682.8,559.3 L683.2,556.6 L684.4,554.2 L683.5,551.6 L683.4,549.4 M680.6,591.1 L681.4,589.8 L681.6,588.2 L681.0,586.7 L681.7,585.2 L681.4,583.7 L680.4,582.5 L680.2,581.0 L679.9,579.6 M679.9,579.6 L679.2,577.7 L677.5,576.5 L675.1,576.5 L674.3,574.3 L672.7,575.8 L671.6,577.6 L669.5,577.6 L667.4,577.8 M682.3,574.1 L680.6,574.7 L679.9,576.3 L680.1,577.9 L679.9,579.6 M681.8,591.8 L683.8,590.5 L685.9,591.5 L687.8,590.3 L688.2,588.1 L690.1,588.6 L691.8,587.5 L693.3,586.1 L695.3,586.4 M695.3,586.4 L695.9,584.5 L697.0,582.8 L696.0,581.1 L695.6,579.2 L694.4,577.7 L693.3,576.2 L693.0,574.3 L693.1,572.4 M693.1,572.4 L691.5,573.3 L689.9,572.6 L688.7,571.4 L687.3,570.6 L686.4,571.9 L685.3,573.1 L683.8,573.6 L682.3,574.1 M682.3,574.1 L681.2,573.0 L679.8,572.4 L678.8,571.1 L678.6,569.6 M682.2,690.1 L684.2,689.1 M685.2,764.0 L685.6,761.3 L687.9,759.9 L690.7,759.9 L692.3,757.7 L694.2,755.9 L694.3,753.2 L694.1,750.7 L693.8,749.3 M705.7,922.3 L705.2,920.6 L704.9,918.8 L704.9,917.0 L704.3,915.2 L704.6,913.4 L705.0,911.6 L705.2,909.6 L704.3,907.9 M704.3,907.9 L703.2,906.7 L703.3,905.1 L703.2,903.5 L702.5,902.1 L702.7,900.3 L701.1,899.4 L701.2,897.6 L699.5,896.8 M699.5,896.8 L697.7,898.7 L695.7,900.3 L693.3,901.3 L690.8,901.6 L688.3,902.7 L685.6,902.9 L682.8,902.7 L680.9,900.6 M680.9,900.6 L680.7,902.9 L679.8,905.0 L680.6,907.1 L681.6,909.2 L682.1,911.3 L682.5,913.5 L683.1,915.6 L682.8,917.8 M710.9,908.0 L709.9,908.5 L708.0,907.9 L706.2,908.9 L704.3,907.9 M693.1,572.4 L695.3,572.3 L697.3,571.3 L697.8,569.1 L697.6,566.9 M697.6,566.9 L697.7,566.3 M697.7,566.3 L695.6,565.5 L693.3,565.0 L691.5,563.4 L691.1,561.1 L689.0,560.6 L687.0,560.0 L684.8,560.4 L682.8,559.3 M680.9,790.9 L682.2,792.1 L683.6,793.3 L685.2,792.6 L686.9,792.1 L688.2,793.0 L689.8,793.0 L691.5,792.2 L692.9,793.5 L694.0,792.0 L695.8,792.3 L697.4,792.5 L699.0,792.2 L700.3,791.2 L701.8,790.7 L702.7,789.4 L704.1,788.5 M704.1,788.5 L705.8,786.3 L708.2,784.8 L710.2,782.6 L713.1,782.1 M713.1,782.1 L713.6,781.0 M713.6,781.0 L710.8,780.1 L709.5,777.4 L707.3,775.8 L704.8,774.7 L702.2,773.4 L700.1,771.6 L698.6,772.0 L697.3,772.8 L696.0,771.9 L694.4,771.8 M694.4,771.8 L691.8,771.5 L689.5,772.5 L687.6,770.6 L684.9,770.9 M685.3,878.4 L687.0,875.9 L688.2,873.3 L688.0,871.7 L687.5,870.3 L687.9,868.8 L688.7,867.5 L688.3,865.8 L688.9,864.1 L690.5,863.3 L691.4,861.9 L691.3,860.1 L691.6,858.4 L690.6,857.0 L689.1,856.1 M689.1,856.1 L690.0,853.4 L689.7,850.6 L690.2,848.7 L688.6,847.7 L687.1,847.4 L685.7,846.7 M680.9,900.6 L679.0,898.3 L676.2,899.3 M699.5,896.8 L700.0,895.1 L700.8,893.5 L699.6,891.9 L699.7,890.0 M699.7,890.0 L698.1,889.2 L696.3,889.1 L694.6,888.3 L692.8,888.7 L691.6,887.3 L690.2,886.3 L689.8,884.5 L688.5,883.1 M697.7,566.3 L698.5,564.8 M698.5,564.8 L699.9,563.7 L700.3,561.9 L701.3,560.4 L702.3,559.0 L700.6,558.0 L699.1,556.7 L698.9,556.3 M699.7,890.0 L702.1,888.8 L703.1,886.2 M703.1,886.2 L704.0,884.5 L704.8,882.8 L706.7,882.3 L708.2,881.0 L707.6,879.3 L707.3,877.4 L707.1,875.6 L707.1,873.8 M707.1,873.8 L706.8,871.6 L706.0,869.6 L704.0,868.8 L702.3,867.5 L701.1,865.5 L701.9,863.4 L703.2,861.7 L703.3,859.6 L701.9,857.7 L699.6,856.9 L697.8,858.2 L695.8,859.4 L693.8,858.5 L693.1,856.4 L691.1,857.0 L689.1,856.1 M683.8,710.2 L685.3,709.6 L686.5,708.6 L688.1,708.8 L689.4,709.6 L692.1,709.0 L694.9,708.7 M694.9,708.7 L695.7,706.5 L695.6,704.1 L696.9,702.1 L698.9,700.8 M698.9,700.8 L698.7,698.7 L697.3,696.9 L697.5,694.8 L697.7,692.7 M697.7,692.7 L696.3,691.6 L694.6,691.1 L692.9,690.8 L691.2,691.0 L689.0,691.1 L687.2,692.1 L685.3,691.0 L684.9,689.1 M695.2,711.5 L695.2,710.8 L694.9,708.7 M693.5,816.4 L695.4,815.9 L697.1,814.8 L699.1,814.4 L700.9,813.5 M700.9,813.5 L700.8,811.9 L701.2,810.3 L701.5,808.6 L701.0,807.0 L701.3,805.4 L701.3,803.7 L700.3,802.3 L699.8,800.7 L700.9,799.0 L702.0,797.4 L701.3,795.5 L700.1,794.0 L701.0,792.4 L701.1,790.5 L702.7,789.7 L704.1,788.5 M718.3,878.1 L717.0,879.2 L714.4,878.4 L712.1,879.9 L709.6,879.1 L707.5,880.4 L705.8,882.2 L704.9,884.5 L703.1,886.2 M695.3,586.4 L696.7,588.0 L698.9,588.0 M698.9,588.0 L698.5,586.1 L700.0,584.8 L701.8,585.1 L703.2,584.0 L705.0,584.5 L706.8,584.9 L706.9,582.8 L708.8,581.9 M708.8,581.9 L709.8,579.2 L709.4,576.4 M709.4,576.4 L707.2,576.9 L705.4,575.7 L703.1,574.9 L702.8,572.5 L701.5,570.8 L699.3,570.6 L698.6,568.7 L697.6,566.9 M694.4,771.8 L695.3,769.5 L697.0,767.7 L698.2,765.7 L699.6,763.7 L701.2,761.7 L701.6,759.3 L703.1,757.4 L703.8,755.0 M703.8,755.0 L703.1,752.8 L703.0,751.1 M707.1,873.8 L708.0,871.7 L710.2,871.9 L712.2,872.7 L713.7,871.2 L714.0,869.1 L715.4,867.5 L717.5,867.8 L719.4,866.9 M719.4,866.9 L718.6,865.5 L718.2,864.1 M718.2,864.1 L716.4,863.2 L715.1,861.9 L715.7,860.0 L715.5,858.1 L713.1,857.5 L712.9,855.1 L714.4,853.7 L714.6,851.6 L712.4,851.2 L711.7,849.0 L710.6,847.1 L711.4,845.1 L709.9,843.8 L707.9,844.1 L706.1,843.8 L704.3,843.9 M704.3,843.9 L702.0,843.8 L700.5,842.1 L698.4,841.7 L697.0,839.9 L694.5,839.9 L693.6,842.3 L691.6,843.0 L689.7,843.6 M697.7,692.7 L698.8,690.6 L700.8,689.4 L701.7,687.3 L701.7,687.2 M703.4,602.0 L703.8,601.8 M703.8,601.8 L703.9,601.6 M703.9,601.6 L704.7,599.7 L705.5,597.8 L705.4,595.5 L703.7,594.0 L703.0,592.1 L702.4,590.1 L700.8,588.8 L698.9,588.0 M714.6,704.3 L714.5,704.3 L711.5,704.4 L708.8,703.2 L706.2,701.9 M706.2,701.9 L704.3,701.7 L702.5,702.1 L700.5,701.9 L698.9,700.8 M709.4,576.4 L710.4,573.7 L712.6,572.0 L713.6,573.4 L715.4,573.4 L716.8,572.7 L718.1,571.9 M718.1,571.9 L717.5,570.3 L715.9,569.7 L714.8,568.8 L713.6,567.8 L713.8,566.3 L714.0,564.8 L714.3,563.3 L714.6,561.9 M714.6,561.9 L712.5,562.7 L710.3,562.8 L708.1,562.4 L706.2,561.4 L704.0,562.0 L702.6,563.7 L700.7,565.0 L698.5,564.8 M703.4,602.0 L703.8,601.8 M788.4,507.7 L790.6,507.4 M796.9,502.5 L795.8,501.8 M704.3,843.9 L705.8,842.9 L706.6,841.2 L708.4,840.5 L710.2,841.0 M710.2,841.0 L712.7,840.8 L714.2,838.8 L712.4,836.8 L713.5,834.3 L715.1,833.2 L716.0,831.5 L716.6,829.7 L718.0,828.4 L717.6,826.2 L718.0,824.1 L716.4,822.5 L714.3,821.8 L714.5,819.8 L713.3,818.2 L712.5,816.3 L712.9,814.4 M712.9,814.4 L711.5,815.1 L709.9,815.4 L708.1,815.0 L706.8,816.2 L706.3,814.3 L704.5,813.4 L702.7,812.8 L700.9,813.5 M713.6,781.0 L714.9,779.8 M714.9,779.8 L714.0,778.2 L714.5,776.3 L712.9,775.2 L712.7,773.3 L712.0,771.7 L711.1,770.2 L710.3,768.5 L708.6,767.7 L706.5,767.6 L704.8,766.2 L704.5,764.2 L704.2,762.1 L703.3,760.4 L703.8,758.6 L703.6,756.8 L703.8,755.0 M714.6,561.9 L714.8,561.3 M714.8,561.3 L714.6,559.8 L713.7,558.5 L713.1,557.0 L711.8,556.1 L710.6,555.2 L709.4,554.1 L708.6,552.7 L708.5,551.1 M708.5,551.1 L706.5,550.2 L704.4,549.8 L703.1,552.2 L702.9,552.1 M712.9,814.4 L715.7,815.4 L717.5,813.2 L720.0,813.2 L722.1,812.1 M722.1,812.1 L720.3,810.7 L720.1,808.3 L720.2,806.2 L720.8,804.1 L721.1,801.7 L722.9,800.2 L722.1,798.1 L721.3,796.0 L720.7,794.0 L720.3,791.9 L719.5,789.7 L717.3,789.0 L718.0,786.6 L716.5,784.7 L715.4,782.5 L713.1,782.1 M703.9,601.6 L705.7,601.4 M705.7,601.4 L707.8,600.2 L710.0,599.4 L712.4,599.1 L714.3,597.5 L714.4,594.9 L713.2,592.7 L713.6,590.1 L715.3,588.2 M715.3,588.2 L713.4,586.4 L710.7,586.4 L710.3,583.9 L708.8,581.9 M708.5,551.1 L710.1,549.7 L711.8,548.5 L713.5,547.2 L715.2,546.0 M715.2,546.0 L715.0,544.1 M714.9,779.8 L716.9,778.4 L719.5,778.3 M719.5,778.3 L719.8,775.9 L721.3,774.0 L722.5,772.0 L723.5,769.8 M723.5,769.8 L723.6,769.1 M707.8,750.0 L707.5,750.0 M714.9,608.1 L715.2,607.1 L714.9,605.1 L713.2,603.9 L711.2,603.2 M711.2,603.2 L709.5,603.7 L708.4,604.1 M707.7,603.8 L707.3,602.4 L705.7,601.4 M706.2,701.9 L708.3,701.0 L709.2,698.9 L711.4,698.5 L713.4,699.3 L713.8,697.3 L713.2,695.4 L714.8,693.6 L713.7,691.5 M713.7,691.5 L711.2,691.6 L709.7,689.6 L708.1,688.1 L707.1,686.2 M707.1,686.2 L705.9,685.7 M724.7,864.2 L724.2,863.9 L722.2,866.1 L719.4,866.9 M710.2,841.0 L711.8,840.1 L713.3,839.1 L714.9,839.8 L716.7,840.2 M716.7,840.2 L718.1,838.4 L720.3,837.6 L722.0,835.7 L724.5,836.4 M724.5,836.4 L724.8,833.6 L725.8,830.9 L726.9,828.3 L727.2,825.4 L728.3,824.3 L729.4,823.1 L728.1,821.7 L729.0,819.9 L728.4,817.1 L728.4,814.2 M728.4,814.2 L727.6,812.4 L725.6,812.1 L723.9,811.8 L722.1,812.1 M714.8,561.3 L717.2,559.6 L720.0,558.7 L720.5,557.2 L721.4,555.9 L723.0,555.7 L724.2,554.5 M724.2,554.5 L725.1,551.7 L724.7,548.9 M724.7,548.9 L723.9,547.6 M723.9,547.6 L721.6,547.5 L719.6,546.4 L717.4,545.9 L715.2,546.0 M728.4,814.2 L729.7,815.1 L731.3,815.0 L733.1,814.5 L733.3,812.7 L735.9,812.6 L736.8,812.3 M737.7,806.6 L737.7,805.2 M735.0,784.2 L734.4,783.9 L732.5,784.2 M731.9,784.2 L730.5,781.9 L727.7,782.4 L725.2,782.5 L723.1,781.3 L722.0,778.9 L719.5,778.3 M715.3,588.2 L718.2,588.2 L721.1,588.6 M721.1,588.6 L723.0,587.4 L725.1,586.3 L725.9,584.0 L724.9,581.7 L725.3,579.0 L727.8,577.9 L726.6,575.8 L725.2,573.8 M725.2,573.8 L723.5,573.0 L721.7,572.7 L719.8,572.5 L718.1,571.9 M723.9,547.6 L723.9,545.4 L723.6,543.2 L722.3,541.4 L721.6,540.9 M724.9,690.0 L722.6,691.0 L719.6,691.5 L718.1,691.9 L716.7,692.6 L715.2,692.1 L713.7,691.5 M707.1,686.2 L708.4,684.5 M711.6,682.7 L713.4,683.3 L715.9,681.9 L716.5,679.3 M717.2,678.8 L719.3,677.9 L721.8,676.9 L724.5,677.3 M724.5,677.3 L724.1,675.1 L722.1,674.1 L722.1,674.0 M711.2,603.2 L712.5,602.2 L714.1,602.5 L714.9,600.9 L716.7,600.9 L718.1,600.3 L719.5,599.8 L721.0,599.3 L722.5,599.7 M722.5,599.7 L721.7,597.7 L722.3,595.7 L723.7,594.4 L725.1,593.0 M725.1,593.0 L724.2,591.7 L723.5,590.4 L722.1,589.8 L721.1,588.6 M727.2,680.0 L726.2,678.7 M726.2,678.7 L724.5,677.3 M725.7,669.3 L726.2,669.3 L727.6,670.7 L729.2,671.7 L730.5,671.4 M732.9,651.1 L732.7,651.2 M725.2,573.8 L726.5,573.4 M726.5,573.4 L727.8,571.1 L729.5,569.1 L730.1,566.6 L730.3,564.0 M730.3,564.0 L727.9,562.2 L726.9,559.4 L727.8,557.8 L727.3,556.0 L725.6,555.6 L724.2,554.5 M722.1,614.7 L722.9,614.0 L724.6,612.1 L725.2,609.6 L726.4,607.4 M726.4,607.4 L724.9,605.8 L723.8,603.8 L723.5,601.6 L722.5,599.7 M718.2,864.1 L718.1,862.1 L717.7,860.2 L718.3,858.2 L717.7,856.2 L718.5,854.4 L719.5,852.7 L720.6,851.1 L722.3,849.9 M722.3,849.9 L723.2,848.4 L723.4,846.7 L721.9,845.7 L721.2,844.1 L719.9,843.1 L719.5,841.5 L717.9,841.2 L716.7,840.2 M736.8,855.9 L736.5,855.9 L735.0,856.0 L734.0,854.9 L733.1,853.7 M733.1,853.7 L730.4,852.5 L727.5,852.2 L725.9,852.4 L724.4,852.3 L723.6,850.9 L722.3,849.9 M725.1,593.0 L727.1,592.7 L729.1,592.5 L731.1,592.4 L733.1,592.3 M733.1,592.3 L735.3,591.2 M735.3,591.2 L736.3,589.9 L737.5,588.7 L737.2,587.1 L737.0,585.4 L735.3,584.4 L735.7,582.4 L736.5,580.9 L737.2,579.4 M737.2,579.4 L735.5,580.4 L733.6,580.7 L732.3,579.3 L731.0,577.8 L729.6,576.7 L727.8,576.6 L727.6,574.8 L726.5,573.4 M733.1,853.7 L732.6,852.1 L733.1,850.6 L732.7,849.1 L732.3,847.7 L732.8,846.1 L732.4,844.6 L733.5,843.4 L733.7,841.8 M733.7,841.8 L732.2,842.0 L730.7,842.6 L729.4,841.7 L728.0,841.0 L726.7,838.4 L724.5,836.4 M726.2,678.7 L727.5,676.3 L726.8,673.7 L729.0,672.3 L730.7,670.8 M726.4,607.4 L728.3,607.7 L730.0,608.6 L731.6,607.1 L733.8,607.5 M733.8,607.5 L734.0,605.4 L734.9,603.4 L736.3,601.8 L736.9,599.7 L736.2,597.7 L734.5,596.3 L733.0,594.6 L733.1,592.3 M724.7,548.9 L727.2,548.9 L728.8,547.1 L731.5,546.4 L733.0,548.6 M733.0,548.6 L734.7,547.6 M725.3,618.7 L726.5,618.2 L727.7,619.5 L729.4,619.7 L732.3,620.0 L735.2,619.9 M735.2,619.9 L737.5,619.2 L739.8,618.5 L741.0,616.1 L740.2,613.6 M740.2,613.6 L740.4,611.8 L739.2,610.5 M739.2,610.5 L737.6,610.1 L735.9,610.0 L735.0,608.6 L733.8,607.5 M752.0,845.7 L751.9,845.5 L752.9,844.0 L753.1,842.1 L751.5,841.9 L749.8,842.0 L748.2,842.2 L746.5,842.1 L745.3,840.5 L744.3,838.7 L742.2,838.6 L740.4,839.6 M740.4,839.6 L738.7,837.6 L736.3,838.5 L734.7,839.9 L733.7,841.8 M740.6,634.5 L740.4,634.2 L738.6,632.6 M738.6,632.6 L737.6,632.1 M737.6,632.1 L735.9,630.8 L733.9,631.6 L732.2,632.4 L731.8,632.9 M723.5,769.8 L725.3,770.5 L727.3,770.9 L727.4,770.7 M740.4,839.6 L742.0,838.0 L742.1,835.7 L743.6,833.8 L742.8,831.5 L741.8,828.8 L744.1,827.0 L746.4,826.4 L748.4,825.2 M748.4,825.2 L746.5,824.0 L744.8,822.4 L742.2,822.7 L740.6,820.6 L740.1,818.4 L739.7,816.3 M737.6,632.1 L737.7,630.5 L738.1,628.9 L737.8,627.3 L736.9,625.9 L737.5,624.1 L738.1,622.3 L737.2,620.5 L735.2,619.9 M737.2,579.4 L739.2,579.6 L740.9,578.7 L742.9,578.3 L743.9,576.5 M743.9,576.5 L742.7,574.3 L743.4,571.8 L743.3,569.4 L744.0,567.0 M744.0,567.0 L742.8,565.5 L741.3,564.2 L739.7,563.2 L738.2,562.0 L736.3,562.3 L734.5,562.9 L732.4,562.4 L730.8,563.8 M730.8,563.8 L730.3,564.0 M730.8,563.8 L728.6,561.9 L729.3,559.1 L731.7,558.0 L733.3,556.0 L735.6,556.7 L737.4,555.2 L739.3,554.6 L739.6,554.5 M736.6,550.2 L735.1,550.6 L733.0,548.6 M737.1,784.2 L737.6,783.5 L738.4,781.9 L738.0,779.8 L736.1,779.0 L736.7,777.8 M738.6,632.6 L740.1,631.6 L741.9,631.1 L743.5,630.3 L743.8,630.3 M750.6,618.7 L750.4,617.5 M750.4,617.5 L747.9,616.2 L745.2,615.8 L743.8,614.7 L743.5,613.0 L741.9,613.7 L740.2,613.6 M744.0,567.0 L745.0,565.4 L745.2,563.4 L746.5,562.1 L747.6,560.4 L746.6,558.3 M746.7,557.9 L748.2,556.1 L750.7,556.8 L752.3,554.6 M752.3,554.6 L751.5,553.2 L749.9,552.8 L748.4,552.7 L746.9,552.8 L746.7,552.8 M739.2,610.5 L739.1,608.4 L740.3,606.8 L739.7,604.9 L739.5,603.0 L741.0,601.8 L742.6,600.9 L743.6,598.8 L745.9,599.0 M745.9,599.0 L745.7,597.1 L744.4,595.6 M744.4,595.6 L741.7,595.3 L740.0,593.1 L737.5,592.6 L735.3,591.2 M747.2,537.6 L747.4,537.4 L747.3,536.0 M752.3,554.6 L753.8,553.9 M753.8,553.9 L753.3,551.8 L751.8,550.2 L750.1,548.9 L749.1,547.0 L747.0,546.0 L746.7,544.9 M756.8,845.3 L756.8,845.0 L757.4,843.8 M751.8,825.6 L750.4,825.7 L748.4,825.2 M744.4,595.6 L744.8,593.6 L744.8,591.6 L745.1,589.5 L746.4,587.9 L748.2,587.1 L750.1,586.4 L751.0,584.2 L753.4,584.1 M753.4,584.1 L752.6,582.7 L751.8,581.5 L750.0,580.9 L749.8,579.1 M749.8,579.1 L748.1,578.9 L746.7,578.1 L745.6,576.8 L743.9,576.5 M750.4,617.5 L751.6,616.9 M754.2,612.1 L752.6,611.5 L752.7,609.7 L752.7,607.9 L752.4,606.1 L752.5,604.4 L751.1,603.0 L751.7,601.0 M751.7,601.0 L750.1,601.1 L748.5,600.9 L747.3,599.8 L745.9,599.0 M749.8,579.1 L752.2,578.9 L753.9,577.3 L755.8,576.1 L757.4,574.5 L757.2,572.2 L757.7,569.9 L758.4,567.6 L760.4,566.1 M760.4,566.1 L759.9,564.3 L760.6,562.5 L760.1,560.6 L760.3,558.8 L759.2,557.2 L758.4,555.4 L756.5,554.9 L754.7,554.0 M754.7,554.0 L753.8,553.9 M751.7,601.0 L753.5,601.9 L755.1,600.7 L756.6,599.9 L758.1,599.0 L759.7,598.5 L761.4,598.4 L763.1,597.9 M764.4,596.1 L764.4,595.0 L764.4,593.4 L765.5,592.0 L765.5,590.2 M765.5,590.2 L764.9,588.4 M764.9,588.4 L763.9,587.2 M763.9,587.2 L761.1,587.0 L758.3,586.8 L755.7,585.7 L753.4,584.1 M754.7,554.0 L756.5,553.9 L757.3,552.3 L758.9,552.6 L759.7,554.1 L760.9,551.9 L761.5,549.5 M761.5,549.5 L761.9,547.4 L761.4,545.2 L760.4,543.1 L761.3,540.9 L761.1,538.6 L762.2,536.6 L762.5,534.3 L761.5,532.2 M761.5,532.2 L761.4,532.1 M761.4,532.1 L759.1,532.6 L757.7,530.8 L755.5,531.0 L754.2,532.8 L752.8,534.3 L750.8,533.9 L748.9,533.6 L747.4,534.4 M761.4,532.1 L761.2,530.0 L761.9,528.0 M761.9,528.0 L761.4,529.8 L761.3,531.7 L760.3,533.4 L758.3,533.8 L756.5,533.0 L754.8,533.9 L753.4,532.9 L751.7,532.4 L751.2,530.9 L751.1,529.4 L749.6,528.5 L749.5,526.8 L747.9,526.3 L747.5,526.4 M763.9,587.2 L763.1,585.0 L764.5,583.1 L765.2,581.1 L764.6,579.0 L764.5,576.8 L763.9,574.7 L764.6,572.6 L765.9,570.8 M765.9,570.8 L763.9,568.7 M763.9,568.7 L762.0,567.6 L760.4,566.1 M761.9,528.0 L762.4,526.4 L763.3,524.9 M763.3,524.9 L763.6,523.0 L764.3,521.2 L763.4,520.4 M761.5,532.2 L763.6,531.6 L765.4,533.1 L767.1,534.2 L769.1,534.6 L771.2,534.4 L773.2,534.9 L775.5,534.6 L776.9,536.5 M776.9,536.5 L778.3,535.8 M778.3,535.8 L778.2,534.2 L778.3,532.5 L776.3,532.3 L775.8,530.3 L775.0,528.9 L774.4,527.5 L774.0,525.9 L772.4,525.2 M772.4,525.2 L770.5,526.9 L767.8,527.0 L765.2,526.7 L763.3,524.9 M763.9,568.7 L764.9,566.1 L766.4,563.7 L769.0,563.0 L771.7,562.6 L772.5,560.0 L774.9,558.8 L775.9,556.3 L776.9,555.9 M777.1,555.4 L776.2,555.5 L774.1,554.8 L771.9,554.6 L770.2,556.1 L770.3,553.7 L768.3,552.5 L767.0,550.8 L765.3,549.6 M765.3,549.6 L763.4,550.0 L761.5,549.5 M769.8,589.0 L768.3,587.6 L767.8,589.8 L765.5,590.2 M765.9,570.8 L767.5,572.2 L769.4,572.8 L771.1,571.8 L772.9,570.8 M772.9,570.8 L774.4,569.7 L776.3,569.6 L777.7,568.4 L778.8,566.8 L779.7,564.9 L778.4,563.2 L778.5,561.4 L779.4,559.7 M779.4,559.7 L778.9,558.5 M764.9,588.4 L766.4,587.5 L768.1,587.9 L769.3,589.0 L769.6,589.2 M779.8,576.4 L779.6,575.4 L778.7,574.0 L778.8,572.4 L777.4,571.8 L775.9,571.5 L774.5,570.6 L772.9,570.8 M765.3,549.6 L767.4,548.6 L769.0,547.1 L770.4,545.3 L772.0,543.8 L773.7,542.3 L775.2,540.6 L775.9,538.5 L776.9,536.5 M784.0,544.8 L783.6,544.3 L781.7,543.7 L781.6,541.8 L781.2,540.0 L781.3,538.1 L782.0,536.2 M782.0,536.2 L780.2,535.7 L778.3,535.8 M772.4,525.2 L773.6,523.7 L774.6,522.2 L776.2,521.4 L777.8,520.5 M777.8,520.5 L776.9,519.2 L775.4,518.6 L774.0,518.1 L772.6,517.4 L773.7,516.2 L773.8,516.1 M787.2,566.0 L786.8,565.4 L786.2,563.5 L785.1,561.8 L784.5,561.3 M781.1,559.6 L779.4,559.7 M782.0,536.2 L783.6,535.0 L784.3,533.1 M784.3,533.1 L784.2,531.2 L785.0,529.4 L786.3,527.9 L786.3,525.9 M786.3,525.9 L785.2,524.0 L784.7,521.8 M784.7,521.8 L783.0,520.5 L781.2,521.4 L779.7,520.1 L777.8,520.5 M784.7,521.8 L786.3,520.3 L788.5,520.4 L789.7,518.8 L790.3,517.8 M784.3,533.1 L786.5,532.5 L788.6,531.8 L789.3,532.7 M791.5,526.3 L790.6,527.4 L788.2,527.4 L786.3,525.9" fill="none" stroke="#7a7a7a" stroke-width="0.75"/>
<path d="M832.2,585.5 L834.8,584.5 L837.9,585.4 M837.9,585.4 L837.7,583.2 L837.5,581.0 L839.2,579.5 L841.0,578.3 L839.5,576.5 L837.1,576.3 L838.3,573.9 L836.4,572.0 M836.4,572.0 L835.3,570.9 M830.0,523.8 L830.8,522.3 L832.1,520.5 L831.5,518.3 L833.7,518.9 L835.5,517.5 M835.5,517.5 L833.4,515.7 L833.3,514.2 M844.5,596.5 L844.8,595.8 L845.8,593.7 L847.5,592.2 M847.5,592.2 L845.4,590.0 L842.9,588.5 L840.5,586.9 L837.9,585.4 M848.4,533.0 L847.8,532.3 M847.8,532.3 L847.4,532.5 M862.5,116.5 L862.8,116.3 L864.8,116.0 L866.1,114.3 M866.1,114.3 L865.9,112.1 L866.6,110.1 L866.9,108.0 L866.6,105.9 L866.2,103.7 L865.1,101.8 L863.1,100.8 L862.0,98.8 M862.0,98.8 L861.1,97.6 M861.1,97.6 L858.6,97.9 L858.1,97.6 M847.8,532.3 L848.6,530.3 L849.1,528.3 L846.7,527.9 L845.8,525.6 L845.5,523.8 L844.2,522.5 L843.9,520.8 L842.9,519.4 M842.9,519.4 L841.3,519.3 L840.1,518.2 M840.1,518.2 L837.8,518.1 L835.5,517.5 M836.4,572.0 L838.2,571.7 L839.6,570.6 L841.1,569.7 L842.3,568.4 M842.3,568.4 L844.0,566.7 M847.5,592.2 L848.4,592.1 M848.4,592.1 L849.4,589.8 L850.0,587.3 L850.3,584.9 L850.7,582.4 L850.2,579.8 L851.0,577.3 L853.0,575.4 L853.3,572.7 M853.3,572.7 L851.8,572.1 L850.6,570.8 L849.2,569.8 L848.8,568.1 L847.4,566.7 L845.5,567.2 L843.6,566.9 L842.3,568.4 M840.1,518.2 L840.2,515.8 L840.4,513.4 L841.1,511.1 M842.7,510.5 L844.1,510.4 L844.6,509.8 M848.6,556.0 L848.8,556.1 M848.8,556.1 L850.8,555.5 L852.6,554.8 L854.6,555.0 L856.6,555.3 L857.8,553.7 L858.5,551.8 L860.6,551.1 L861.2,548.9 M861.2,548.9 L861.1,548.5 M856.1,600.5 L855.9,600.1 L854.1,598.6 L854.3,596.2 L853.2,594.1 M853.2,594.1 L851.6,594.3 L850.1,594.8 L849.3,593.4 L848.4,592.1 M848.5,556.5 L848.8,556.1 M845.7,45.0 L845.4,45.0 M848.0,56.8 L849.6,56.3 L851.3,57.4 L853.1,56.4 L854.2,55.0 L854.6,53.2 L856.1,52.1 L857.2,50.7 L858.6,52.0 L860.4,52.3 M860.4,52.3 L860.5,52.2 M860.5,52.2 L859.8,50.1 L858.8,48.1 L857.7,46.0 L858.4,43.7 M858.4,43.7 L856.6,42.9 L855.3,41.5 L852.9,41.4 L852.0,43.6 L850.8,45.1 L849.2,45.9 L847.6,44.9 L845.7,45.0 M845.7,45.0 L844.2,42.0 L843.0,40.1 M842.4,39.1 L843.3,35.9 L842.1,32.6 L841.5,30.8 M863.0,535.6 L863.8,534.6 L865.6,534.0 L865.2,531.9 L863.7,530.6 L862.8,528.8 L862.7,526.8 L863.8,525.1 L864.2,523.2 L865.1,521.2 L867.2,520.6 M867.2,520.6 L866.8,518.7 L865.1,517.9 L864.9,516.1 L865.8,514.5 M865.8,514.5 L864.4,515.3 L862.9,515.4 L861.6,516.3 L860.3,517.0 L858.9,517.7 L857.8,518.8 L857.0,520.1 L856.4,521.5 L854.4,520.8 L854.4,518.7 L853.2,517.6 L852.1,516.3 L850.1,516.4 L848.5,515.1 L846.9,516.2 L845.4,517.3 M845.4,517.3 L844.2,518.4 L842.9,519.4 M853.3,572.7 L854.4,571.1 L856.4,571.1 L858.2,571.6 L859.9,571.0 L861.1,569.7 L862.8,569.2 L863.7,567.4 L865.7,567.3 M865.7,567.3 L866.3,565.3 L867.8,563.8 M867.8,563.8 L867.8,563.3 M867.8,563.3 L868.2,561.7 L868.2,560.1 L868.4,558.5 L868.2,556.9 L866.9,555.8 L865.8,554.5 L865.1,552.9 L865.3,551.2 M865.3,551.2 L863.5,549.5 L861.2,548.9 M845.4,517.3 L848.1,516.9 L848.6,514.3 L850.3,512.7 L852.5,512.0 L851.3,510.1 L850.9,507.8 L851.0,507.4 M858.4,43.7 L860.0,42.2 L859.2,40.2 M859.2,40.2 L859.7,37.6 L861.0,35.3 L863.5,34.3 L864.7,31.8 L866.4,30.8 M859.2,40.2 L861.1,39.2 L862.7,40.6 L864.5,39.6 L864.3,37.5 L866.8,36.2 L869.7,36.1 L872.4,37.4 L874.9,39.0 L877.9,39.0 L880.8,38.4 M880.8,38.4 L881.9,36.6 L882.2,34.5 L882.8,32.5 L884.3,31.1 L884.6,30.8 M851.8,74.8 L853.5,74.4 L856.1,74.3 L856.9,71.8 L857.0,69.4 L858.2,67.3 L860.3,66.1 L862.7,66.0 M862.7,66.0 L861.2,64.7 L860.0,63.1 L858.3,61.8 L857.9,59.7 L858.9,57.6 L857.7,55.5 L859.5,54.3 L860.4,52.3 M865.8,514.5 L865.4,512.7 L863.8,511.6 L863.0,509.9 L862.9,508.1 L863.2,506.1 L864.1,504.3 L865.8,503.0 L868.0,503.2 M868.0,503.2 L865.5,502.1 L863.8,500.0 L861.3,499.8 M863.7,599.7 L863.5,599.6 L861.1,598.6 L860.2,600.0 L860.2,600.0 M861.1,97.6 L862.0,96.3 L863.0,95.1 L862.2,93.5 L863.4,92.0 L862.2,90.5 L863.2,88.8 L863.8,87.1 L865.4,86.4 M865.4,86.4 L864.6,84.7 L865.2,82.9 L863.6,82.3 L862.3,81.1 L860.4,81.4 L858.5,81.1 L858.1,79.3 L857.2,77.6 M857.2,77.6 L855.0,78.0 L852.9,77.2 L852.1,76.4 M853.2,594.1 L855.6,593.3 L858.1,593.8 L858.9,591.2 L861.0,589.7 M861.0,589.7 L861.6,587.6 L861.8,585.5 L861.4,583.2 L862.2,581.1 L864.2,579.9 L865.0,577.7 L865.1,575.4 L866.5,573.5 M866.5,573.5 L865.4,572.2 L865.8,570.5 L865.5,568.9 L865.7,567.3 M870.9,137.3 L871.5,136.9 M871.5,136.9 L870.4,136.2 M868.0,503.2 L870.1,502.7 L872.2,501.8 M872.2,501.8 L872.9,501.0 M872.9,501.0 L872.8,499.2 L872.4,497.5 L871.5,495.9 L870.9,494.2 L872.8,493.5 L874.7,492.6 L874.2,490.4 L875.0,488.4 L875.7,487.0 L876.1,485.4 L875.6,483.8 L876.0,482.1 L876.2,480.3 L875.1,478.8 L875.3,477.0 L876.7,475.8 M876.7,475.8 L874.3,474.2 M874.3,474.2 L872.5,473.8 L871.8,474.2 M862.0,98.8 L864.1,98.7 L865.9,97.8 L866.7,96.0 L867.7,94.3 L868.3,92.4 L869.9,91.2 L871.8,90.9 L873.4,89.7 L874.7,91.0 L876.2,92.0 L878.0,92.6 L879.4,93.8 L881.4,94.0 L883.4,93.6 L885.3,94.5 L886.2,96.5 M886.2,96.5 L886.9,95.6 M886.9,95.6 L886.6,94.0 L887.4,92.6 M887.4,92.6 L885.5,92.7 L884.7,91.0 L884.2,89.4 L884.5,87.8 M884.5,87.8 L884.5,86.1 L883.3,84.8 L881.7,84.1 L880.1,83.7 L878.9,82.9 L877.5,82.2 L876.4,81.1 L875.5,79.9 M875.5,79.9 L873.8,79.8 L872.5,80.8 L871.4,81.9 L870.3,83.0 L869.1,84.1 L867.5,84.2 L866.3,85.2 L865.4,86.4 M857.2,77.6 L858.8,75.1 L859.7,72.2 L862.3,70.9 L865.2,70.1 M865.2,70.1 L864.0,68.0 L862.7,66.0 M874.3,474.2 L875.8,472.7 L877.1,471.0 L877.0,468.8 L876.0,466.8 L875.2,465.2 M865.3,551.2 L867.0,551.7 L868.4,550.5 L868.5,548.9 L869.6,547.6 L872.1,546.2 L874.7,545.3 M874.7,545.3 L876.9,544.5 L878.6,543.0 L878.6,540.7 L878.6,538.5 M878.6,538.5 L877.6,536.9 L875.8,537.1 L876.2,535.5 L876.1,534.0 L875.8,531.3 L873.9,529.4 L872.1,527.4 L869.9,525.9 L869.4,523.3 L868.0,521.0 M868.0,521.0 L867.2,520.6 M871.3,403.2 L872.4,403.3 M872.4,403.3 L872.9,401.6 M873.7,400.8 L875.4,400.3 L876.4,398.5 L876.6,397.9 M865.2,70.1 L868.0,69.4 L870.6,70.7 L872.8,72.3 L874.9,74.0 M874.9,74.0 L876.3,71.8 L876.0,69.2 L876.3,66.7 L877.7,64.6 L875.6,63.1 L874.0,61.1 L873.6,58.6 L873.0,56.1 M873.0,56.1 L872.3,55.4 M872.3,55.4 L870.5,55.2 L869.7,53.6 L868.1,53.5 L866.6,52.9 L865.1,52.1 L863.7,51.2 L862.0,51.4 L860.5,52.2 M868.0,521.0 L870.7,520.6 L873.3,519.8 L875.8,521.1 L877.5,523.3 L879.9,522.1 L881.8,520.0 L883.0,520.9 L884.1,522.0 L885.5,521.2 L887.0,521.0 M887.0,521.0 L885.5,520.5 L884.0,520.0 L882.8,518.8 L882.7,517.1 L881.9,515.7 L882.2,514.0 L882.2,512.2 L883.8,511.3 M883.8,511.3 L884.1,509.0 L883.5,506.8 L882.8,504.5 L880.9,502.9 L878.7,503.4 L876.5,503.0 L874.4,501.9 L872.2,501.8 M871.5,136.9 L873.9,136.6 M873.9,136.6 L873.0,135.2 L873.3,133.6 L873.3,132.0 L874.4,130.8 L877.1,129.5 L879.4,127.5 L879.9,124.9 L879.7,122.2 L878.8,119.7 L878.7,117.0 M878.7,117.0 L877.8,115.3 L876.2,114.3 L875.1,112.7 L873.1,112.6 L871.5,113.7 L869.9,115.0 L868.1,114.3 L866.1,114.3 M879.7,423.7 L879.9,423.0 L881.8,422.3 L882.4,420.7 L883.3,419.1 M883.3,419.1 L884.7,416.6 L882.8,414.3 M882.8,414.3 L880.6,412.8 L878.1,411.7 L877.2,409.1 L877.8,406.3 M877.8,406.3 L875.9,406.6 L875.0,405.0 L873.3,404.7 L872.4,403.3 M866.5,573.5 L867.2,575.2 L868.9,575.9 L869.7,577.3 L870.4,578.9 L870.7,580.5 L870.8,582.2 L870.9,584.0 L869.7,585.4 L871.0,586.5 L872.7,586.3 L874.4,586.2 L875.6,587.5 L876.2,589.2 L877.9,589.6 L879.7,589.8 L880.5,591.4 M880.5,591.4 L882.3,591.0 L884.1,590.2 L885.6,588.5 L887.8,589.4 M887.8,589.4 L885.9,587.9 L885.3,585.6 L885.0,583.3 L884.9,581.1 L883.7,578.9 L884.5,576.5 L882.1,575.3 L882.2,572.6 M882.2,572.6 L880.8,571.0 L879.2,569.6 L876.6,570.1 L875.2,567.9 L873.1,566.6 L870.8,567.1 L868.6,566.0 L867.8,563.8 M876.9,151.5 L876.7,150.4 L878.6,149.2 L880.3,150.5 L882.2,149.3 L882.4,147.8 L882.9,146.3 L883.4,144.8 L884.9,144.0 M884.9,144.0 L885.0,143.4 M885.0,143.4 L883.7,141.8 L881.6,141.9 L879.7,141.9 L877.9,142.6 L878.1,140.6 L876.9,139.0 L875.5,137.6 L873.9,136.6 M875.5,79.9 L875.5,77.6 L875.8,75.2 M875.8,75.2 L874.9,74.0 M880.4,454.2 L880.9,454.0 L883.1,452.5 L885.6,453.2 M885.6,453.2 L887.3,451.6 L889.0,449.9 L890.9,448.2 L890.9,445.6 M890.9,445.6 L888.5,444.2 L889.0,441.5 M889.0,441.5 L886.8,441.6 L885.5,441.2 M880.0,157.3 L879.9,157.1 L879.8,157.0 M877.2,598.4 L877.6,597.9 L876.6,596.3 L876.5,594.4 L878.3,593.7 L879.4,592.2 M879.4,592.2 L877.2,591.3 L874.8,591.4 L872.6,593.2 L870.1,591.8 L868.2,590.1 L865.6,590.4 L863.4,589.9 L861.0,589.7 M902.7,600.7 L901.0,599.7 L898.8,598.4 M898.8,598.4 L899.0,600.6 M880.5,591.4 L879.4,592.2 M898.8,598.4 L898.1,596.7 L897.8,595.0 L897.9,593.1 L897.1,591.5 M897.1,591.5 L894.3,590.9 L892.0,592.7 L889.9,591.0 L887.8,589.4 M885.5,393.8 L885.9,394.0 L888.0,393.7 L888.6,392.5 M878.6,538.5 L880.7,537.1 M880.7,537.1 L881.9,534.7 L884.5,534.1 L883.7,531.7 L884.0,529.2 L886.2,529.0 L888.1,527.9 L889.0,525.7 L891.1,524.6 M891.1,524.6 L888.8,523.2 L887.0,521.0 M889.0,441.5 L888.6,439.2 L888.5,436.9 M888.5,436.9 L887.8,435.3 L887.4,434.0 M886.7,432.1 L886.7,432.0 L886.7,432.0 M875.8,75.2 L877.8,74.4 L879.8,73.8 L881.8,72.9 L884.0,73.4 L885.8,72.3 L887.3,70.8 L889.3,69.6 L889.6,67.2 M889.6,67.2 L889.8,65.1 L890.4,62.9 L891.2,60.9 L892.5,59.1 M892.5,59.1 L891.2,59.9 L890.1,61.0 L889.4,62.6 L887.7,62.8 L886.3,63.6 L884.8,64.0 L883.3,64.3 L881.7,64.4 L879.8,64.5 L878.6,63.0 L877.7,61.5 L877.8,59.7 L876.8,58.7 L875.7,57.6 L874.5,56.7 L873.0,56.1 M872.3,55.4 L874.3,55.2 L874.9,53.3 L876.4,52.5 L877.9,51.7 L876.9,49.9 L878.2,48.3 L879.2,46.9 L879.5,45.2 M879.5,45.2 L879.6,43.4 L880.6,41.9 L879.5,40.1 L880.8,38.4 M880.8,38.4 L880.8,38.4 M876.7,475.8 L878.6,476.2 L880.4,476.9 L882.2,476.1 L883.7,474.9 L885.1,476.0 L886.7,476.6 L888.3,477.6 L890.2,477.3 M890.2,477.3 L892.9,476.4 L895.5,475.6 L896.5,473.0 L896.5,470.1 M896.5,470.1 L895.0,470.6 L893.4,470.5 L892.1,469.6 L890.7,468.9 L889.4,467.5 L889.6,465.6 L888.1,464.6 L886.3,464.8 L885.2,463.4 L885.4,461.6 L886.9,460.7 L887.4,458.9 L887.1,457.4 L887.1,455.9 L886.0,454.8 L885.6,453.2 M880.8,158.1 L880.8,157.4 L882.1,156.1 L883.7,155.1 L885.5,155.3 M885.5,155.3 L885.5,153.7 L885.4,152.0 L887.0,151.2 L887.6,149.5 L886.7,148.2 L885.7,147.0 L884.6,145.7 L884.9,144.0 M898.0,180.8 L898.6,180.5 L899.9,179.1 L902.0,178.9 L903.6,177.6 L905.6,177.6 L907.4,178.4 M907.4,178.4 L907.7,178.0 M907.7,178.0 L906.0,175.7 L906.3,172.7 M906.3,172.7 L904.8,172.2 L903.8,171.1 M903.8,171.1 L902.4,170.2 L900.8,170.0 L899.0,170.7 L897.7,169.2 L896.2,169.7 L894.6,169.9 L893.0,169.5 L891.4,169.7 L891.1,169.7 M939.8,30.8 L939.9,31.4 L940.5,33.3 L940.2,35.2 L939.6,37.2 L940.1,39.1 M940.1,39.1 L941.6,40.1 L943.2,40.9 L944.0,39.0 L946.1,38.6 M946.1,38.6 L944.0,36.9 L944.0,34.1 L942.4,32.2 L941.5,30.8 M903.8,171.1 L901.3,169.7 L901.4,166.9 L899.7,165.2 L898.0,163.5 M898.0,163.5 L896.5,161.8 L896.4,159.5 L896.0,157.2 L893.9,156.1 L892.0,154.4 L889.7,155.4 L887.6,154.6 L885.5,155.3 M878.7,117.0 L880.5,117.8 L881.8,116.4 M881.8,116.4 L882.3,116.0 M882.3,116.0 L880.4,113.7 L879.9,110.8 L879.6,109.2 L880.2,107.8 L879.9,106.2 L878.6,105.1 L880.7,103.1 L882.4,100.8 L884.1,100.6 L885.0,99.3 L885.0,97.6 L886.2,96.5 M888.5,436.9 L891.5,436.9 L894.0,438.6 L896.0,436.5 L898.3,434.8 L899.6,432.5 L899.3,429.9 L899.3,427.4 L899.8,424.9 M899.8,424.9 L897.2,424.4 L894.6,424.3 L893.2,422.1 L892.4,419.6 L890.0,419.2 L887.9,418.0 L885.7,419.0 L883.3,419.1 M867.8,563.3 L869.5,562.8 L871.2,562.0 L873.0,561.7 L874.7,561.2 L876.4,562.2 L878.3,562.3 L879.1,564.1 L880.7,565.3 L882.0,567.5 L884.4,567.0 L886.4,566.3 L888.5,566.4 L889.1,564.5 L890.3,562.9 L891.4,561.2 L892.6,559.7 M892.6,559.7 L894.8,558.4 L894.4,555.8 L892.8,554.4 L891.5,552.8 M891.5,552.8 L889.0,552.4 L886.9,550.8 L886.5,548.1 L884.1,546.8 L882.1,545.0 L879.8,543.8 L877.4,545.1 L874.7,545.3 M892.5,59.1 L893.4,58.3 M893.4,58.3 L893.1,56.7 L892.3,55.4 L891.4,54.2 L890.4,52.9 L888.9,53.5 L887.6,54.4 L885.9,54.9 L884.4,53.9 L883.8,51.4 L882.2,49.4 L880.6,47.4 L879.5,45.2 M884.5,87.8 L885.9,86.1 L888.0,85.1 L890.7,85.5 L892.0,83.0 L890.5,80.8 L889.5,78.2 L890.7,75.5 L893.2,74.2 M893.2,74.2 L893.9,72.0 L892.7,70.0 L891.4,68.4 L889.6,67.2 M885.0,143.4 L887.3,142.5 L889.0,140.8 M889.0,140.8 L888.7,139.1 L889.5,137.6 L890.6,136.0 L889.4,134.4 M889.4,134.4 L888.0,133.4 L886.7,132.4 L887.8,130.8 L887.2,129.1 L884.7,127.6 L881.9,126.9 L882.7,125.6 L883.9,124.7 L883.9,123.2 L883.9,121.7 L883.3,119.8 L884.6,118.3 L883.2,117.4 L881.8,116.4 M915.7,596.8 L915.1,595.9 L915.7,593.5 L914.3,591.3 L914.2,588.9 L913.4,586.7 M913.4,586.7 L911.7,586.8 L910.2,585.9 L909.1,584.6 L907.4,584.1 L905.8,584.6 L904.4,585.4 L902.7,585.7 L901.4,586.9 M901.4,586.9 L899.9,587.6 L898.7,588.6 L898.1,590.1 L897.1,591.5 M891.5,552.8 L892.2,551.1 L893.6,549.8 L893.0,548.0 L892.4,546.2 L894.4,546.1 L896.0,547.1 L897.1,545.6 L898.9,544.9 M898.9,544.9 L898.9,544.4 M898.9,544.4 L896.4,544.4 L893.8,544.7 L893.8,542.8 L892.0,542.1 L890.6,543.2 L888.9,543.0 L886.8,541.5 L884.6,540.4 L882.3,539.1 L880.7,537.1 M883.8,511.3 L884.3,509.9 L885.4,508.8 L887.0,508.4 L887.9,507.0 L889.7,507.2 L890.5,505.5 L892.0,505.4 L893.5,505.0 M893.5,505.0 L894.6,503.8 L895.5,502.4 L895.4,500.8 L895.3,499.1 M895.3,499.1 L895.0,497.8 M895.0,497.8 L892.0,497.6 L889.9,499.7 L888.0,501.7 L885.4,502.5 L883.0,501.2 L880.3,500.7 L877.7,499.9 L875.0,500.3 M875.0,500.3 L872.9,501.0 M875.0,500.3 L875.7,498.7 L875.8,497.0 L877.0,495.6 L878.5,494.8 L880.3,494.7 L882.0,494.7 L883.1,493.3 L884.4,492.2 L885.5,490.8 L887.2,490.4 L888.6,489.5 L889.8,488.3 L888.1,486.8 L889.1,484.7 L891.0,483.9 L891.7,482.1 M891.7,482.1 L891.4,479.6 L890.2,477.3 M877.8,406.3 L880.2,405.9 L882.7,406.0 L885.1,405.2 L887.3,404.2 L888.1,401.5 L890.8,400.7 L892.7,398.8 L895.3,398.6 M895.3,398.6 L894.3,396.0 M894.3,396.0 L894.2,394.1 L894.3,392.2 L892.5,391.4 L890.9,390.8 M893.2,74.2 L894.6,75.9 L896.5,77.0 L898.3,78.7 L900.7,78.0 L902.8,79.4 L905.2,79.2 L906.9,81.1 L906.9,83.6 M906.9,83.6 L908.6,83.6 M908.6,83.6 L909.3,81.7 L910.6,80.1 L912.1,78.8 L912.9,76.9 M912.9,76.9 L910.6,75.9 L910.2,73.4 L908.3,72.0 L907.3,69.9 L906.2,67.4 L906.7,64.7 L904.0,64.4 L901.7,62.9 M901.7,62.9 L899.8,61.6 L898.1,60.1 L896.2,58.7 L894.0,57.9 M894.0,57.9 L893.4,58.3 M898.0,163.5 L897.0,160.9 L898.2,158.4 L897.4,155.7 L894.8,154.6 L894.3,152.0 L896.2,150.1 L897.2,147.8 L899.2,146.4 M899.2,146.4 L897.8,143.8 L895.5,141.9 M895.5,141.9 L893.9,141.5 L892.2,141.5 L890.7,140.7 L889.0,140.8 M887.4,92.6 L888.8,91.5 L890.1,90.2 L891.8,90.6 L893.5,91.0 L894.0,89.2 L895.6,88.3 L895.5,86.7 L895.7,85.0 L897.3,85.1 L898.9,84.9 L900.4,84.2 L901.1,82.7 L902.9,82.5 L904.3,81.3 L906.0,82.0 L906.9,83.6 M902.5,190.0 L903.4,189.0 L902.6,186.3 M902.6,186.3 L900.9,186.5 L900.8,186.5 M894.0,57.9 L895.6,57.3 L896.8,56.1 L895.9,54.2 L897.3,52.7 L897.0,51.0 L898.3,49.8 L899.6,48.5 L899.0,46.8 M899.0,46.8 L898.9,46.7 M898.9,46.7 L896.7,45.5 L894.3,44.7 L892.5,42.8 L890.4,41.3 L888.3,39.8 L885.9,38.8 L883.2,39.9 L880.8,38.4 M890.9,445.6 L892.7,446.3 L894.0,444.9 L894.9,446.3 L896.4,446.9 L897.8,446.5 L899.2,445.8 L900.7,446.0 L902.0,446.7 M902.0,446.7 L902.9,445.1 L902.7,443.3 L904.5,442.6 L905.2,440.8 L905.6,438.8 L905.0,436.8 L906.9,436.1 L908.5,435.0 M908.5,435.0 L906.6,434.9 L904.7,434.5 L905.0,432.2 L902.9,431.1 L902.6,429.3 L903.2,427.6 L903.0,425.9 L902.0,424.4 M902.0,424.4 L899.8,424.9 M902.6,186.3 L905.0,185.3 L906.7,183.4 L907.6,181.0 L907.4,178.4 M882.2,572.6 L882.2,570.3 L884.3,569.1 L884.5,567.1 L885.7,565.3 L887.7,565.7 L889.7,565.9 L891.6,564.9 L893.8,565.4 M893.8,565.4 L894.6,563.9 L894.3,562.3 M894.3,562.3 L893.5,561.0 L892.6,559.7 M891.7,482.1 L892.7,484.5 L894.3,486.5 L895.5,487.7 L897.2,487.7 L897.3,489.3 L897.0,490.8 M897.0,490.8 L900.0,491.2 L902.9,490.5 L905.8,490.7 L908.7,490.2 M908.7,490.2 L908.6,488.2 L909.6,486.4 L908.3,484.4 L909.7,482.5 L912.1,482.4 L914.2,481.6 L915.3,479.6 L915.6,477.3 M915.6,477.3 L912.9,477.4 L910.3,477.4 L910.0,475.9 L910.0,474.4 L908.5,474.0 L907.3,473.1 L904.5,473.4 L901.8,474.0 L900.0,471.9 L898.7,469.4 M898.7,469.4 L896.5,470.1 M895.0,497.8 L896.5,496.2 L895.6,494.2 L896.7,492.7 L897.0,490.8 M894.3,562.3 L896.8,563.1 L899.0,561.6 L901.4,562.1 L903.6,561.0 L906.1,561.2 L908.1,559.7 L910.3,558.2 L912.8,559.4 M912.8,559.4 L912.5,557.5 M912.5,557.5 L910.9,555.5 L908.4,554.8 L907.6,552.5 L906.4,550.4 L904.8,548.3 L904.0,545.7 L901.4,545.7 L898.9,544.9 M901.4,586.9 L900.8,584.6 L901.9,582.4 M901.9,582.4 L900.2,580.0 L901.1,577.3 L899.6,576.2 L898.0,577.2 L898.3,575.4 L896.8,574.4 L896.4,571.9 L896.4,569.5 L895.2,567.4 L893.8,565.4 M891.1,524.6 L891.7,524.6 M891.7,524.6 L891.6,522.3 L893.1,520.6 L895.4,520.5 L896.7,518.5 M896.7,518.5 L897.2,516.0 M897.2,516.0 L898.3,514.5 L898.9,512.8 L896.8,512.2 L896.6,510.0 L895.3,507.3 L893.5,505.0 M898.9,46.7 L897.6,45.8 L896.0,45.6 L894.3,45.5 L892.9,46.2 L892.3,44.8 L891.4,43.6 L890.6,42.1 L890.9,40.5 L891.1,38.9 L892.1,37.7 L890.8,36.7 L889.8,35.6 L887.9,35.4 L887.5,33.5 L887.8,32.0 L888.6,30.8 M882.8,414.3 L884.3,413.0 L886.2,412.8 L887.5,411.3 L887.6,409.4 L889.3,409.8 L891.0,409.9 L892.7,410.8 L894.4,409.8 L895.7,408.8 L897.2,408.0 L898.9,407.8 L900.5,408.4 L902.1,408.0 L903.7,408.1 L905.6,408.2 L906.4,406.5 M906.4,406.5 L904.5,404.9 L902.3,406.0 L900.3,407.3 L898.1,406.4 L897.0,404.6 L895.8,402.8 L895.5,400.7 L895.3,398.6 M889.4,134.4 L889.5,132.0 L891.1,130.3 L891.4,128.1 L892.3,126.0 L894.4,125.0 L896.4,124.0 L898.7,124.0 L901.0,124.4 M901.0,124.4 L899.5,121.8 L897.4,119.7 L896.8,118.0 L896.2,116.3 L894.4,115.8 L892.6,116.3 M892.6,116.3 L891.7,117.7 L890.7,119.2 L889.0,119.3 L887.4,119.8 L886.7,118.0 L886.1,116.2 L884.2,115.9 L882.3,116.0 M892.6,116.3 L894.9,116.3 L896.5,114.5 L896.0,112.3 L897.4,110.4 L898.2,108.2 L900.5,108.2 L902.2,107.4 L903.6,106.1 M903.6,106.1 L903.4,105.5 M903.4,105.5 L901.9,106.0 L900.4,106.6 L899.4,108.1 L897.7,108.4 L896.6,106.9 L895.3,105.7 L893.4,105.4 L891.7,106.3 L891.5,104.7 L891.2,103.2 L889.4,102.9 L888.7,101.2 L888.1,98.3 L886.9,95.6 M906.3,172.7 L907.7,171.8 L908.2,170.3 L908.1,168.5 L906.6,167.6 L908.1,165.0 L911.1,165.1 M911.1,165.1 L911.9,163.2 L913.3,161.7 L913.6,159.7 L913.7,157.7 L914.4,155.8 L913.7,153.8 L913.4,151.8 L912.6,150.0 M912.6,150.0 L911.0,148.7 L909.1,149.7 L907.7,148.6 L905.8,148.5 L904.0,149.0 L902.4,148.0 L900.9,147.0 L899.2,146.4 M894.3,396.0 L896.5,395.1 L898.7,394.1 L900.4,392.5 L902.1,390.8 L903.8,389.1 L904.3,386.7 L904.5,384.3 L904.7,383.9 M898.7,469.4 L900.4,467.6 L901.4,465.5 L902.2,463.3 L903.6,461.4 M903.6,461.4 L904.4,459.1 L904.6,456.8 L904.0,454.3 L905.6,452.2 M905.6,452.2 L905.6,450.3 L904.0,449.3 L902.7,448.3 L902.0,446.7 M902.0,424.4 L900.3,422.5 L899.7,420.1 L900.4,417.8 L901.9,415.8 L904.1,414.8 L906.6,414.8 L906.7,412.3 L908.5,410.4 M908.5,410.4 L908.2,408.2 L906.7,406.6 M906.7,406.6 L906.4,406.5 M897.2,516.0 L898.4,514.2 L900.5,514.8 L902.0,513.8 L903.6,513.1 L903.8,511.3 L904.0,509.4 L904.7,507.7 L906.0,506.4 M906.0,506.4 L903.9,505.6 L902.1,504.3 L902.7,502.1 L902.7,499.9 L901.2,501.8 L898.8,501.5 L896.7,500.8 L895.3,499.1 M898.9,544.4 L900.1,542.7 L902.0,541.7 L903.5,539.6 L902.0,537.6 M902.0,537.6 L902.4,535.6 L902.3,533.6 M902.3,533.6 L901.7,531.5 L901.4,529.4 L899.4,528.5 L897.2,528.9 L896.5,527.1 L895.4,525.5 L893.7,524.4 L891.7,524.6 M899.0,46.8 L899.9,45.5 L901.2,44.7 L902.5,44.0 L903.8,43.2 L905.5,43.1 L907.2,42.9 L907.8,44.6 L909.5,45.3 M909.5,45.3 L910.3,43.6 L911.3,42.1 L913.0,41.0 L913.4,39.0 L914.9,38.0 L916.3,36.8 L917.9,35.9 L919.5,35.0 M919.5,35.0 L920.4,33.1 L921.0,31.0 L921.1,30.8 M901.9,582.4 L901.9,580.8 L902.0,579.2 L901.6,577.3 L903.2,576.2 L903.1,574.6 L903.9,573.2 L904.6,571.7 L905.5,570.4 L906.2,568.8 L906.6,567.1 L908.2,566.5 L909.5,565.4 L910.3,563.9 L911.9,563.1 L913.2,561.6 L915.1,562.3 M915.1,562.3 L914.3,560.6 L912.8,559.4 M906.0,506.4 L908.8,506.4 L910.0,509.0 L911.4,506.6 L914.2,507.0 M914.2,507.0 L916.5,505.8 L916.4,503.2 M916.4,503.2 L916.6,500.3 M916.6,500.3 L916.5,499.9 M916.5,499.9 L914.5,499.7 L912.6,499.8 L911.8,498.0 L911.3,496.1 L910.0,494.9 L908.7,493.7 L908.3,492.0 L908.7,490.2 M908.9,207.4 L909.9,207.1 L912.3,206.4 L913.8,204.4 L914.5,201.9 M914.5,201.9 L916.8,201.6 L918.0,199.7 L917.9,197.4 L919.2,195.6 M919.2,195.6 L918.6,193.9 L917.8,192.3 L916.0,191.8 L914.3,191.6 L914.7,190.1 L914.9,188.5 L915.2,186.9 L916.1,185.5 M916.1,185.5 L915.1,183.1 L913.2,181.3 M913.2,181.3 L911.3,179.7 M911.3,179.7 L909.0,180.0 L907.7,178.0 M895.5,141.9 L897.0,140.5 L898.8,139.5 L900.1,137.8 L902.2,137.2 L901.8,134.4 L904.3,133.2 L906.7,133.9 L908.9,132.6 M908.9,132.6 L906.2,132.6 L904.7,130.3 L905.0,127.9 L905.5,125.6 M905.5,125.6 L903.3,125.0 L901.0,124.4 M913.5,221.4 L914.8,219.0 L916.4,216.6 L917.9,216.7 L919.5,216.3 L920.3,215.0 L921.5,213.9 M921.5,213.9 L919.8,213.7 L918.2,213.2 L917.5,211.7 L917.2,210.0 M917.2,210.0 L914.8,210.0 L912.4,209.2 L910.0,209.5 L909.5,209.4 M903.4,105.5 L904.3,103.3 L904.1,101.0 L905.6,99.3 L906.8,97.3 L907.1,95.1 L907.8,93.0 L909.7,91.4 L909.6,88.9 M909.6,88.9 L909.6,86.0 M909.6,86.0 L908.6,83.6 M912.6,150.0 L914.8,148.6 L916.4,146.5 L918.6,144.7 L918.5,141.8 M918.5,141.8 L919.7,140.0 L919.1,137.9 M919.1,137.9 L918.0,136.7 L917.3,135.3 L915.9,134.2 L914.2,134.8 L911.5,133.7 L908.9,132.6 M896.7,518.5 L899.4,519.0 L901.2,521.1 L902.8,521.1 L904.1,521.9 L905.3,521.0 L906.3,519.8 L908.6,519.3 L911.1,519.1 L913.2,517.8 L915.6,517.4 M915.6,517.4 L914.4,514.7 L915.5,512.1 L914.9,509.5 L914.2,507.0 M906.7,406.6 L907.6,404.8 L908.5,402.9 L910.7,402.6 L911.8,400.7 L912.5,398.8 L912.3,396.8 L913.8,395.3 L914.0,393.2 M914.0,393.2 L912.3,391.1 L913.7,388.9 L915.8,387.5 L915.5,385.0 M915.5,385.0 L913.9,384.3 L912.7,383.5 M905.5,125.6 L906.7,124.2 L907.6,122.6 L907.0,120.9 L907.1,119.0 L907.8,117.3 L909.7,116.8 L910.6,115.3 L912.2,114.5 M912.2,114.5 L913.0,112.9 L911.8,111.4 M911.8,111.4 L911.2,108.6 L909.2,106.5 L908.1,105.1 L906.5,104.3 L905.4,105.9 L903.6,106.1 M908.5,435.0 L910.4,435.9 L912.0,437.3 L913.4,435.6 L915.7,435.5 M915.7,435.5 L918.1,434.2 M918.1,434.2 L919.7,432.1 L920.3,429.5 L922.6,428.3 L924.5,426.5 L924.7,424.9 L925.3,423.4 L926.6,422.3 L928.2,421.8 L927.2,420.5 L925.8,419.7 L926.6,418.0 L925.5,416.5 M925.5,416.5 L925.5,416.4 M925.5,416.4 L923.9,414.2 L921.6,412.8 L920.9,410.1 L918.7,408.4 L917.9,409.8 L917.2,411.2 L915.7,412.0 L914.0,411.6 L912.3,411.6 L910.9,412.6 L909.7,411.5 L908.5,410.4 M912.5,557.5 L913.7,554.9 L915.3,552.7 L915.6,549.9 L916.3,547.2 M916.3,547.2 L914.7,545.0 M914.7,545.0 L912.5,543.4 L910.2,544.7 L909.6,542.5 L908.9,540.4 L906.9,540.1 L905.0,540.2 L904.1,538.2 L902.0,537.6 M901.7,62.9 L903.9,62.4 L905.4,64.2 L907.1,63.2 L909.1,63.1 L911.1,62.6 L912.1,60.9 L912.9,59.1 L914.4,57.9 M914.4,57.9 L915.7,55.3 M915.7,55.3 L915.1,54.2 M915.1,54.2 L913.7,53.5 L912.2,53.1 L910.7,52.5 L909.6,51.4 L910.8,50.0 L909.9,48.3 L909.9,46.8 L909.5,45.3 M912.9,76.9 L914.6,76.0 M914.6,76.0 L914.9,73.6 L913.4,71.6 L914.1,69.2 L913.2,67.0 L914.5,64.6 L916.5,62.8 L916.0,61.1 L917.1,59.6 L915.7,58.8 L914.4,57.9 M902.3,533.6 L903.9,533.0 L905.7,533.3 L907.2,532.4 L908.9,532.3 L910.6,531.7 L911.7,530.4 L912.9,529.2 L914.4,528.4 M914.4,528.4 L916.6,526.8 M916.6,526.8 L917.8,524.5 L918.2,521.9 M918.2,521.9 L917.1,519.5 L915.6,517.4 M915.5,385.0 L915.8,384.8 M915.8,384.8 L915.8,384.2 M915.0,236.3 L915.7,236.0 M915.7,236.0 L916.4,234.2 M916.4,234.2 L915.0,231.7 L915.1,228.9 L914.8,226.1 L914.2,225.4 M911.8,111.4 L912.1,109.6 L911.7,107.8 L913.4,107.1 L915.1,106.5 L917.8,105.3 L920.8,104.8 M920.8,104.8 L919.1,105.0 L917.6,105.6 L917.2,103.6 L915.3,103.3 L913.6,103.8 L911.9,103.3 L910.9,101.9 L910.4,100.2 L910.5,98.5 L909.8,96.9 L908.8,95.4 L907.1,94.8 L908.1,93.4 L909.1,92.1 L909.3,90.5 L909.6,88.9 M915.1,562.3 L915.7,562.5 M915.7,562.5 L917.9,562.9 L920.0,563.4 L922.0,562.6 L924.1,562.1 L926.0,561.1 L928.0,560.5 L929.6,559.2 L931.7,558.6 M931.7,558.6 L931.3,555.9 L929.5,553.9 L931.7,552.3 L932.9,550.0 M932.9,550.0 L930.7,548.5 L929.0,546.4 L926.9,544.6 L926.3,541.9 M926.3,541.9 L924.7,542.2 L923.5,543.3 L921.9,543.7 L920.5,543.0 L921.3,545.0 L919.7,546.4 L918.2,547.9 L916.3,547.2 M919.1,137.9 L920.5,136.6 L922.3,137.3 L923.7,136.6 L924.9,135.5 L926.1,134.4 L927.3,133.4 L927.6,131.5 L929.4,131.1 M929.4,131.1 L928.3,128.7 L929.8,126.4 M929.8,126.4 L927.9,124.5 L925.8,122.9 L923.7,121.3 L921.5,119.6 L919.0,118.7 L916.6,117.5 L914.4,116.0 L912.2,114.5 M915.6,477.3 L916.0,477.2 M916.0,477.2 L917.3,475.6 L916.7,473.7 L918.4,472.8 L919.1,471.0 L919.6,469.2 L918.8,467.5 L919.2,465.8 L919.3,464.1 M919.3,464.1 L917.2,462.8 L915.2,461.4 L912.8,460.0 L912.4,457.3 L909.8,457.1 L907.7,458.6 L905.6,459.9 L903.6,461.4 M919.3,464.1 L920.5,462.9 L921.8,461.9 L921.7,460.0 L923.3,459.0 M923.3,459.0 L924.0,457.3 L923.3,455.5 L922.2,454.2 L921.5,452.6 M921.5,452.6 L921.2,452.4 M921.2,452.4 L919.3,451.9 L917.3,451.4 L915.4,452.0 L913.4,451.5 L911.4,451.5 L909.5,451.8 L907.6,452.1 L905.6,452.2 M917.2,269.0 L918.2,269.1 M918.2,269.1 L918.1,266.3 M918.1,266.3 L916.7,263.8 L916.7,260.9 M916.7,260.9 L916.3,260.7 M914.7,545.0 L914.1,542.9 L914.5,540.7 L913.6,538.7 L912.8,536.7 L913.1,534.6 L913.6,532.6 L912.6,530.2 L914.4,528.4 M926.3,541.9 L926.5,539.0 M926.5,539.0 L926.7,536.7 L925.0,535.0 L926.0,532.6 L924.2,530.8 L922.6,528.9 L921.5,526.8 L919.1,526.5 L916.6,526.8 M920.8,104.8 L922.4,104.9 L924.0,104.8 L925.5,104.2 L927.1,104.1 M927.1,104.1 L928.2,101.5 L930.5,99.9 L930.5,97.1 L929.3,94.6 M929.3,94.6 L927.8,94.0 L926.5,92.9 L926.4,91.0 L924.8,90.1 L923.1,89.5 L921.3,89.6 L920.4,91.3 L918.7,92.0 L916.4,90.4 L914.7,88.2 L914.0,86.7 L912.6,85.9 L911.1,86.3 L909.6,86.0 M916.4,234.2 L918.0,233.2 L919.9,233.2 L921.7,232.8 L923.2,231.9 L925.2,231.9 L927.2,232.3 L928.7,231.0 L930.2,229.7 M930.2,229.7 L931.6,228.1 L931.4,225.9 L933.5,227.0 L935.4,225.8 M935.4,225.8 L935.9,224.0 L935.3,222.2 L936.3,220.6 L936.7,218.9 L936.4,216.7 L936.4,214.6 L934.0,215.0 L932.3,213.4 M932.3,213.4 L930.1,211.7 M930.1,211.7 L927.8,212.2 L926.0,213.8 L923.8,215.3 L921.5,213.9 M916.0,252.7 L916.0,252.8 L918.4,252.8 L920.5,253.9 M920.5,253.9 L922.2,253.8 L923.5,254.9 L925.1,254.7 L926.6,255.4 L928.3,255.0 L929.0,253.4 L930.2,252.4 L931.4,251.4 M931.4,251.4 L931.5,250.2 M931.5,250.2 L929.9,247.9 L929.1,245.2 L927.4,242.9 L924.8,241.8 L924.1,240.4 L922.7,239.5 L922.2,238.1 L921.6,236.7 L919.6,236.7 L918.9,234.8 L917.2,235.3 L915.7,236.0 M921.2,452.4 L919.3,451.0 L918.5,448.8 L917.6,446.6 L916.9,444.5 L917.3,442.1 L917.6,439.8 L916.3,437.8 L915.7,435.5 M914.6,76.0 L916.1,78.3 L918.8,78.5 L920.8,77.1 L922.5,75.4 L924.6,75.3 L926.1,73.8 L928.1,73.7 L929.9,72.9 M929.9,72.9 L929.9,71.1 L930.1,69.3 L930.4,67.5 L929.8,65.8 L928.7,63.9 L928.1,61.9 L929.5,60.2 L931.3,59.0 M931.3,59.0 L929.4,58.2 L927.5,57.4 L926.1,55.7 L923.8,55.5 L922.5,53.2 L919.8,53.2 L917.0,52.8 L915.7,55.3 M911.3,179.7 L912.7,178.4 L914.3,177.5 L916.0,178.1 L917.9,178.3 L919.0,176.5 L921.0,176.8 L921.5,175.0 L922.8,173.8 L923.5,172.0 L924.3,170.3 L926.1,169.5 L927.4,167.9 L929.4,168.5 L930.9,170.0 L932.9,169.5 L934.8,168.8 M934.8,168.8 L934.3,167.3 L933.5,165.9 L934.3,164.4 L933.8,162.8 L932.7,161.3 L930.9,161.5 L930.4,159.8 L929.0,158.9 M929.0,158.9 L927.5,158.4 L926.7,157.0 L925.0,156.8 L923.9,155.6 L922.9,156.9 L921.5,157.4 L920.4,158.5 L919.1,159.3 L917.9,161.5 L915.9,163.2 L913.5,164.1 L911.1,165.1 M918.2,521.9 L920.1,520.8 L922.4,520.4 L924.3,519.0 L926.6,519.2 L928.6,517.5 L931.1,518.4 L933.3,518.9 L935.5,518.8 M935.5,518.8 L937.0,517.4 L936.5,515.3 M936.5,515.3 L937.1,513.9 L936.9,512.3 L935.0,512.2 L934.5,510.4 L932.7,508.5 L930.6,506.8 M930.6,506.8 L928.8,507.6 L926.8,508.2 L924.9,507.8 L923.1,506.8 L921.8,505.0 L919.6,505.2 L918.7,503.1 L916.4,503.2 M915.1,54.2 L916.4,52.2 L917.4,50.0 L919.9,49.2 L922.1,50.7 L924.6,51.1 L925.9,49.0 L926.9,47.2 L927.9,45.4 M927.9,45.4 L926.8,44.0 L925.8,42.7 L925.2,41.1 L924.5,39.6 L922.7,39.0 L922.0,37.3 L920.0,37.0 L919.5,35.0 M916.5,499.9 L917.7,497.9 L917.5,495.5 L919.0,493.7 L919.4,491.5 L920.1,489.2 L921.2,487.0 L923.6,486.6 L925.4,484.8 M925.4,484.8 L923.1,483.6 L920.9,482.4 L919.5,480.3 L918.4,478.0 M918.4,478.0 L916.0,477.2 M913.4,586.7 L915.0,587.2 L916.3,588.1 L917.9,587.5 L919.0,586.3 M919.0,586.3 L920.2,584.1 L920.6,581.6 L921.8,579.1 L924.5,578.5 M924.5,578.5 L923.7,577.0 L923.3,575.4 L921.6,575.5 L919.9,575.4 L919.3,572.5 L921.0,570.0 L919.3,568.4 L918.1,566.5 L917.3,564.2 L915.7,562.5 M920.6,590.0 L920.1,588.9 L919.0,586.3 M917.2,210.0 L916.2,208.1 L915.6,206.1 L913.9,204.3 L914.5,201.9 M923.3,296.1 L924.7,295.8 L926.1,294.7 M926.1,294.7 L924.5,294.1 L923.3,292.9 L922.7,292.8 M916.7,260.9 L917.7,259.0 L917.7,256.9 L918.8,255.1 L920.5,253.9 M929.3,94.6 L930.6,92.4 L929.1,90.2 L928.7,87.8 L930.5,86.1 L932.6,87.7 L935.2,87.3 L937.3,86.1 L938.9,84.3 M938.9,84.3 L938.9,83.9 M938.9,83.9 L939.5,82.3 L939.3,80.6 L939.0,78.7 L937.3,77.8 L936.2,76.6 L934.6,76.2 L933.2,75.4 L931.9,74.6 M931.9,74.6 L929.9,72.9 M930.1,211.7 L929.6,210.1 L929.8,208.4 L928.8,206.8 L929.4,205.0 M929.4,205.0 L928.1,203.8 L927.4,202.1 L926.2,200.7 L925.5,199.0 L923.7,198.5 L922.0,198.0 L920.3,197.1 L919.2,195.6 M929.0,158.9 L929.2,157.2 L930.2,155.7 M930.2,155.7 L928.8,154.5 L927.1,155.4 L926.9,153.8 L926.0,152.5 L927.0,149.9 L926.1,147.3 L924.7,145.0 L923.6,142.6 L921.1,141.9 L918.5,141.8 M921.5,452.6 L923.4,453.0 L925.2,452.3 L926.0,450.7 L927.1,449.2 L928.1,447.8 L929.6,447.1 L931.4,446.5 L931.9,444.8 M931.9,444.8 L932.8,443.5 L933.5,442.1 L934.1,440.7 L934.1,439.1 M934.1,439.1 L931.8,438.7 L929.5,439.4 L927.3,438.3 L926.3,436.1 L924.5,434.6 L922.3,434.7 L920.1,434.8 L918.1,434.2 M920.3,281.2 L921.9,280.1 L924.7,279.3 M924.7,279.3 L925.4,276.6 L923.1,275.0 L923.0,272.5 L921.0,270.9 M921.0,270.9 L919.7,269.9 L918.2,269.1 M925.5,416.4 L926.5,415.0 L927.1,413.3 L928.7,414.7 L930.5,413.8 M930.5,413.8 L930.8,411.9 L931.2,410.0 L929.4,409.2 L928.3,407.6 L929.8,406.7 L930.6,405.2 L931.7,404.0 L932.6,402.6 M932.6,402.6 L929.9,403.9 L927.0,403.3 L924.6,401.7 L921.8,400.9 L919.9,398.7 L919.0,396.0 L918.1,394.6 L917.2,393.3 L915.6,393.8 L914.0,393.2 M926.1,294.7 L927.6,295.3 L929.2,296.0 L930.3,294.7 L931.4,293.4 M931.4,293.4 L931.6,291.5 L932.2,289.7 L931.7,287.9 L930.8,286.2 M930.8,286.2 L929.2,284.9 L928.3,283.0 L927.5,281.1 L925.7,279.9 M925.7,279.9 L924.7,279.3 M918.1,266.3 L919.3,265.3 L920.9,265.0 L922.4,265.0 L924.0,264.8 L925.3,263.8 L926.7,263.1 L928.2,264.0 L929.9,263.7 L929.6,262.0 L928.8,260.5 L929.8,259.2 L930.5,257.7 L930.7,256.0 L929.8,254.5 L930.7,253.1 L931.6,251.7 M931.6,251.7 L931.4,251.4 M929.8,126.4 L931.1,125.1 L931.0,123.2 L931.9,121.7 L932.9,120.3 L933.4,118.2 L932.8,116.2 L934.3,114.9 L936.3,114.2 M936.3,114.2 L936.1,113.7 M936.1,113.7 L934.0,113.6 L932.3,112.2 L932.7,110.2 L932.4,108.2 L930.9,107.4 L929.8,106.2 L928.3,105.4 L927.1,104.1 M928.7,578.7 L928.1,578.1 M928.1,578.1 L926.3,578.7 L924.5,578.5 M935.2,319.9 L936.0,319.5 M936.0,319.5 L934.9,319.2 M933.2,314.6 L933.3,314.2 L932.8,312.0 M932.8,312.0 L932.2,311.8 M918.4,478.0 L920.0,477.6 L921.5,478.3 L922.9,477.6 L923.9,476.4 L925.2,475.1 L926.9,474.6 L926.0,473.0 L926.3,471.2 L928.6,469.5 L931.4,469.8 L933.9,468.9 L936.4,468.3 M936.4,468.3 L936.0,466.7 L935.3,465.1 M935.3,465.1 L935.2,462.6 L933.0,461.6 L930.9,461.5 L929.0,462.6 L927.3,461.5 L925.4,462.1 L924.5,460.5 L923.3,459.0 M932.8,312.0 L934.8,311.7 L936.4,310.5 L937.0,308.6 L937.5,306.8 L937.5,304.9 L936.4,303.3 L937.7,301.7 L936.8,299.8 M936.8,299.8 L935.3,298.2 L933.3,297.3 L932.8,295.1 L931.4,293.4 M930.2,155.7 L931.6,156.3 L933.2,156.4 L934.8,157.0 L936.4,156.3 L936.3,154.7 L937.0,153.2 L937.9,151.8 L939.2,150.8 M939.2,150.8 L940.3,148.2 L940.1,145.3 M940.1,145.3 L940.2,143.4 L940.9,141.6 L939.5,140.0 L939.6,137.9 M939.6,137.9 L938.3,136.8 L936.9,135.6 L936.1,134.0 L936.1,132.2 L934.3,132.6 L932.7,131.8 L930.9,132.2 L929.4,131.1 M931.3,59.0 L932.0,56.6 L933.9,55.1 M933.9,55.1 L934.4,52.7 L932.9,50.9 M932.9,50.9 L932.0,49.2 L931.1,47.5 L928.8,47.4 L927.9,45.4 M921.0,270.9 L923.4,269.4 L926.1,269.2 L927.5,266.8 L928.2,264.2 L930.3,262.9 L932.8,262.5 L934.6,260.8 L936.6,259.3 M936.6,259.3 L934.2,258.4 L932.4,256.6 L932.1,254.1 L931.6,251.7 M932.9,50.9 L934.0,49.4 L935.6,48.6 L936.1,46.6 L938.1,46.0 L938.1,44.1 L937.9,42.2 L939.5,41.0 L940.1,39.1 M931.5,250.2 L931.6,250.1 M931.6,250.1 L933.6,248.0 L934.4,245.2 L934.4,242.4 L935.1,239.6 L934.1,236.9 L931.8,235.1 L931.8,232.2 L930.2,229.7 M936.6,259.3 L937.5,261.2 L939.4,262.3 L941.6,262.0 L943.3,263.4 M943.3,263.4 L944.7,264.6 L946.5,264.4 M946.5,264.4 L948.1,262.9 L950.2,262.5 L951.9,261.2 L952.8,259.3 L954.0,257.6 L955.1,255.9 L956.1,254.1 L957.7,252.8 M957.7,252.8 L957.2,251.1 L956.8,249.4 L957.7,247.8 L958.0,246.0 M958.0,246.0 L955.7,244.9 L955.2,242.4 L955.0,240.1 L954.8,237.8 L952.2,238.4 L950.0,239.9 L947.5,238.9 L946.0,236.6 M946.0,236.6 L945.5,238.2 L946.1,239.7 L945.4,241.2 L944.7,242.5 L944.7,244.1 L944.8,245.6 L944.5,247.2 L943.5,248.4 L941.8,248.3 L940.5,247.0 L939.0,248.1 L937.3,247.4 L936.1,248.7 L934.4,248.7 L932.9,249.2 L931.6,250.1 M925.7,279.9 L927.0,279.0 L927.8,277.7 L928.8,276.6 L930.1,275.8 L931.9,275.0 L933.7,275.3 L934.1,273.5 L934.6,271.8 L936.0,271.1 L937.4,270.4 L938.2,269.1 L939.2,267.8 L939.2,266.1 L940.6,265.0 L941.7,263.8 L943.3,263.4 M932.6,402.6 L934.1,401.1 L934.4,399.0 L936.2,398.0 L937.0,396.1 M937.0,396.1 L937.0,395.6 M937.0,395.6 L936.3,393.0 M936.3,393.0 L934.9,392.2 L933.9,391.0 L933.2,389.6 L932.7,388.1 L931.1,388.3 L929.5,388.8 L928.7,387.2 L926.8,387.1 L925.7,385.9 L925.0,385.1 M920.7,385.2 L918.7,385.8 L915.8,384.8 M926.5,539.0 L928.3,538.3 L929.1,536.6 L931.0,536.4 L932.1,534.8 L934.1,535.4 L935.7,534.1 L937.2,533.0 L938.2,531.4 M938.2,531.4 L936.4,529.6 L936.6,527.0 L937.3,524.7 L937.7,522.4 M937.7,522.4 L937.5,520.0 L935.5,518.8 M929.4,205.0 L931.2,204.1 L932.2,202.4 L934.1,201.9 L935.3,200.3 L937.4,199.3 L937.8,197.0 L937.0,195.1 L936.8,193.0 M936.8,193.0 L934.6,191.2 L931.8,190.7 L929.3,189.6 L926.7,188.6 L924.3,187.1 L921.7,186.1 L918.8,186.7 L916.1,185.5 M934.1,439.1 L935.2,438.2 M935.2,438.2 L935.5,436.5 L935.6,434.8 L934.8,433.3 L934.4,431.6 L932.9,430.8 L931.4,430.1 L930.2,428.8 L928.7,428.1 L929.4,426.5 L929.3,424.7 L928.0,423.6 L926.7,422.4 L925.9,421.1 L925.4,419.6 L924.3,418.0 L925.5,416.5 M932.9,550.0 L934.8,549.6 L935.3,549.4 M941.6,535.4 L940.7,533.9 L939.2,533.0 L938.2,531.4 M928.1,578.1 L928.3,575.6 L928.9,573.3 L930.7,570.9 L929.4,568.4 L928.3,565.6 L927.5,562.7 L929.7,560.6 L932.2,559.0 M932.2,559.0 L931.7,558.6 M936.1,113.7 L937.7,111.2 L938.1,108.3 L939.4,107.4 L939.9,105.9 L940.3,104.4 L940.1,102.9 L940.0,100.9 L939.1,99.2 L940.3,97.8 L941.7,96.5 L943.4,95.2 L945.1,96.3 L946.7,95.6 L947.9,94.4 M947.9,94.4 L947.1,92.5 L945.0,92.6 L944.6,90.7 L942.8,89.9 L942.2,87.9 L940.2,87.6 L939.4,86.0 L938.9,84.3 M933.9,55.1 L936.5,54.8 L938.9,53.9 L941.8,54.4 L943.8,52.2 L944.8,53.3 L946.4,53.7 L946.8,55.2 L948.0,56.2 L949.5,56.4 L951.0,56.1 L952.4,55.4 L953.7,54.7 M953.7,54.7 L953.7,51.9 L951.7,49.8 L953.0,47.3 L952.7,44.6 M952.7,44.6 L950.7,42.9 L950.4,40.4 L948.4,39.2 L946.1,38.6 M930.8,286.2 L932.9,285.5 L933.8,283.5 L935.7,282.4 L937.9,283.1 L939.1,284.7 L940.4,286.4 L942.3,287.7 L944.5,286.9 L945.9,285.5 L945.7,283.5 L947.7,283.0 L948.4,281.1 L947.9,279.3 L948.1,277.4 L947.9,275.2 L949.9,274.3 M949.9,274.3 L947.6,272.6 L946.2,270.1 L946.0,267.2 L946.5,264.4 M925.4,484.8 L927.3,486.1 L928.4,488.2 L930.5,487.4 L932.6,486.6 L934.9,486.7 L935.9,488.8 L938.0,489.4 L939.9,488.4 M939.9,488.4 L940.4,488.3 M940.4,488.3 L941.3,486.1 L941.5,483.7 L941.7,481.2 L943.6,479.5 M943.6,479.5 L943.3,477.3 L942.6,475.3 M942.6,475.3 L940.5,473.7 L938.0,473.2 L936.8,470.9 L936.4,468.3 M916.6,500.3 L919.2,501.0 L921.4,499.4 L922.3,496.6 L925.3,496.5 L927.8,495.6 L929.4,493.5 L931.9,493.9 L934.5,494.3 M934.5,494.3 L936.8,493.6 L939.2,493.2 L939.4,490.8 L939.9,488.4 M935.3,465.1 L937.3,463.4 L938.9,461.4 L939.9,459.0 L940.4,456.5 M940.4,456.5 L939.3,455.0 L938.1,453.6 L936.3,452.5 L936.6,450.3 L935.7,448.5 L935.5,446.5 L933.9,445.4 L931.9,444.8 M935.2,438.2 L935.8,438.1 M935.8,438.1 L936.4,436.6 L937.6,435.5 L938.0,434.0 L938.1,432.4 L939.2,431.2 L940.7,430.8 L942.3,430.5 L943.7,429.9 L945.1,427.5 L945.9,424.7 L947.0,422.0 L949.3,420.1 M949.3,420.1 L948.5,419.0 M948.5,419.0 L945.8,418.5 L943.3,417.2 L941.4,419.5 L938.5,420.0 L936.2,418.2 L933.3,418.4 L932.2,415.9 L930.5,413.8 M936.0,319.5 L938.5,319.8 L939.6,317.7 L942.0,318.0 L942.6,320.4 L944.0,321.3 L945.4,322.2 L946.1,323.7 L946.7,324.2 M947.5,324.7 L947.5,324.7 M947.5,324.7 L947.4,322.8 L948.0,321.0 L947.8,319.1 L948.4,317.3 L950.0,316.0 L950.5,314.1 L951.9,312.8 L953.0,311.3 L954.6,309.5 L953.6,307.3 L955.8,307.0 L957.1,305.3 L957.8,303.3 L959.8,302.8 L959.9,300.8 L961.3,299.3 M961.3,299.3 L960.6,297.8 L961.0,296.2 M961.0,296.2 L959.7,295.0 L958.1,294.3 L956.9,293.0 L955.2,292.4 L952.8,292.7 L951.8,294.8 L950.3,293.3 L948.2,292.8 L947.4,294.6 L945.5,294.8 L943.8,295.2 L942.5,296.3 L940.7,296.8 L940.0,298.6 L938.1,298.2 L936.8,299.8 M930.6,506.8 L930.3,505.1 L930.6,503.4 L930.0,501.6 L930.7,500.0 L932.5,499.3 L933.7,497.9 L933.9,496.0 L934.5,494.3 M913.2,181.3 L915.4,181.0 L917.4,179.8 L919.9,179.3 L921.6,181.2 L923.5,182.2 L925.2,183.5 L926.2,185.4 L928.0,186.7 L929.5,185.2 L931.6,185.3 L933.9,186.0 L935.4,184.1 L936.4,182.1 L938.6,181.4 L940.7,181.5 L942.8,181.6 M942.8,181.6 L941.6,180.6 L940.2,179.7 L940.0,178.0 L940.4,176.4 L939.1,173.8 L939.3,170.8 M939.3,170.8 L936.9,170.1 L934.8,168.8 M932.3,213.4 L933.4,211.6 L933.2,209.4 L934.3,207.4 L933.4,205.4 L934.9,203.7 L937.0,202.8 L939.2,202.9 L941.3,203.7 L942.9,204.1 L944.4,204.9 L945.9,205.8 L947.4,206.5 L949.4,207.2 L950.8,208.6 L952.4,207.6 L954.2,206.6 M954.2,206.6 L954.0,204.0 L956.4,203.0 L955.4,200.8 L956.6,198.7 M956.6,198.7 L956.7,196.7 L956.3,194.7 L955.8,192.7 L955.7,190.7 M955.7,190.7 L955.1,189.3 M955.1,189.3 L952.8,189.8 L950.8,188.6 L948.9,187.5 L946.8,186.7 M946.8,186.7 L944.0,187.7 L941.5,189.3 L939.0,190.9 L936.8,193.0 M939.3,170.8 L940.9,170.0 L942.5,170.7 L943.0,169.3 L943.6,167.8 L944.6,165.4 L945.7,163.0 M945.7,163.0 L947.0,160.8 L946.0,158.4 M946.0,158.4 L945.0,155.9 L942.4,154.7 L940.5,153.0 L939.2,150.8 M936.3,393.0 L937.7,390.7 L938.3,388.1 L939.1,386.6 L940.6,385.9 L939.9,384.4 L939.3,382.9 M939.3,382.9 L937.1,382.8 L935.5,381.1 L933.4,381.3 L931.4,382.1 L931.3,381.9 M946.8,186.7 L945.1,185.6 L943.1,185.5 L944.3,183.5 L942.8,181.6 M934.4,559.6 L932.2,559.0 M939.3,382.9 L941.2,382.3 L943.1,382.6 L943.5,380.7 L944.5,379.1 M944.5,379.1 L946.7,377.6 L947.2,375.1 L946.4,372.8 L946.3,370.4 M946.3,370.4 L945.1,369.1 L944.8,368.1 M948.5,419.0 L948.6,416.9 L949.9,415.3 L949.9,413.3 L949.6,411.3 L948.4,409.2 L948.5,406.8 L949.6,404.7 L951.9,403.8 M951.9,403.8 L949.8,402.3 L947.6,403.4 L946.4,401.2 L943.8,401.1 L941.9,400.1 L939.7,399.5 L937.9,398.2 L937.0,396.1 M946.0,236.6 L944.4,234.2 L944.6,231.3 M944.6,231.3 L942.1,230.3 L939.4,229.6 L937.8,227.4 L935.4,225.8 M936.5,515.3 L937.1,513.4 L938.4,511.9 L939.7,510.3 L941.5,509.4 L943.9,509.4 L946.2,509.6 L946.5,507.2 L948.2,505.4 M948.2,505.4 L949.9,503.5 L951.3,501.5 M951.3,501.5 L949.3,499.6 L946.6,499.0 L947.8,498.0 L948.6,496.6 L948.2,495.0 L947.3,493.7 L944.6,493.7 L941.9,493.4 L940.8,492.2 L939.5,491.3 L940.7,490.0 L940.4,488.3 M949.1,349.3 L950.9,349.6 L952.8,347.8 L955.0,347.1 L957.4,346.9 M957.4,346.9 L959.4,344.9 L960.6,342.4 L960.1,339.7 L958.7,337.3 L957.2,335.3 L956.4,332.9 L954.5,331.2 L952.5,329.9 M952.5,329.9 L950.6,329.7 L949.5,328.1 M949.5,328.1 L948.5,328.9 M961.0,296.2 L963.2,295.4 L964.9,293.8 L965.3,291.5 L965.2,289.2 M965.2,289.2 L963.6,289.1 L962.1,289.2 L960.9,288.3 L959.4,287.9 L960.2,286.2 L959.5,284.5 L958.1,283.6 L956.8,282.5 L955.0,280.4 L952.9,278.8 L951.1,276.7 L949.9,274.3 M937.7,522.4 L939.3,522.8 L940.4,523.8 L941.9,524.4 L943.4,524.3 L945.0,524.5 L946.5,524.4 L948.1,524.2 L949.4,523.2 M949.4,523.2 L951.3,522.5 M951.8,521.8 L952.5,520.2 L952.7,518.0 L951.9,515.8 L951.6,513.6 L949.8,511.4 L951.2,508.9 L950.4,506.5 L948.2,505.4 M939.6,137.9 L941.8,138.0 L943.1,139.7 L944.4,141.2 L945.4,142.9 L947.4,142.5 L948.8,141.1 L950.6,140.2 L952.6,140.2 L954.7,140.3 L956.7,141.2 L957.6,139.2 L959.3,137.9 L961.1,136.9 L962.7,135.6 L962.1,133.5 L962.5,131.5 M962.5,131.5 L961.8,129.0 L963.3,126.9 M963.3,126.9 L961.6,125.8 L960.9,123.9 L960.6,122.0 L959.6,120.3 M959.6,120.3 L957.6,118.2 L954.7,117.7 M954.7,117.7 L952.4,116.7 L949.9,116.9 L947.8,115.7 L945.7,114.5 L943.4,114.0 L941.0,114.6 L938.7,113.6 L936.3,114.2 M931.9,74.6 L933.9,73.8 L934.8,71.9 L935.6,69.8 L937.6,69.0 L938.4,67.0 L940.2,65.9 L942.5,65.8 L943.6,63.8 L945.5,62.9 L947.3,62.0 L949.4,62.0 L951.4,62.1 L953.3,61.1 L955.4,61.4 L956.6,59.5 L958.9,59.4 M958.9,59.4 L957.2,58.8 L955.7,57.8 L954.3,56.5 L953.7,54.7 M940.4,456.5 L942.1,454.9 L944.4,454.7 L946.6,454.4 L948.5,453.2 M948.5,453.2 L949.8,451.4 L949.9,449.1 L950.7,447.1 L950.5,444.9 M950.5,444.9 L948.1,445.2 L946.7,443.3 L945.5,441.5 L943.7,440.4 L941.5,440.2 L939.3,440.6 L937.2,439.9 L935.8,438.1 M955.1,189.3 L955.9,187.9 L957.1,186.9 L958.5,186.2 L959.3,184.8 L960.8,184.2 L962.2,183.5 L963.8,183.8 L965.4,184.0 L966.8,182.9 L968.3,182.0 L967.7,180.3 L968.0,178.5 L968.5,176.9 L967.8,175.4 L967.6,173.8 L966.5,172.5 M966.5,172.5 L964.8,172.3 L963.5,171.2 L962.1,170.1 L962.0,168.3 L960.1,168.3 L959.4,166.4 L958.6,165.0 L958.1,163.5 L956.6,164.2 L954.9,164.5 L953.2,164.5 L951.8,165.6 L950.0,165.7 L948.4,165.2 L946.5,164.7 L945.7,163.0 M942.6,475.3 L942.1,472.4 L943.7,470.1 L944.1,467.5 L944.5,464.8 L947.2,463.9 L949.3,461.9 L950.7,462.6 L951.9,463.5 L953.5,464.0 L954.9,463.0 M954.9,463.0 L955.5,461.4 M955.5,461.4 L952.9,460.0 L952.1,457.3 L950.2,455.3 L948.5,453.2 M949.5,328.1 L948.8,326.3 L947.5,324.7 M944.6,231.3 L944.4,229.4 L945.5,227.9 L947.3,227.4 L948.8,226.3 L950.2,225.5 L951.4,224.4 L952.9,223.6 L954.1,222.5 M954.1,222.5 L955.5,220.5 L955.5,218.0 L956.6,215.8 L956.6,213.3 M956.6,213.3 L955.8,211.7 L955.5,209.9 L955.2,208.1 L954.2,206.6 M937.0,395.6 L938.4,396.6 L940.0,397.3 L941.1,398.6 L942.1,400.1 L943.7,399.8 L945.4,399.7 L946.7,398.4 L948.5,398.2 L950.1,397.9 L951.1,396.5 L952.0,395.3 L953.0,394.1 L953.7,392.2 L955.8,392.1 L955.4,390.4 L955.3,388.6 M955.3,388.6 L954.0,387.1 L953.1,385.3 L951.2,384.6 L949.2,384.6 L947.3,383.3 L947.8,381.1 L946.2,380.1 L944.5,379.1 M943.6,479.5 L946.2,479.6 L948.7,480.2 L950.8,478.3 L953.6,478.5 L956.2,478.3 L958.7,478.6 L961.1,479.5 L963.7,479.2 M963.7,479.2 L961.5,478.1 L959.8,476.4 L959.3,473.9 L957.7,472.0 L957.9,470.5 L957.5,468.9 L956.0,468.7 L954.6,468.0 L955.6,465.6 L954.9,463.0 M949.6,524.8 L949.4,523.2 M938.9,83.9 L941.1,82.0 L943.6,83.4 L945.2,81.6 L947.4,80.5 L949.3,79.2 L951.6,78.4 L953.9,79.5 L956.2,78.2 L958.5,77.3 L960.6,76.3 L962.8,74.7 L963.1,72.1 L963.8,69.8 L965.6,68.1 L967.4,66.5 L969.8,66.0 M969.8,66.0 L970.0,63.9 L969.7,61.8 L967.7,61.3 L965.7,60.4 L964.5,58.7 L962.4,59.2 L960.6,58.6 L958.9,59.4 M950.5,444.9 L951.0,442.7 L952.2,440.8 L954.4,441.5 L956.6,441.0 M956.6,441.0 L955.0,439.6 L954.3,437.7 L956.3,436.6 L956.6,434.3 L954.8,434.0 L953.7,432.4 L951.9,433.4 L950.3,432.0 L951.9,431.4 L952.7,429.9 L952.2,428.2 L953.0,426.7 L951.9,425.6 L951.5,424.1 L950.9,422.6 L951.0,421.1 M951.0,421.1 L949.3,420.1 M976.0,30.8 L975.5,32.4 L975.6,34.5 L976.7,36.6 L979.0,37.2 L980.8,38.5 L982.3,40.1 L982.4,42.8 L980.7,44.8 L982.5,46.5 L983.7,48.7 M983.7,48.7 L985.4,49.2 L986.2,50.8 L987.8,50.6 L989.4,50.4 L991.0,50.6 L992.3,49.6 L993.2,48.3 L994.5,47.5 L996.3,47.8 L997.9,48.5 L998.1,50.3 L999.4,51.6 L1000.8,50.9 L1002.3,50.5 L1004.0,50.4 L1005.3,49.3 M1005.3,49.3 L1007.6,48.2 M1007.6,48.2 L1007.0,46.1 L1007.2,44.0 L1006.4,41.8 L1007.6,39.8 L1009.0,38.3 L1009.9,36.4 L1010.8,34.4 L1012.1,32.8 L1014.5,32.7 L1016.8,32.2 L1018.3,30.8 M945.3,367.6 L947.5,368.0 L949.7,366.1 L951.8,364.1 L951.4,361.2 L953.8,360.7 L956.3,360.4 L958.5,358.9 L959.1,356.3 M959.1,356.3 L957.8,354.3 L957.6,352.0 L957.3,349.6 L958.4,347.5 M958.4,347.5 L957.4,346.9 M954.7,117.7 L954.2,115.9 L954.1,114.1 L952.8,112.7 L950.9,112.4 L949.2,112.0 L948.1,110.6 L948.6,108.6 L946.8,107.5 L948.0,106.2 L949.4,105.1 L950.2,103.4 L950.0,101.6 L950.0,99.9 L950.0,98.3 L950.4,96.6 L949.8,94.9 M949.8,94.9 L947.9,94.4 M952.7,44.6 L955.1,45.2 L957.5,44.4 L959.3,42.7 L961.2,41.2 L963.3,40.0 L964.9,38.1 L966.5,36.1 L966.2,33.5 L966.1,30.8 L966.0,30.8 M946.0,158.4 L947.9,156.8 L949.1,154.5 L951.5,155.5 L954.0,155.7 L955.7,154.6 L957.5,153.4 L959.0,151.9 L961.0,151.2 M961.0,151.2 L958.2,150.6 L955.5,149.8 L953.3,148.0 L951.2,146.1 L948.4,145.1 L945.8,144.1 L944.3,145.1 L943.4,146.7 L942.1,145.1 L940.1,145.3 M951.9,403.8 L952.6,403.2 M952.6,403.2 L953.4,401.1 L955.6,400.7 L956.7,399.0 L956.9,397.0 L956.3,394.9 L955.1,393.1 L956.2,391.3 L957.3,389.5 M957.3,389.5 L955.3,388.6 M965.2,289.2 L966.8,287.7 L969.1,287.4 L970.3,289.6 L972.8,289.7 L973.9,288.1 L975.0,286.6 L976.8,285.8 L978.0,284.1 M978.0,284.1 L976.5,283.0 L976.6,281.2 L976.5,279.6 L976.5,278.0 L975.1,277.1 L974.0,276.0 L972.8,274.8 L971.2,274.4 L972.0,273.0 L972.8,271.6 L974.5,271.1 L975.4,269.6 L975.4,267.5 L977.1,266.4 L976.5,264.7 L975.3,263.3 M975.3,263.3 L975.8,261.6 L976.2,259.8 L974.6,259.1 L973.3,257.8 L970.4,257.1 L967.7,256.1 L964.8,256.9 L961.9,256.8 L961.2,255.3 L960.9,253.6 L959.3,253.3 L957.7,252.8 M949.8,94.9 L952.2,93.5 L954.4,95.2 L956.0,97.0 L958.4,97.6 L960.9,98.3 L963.5,97.7 L964.1,95.0 L966.5,93.6 M966.5,93.6 L968.0,91.6 L968.6,89.1 L967.0,87.2 L965.8,85.1 L964.9,83.1 L963.3,81.6 L961.6,80.3 L960.3,78.5 L961.4,76.3 L961.0,73.9 L962.4,71.9 L962.3,69.4 L964.0,67.5 L966.0,66.1 L968.5,67.7 L971.0,66.2 M971.0,66.2 L969.8,66.0 M958.0,246.0 L959.9,244.4 L961.3,242.3 L964.0,242.2 L965.7,240.0 M965.7,240.0 L966.2,237.9 L965.5,235.9 L967.1,234.1 L966.2,231.8 M966.2,231.8 L964.1,230.6 L963.5,228.3 L962.1,226.3 L962.6,223.9 L960.4,223.5 L958.5,222.5 L956.3,222.9 L954.1,222.5 M958.4,347.5 L960.2,348.6 L961.8,347.3 L963.3,346.4 L964.5,345.3 L966.3,344.8 L967.8,343.7 L969.8,344.1 L971.0,345.7 M971.0,345.7 L971.2,343.6 L971.3,341.4 L970.6,339.4 L970.1,337.3 L969.6,334.6 L970.6,332.1 L971.8,331.1 L972.6,329.7 L974.2,329.9 L975.6,330.8 M975.6,330.8 L974.8,329.0 L973.0,328.6 L972.1,327.0 L972.5,325.3 M972.5,325.3 L970.8,325.3 L969.1,325.8 L967.5,325.5 L965.8,325.0 L964.7,326.3 L964.0,327.8 L964.3,329.6 L963.3,331.1 L962.0,331.8 L960.7,332.6 L959.2,332.3 L957.7,332.4 L956.0,333.6 L954.2,333.0 L952.7,331.8 L952.5,329.9 M971.0,66.2 L972.9,65.5 M972.9,65.5 L974.5,63.4 L976.9,62.1 L978.8,60.2 L981.1,58.9 L982.0,57.5 L981.5,55.9 L981.1,54.4 L980.1,53.2 L979.9,51.5 L980.6,49.8 L982.3,49.7 L983.7,48.7 M961.0,151.2 L963.4,150.6 L965.3,149.1 L967.6,149.2 L970.0,148.8 M970.0,148.8 L968.0,147.3 L965.9,145.8 L964.2,143.9 L963.4,141.4 L962.4,139.0 L961.7,136.6 L961.9,134.0 L962.5,131.5 M972.5,325.3 L972.6,323.1 L973.4,321.1 M973.4,321.1 L973.4,320.4 M973.4,320.4 L972.7,318.9 L971.6,317.7 L971.2,316.1 L971.1,314.5 L969.7,313.6 L968.0,313.3 L967.8,311.5 L966.3,310.5 L964.4,310.1 L964.1,308.1 L963.2,306.8 L962.1,305.7 L961.7,304.1 L961.9,302.5 L960.5,301.1 L961.3,299.3 M961.3,510.9 L961.3,509.4 L959.7,508.8 L958.1,508.9 L956.4,509.1 L955.0,508.1 L954.8,506.5 L955.2,504.9 L954.9,503.2 L954.1,501.8 M954.1,501.8 L951.3,501.5 M951.0,421.1 L953.0,420.5 L954.9,421.1 L956.9,421.1 L958.8,420.4 M958.8,420.4 L960.1,419.3 L961.7,418.3 L963.3,416.9 L962.6,414.9 L963.8,413.6 L964.2,411.9 L964.5,410.1 L965.9,409.0 M965.9,409.0 L965.4,406.9 L964.1,405.1 M964.1,405.1 L962.9,404.1 L961.3,403.7 L959.7,403.9 L958.3,404.7 L956.4,404.0 L956.0,402.0 L954.2,402.3 L952.6,403.2 M955.5,461.4 L957.0,461.3 L958.5,461.6 L959.7,462.8 L961.3,462.8 L963.1,462.9 L963.8,461.1 L965.1,460.2 L965.8,458.9 M965.8,458.9 L966.9,457.1 L968.2,455.4 L969.9,454.2 L971.2,452.5 M971.2,452.5 L969.9,450.2 L969.8,447.6 L968.3,445.5 L967.4,443.1 M967.4,443.1 L964.6,443.0 L962.0,442.0 L959.5,440.8 L956.6,441.0 M973.4,320.4 L975.2,319.1 L976.9,317.8 L979.0,317.1 L981.1,316.5 L982.8,315.1 L984.8,314.3 L986.9,312.6 L989.2,313.8 L991.6,313.0 L993.6,311.6 L995.8,310.4 L998.2,309.7 L998.3,307.2 L997.8,304.7 L997.2,301.9 L999.1,299.8 M999.1,299.8 L999.0,299.6 M999.0,299.6 L998.4,298.1 L997.2,297.1 L997.1,295.5 L996.3,294.2 L994.8,294.1 L993.4,293.2 L991.9,293.1 L990.4,293.1 L988.7,292.9 L987.0,293.5 L986.2,292.0 L985.5,290.4 L983.8,288.1 L983.1,285.3 M983.1,285.3 L980.8,283.6 L978.0,284.1 M957.3,389.5 L958.3,391.5 L960.2,392.7 L962.1,391.8 L964.2,391.2 L965.1,389.5 L966.8,388.8 L968.7,387.8 L968.5,385.7 M968.5,385.7 L969.4,384.7 M969.4,384.7 L969.5,382.5 L970.4,380.4 M970.4,380.4 L969.8,377.8 M969.8,377.8 L969.0,376.3 L969.4,374.6 L968.3,373.5 L967.4,372.2 M967.4,372.2 L964.9,370.9 L962.1,370.8 L959.5,369.9 L957.1,368.5 L954.3,368.9 L951.5,368.7 L948.6,368.8 L946.3,370.4 M959.6,120.3 L960.5,119.0 L961.2,117.5 L960.7,115.7 L962.0,114.4 L962.9,113.0 L963.0,111.4 L963.7,109.9 L964.1,108.3 L963.5,106.4 L963.6,104.4 L965.6,104.1 L967.1,102.6 L966.9,100.9 L967.1,99.3 L967.5,97.7 L968.1,96.2 M968.1,96.2 L967.5,94.8 L966.5,93.6 M966.5,172.5 L967.3,170.9 L967.7,169.2 L969.4,168.7 L971.2,168.8 M971.2,168.8 L971.9,167.3 L972.2,165.6 L974.0,165.3 L975.3,164.2 L974.6,162.8 L974.3,161.2 L974.7,159.6 L974.5,158.0 M974.5,158.0 L973.1,156.2 L974.4,154.2 L973.8,152.3 L972.3,151.0 M972.3,151.0 L971.0,150.1 L970.0,148.8 M966.2,231.8 L968.0,230.3 L967.8,228.0 L969.5,226.4 L971.8,226.8 L972.5,225.1 L973.4,223.5 L973.7,221.4 L975.5,220.4 M975.5,220.4 L973.1,218.6 L970.2,218.0 L968.9,215.4 L967.5,212.9 L965.8,212.1 L965.3,210.2 L963.6,209.8 L961.9,210.0 L960.9,211.4 L959.7,212.5 L958.2,213.0 L956.6,213.3 M967.4,372.2 L967.5,370.6 L967.9,369.1 M967.9,369.1 L965.8,368.4 L964.9,366.4 L965.5,364.1 L963.9,362.4 L962.0,361.4 L960.1,360.4 L960.8,358.1 L959.1,356.3 M975.5,220.4 L976.6,220.1 M976.6,220.1 L976.9,219.7 M976.9,219.7 L976.3,217.9 L976.2,216.1 L975.0,214.6 L974.4,212.9 L973.1,211.3 L972.9,209.3 L973.0,207.2 L974.2,205.6 M974.2,205.6 L971.7,205.9 L969.2,206.6 L966.6,205.9 L964.6,204.2 L962.3,202.4 L961.9,199.5 L959.2,199.1 L956.6,198.7 M954.1,501.8 L955.8,501.3 L957.5,501.1 L959.0,500.4 L960.7,500.1 L962.0,498.9 L963.3,497.7 L963.8,496.0 L964.4,494.4 M964.4,494.4 L965.5,491.8 L967.5,489.8 L968.0,488.4 L968.9,487.1 L969.2,485.2 L967.6,484.3 M967.6,484.3 L966.0,482.4 L966.8,480.1 M966.8,480.1 L965.1,480.1 L963.7,479.2 M963.3,126.9 L964.8,125.3 L967.0,125.8 L967.9,124.0 L969.4,122.8 L971.1,122.0 L973.0,121.8 L974.6,120.6 L976.6,121.3 M976.6,121.3 L976.0,119.8 L974.8,118.6 L974.3,117.0 L974.1,115.4 L973.8,113.7 L972.5,112.7 L972.7,110.7 L970.9,109.9 L970.1,108.2 L968.9,106.8 L967.9,105.3 L967.1,103.6 L968.8,102.5 L970.3,101.1 L970.1,99.1 L970.4,97.1 M970.4,97.1 L968.1,96.2 M972.2,499.1 L970.7,498.3 L968.5,497.1 L966.5,495.7 L964.4,494.4 M955.7,190.7 L957.8,188.6 L960.7,188.6 L961.8,186.1 L962.6,183.5 L964.9,184.4 L967.2,185.4 L969.2,186.9 L971.7,187.4 L974.4,188.8 L977.2,189.7 L978.8,189.2 L980.3,188.6 L979.9,186.7 L981.5,185.6 L984.0,186.7 L985.6,188.9 L985.3,190.5 L984.5,191.8 L985.6,192.9 L986.6,194.1 M986.6,194.1 L988.5,193.5 L990.4,193.3 L991.5,191.6 L991.8,189.6 M991.8,189.6 L990.5,187.5 L990.1,185.0 L987.7,185.4 L985.3,185.0 L985.6,182.9 L985.9,180.8 L984.1,179.4 L983.4,177.3 L981.5,175.4 L982.6,172.9 L980.6,171.9 L978.4,171.5 L976.4,171.3 L974.7,170.3 L972.6,170.5 L971.2,168.8 M972.3,151.0 L972.5,149.4 L973.2,147.9 L973.9,146.4 L975.2,145.4 L977.0,145.3 L978.2,146.6 L979.8,145.9 L981.5,146.2 L984.2,146.5 L986.7,145.7 L988.3,146.5 L990.0,145.9 L990.0,144.2 L991.3,143.0 L993.6,141.1 L993.7,138.2 L996.5,137.7 L998.5,135.6 L999.9,135.2 L1001.2,134.2 L1001.4,132.7 L1001.3,131.2 L1003.2,129.3 L1005.5,128.1 M1005.5,128.1 L1002.9,128.4 L1000.8,127.0 L999.6,124.9 L997.8,123.3 L995.7,121.8 L993.0,121.9 L991.4,119.8 L991.3,117.2 M991.3,117.2 L988.6,117.5 L986.5,119.1 L987.1,121.9 L985.3,124.0 L983.3,122.1 L981.9,119.7 L980.3,119.5 L978.7,118.9 L977.9,120.3 L976.6,121.3 M964.1,405.1 L965.6,403.0 L967.5,401.4 L968.8,399.3 L969.8,397.0 M969.8,397.0 L969.1,395.5 L967.9,394.4 L967.8,392.7 L969.0,391.4 L969.5,388.5 L968.5,385.7 M966.8,480.1 L967.4,477.6 L969.7,476.5 M969.7,476.5 L968.8,474.3 L969.1,472.0 L967.7,470.1 L967.5,467.7 L966.3,465.8 L966.0,463.4 L965.6,461.2 L965.8,458.9 M975.3,263.3 L974.5,261.9 L974.1,260.3 L973.3,258.9 L972.6,257.5 L974.1,256.7 L975.1,255.3 L975.8,253.8 L976.3,252.2 L978.7,250.4 L981.6,250.6 L984.0,249.0 L986.7,248.3 M986.7,248.3 L985.2,247.7 L984.2,246.4 L985.4,244.8 L984.3,243.2 M984.3,243.2 L982.8,242.8 L981.7,241.7 L981.1,240.3 L981.0,238.8 L978.6,237.4 L975.9,236.6 L973.0,236.0 L970.5,237.4 L968.9,236.6 L967.4,237.5 L967.4,239.3 L965.7,240.0 M967.4,443.1 L969.6,441.8 L969.4,439.2 L970.4,437.2 L972.2,435.8 M972.2,435.8 L972.5,433.8 L974.4,433.0 L974.6,430.8 L972.6,429.9 M972.6,429.9 L971.4,427.3 L970.4,424.5 M970.4,424.5 L968.8,424.3 L967.3,424.0 L965.9,423.3 L964.6,422.4 L963.0,422.0 L961.4,422.2 L960.1,421.4 L958.8,420.4 M969.8,377.8 L971.9,375.7 L973.2,373.1 L974.7,373.9 L976.3,374.0 L978.3,374.2 L979.1,372.4 L979.0,370.8 L979.8,369.4 L981.2,368.6 L982.7,368.3 L985.1,366.7 L988.0,366.5 M988.0,366.5 L986.9,364.6 L987.6,362.5 M987.6,362.5 L986.0,361.4 L984.0,361.5 L981.9,362.2 L980.5,360.4 L978.6,360.9 L976.9,361.6 L975.1,362.2 L973.3,362.6 M973.3,362.6 L971.0,363.2 L969.2,364.6 L969.2,367.1 L967.9,369.1 M969.7,476.5 L971.1,475.6 L972.6,475.0 L974.4,475.4 L975.8,474.3 M975.8,474.3 L978.0,473.5 L979.2,471.5 L980.3,469.6 L982.2,468.3 M982.2,468.3 L980.3,467.6 L980.4,465.6 L981.0,464.1 L982.3,463.0 L979.6,462.2 L978.1,459.7 L975.9,458.3 L973.4,457.5 L973.8,454.6 L971.7,452.6 M971.7,452.6 L971.2,452.5 M970.4,424.5 L972.3,424.8 L973.3,423.0 L973.5,421.4 L973.6,419.8 M973.6,419.8 L972.6,417.3 L973.1,414.6 L971.7,412.4 L970.4,410.2 M970.4,410.2 L968.2,409.2 L965.9,409.0 M973.3,362.6 L975.4,361.7 L977.5,360.9 L978.1,358.6 L977.3,356.4 L977.0,354.3 L977.7,352.3 L976.3,350.7 L974.6,349.6 M974.6,349.6 L972.6,347.8 L971.0,345.7 M969.8,397.0 L971.3,399.4 L973.4,401.3 L975.0,403.7 L977.5,405.0 M977.5,405.0 L980.4,404.8 L982.9,406.2 M982.9,406.2 L984.1,405.2 L984.7,403.7 L984.0,402.1 L984.9,400.7 L986.5,400.4 L987.6,399.2 L988.1,397.7 L989.3,396.7 M989.3,396.7 L987.8,395.0 L988.9,392.9 L988.4,390.8 L986.3,390.2 L984.7,391.3 L982.8,391.4 L980.8,392.4 L979.2,390.8 L979.0,389.1 L977.4,388.3 L976.2,387.2 L975.5,385.8 L973.8,385.3 L972.3,386.1 L970.6,385.9 L969.4,384.7 M974.2,205.6 L976.1,204.7 L977.8,203.6 L979.8,203.2 L981.9,203.2 L982.7,200.9 L985.0,200.3 L985.3,198.2 L985.7,196.1 M985.7,196.1 L986.6,194.1 M970.4,97.1 L972.5,98.5 L975.1,98.7 L977.2,97.1 L979.8,97.5 L981.9,98.8 L983.5,100.6 L985.9,101.3 L988.1,102.0 M988.1,102.0 L988.2,102.0 M988.2,102.0 L987.5,99.9 L988.5,98.0 L988.8,95.9 L989.9,94.2 L987.8,93.5 L985.7,93.1 L984.0,91.6 L983.5,89.4 L984.6,87.0 L982.8,85.1 L984.3,83.4 L986.5,82.9 L988.5,84.0 L990.3,82.7 L991.9,81.6 L993.2,80.2 M993.2,80.2 L991.8,79.0 L990.1,78.7 L988.0,78.4 L987.6,76.3 L986.5,74.8 L986.7,72.9 L985.4,71.6 L985.2,69.8 L983.6,69.0 L981.8,69.0 L979.8,68.6 L978.3,69.8 L976.8,68.5 L974.8,68.6 L973.5,67.3 L972.9,65.5 M967.6,484.3 L967.9,486.9 L970.1,488.5 L972.6,488.5 L975.1,489.0 L977.1,487.2 L979.6,488.0 L981.6,489.3 L983.8,490.1 M983.8,490.1 L984.8,488.8 L985.6,487.4 L986.4,486.0 L986.9,484.5 M986.9,484.5 L986.3,482.5 L985.2,480.7 L983.4,479.4 L981.2,479.5 L980.6,477.6 L979.5,475.9 L978.2,473.8 L975.8,474.3 M984.3,243.2 L984.7,240.8 L985.5,238.6 M985.5,238.6 L984.8,237.0 L983.9,235.5 L982.0,234.5 L980.4,235.9 L980.2,234.4 L980.1,232.8 L978.8,232.0 L977.6,231.0 L976.4,228.3 L975.3,225.7 L975.7,222.8 L976.6,220.1 M970.4,410.2 L970.5,407.5 L972.6,405.7 L975.1,405.5 L977.5,405.0 M971.7,452.6 L972.8,451.4 L974.4,450.7 L975.2,449.1 L977.1,448.8 L978.8,449.0 L980.3,448.2 L981.9,447.9 L983.5,447.4 L985.1,448.0 L986.7,448.6 L988.5,449.1 L989.5,450.5 L991.3,451.1 L993.0,450.5 L994.9,450.6 L996.2,449.2 M996.2,449.2 L995.8,447.2 M995.8,447.2 L994.2,445.6 L993.9,443.4 L993.2,441.4 L991.9,439.6 M991.9,439.6 L989.4,438.8 L987.1,437.5 L985.5,435.0 L982.7,434.5 L980.2,435.8 L977.6,436.6 L974.7,437.1 L972.2,435.8 M972.6,429.9 L974.4,429.3 L976.2,428.9 L978.1,428.4 L980.0,428.1 L981.9,429.0 L984.1,429.0 L985.6,427.4 L987.5,426.4 M987.5,426.4 L985.2,424.5 L985.2,421.5 L984.9,418.6 L987.0,416.5 M987.0,416.5 L986.4,415.1 M986.4,415.1 L984.9,413.9 M984.9,413.9 L984.0,415.5 L982.2,415.6 L981.1,417.2 L979.3,416.9 L977.6,417.0 L976.3,418.0 L974.8,418.8 L973.6,419.8 M985.1,493.1 L984.4,491.9 L983.8,490.1 M975.6,330.8 L976.9,332.4 L979.0,332.8 L981.2,332.5 L982.8,334.0 L984.5,335.4 L986.6,335.1 L988.7,335.0 L990.7,335.1 M990.7,335.1 L992.6,333.1 L995.2,332.3 M995.2,332.3 L995.7,330.7 L997.2,329.9 L996.2,328.5 L996.8,326.8 L995.5,324.2 L995.7,321.2 M995.7,321.2 L992.8,321.4 L990.1,320.4 L987.3,320.9 L984.5,321.4 L981.7,321.6 L978.9,322.1 L976.2,321.2 L973.4,321.1 M984.9,413.9 L984.5,412.0 L983.9,410.1 L983.3,408.2 L982.9,406.2 M976.9,219.7 L979.4,218.1 L981.4,215.9 L984.4,216.4 L987.3,216.2 M987.3,216.2 L986.6,214.9 L986.2,213.4 L987.1,212.2 L987.9,210.9 L985.8,209.0 L985.3,206.3 L985.9,203.7 L986.8,201.2 L985.5,198.8 L985.7,196.1 M987.3,216.2 L989.0,216.9 L990.8,217.2 L991.9,218.7 L992.8,220.2 L994.5,220.1 L996.2,220.0 L997.9,219.6 L999.5,219.1 M999.5,219.1 L998.7,217.2 L999.1,215.1 L999.9,213.1 L999.4,211.1 L997.8,209.6 L997.8,207.5 L996.0,206.1 L996.1,203.8 L996.7,201.9 L996.8,199.8 L996.4,197.8 L996.6,195.8 L997.4,193.8 L999.1,192.6 L999.5,190.5 L1000.9,188.9 M1000.9,188.9 L999.1,190.8 L996.5,191.4 L994.1,190.4 L991.8,189.6 M983.1,285.3 L984.5,283.4 L986.8,283.0 L988.2,281.3 L990.0,280.1 L991.4,278.1 L993.8,277.4 L994.6,275.2 L995.2,273.0 L997.4,272.1 L998.1,269.8 L1000.5,268.7 L1000.3,266.0 L1002.3,264.6 L1002.6,262.1 L1004.1,259.8 L1006.8,260.3 M1006.8,260.3 L1005.2,259.7 L1004.1,258.5 L1005.5,257.1 L1004.9,255.3 L1002.1,254.9 L1000.1,253.0 M1000.1,253.0 L998.0,253.7 L996.6,252.0 L995.0,251.3 L993.5,250.3 L991.7,250.4 L990.0,249.8 L988.4,248.9 L986.7,248.3 M974.6,349.6 L976.9,349.6 L977.9,351.6 L979.7,352.0 L981.6,352.3 L983.7,352.1 L985.1,350.6 L987.0,350.5 L988.9,350.2 M988.9,350.2 L989.4,349.7 M989.4,349.7 L989.6,347.7 L991.1,346.3 L991.6,344.5 L991.6,342.6 L991.4,340.6 L990.5,338.9 L989.3,337.0 L990.7,335.1 M991.3,117.2 L989.4,116.0 L987.6,114.6 L986.1,112.5 L987.2,110.1 L986.8,108.1 L986.8,106.0 L986.7,103.7 L988.1,102.0 M986.9,484.5 L989.3,483.0 L989.6,480.2 L991.8,478.2 L994.5,479.4 M994.5,479.4 L994.5,477.6 L995.7,476.2 L994.2,475.1 L994.1,473.2 M994.1,473.2 L994.0,471.4 L992.5,470.4 L991.2,469.3 L990.5,467.8 M990.5,467.8 L988.4,466.7 L986.2,465.5 L984.3,467.0 L982.2,468.3 M986.4,415.1 L988.1,413.2 L990.0,411.8 L992.5,411.7 L994.9,411.1 L996.5,408.9 L999.1,408.9 L1001.3,407.4 L1003.8,408.3 M1003.8,408.3 L1005.3,405.8 M1005.3,405.8 L1002.9,405.7 L1000.5,405.3 L998.0,405.5 L995.8,404.5 L994.6,402.4 L993.2,400.4 L992.4,398.1 L991.4,395.9 M991.4,395.9 L989.3,396.7 M995.7,321.2 L996.4,318.9 L997.5,316.6 L997.8,314.1 L997.3,311.7 L998.8,309.6 L999.1,307.1 L1000.9,305.4 L1002.5,303.5 M1002.5,303.5 L1001.2,301.3 L999.1,299.8 M985.5,238.6 L986.4,236.6 L988.3,235.4 L987.8,233.3 L986.3,231.7 L987.1,229.9 L986.8,228.0 L987.5,226.0 L989.6,225.5 L991.1,224.6 L992.7,223.8 L994.2,222.9 L995.9,222.3 L997.8,222.4 L999.4,223.3 L1001.2,222.6 L1003.1,223.0 M1003.1,223.0 L1002.1,220.3 L999.5,219.1 M987.6,362.5 L988.6,360.8 M988.6,360.8 L988.9,359.1 L989.4,357.4 L991.0,356.6 L992.5,355.6 L990.9,354.8 L989.8,353.5 L989.2,351.9 L988.9,350.2 M1000.9,188.9 L1002.1,187.8 L1003.6,187.5 M1003.6,187.5 L1005.0,185.2 L1007.3,183.9 L1009.1,181.8 L1009.1,179.1 M1009.1,179.1 L1008.9,177.4 L1009.5,175.9 M1009.5,175.9 L1008.4,174.4 L1007.5,172.8 L1006.7,171.1 L1005.3,169.9 L1004.6,167.5 L1002.1,166.8 L1004.5,165.4 L1004.0,162.8 M1004.0,162.8 L1002.7,164.5 L1000.6,165.3 L998.6,165.9 L996.4,166.1 L994.3,165.9 L992.2,165.3 L990.2,166.0 L988.2,166.9 L985.9,167.8 L983.4,168.4 L981.9,166.4 L979.6,165.1 L978.1,163.6 L976.5,162.0 L976.3,159.6 L974.5,158.0 M999.1,486.2 L998.0,485.7 L997.6,483.9 L996.8,482.2 L995.8,480.6 L994.5,479.4 M991.4,395.9 L992.4,394.4 L992.4,392.6 L993.3,391.1 L993.9,389.4 M993.9,389.4 L992.0,388.3 L989.8,388.1 L988.7,386.2 L988.0,384.1 L985.8,383.1 L983.4,383.7 L982.3,381.7 L981.5,379.6 M981.5,379.6 L980.4,380.7 L979.0,381.4 L977.4,381.4 L976.1,382.3 L974.6,382.0 L973.3,381.3 L971.7,381.4 L970.4,380.4 M988.0,366.5 L988.9,368.8 L988.1,371.1 L990.1,372.3 L992.0,373.8 M992.0,373.8 L993.3,374.3 M993.3,374.3 L995.7,375.7 L997.8,373.9 L999.9,372.9 L1001.3,371.0 L1003.8,371.8 L1005.4,369.6 L1006.9,367.9 L1008.7,366.7 M1008.7,366.7 L1008.0,364.0 M1008.0,364.0 L1005.6,363.2 L1003.3,362.2 L1000.9,361.7 L998.6,360.5 L996.0,359.0 L993.5,357.4 L992.1,358.1 L990.8,358.7 L990.0,360.0 L988.6,360.8 M981.5,379.6 L983.1,380.7 L985.0,381.0 L985.8,379.2 L987.6,378.2 L988.8,377.2 L990.2,376.4 L990.9,375.0 L992.0,373.8 M991.9,439.6 L992.0,437.4 L993.4,435.7 L992.7,433.7 L992.2,431.7 M992.2,431.7 L989.9,432.1 L988.3,430.4 L986.6,428.7 L987.5,426.4 M990.5,467.8 L990.8,466.2 L989.9,464.8 L988.3,464.2 L987.6,462.7 L988.2,461.3 L989.1,459.9 L988.4,458.5 L988.1,456.9 L989.6,456.1 L989.9,454.4 L989.8,452.8 L991.0,451.6 L992.1,450.5 L993.6,450.0 L995.1,449.7 L996.7,449.7 M996.7,449.7 L996.2,449.2 M988.2,102.0 L988.1,100.0 L989.9,99.0 L990.6,97.4 L990.9,95.6 L992.6,95.5 L994.3,95.3 L996.1,95.3 L997.8,96.0 L999.5,95.6 L1001.3,95.9 L1002.5,97.2 L1003.3,98.8 L1004.9,99.3 L1006.4,98.5 L1007.8,97.7 L1009.1,96.8 M1009.1,96.8 L1009.0,94.2 L1009.7,91.7 L1008.3,89.5 L1006.1,88.1 L1005.4,85.6 L1003.6,83.6 L1004.7,81.3 L1005.4,78.9 M1005.4,78.9 L1003.8,78.5 L1002.4,79.4 L1000.8,79.2 L999.3,79.4 L997.9,80.6 L996.5,81.9 L994.6,81.6 L993.2,80.2 M1005.5,128.1 L1007.4,129.0 L1009.6,129.0 M1009.6,129.0 L1010.3,126.7 L1010.3,124.3 L1012.4,122.8 L1013.4,123.1 M1013.6,119.9 L1012.3,119.5 L1010.6,119.1 L1011.9,117.7 L1011.1,116.0 L1009.6,114.8 L1010.2,112.9 L1010.9,111.5 L1011.1,109.9 L1012.8,109.6 L1013.9,108.3 L1014.4,108.2 M1015.4,102.2 L1015.0,100.3 L1013.0,98.9 L1011.2,97.6 L1009.1,96.8 M992.2,431.7 L994.0,431.8 L995.9,431.8 L997.4,430.7 L999.1,429.7 L1000.9,428.4 L1003.2,428.1 L1003.7,425.9 L1003.0,423.7 M1003.0,423.7 L1002.6,422.5 M1002.6,422.5 L1000.3,422.2 L997.9,422.0 L995.8,423.1 L993.4,423.3 L991.1,422.4 L989.1,420.9 L988.5,418.5 L987.0,416.5 M995.8,447.2 L997.6,445.8 L998.3,443.6 L998.9,441.3 L1000.8,439.9 L1003.1,439.7 L1005.2,440.8 L1007.4,440.9 L1009.4,442.1 L1009.2,440.2 L1008.3,438.4 L1007.8,436.6 L1007.4,434.7 L1008.9,433.3 L1009.1,431.3 L1010.0,429.5 L1009.6,427.5 M1009.6,427.5 L1007.8,426.6 L1006.6,425.1 L1004.7,424.6 L1003.0,423.7 M1000.1,253.0 L1000.0,250.5 L997.7,249.7 L998.5,247.8 L1000.0,246.4 L1000.3,244.8 L1000.4,243.1 L1000.7,241.5 L1000.7,239.9 L1001.9,238.6 L1003.1,237.3 L1004.3,236.1 L1006.0,235.6 L1006.6,233.9 L1007.9,232.6 L1007.5,230.8 L1008.3,229.1 M1008.3,229.1 L1007.2,227.8 L1006.5,226.2 L1005.4,224.9 L1004.3,223.5 M1004.3,223.5 L1003.1,223.0 M993.9,389.4 L996.2,388.5 L996.8,386.1 M996.8,386.1 L998.2,384.8 L998.6,382.9 L999.4,381.0 L998.2,379.3 L996.4,378.4 L994.5,378.1 L992.6,376.6 L993.3,374.3 M1008.0,364.0 L1007.8,362.5 L1007.0,361.2 L1007.3,359.6 L1008.3,358.4 M1008.3,358.4 L1007.5,356.0 L1005.2,355.2 L1004.0,353.3 L1002.7,351.4 M1002.7,351.4 L1001.0,351.5 L999.4,351.1 L997.7,350.8 L996.1,350.4 L994.3,350.2 L992.6,350.8 L990.8,351.0 L989.4,349.7 M1004.0,162.8 L1002.0,161.6 L1000.1,160.3 L1000.5,157.9 L999.5,155.8 L1000.7,153.7 L1000.8,151.4 L1002.9,150.8 L1004.6,149.2 L1003.8,147.2 L1004.9,145.4 L1005.7,143.2 L1008.0,143.2 L1009.1,141.8 L1010.1,140.5 L1011.1,138.9 L1012.8,138.3 M1012.8,138.3 L1011.9,136.0 L1010.7,133.8 L1010.1,131.4 L1009.6,129.0 M1005.3,405.8 L1007.7,405.1 M1007.7,405.1 L1007.0,403.2 L1007.5,401.2 L1007.5,399.1 L1006.1,397.6 L1007.6,396.1 L1007.3,393.9 L1008.8,392.6 L1010.1,391.1 M1010.1,391.1 L1009.4,389.1 L1007.4,388.5 L1006.7,386.7 L1005.9,385.0 M1005.9,385.0 L1003.5,385.6 L1001.5,387.2 L999.0,387.4 L996.8,386.1 M994.1,473.2 L996.3,472.4 L998.5,472.2 L999.3,469.9 L1001.7,469.1 L1003.9,468.7 L1006.0,469.7 L1008.4,470.8 L1010.2,468.8 M1010.2,468.8 L1010.1,466.9 L1011.2,465.3 L1010.7,463.5 L1009.4,462.1 M1009.4,462.1 L1007.7,461.1 L1006.3,459.6 L1004.6,458.4 L1003.6,456.6 L1002.8,454.7 L1001.5,453.2 L1000.7,451.3 L998.9,450.1 M998.9,450.1 L996.7,449.7 M1002.5,303.5 L1004.3,304.2 L1006.1,304.8 L1008.1,304.7 L1009.6,306.2 M1009.6,306.2 L1011.9,305.8 L1012.7,303.6 L1014.2,302.3 L1015.7,300.9 L1017.4,299.9 L1019.2,298.8 L1021.2,297.8 L1021.8,295.7 L1023.8,296.4 L1025.9,296.2 L1028.0,295.5 L1029.9,296.6 L1032.3,295.6 L1034.8,295.7 L1035.8,298.0 L1037.4,299.9 M1037.4,299.9 L1038.0,298.4 L1039.5,297.8 L1038.9,296.0 L1040.3,294.8 L1040.1,293.3 L1039.9,291.8 L1040.1,290.2 L1041.1,289.0 L1040.4,286.1 L1039.1,283.5 L1039.1,280.5 L1039.1,277.6 M1039.1,277.6 L1039.0,276.0 L1039.4,274.4 L1038.8,272.8 L1037.5,271.7 M1037.5,271.7 L1037.3,271.4 M1037.3,271.4 L1035.4,271.9 L1033.5,271.4 L1031.6,271.1 L1029.7,271.5 L1028.3,270.0 L1026.5,268.9 L1024.6,270.4 L1022.4,269.7 M1022.4,269.7 L1019.4,269.3 L1017.3,271.4 L1016.0,272.5 L1014.5,273.1 L1015.2,274.6 L1015.2,276.3 L1016.4,278.9 L1014.9,281.4 L1013.4,283.5 L1011.7,285.4 L1009.6,287.1 L1008.7,289.6 L1008.3,291.2 L1006.8,292.1 L1005.6,290.7 L1003.9,291.2 L1003.7,293.2 L1001.8,293.7 L1002.1,295.4 L1003.5,296.6 L1001.8,297.4 L1002.0,299.3 L1000.5,299.8 L999.0,299.6 M1002.7,351.4 L1004.3,349.8 L1005.3,347.8 L1006.8,346.2 L1008.5,344.8 L1007.9,342.5 L1008.6,340.3 L1007.5,338.3 L1006.9,336.1 M1006.9,336.1 L1005.1,336.8 L1003.7,338.1 L1001.7,338.3 L1000.2,337.0 L998.3,336.4 L996.4,336.0 L995.8,334.2 L995.2,332.3 M1004.3,223.5 L1006.9,222.0 L1008.8,219.8 L1009.7,218.3 L1009.6,216.5 L1011.4,216.5 L1012.9,215.7 L1015.1,215.5 L1016.3,213.7 L1017.9,215.2 L1020.0,215.2 L1021.3,213.4 L1023.3,212.4 L1023.5,210.1 L1021.9,208.4 M1021.9,208.4 L1022.2,206.2 L1022.7,204.1 L1021.3,202.4 L1019.7,200.9 L1017.7,202.2 L1015.4,201.4 L1014.0,199.7 L1012.3,198.3 L1010.5,197.6 L1010.1,195.6 L1008.7,194.5 L1007.4,193.3 L1007.7,191.2 L1007.6,189.1 L1005.6,188.4 L1003.6,187.5 M1005.9,385.0 L1006.4,383.0 L1006.1,380.9 L1005.5,379.0 L1004.8,377.0 L1006.5,375.7 L1008.7,375.8 L1010.7,375.0 L1011.9,373.3 M1011.9,373.3 L1011.3,371.4 L1011.4,369.4 M1011.4,369.4 L1009.6,368.6 L1008.7,366.7 M1006.9,336.1 L1009.7,336.7 L1012.3,335.6 L1014.7,334.5 L1017.2,333.3 M1017.2,333.3 L1018.0,332.0 M1018.0,332.0 L1018.7,330.1 L1018.1,328.1 L1016.6,326.8 L1014.9,325.9 L1015.1,323.8 L1015.4,321.7 L1013.8,320.1 L1011.6,319.8 L1013.1,317.9 L1012.1,315.7 L1013.8,314.4 L1014.6,312.4 L1014.7,310.0 L1014.1,307.6 L1011.4,308.3 L1009.6,306.2 M998.9,450.1 L1000.1,448.8 L1002.0,448.9 L1003.3,447.7 L1005.1,447.9 M1005.1,447.9 L1006.2,446.1 L1007.3,444.2 L1009.7,443.5 L1009.9,440.9 L1012.0,440.6 L1013.9,439.5 L1016.5,439.8 L1017.7,437.5 M1017.7,437.5 L1016.9,435.0 L1015.6,432.6 L1013.7,432.8 L1012.7,431.2 L1012.4,429.5 L1013.1,427.9 M1013.1,427.9 L1011.3,427.8 L1009.6,427.5 M1002.6,422.5 L1002.5,420.7 L1002.3,418.9 L1003.4,417.0 L1002.1,415.3 L1002.7,413.6 L1003.0,411.8 L1004.7,410.3 L1003.8,408.3 M1011.4,369.4 L1013.0,369.1 L1014.3,368.0 L1016.0,367.7 L1017.6,368.0 L1019.2,369.1 L1021.0,368.3 L1022.1,367.0 L1023.7,366.4 M1023.7,366.4 L1024.0,364.2 L1023.1,362.2 L1021.8,360.3 L1022.5,358.1 L1024.3,356.4 L1023.9,354.0 L1023.5,351.9 L1023.6,349.7 M1023.6,349.7 L1021.1,348.4 M1021.1,348.4 L1020.1,350.3 L1019.5,352.4 L1018.1,354.2 L1016.0,355.0 L1014.9,357.1 L1012.8,358.2 L1010.5,357.2 L1008.3,358.4 M1005.4,78.9 L1006.2,78.3 M1006.2,78.3 L1005.9,75.6 L1007.5,73.4 L1008.5,72.2 L1009.7,71.3 L1010.9,72.3 L1012.5,72.3 L1013.5,70.1 L1014.1,67.9 L1013.1,65.8 L1012.6,63.6 L1012.0,61.0 L1013.7,58.9 L1012.3,57.0 L1010.1,55.8 L1010.2,53.5 L1008.4,52.0 L1006.1,51.4 L1005.3,49.3 M1021.1,348.4 L1022.8,346.6 L1022.6,344.2 L1022.6,342.0 L1023.1,339.8 L1020.4,339.7 L1019.5,337.1 L1018.0,335.4 L1017.2,333.3 M1022.4,269.7 L1020.5,268.2 L1019.9,265.8 L1018.7,263.8 L1016.8,262.4 L1014.6,261.4 L1012.5,260.2 L1010.1,260.2 L1007.8,260.5 M1007.8,260.5 L1006.8,260.3 M1006.2,78.3 L1007.6,77.4 L1008.8,76.3 L1010.4,76.3 L1011.9,76.8 L1013.2,75.5 L1015.0,75.9 L1016.4,76.7 L1017.8,77.6 M1017.8,77.6 L1018.6,76.4 L1019.6,75.2 L1018.9,73.8 L1018.0,72.6 L1018.0,69.8 L1020.3,68.2 L1020.7,65.7 L1020.2,63.2 L1020.9,60.8 L1022.0,58.6 M1022.0,58.6 L1020.8,56.5 M1020.8,56.5 L1019.0,55.2 L1016.9,54.8 L1015.9,52.9 L1015.1,50.9 L1012.8,51.3 L1010.6,51.7 L1010.3,48.9 L1007.6,48.2 M1020.0,78.0 L1019.6,78.0 L1017.8,77.6 M1009.5,175.9 L1011.4,175.0 L1013.1,173.7 L1014.0,171.9 L1015.2,170.2 L1016.8,171.9 L1018.7,173.4 L1021.4,174.2 L1023.1,171.9 L1025.1,171.0 L1027.2,171.8 L1028.9,170.6 L1030.9,170.4 L1032.3,168.8 L1033.7,167.3 L1033.5,165.2 L1034.5,163.3 M1034.5,163.3 L1034.2,161.4 L1033.4,159.7 L1033.6,157.7 L1032.6,156.0 L1031.4,154.6 L1029.8,153.4 L1027.7,153.7 L1026.2,152.2 L1027.4,150.2 L1026.5,148.1 L1027.5,145.7 L1025.7,144.0 L1024.3,142.2 L1022.3,141.3 L1020.1,140.7 L1017.9,141.2 M1017.9,141.2 L1017.5,139.5 L1016.2,138.2 L1014.5,138.8 L1012.8,138.3 M1013.1,427.9 L1014.5,426.9 L1015.2,425.3 L1017.2,424.8 L1017.4,422.7 L1018.7,421.6 L1020.0,420.6 L1020.7,419.0 L1021.8,417.7 M1021.8,417.7 L1021.3,415.3 L1020.9,413.0 L1019.6,410.9 L1019.4,408.4 M1019.4,408.4 L1019.6,406.3 L1018.3,404.6 L1016.5,403.6 L1014.7,402.7 L1013.0,403.7 L1011.1,403.5 L1009.3,404.1 L1007.7,405.1 M1006.1,482.7 L1004.7,480.8 L1006.1,478.3 L1008.6,477.8 L1010.3,475.9 L1012.6,475.0 L1014.4,473.2 M1014.4,473.2 L1012.7,472.4 L1010.8,472.4 L1010.6,470.6 L1010.2,468.8 M1010.1,391.1 L1011.8,389.5 L1013.0,387.4 L1015.4,388.2 L1017.7,387.4 M1018.9,382.5 L1017.7,382.1 L1016.5,379.5 L1016.4,376.7 L1016.4,374.9 L1015.1,373.8 L1013.4,374.0 L1011.9,373.3 M1021.9,208.4 L1023.5,208.7 L1024.8,209.4 L1026.3,209.1 L1027.9,208.9 M1027.9,208.9 L1030.7,208.1 L1031.7,205.3 L1033.2,202.8 L1036.2,202.6 L1035.8,199.7 L1035.4,196.8 L1037.7,195.0 L1039.6,192.7 M1039.6,192.7 L1039.3,190.2 M1039.3,190.2 L1038.5,187.8 L1037.0,185.8 L1036.8,183.1 L1034.4,181.6 L1034.5,180.0 L1035.1,178.6 L1034.5,177.1 L1033.9,175.7 L1032.4,174.8 L1030.8,175.5 L1029.3,175.1 L1028.1,174.1 L1025.4,173.7 L1023.3,175.3 L1021.8,177.7 L1018.9,177.7 L1016.3,176.5 L1013.6,175.6 L1013.7,177.4 L1012.0,178.1 L1010.2,177.6 L1009.1,179.1 M1009.4,462.1 L1012.3,462.4 L1015.0,461.7 L1015.5,458.9 L1016.6,456.3 L1018.9,456.1 L1021.1,455.3 L1023.3,454.7 L1024.9,454.7 M1024.9,454.8 L1022.8,455.2 L1019.9,456.0 L1019.2,454.5 L1017.8,453.7 L1016.2,453.4 L1014.6,453.6 L1012.8,454.0 L1011.8,452.3 L1010.7,451.1 L1010.6,449.5 L1007.9,448.8 L1005.1,447.9 M1007.8,260.5 L1009.0,258.4 L1010.7,256.5 L1012.0,254.3 L1011.8,251.7 L1011.6,249.0 L1011.7,246.2 L1009.4,244.8 L1007.2,243.2 L1009.2,241.5 L1011.4,240.2 L1011.3,237.4 L1013.5,235.5 L1015.6,237.2 L1018.3,237.1 L1020.8,237.2 L1023.3,236.7 M1023.3,236.7 L1022.6,235.6 M1022.6,235.6 L1020.5,235.6 L1018.6,234.6 L1017.0,233.3 L1015.9,231.5 L1013.7,231.5 L1011.5,232.1 L1010.6,229.8 L1008.3,229.1 M1017.9,141.2 L1019.9,140.5 L1022.0,141.2 L1022.8,143.1 L1024.5,144.4 L1025.4,146.3 L1027.5,146.5 L1029.0,147.8 L1031.0,147.8 L1032.7,147.0 L1034.6,146.9 L1036.4,146.4 L1038.3,146.3 L1040.3,146.3 L1042.0,145.2 L1043.2,143.7 L1044.7,142.5 M1044.7,142.5 L1044.5,139.7 L1044.9,137.0 M1014.4,473.2 L1016.4,472.1 M1019.4,408.4 L1019.6,408.2 M1019.6,408.2 L1018.5,405.6 L1018.3,402.7 L1018.4,401.1 L1017.5,399.8 L1018.4,398.6 L1018.7,397.0 L1020.1,395.9 L1020.3,396.0 M1022.6,235.6 L1021.8,234.1 L1021.4,232.4 L1020.2,231.1 L1019.3,229.6 L1020.8,228.6 L1021.7,227.0 L1022.7,225.4 L1022.7,223.6 L1024.1,222.5 L1025.2,220.9 L1024.2,219.1 L1025.4,217.3 L1027.1,218.0 L1028.9,217.4 L1030.6,217.1 L1032.1,216.1 M1032.1,216.1 L1031.0,214.2 L1029.4,212.8 L1029.8,210.4 L1027.9,208.9 M1024.1,439.6 L1022.3,439.5 M1022.3,439.5 L1020.5,437.2 L1017.7,437.5 M1026.5,62.2 L1026.5,62.2 L1024.8,61.3 L1023.4,59.9 L1022.0,58.6 M1022.3,439.5 L1022.1,437.6 L1023.1,435.9 L1023.8,435.4 M1022.6,418.7 L1021.8,417.7 M1023.6,349.7 L1025.3,349.4 L1026.7,348.1 L1028.5,348.2 L1030.0,347.2 L1030.6,349.2 L1032.4,349.8 L1033.8,351.0 L1035.6,351.4 M1035.6,351.4 L1036.7,349.1 L1037.9,346.9 L1039.2,344.7 L1040.2,342.3 M1040.2,342.3 L1038.3,340.5 L1037.4,338.0 L1037.6,335.4 L1037.3,332.8 M1037.3,332.8 L1035.0,333.2 L1033.4,331.6 L1031.2,331.6 L1029.4,330.6 L1027.3,330.9 L1025.4,331.8 L1023.2,332.3 L1021.2,331.4 M1021.2,331.4 L1019.7,332.2 L1018.0,332.0 M1025.4,367.1 L1023.7,366.4 M1037.3,271.4 L1038.4,270.2 L1039.4,268.9 L1039.5,267.1 L1041.1,266.1 L1039.6,264.8 L1039.0,263.0 L1039.7,261.4 L1040.1,259.6 M1040.1,259.6 L1038.7,258.1 L1038.7,256.1 L1038.4,254.2 L1038.4,252.4 L1036.4,253.0 L1034.3,253.2 L1032.3,252.1 L1031.3,250.2 L1030.4,248.8 L1029.5,247.4 L1030.4,245.7 L1029.4,244.0 L1029.6,242.1 L1029.8,240.1 L1028.1,239.0 L1026.3,238.4 M1026.3,238.4 L1024.8,237.5 L1023.3,236.7 M1021.4,406.8 L1020.6,406.8 L1019.6,408.2 M1021.2,331.4 L1023.3,330.3 L1024.2,328.2 L1025.9,326.7 L1027.5,325.2 L1029.1,323.0 L1031.6,321.8 L1031.5,319.1 L1029.9,316.8 L1030.3,314.5 L1031.8,312.6 L1033.6,311.4 L1035.7,310.4 L1036.5,308.4 L1037.7,306.6 L1039.1,304.9 L1039.6,302.8 M1039.6,302.8 L1039.3,300.7 L1037.4,299.9 M1026.3,238.4 L1029.1,239.0 L1031.8,238.1 L1034.6,237.6 L1037.2,236.6 L1039.2,234.7 L1041.5,233.0 L1043.6,231.0 L1046.5,230.7 M1046.5,230.7 L1047.3,228.5 L1047.3,226.2 L1045.6,224.4 L1045.8,221.9 M1045.8,221.9 L1044.6,219.8 L1044.6,217.4 L1042.6,215.9 L1040.2,216.1 L1038.2,214.8 L1036.1,213.7 L1033.8,214.3 L1032.1,216.1 M1045.8,221.9 L1048.1,222.9 L1050.2,221.5 L1050.9,219.2 L1052.9,218.1 L1055.3,217.7 L1057.6,216.8 L1057.7,214.4 L1058.0,211.9 M1058.0,211.9 L1058.5,210.1 L1058.7,208.3 L1057.9,206.6 L1057.1,204.9 M1057.1,204.9 L1054.1,204.6 L1051.4,203.4 L1049.6,200.9 L1048.9,198.0 L1047.3,198.3 L1045.8,198.7 L1044.4,197.8 L1042.8,197.9 L1041.4,196.5 L1042.1,194.7 L1041.2,193.2 L1039.6,192.7 M1039.3,190.2 L1039.0,187.7 L1040.6,185.7 L1042.5,184.2 L1043.6,182.1 M1043.6,182.1 L1041.3,180.2 L1038.7,178.9 L1038.8,175.9 L1040.0,173.1 L1040.4,170.6 L1039.2,168.4 L1037.9,166.3 L1037.7,163.8 M1037.7,163.8 L1035.9,164.4 L1034.5,163.3 M1034.6,355.1 L1034.7,355.0 L1035.0,355.0 M1036.3,354.3 L1035.2,353.6 L1035.6,351.4 M1039.6,302.8 L1041.5,304.4 L1043.6,305.9 L1045.7,307.2 L1047.3,309.3 M1047.3,309.3 L1049.1,308.2 L1051.1,307.7 L1052.3,305.9 L1054.0,304.7 L1056.2,305.6 L1058.5,305.6 L1059.9,303.7 L1062.0,302.8 L1063.2,300.5 L1065.7,300.6 L1067.5,299.1 L1068.0,296.9 L1069.2,295.0 L1070.4,293.1 L1070.1,290.9 L1069.8,288.7 M1069.8,288.7 L1069.9,287.2 M1069.9,287.2 L1067.4,288.7 L1066.0,291.1 L1063.3,290.2 L1060.5,290.3 L1059.0,287.9 L1056.2,287.5 L1055.8,284.9 L1054.4,282.6 L1052.0,282.7 L1049.6,282.9 L1047.4,283.7 L1045.2,284.7 L1043.0,283.5 L1042.1,281.2 L1041.5,278.7 L1039.1,277.6 M1037.3,332.8 L1039.0,332.7 L1040.1,331.3 L1041.8,331.8 L1043.4,331.1 L1044.4,329.7 L1046.1,329.5 L1047.8,329.0 L1048.3,327.3 L1050.5,327.3 L1051.9,325.7 L1052.8,323.8 L1052.2,321.8 L1052.9,319.9 L1051.4,318.6 L1051.5,316.9 L1051.1,315.2 M1051.1,315.2 L1050.3,313.6 L1049.4,312.1 L1048.5,310.6 L1047.3,309.3 M1024.5,30.8 L1024.3,31.0 L1025.1,32.9 L1025.4,35.0 L1026.6,36.7 L1028.3,37.9 L1028.7,39.8 L1029.6,41.7 L1030.2,44.0 L1031.9,45.6 L1033.2,45.8 M1020.8,56.5 L1023.6,55.6 L1025.7,53.7 L1026.0,50.9 L1026.7,48.2 L1028.4,45.8 L1031.4,46.1 L1033.0,46.2 M1037.5,271.7 L1039.6,271.3 L1041.7,271.2 L1043.8,270.7 L1045.9,271.0 L1045.5,269.4 L1046.3,267.9 L1048.0,268.1 L1049.3,267.2 L1052.0,267.2 L1054.0,269.1 L1055.7,267.5 L1058.0,267.6 L1059.9,265.9 L1062.2,267.1 L1064.4,265.7 L1066.1,263.8 L1068.5,264.8 L1070.6,266.4 M1070.6,266.4 L1069.8,264.8 L1069.3,263.1 L1070.1,261.3 L1071.7,260.4 L1071.8,258.8 L1072.3,257.3 L1073.2,256.0 L1074.1,254.8 M1074.1,254.8 L1072.3,254.2 L1070.7,255.1 L1068.9,255.3 L1067.5,256.4 L1066.7,254.8 L1065.7,253.2 L1064.1,252.4 L1062.2,252.1 L1061.4,250.6 L1059.9,249.7 L1058.3,249.9 L1056.6,249.6 L1055.2,249.0 L1053.9,248.1 L1052.4,248.0 L1050.9,247.6 M1050.9,247.6 L1049.0,248.8 L1048.4,250.9 L1047.8,252.9 L1046.7,254.7 L1045.1,256.0 L1043.4,257.2 L1040.9,257.2 L1040.1,259.6 M1037.7,163.8 L1040.0,163.9 L1042.1,162.7 L1044.3,162.4 L1046.6,162.3 L1047.6,160.1 L1047.0,157.7 L1047.3,155.2 L1049.4,153.8 M1049.4,153.8 L1050.9,152.5 L1050.6,150.5 L1050.7,148.6 L1049.5,147.1 L1047.9,146.5 L1046.9,145.0 L1045.2,144.3 L1044.7,142.5 M1050.9,247.6 L1051.6,245.5 L1051.0,243.3 L1051.9,241.3 L1052.0,239.1 M1052.0,239.1 L1052.0,237.3 L1053.2,236.1 L1053.3,234.3 L1052.2,233.0 L1050.3,232.9 L1048.6,233.8 L1046.8,232.7 L1046.5,230.7 M1057.1,204.9 L1058.1,203.8 L1058.9,202.4 L1060.1,201.0 L1061.8,201.5 L1062.4,200.1 L1062.7,198.6 L1063.6,197.4 L1064.8,196.4 M1064.8,196.4 L1062.8,194.7 L1063.0,192.0 L1061.5,189.8 L1062.2,187.3 L1062.9,184.8 L1064.6,182.8 L1063.2,180.5 L1063.8,177.9 M1063.8,177.9 L1061.2,178.0 L1058.6,177.7 L1055.9,177.7 L1053.5,179.1 L1052.5,177.5 L1050.6,178.0 L1048.8,178.6 L1047.5,177.1 L1046.1,178.6 L1044.0,178.4 L1043.5,180.2 L1043.6,182.1 M1052.7,343.8 L1051.2,342.9 L1049.6,343.8 L1048.1,343.3 L1046.6,342.6 L1044.6,342.9 L1043.4,341.3 L1041.7,341.6 L1040.2,342.3 M1063.8,177.9 L1065.0,176.1 L1066.7,174.7 M1066.7,174.7 L1065.1,173.6 L1064.7,171.6 L1064.8,169.7 L1065.3,167.9 L1065.4,166.2 L1065.2,164.4 L1064.9,162.5 L1066.0,161.0 M1066.0,161.0 L1063.6,160.2 L1061.5,159.0 L1060.5,156.6 L1058.1,155.4 M1058.1,155.4 L1055.9,155.6 L1053.6,155.6 L1050.9,156.1 L1049.4,153.8 M1058.1,155.4 L1059.6,154.6 L1060.5,153.2 L1062.2,152.7 L1063.3,151.5 L1063.7,149.7 L1062.7,148.1 L1063.8,146.8 L1064.3,145.1 L1066.0,144.3 L1066.7,142.6 L1067.7,141.1 L1068.9,139.9 M1052.0,239.1 L1054.7,238.3 L1057.4,238.0 L1059.8,236.5 L1062.1,234.9 M1062.1,234.9 L1062.2,232.2 L1061.0,229.6 L1062.4,228.4 L1062.3,226.6 L1063.9,227.2 L1065.5,226.6 L1068.2,226.5 L1069.9,224.5 L1071.0,222.5 L1072.0,220.3 M1072.0,220.3 L1070.1,219.1 L1068.3,217.8 L1066.1,217.7 L1063.9,218.0 L1061.9,216.8 L1059.6,216.3 L1057.3,214.6 L1058.0,211.9 M1052.9,343.7 L1054.2,342.3 L1055.1,340.4 L1056.4,338.6 L1058.6,338.1 L1060.6,337.1 L1061.2,334.9 L1062.2,332.9 L1062.2,330.8 M1062.2,330.8 L1061.6,328.4 L1059.6,326.9 L1059.7,324.6 L1059.2,322.3 L1058.2,319.8 L1057.9,317.1 L1055.1,317.5 L1052.7,316.0 M1052.7,316.0 L1051.1,315.2 M1073.0,335.4 L1071.6,334.3 L1069.5,334.0 M1069.5,334.0 L1067.2,334.2 L1064.9,334.7 L1062.2,333.7 L1062.2,330.8 M1072.0,220.3 L1073.8,221.7 L1075.9,222.8 L1078.5,222.4 L1079.9,220.3 L1081.9,220.5 L1083.9,220.3 L1085.9,220.2 L1087.9,220.7 M1087.9,220.7 L1090.6,219.9 L1091.3,217.2 L1090.6,214.8 L1090.0,212.4 M1090.0,212.4 L1089.9,210.5 L1089.5,208.6 L1091.0,206.9 L1090.5,204.8 L1090.0,202.8 L1089.3,200.9 L1087.6,199.8 L1086.0,198.5 M1086.0,198.5 L1084.2,198.2 L1082.4,198.1 L1080.7,199.0 L1079.8,200.7 L1080.0,198.7 L1078.1,197.8 L1076.6,197.0 L1075.6,195.6 L1072.7,195.1 L1070.3,197.0 L1067.5,196.7 L1064.8,196.4 M1052.7,316.0 L1053.2,314.0 L1054.7,312.7 L1056.2,311.5 L1057.8,310.5 L1059.5,309.6 L1061.4,309.4 L1062.9,308.1 L1064.8,307.9 L1066.7,308.5 L1068.5,307.9 L1070.3,308.2 L1072.1,307.9 L1073.9,307.3 L1075.7,307.0 L1077.6,308.2 L1079.4,306.9 M1079.4,306.9 L1077.6,304.6 L1074.8,303.8 L1072.2,302.4 L1071.4,299.5 L1070.2,296.8 L1068.9,294.3 L1067.3,293.1 L1067.9,291.2 L1069.3,290.3 L1069.8,288.7 M1066.0,161.0 L1068.6,159.6 L1071.2,158.3 M1071.2,158.3 L1072.2,155.8 L1074.3,153.9 L1076.9,153.4 L1079.6,154.0 L1079.3,151.6 L1079.2,150.3 M1062.1,234.9 L1063.5,235.7 L1065.0,236.2 L1066.6,236.5 L1068.1,237.0 L1068.7,238.4 L1069.5,239.8 L1069.2,241.7 L1070.9,242.6 L1072.4,242.8 L1073.8,243.5 L1074.7,244.8 L1076.2,245.3 L1077.0,246.9 L1077.0,248.7 L1078.5,249.7 L1080.3,249.7 M1080.3,249.7 L1082.4,249.1 L1084.3,248.0 M1084.3,248.0 L1084.5,245.9 L1082.8,244.6 L1083.0,242.7 L1081.9,241.1 L1080.4,239.4 L1078.6,238.0 L1078.0,235.4 L1080.3,233.9 L1079.3,231.7 L1078.4,229.5 L1080.9,228.0 L1080.3,225.1 L1082.6,224.6 L1084.1,222.8 L1086.2,222.0 L1088.4,221.7 M1088.4,221.7 L1087.9,220.7 M1069.9,287.2 L1069.8,285.6 L1069.9,284.0 L1070.6,282.6 L1070.9,281.0 L1071.8,279.5 L1073.2,278.4 L1075.0,277.3 L1076.7,278.6 M1076.7,278.6 L1076.2,276.8 L1074.9,275.4 L1073.3,274.6 L1072.0,273.3 L1072.8,271.5 L1072.8,269.6 L1071.9,267.8 L1070.6,266.4 M1074.1,254.8 L1074.7,252.7 L1076.4,251.3 L1078.3,250.4 L1080.3,249.7 M1079.4,306.9 L1081.1,307.8 L1083.1,308.0 M1083.1,308.0 L1085.3,306.2 L1087.3,304.2 L1089.3,304.7 L1090.5,303.1 L1091.3,301.5 L1091.0,299.8 M1091.0,299.8 L1092.4,298.6 L1093.9,297.5 L1095.2,296.2 L1096.6,294.9 L1096.3,292.9 L1094.6,291.6 L1095.3,289.7 L1095.2,287.7 L1093.8,286.9 L1092.3,286.3 L1091.6,284.7 L1090.2,283.8 L1089.9,282.0 L1088.6,280.8 L1086.8,280.7 L1085.7,279.3 M1085.7,279.3 L1083.5,280.5 L1081.1,280.9 L1079.3,279.0 L1076.7,278.6 M1069.5,334.0 L1070.3,331.8 L1070.5,329.4 L1072.7,328.3 L1075.2,328.6 L1077.1,329.1 L1079.1,328.9 L1081.3,327.8 L1083.0,329.5 L1084.3,328.0 L1084.3,326.1 L1085.3,324.5 L1084.9,322.6 L1085.6,320.7 L1087.1,319.4 L1087.7,317.3 L1086.4,315.6 M1086.4,315.6 L1087.3,313.4 L1086.7,311.0 L1084.1,310.4 L1083.1,308.0 M1085.7,279.3 L1088.4,280.3 L1091.1,281.0 L1093.5,279.2 L1094.6,276.4 L1096.0,274.6 L1098.0,273.2 L1100.7,273.0 L1101.9,270.6 M1101.9,270.6 L1099.3,269.1 L1099.7,266.1 L1100.7,263.8 L1100.7,261.3 M1100.7,261.3 L1100.7,259.5 L1099.5,258.2 M1099.5,258.2 L1099.2,256.6 L1098.3,255.1 L1096.5,255.6 L1095.0,254.6 L1093.4,254.2 L1091.8,253.9 L1091.5,255.8 L1089.6,256.5 L1089.1,253.9 L1087.9,251.6 L1086.2,251.9 L1084.8,251.1 L1084.5,249.5 L1084.3,248.0 M1086.0,198.5 L1085.7,196.4 L1084.5,194.5 L1085.6,192.7 L1086.1,190.6 L1087.1,188.1 L1089.7,187.9 L1090.0,185.6 L1089.5,183.4 M1089.5,183.4 L1088.1,184.7 L1086.1,184.9 L1084.7,183.7 L1083.4,182.4 L1082.0,181.6 L1081.0,180.3 L1079.4,179.6 L1077.7,180.1 L1076.5,179.0 L1074.8,179.0 L1073.8,177.8 L1072.4,177.0 L1070.8,176.4 L1070.0,174.8 L1068.4,174.4 L1066.7,174.7 M1093.5,326.8 L1093.4,326.6 L1092.9,324.6 L1092.7,322.9 L1092.1,321.3 L1090.4,320.4 L1090.1,318.6 M1090.1,318.6 L1087.9,317.5 L1086.4,315.6 M1090.0,212.4 L1092.0,210.9 L1092.5,208.5 L1094.2,206.5 L1096.7,206.3 L1099.2,206.7 L1101.5,206.0 L1102.7,203.7 L1105.1,202.7 L1107.4,202.6 L1109.7,203.1 L1112.3,204.1 L1114.2,202.1 L1116.3,201.0 L1116.5,201.0 M1108.0,175.1 L1107.0,174.2 L1104.7,175.1 L1102.4,175.2 L1100.8,176.7 L1099.0,176.9 L1097.2,176.6 L1095.7,177.6 L1094.5,179.0 L1093.0,180.1 L1091.2,180.3 L1089.5,181.4 L1089.5,183.4 M1103.8,169.5 L1103.8,169.5 L1102.5,170.4 L1100.9,170.1 L1099.4,170.4 L1098.0,171.3 L1096.9,172.5 L1095.6,171.3 L1093.9,171.4 L1092.8,170.1 L1091.1,170.2 L1089.8,171.0 L1088.3,171.3 L1087.0,170.1 L1085.3,170.7 L1083.6,170.0 L1083.6,168.2 L1081.4,166.3 L1080.8,163.4 L1079.9,161.7 L1080.4,159.8 L1078.9,158.5 L1077.0,159.0 L1074.1,158.6 L1071.2,158.3 M1099.5,258.2 L1100.8,255.6 L1103.7,255.3 L1103.8,252.8 L1103.7,250.3 L1104.9,248.3 L1106.4,246.5 L1108.2,245.0 L1110.5,244.4 M1110.5,244.4 L1108.0,243.2 L1106.0,241.4 L1104.4,239.3 L1103.6,236.7 L1102.8,234.2 L1101.8,231.8 L1103.1,230.7 L1103.9,229.3 L1103.4,227.8 L1102.3,226.5 M1102.3,226.5 L1100.5,225.0 L1098.5,223.8 L1096.8,225.6 L1094.5,226.4 L1092.9,225.2 L1090.9,224.8 L1090.7,222.3 L1088.4,221.7 M1085.0,157.2 L1084.4,157.5 L1082.6,155.8 L1080.6,154.2 L1079.1,152.0 L1079.4,150.5 M1102.3,226.5 L1104.4,224.9 L1107.1,225.6 M1107.1,225.6 L1108.8,224.8 L1109.7,223.0 L1110.2,221.1 L1111.9,219.9 L1112.4,218.1 L1113.9,216.7 L1115.0,215.2 L1116.7,214.2 L1117.6,212.4 L1118.9,211.8 M1090.1,318.6 L1092.5,318.4 L1094.6,317.2 L1096.5,318.9 L1099.1,318.4 L1101.0,320.1 L1103.6,319.9 L1106.0,319.6 L1108.1,318.4 L1109.8,316.7 L1110.8,314.6 L1112.0,312.5 L1113.9,311.0 L1114.3,308.4 L1112.7,306.2 L1114.6,304.3 L1115.2,301.8 M1115.2,301.8 L1114.6,300.2 L1115.0,298.6 L1114.7,297.0 L1114.1,295.5 M1114.1,295.5 L1111.4,296.7 L1108.6,297.5 L1105.8,298.5 L1102.9,299.1 L1101.8,300.5 L1100.0,300.7 L1098.5,300.0 L1097.0,299.5 L1094.0,299.5 L1091.0,299.8 M1114.1,295.5 L1114.5,292.6 L1115.5,290.0 L1116.6,287.4 L1118.4,285.1 M1118.4,285.1 L1116.7,285.2 L1115.4,284.2 L1114.7,282.8 L1113.5,281.8 L1110.8,280.6 L1107.8,280.5 L1107.1,277.6 L1105.2,275.4 L1104.0,274.3 L1102.5,273.7 L1102.1,272.2 L1101.9,270.6 M1101.3,323.3 L1101.4,322.9 L1102.2,322.9 M1112.2,317.3 L1111.7,316.8 L1111.5,315.0 L1112.7,313.6 L1112.7,311.8 M1112.7,311.8 L1113.1,309.3 L1114.1,307.0 L1115.3,304.8 L1115.3,302.2 M1115.3,302.2 L1115.2,301.8 M1100.7,261.3 L1103.1,262.4 L1105.4,263.3 L1108.2,262.5 L1109.2,259.8 L1111.2,258.9 L1112.9,257.6 L1114.7,256.3 L1116.3,254.9 L1118.1,256.5 L1120.2,257.5 L1122.6,257.2 L1125.0,257.8 L1126.3,255.8 L1128.1,254.8 M1124.9,239.9 L1122.8,238.7 L1120.0,239.9 L1117.2,240.2 L1115.3,242.2 L1113.8,241.8 L1112.3,241.9 L1110.8,242.8 L1110.5,244.4 M1115.3,302.2 L1117.1,302.6 L1118.8,301.9 L1120.2,300.9 L1121.3,299.5 L1122.8,300.4 L1124.4,301.4 L1126.1,300.8 L1127.8,300.3 L1129.6,300.4 L1131.4,300.2 L1132.3,301.8 L1133.3,303.4 L1135.1,303.2 L1136.5,303.8 M1126.6,309.3 L1126.2,307.8 L1127.7,305.9 L1126.8,303.9 L1126.2,301.8 L1124.1,300.4 L1124.2,297.8 L1126.6,296.8 L1128.8,295.4 L1127.8,292.9 L1128.0,290.2 L1127.1,288.2 L1127.0,286.0 L1128.4,284.1 L1128.3,281.7 M1128.3,281.7 L1125.6,281.7 L1122.9,282.3 L1121.4,282.7 L1119.8,282.3 L1118.9,283.6 L1118.4,285.1 M1113.1,316.8 L1112.9,315.9 L1112.7,313.9 L1112.7,311.8 M1120.9,221.4 L1119.1,222.2 L1117.0,222.6 L1115.5,221.0 L1113.2,221.0 L1113.1,223.4 L1111.6,225.2 L1109.2,224.2 L1107.1,225.6 M1128.3,281.7 L1128.5,281.6 M1128.5,281.6 L1129.1,279.5 L1130.9,278.3 L1131.2,276.3 L1131.2,274.3 M1131.2,274.3 L1130.7,271.4 L1128.8,269.2 L1129.4,266.4 L1130.6,263.9 M1131.2,274.3 L1133.4,273.3 L1134.0,272.8 M1139.0,286.4 L1138.1,286.1 L1136.3,286.0 L1134.3,285.8 L1132.8,287.1 L1131.4,286.0 L1130.6,284.4 L1129.9,282.7 L1128.5,281.6" fill="none" stroke="#7a7a7a" stroke-width="0.75"/>
<path d="M688.3,644.3 L690.0,644.1 L691.6,643.6 L693.3,643.7 L694.9,643.0 L696.7,642.8 L698.3,643.4 L699.6,644.7 L701.1,645.5 L702.2,646.9 L703.7,647.7 L705.4,647.9 L707.1,648.1 L708.5,649.2 L710.3,648.5 L711.9,648.9 L713.4,649.4 L714.8,648.5 L716.1,647.5 L717.4,646.4 L718.8,645.4 L720.5,645.3 L722.1,644.9 L723.8,644.9 L725.4,644.4 L727.2,644.2 L728.7,645.2 L730.3,645.7 L732.0,645.6 L733.4,644.6 L734.9,643.7 L735.1,643.6 M688.3,644.3 L689.4,645.7 L689.7,647.5 L691.0,648.7 L692.1,650.0 L692.9,651.6 L693.5,653.2 L694.6,654.6 L695.8,655.8 L697.5,655.3 L699.0,654.4 L700.8,654.1 L702.5,654.4 L704.4,654.5 L706.2,654.9 L707.8,654.0 L709.2,652.7 L711.8,654.0 L714.0,655.9 L716.7,657.0 L719.6,656.9 L722.0,658.6 L724.9,658.9 L727.3,660.3 L730.1,661.1 M688.3,644.3 L688.4,645.8 L688.9,647.3 L688.8,648.8 L689.0,650.3 L689.9,651.5 L691.0,652.6 L692.1,653.6 L693.3,654.6 L695.8,656.2 L697.4,658.7 L699.0,661.0 L700.3,663.6 L700.3,665.2 L701.0,666.6 L701.7,668.0 L702.8,669.1 L704.0,670.1 L705.3,670.9 L706.6,671.7 L708.1,672.0 L709.3,673.0 L710.1,674.3 L710.4,675.9 L711.8,676.9 L713.2,677.6 L714.8,677.6 L716.3,678.1 L717.8,678.1 M688.3,644.3 L689.5,645.8 L690.1,647.6 L691.2,649.2 L692.1,650.8 L693.1,652.5 L694.8,653.5 L696.1,654.9 L697.8,655.8 L699.0,657.4 L699.5,659.2 L701.1,660.5 L702.9,661.2 L704.0,662.8 L704.9,664.5 L706.9,664.9 L708.1,666.5 L708.0,668.5 L709.2,670.2 L710.5,671.6 L711.0,673.5 L711.7,675.3 L712.8,676.9 L713.8,678.5 L714.6,680.2 L714.3,682.6 L716.1,684.3 L717.1,686.2 L718.9,687.6 L718.6,689.7 L717.9,691.8 L716.6,693.5 L715.4,695.3 M688.3,644.3 L687.4,646.1 L686.0,647.7 L686.5,649.6 L686.6,651.7 L685.3,653.2 L685.1,655.2 L684.7,657.1 L684.7,659.0 L686.3,660.3 L687.4,662.1 L687.6,664.1 L687.3,666.1 L688.2,667.8 L689.4,669.3 L690.2,671.0 L690.8,672.9 L690.8,674.7 L690.8,676.5 L690.5,678.3 L690.4,680.1 L690.2,682.0 L689.7,683.8 L690.1,685.6 L690.3,687.4 L690.2,689.5 L691.3,691.3 L692.9,692.4 L694.5,693.7 L695.2,695.5 L695.0,697.5 L694.7,699.4 L694.6,701.3 M688.3,644.3 L688.3,646.4 L688.4,648.5 L690.3,649.8 L690.9,652.0 L690.2,654.0 L688.4,655.1 L686.1,656.0 L686.1,658.4 L684.7,659.7 L683.3,660.9 L683.0,662.9 L681.2,663.9 L681.4,665.9 L680.4,667.5 L679.7,669.2 L679.4,671.1 L678.9,673.2 L679.9,675.1 L681.6,676.4 L682.4,678.4 L682.7,680.5 L683.8,682.3 L682.8,684.2 L682.5,686.3 L682.2,688.3 L681.3,690.1 L680.5,692.1 L679.0,693.4 L677.2,694.6 L676.3,696.4 L674.4,697.2 L672.9,698.5 M688.3,644.3 L688.3,646.3 L687.0,647.8 L685.3,648.7 L684.0,650.0 L682.3,650.8 L680.9,652.1 L679.7,653.6 L679.5,655.5 L678.0,656.5 L676.5,657.5 L674.8,658.2 L673.0,658.5 L672.2,660.3 L670.4,661.1 L668.8,662.2 L666.9,662.2 L665.2,662.9 L664.2,664.5 L662.6,665.3 L661.1,666.2 L659.4,666.7 L658.1,668.0 L657.1,669.5 L655.7,670.5 L654.7,672.2 L653.2,673.5 L652.0,675.1 L651.8,677.1 L649.9,677.0 L648.1,677.7 L646.1,678.0 L644.4,678.8 M688.3,644.3 L686.9,645.3 L686.0,646.7 L685.0,648.1 L684.7,649.7 L684.1,651.4 L683.2,652.9 L682.0,654.4 L680.1,654.4 L678.7,655.4 L677.1,655.8 L675.8,656.8 L674.6,658.0 L673.0,658.4 L671.7,659.5 L670.5,660.7 L669.0,661.3 L667.3,660.7 L665.5,660.8 L664.1,661.8 L662.6,662.8 L660.9,662.5 L659.3,662.3 L657.6,662.1 L656.0,662.1 L654.3,662.2 L652.8,661.5 L651.1,661.2 L649.7,660.4 L648.4,659.2 L647.0,658.2 L645.2,658.2 L643.5,658.2 M688.3,644.3 L685.7,644.2 L683.2,644.5 L680.7,645.2 L678.1,645.0 L675.5,645.5 L672.9,644.9 L670.3,644.5 L668.1,643.0 L665.4,644.2 L662.7,645.1 L660.0,643.8 L657.8,641.9 L655.4,642.9 L653.0,644.0 L650.3,643.7 L647.9,644.7 M688.3,644.3 L687.9,644.1 M687.9,644.0 L685.9,642.9 L683.8,641.1 L681.0,641.1 L678.5,639.8 L675.6,639.8 L673.0,638.5 L670.4,637.2 L668.9,634.7 L666.8,632.9 L664.8,630.9 L663.0,628.7 L660.2,627.9 L657.4,627.3 L654.6,627.6 L652.1,626.2 L649.3,625.7 M688.3,644.3 L688.0,643.7 M687.6,643.1 L687.3,642.6 L685.6,641.4 L685.0,639.5 L684.7,637.6 L682.9,636.9 L681.3,635.9 L679.7,634.9 L678.2,633.7 L676.3,634.5 L674.2,634.3 L672.4,633.6 L670.4,633.3 L670.8,630.8 L668.9,629.2 L666.8,628.6 L664.9,627.6 L663.3,626.2 L661.2,626.2 L660.0,624.7 L658.4,623.5 L657.0,622.1 L655.1,621.3 L654.1,619.7 L652.7,618.3 L651.4,616.7 L650.2,615.0 L649.4,613.2 L648.6,611.3 L648.7,609.3 L649.2,607.3 L649.5,605.3 L649.7,603.3 M688.3,644.3 L687.9,643.9 M687.8,643.7 L687.1,643.0 L685.9,641.6 L686.1,639.7 L685.7,637.9 L684.7,636.4 L683.0,635.6 L682.4,633.9 L682.0,632.2 L681.1,630.7 L680.1,629.3 L679.8,628.3 M688.3,644.3 L688.7,641.5 L688.4,640.4 M688.9,635.9 L690.6,634.1 L691.2,631.5 L691.8,629.0 L692.7,626.5 L694.0,624.2 L693.8,621.2 L691.5,619.5 L691.4,619.3 M689.6,606.8 L689.7,606.5 L689.3,603.8 M688.3,644.3 L689.7,643.1 L690.3,641.3 L691.1,639.6 L691.6,637.9 L692.3,636.2 L692.9,634.5 L693.7,632.8 L694.6,631.2 L696.1,630.2 L697.7,629.3 L698.7,627.7 L700.1,626.6 L701.5,625.3 L702.1,623.5 L703.9,622.8 L705.1,621.3 L706.6,620.1 L708.0,618.9 L709.2,617.4 L709.9,615.6 L710.0,613.8 L710.3,611.9 L711.1,610.1 L712.3,608.6 L712.5,606.8 L712.8,605.0 L713.6,603.3 L714.1,601.5 L714.2,599.6 L715.0,597.8 L714.0,596.1 L713.7,594.1 M688.3,644.3 L689.3,642.9 L689.8,641.2 L691.3,640.4 L693.0,639.9 L694.6,639.1 L695.1,637.3 L696.6,636.8 L698.0,635.7 L699.9,636.0 L701.8,636.6 L703.8,636.7 L705.8,636.7 L707.3,635.3 L708.8,633.9 L709.3,631.8 L709.4,629.8 L710.3,628.4 L711.6,627.3 L712.2,625.7 L713.6,624.7 L715.2,624.4 L716.8,623.7 L718.1,622.6 L719.4,621.6 L719.7,619.8 L719.6,618.0 L720.9,616.8 L722.3,615.7 L723.2,614.2 L724.0,612.7 L725.4,611.5 L727.3,611.4 M688.3,644.3 L690.4,642.7 L693.1,642.3 L695.3,641.0 L697.7,640.0 L699.7,638.4 L701.9,637.0 L704.3,636.1 L706.7,634.9 L708.1,634.3 L709.4,633.4 L710.9,634.1 L712.2,635.0 L713.8,634.9 L715.2,634.3 L715.4,632.7 L716.5,631.5 L718.7,630.0 L721.1,629.0 L723.5,627.8 L725.1,625.7" fill="none" stroke="#7a7a7a" stroke-width="0.75"/>
<path d="M152.2,574.6 C153.7,571.8 161.6,562.8 163.6,561.3 C165.6,559.8 169.2,560.9 171.9,559.6 C174.6,558.3 187.3,549.7 190.1,548.0 C192.9,546.3 198.8,544.8 200.1,543.0 C201.4,541.2 202.8,531.2 203.4,529.8 C204.0,528.3 205.7,528.5 206.5,528.5 C207.3,528.5 210.7,528.3 211.7,529.8 C212.7,531.2 215.5,540.4 216.7,543.0 C217.9,545.6 222.3,554.6 223.3,556.3 C224.3,558.0 225.4,558.6 226.7,560.0 C228.0,561.4 234.9,568.8 236.7,570.0 C238.5,571.2 243.1,572.7 245.0,572.5 C246.9,572.3 253.3,568.5 255.5,567.8 C257.7,567.0 264.9,566.1 266.7,565.0 C268.5,563.9 272.5,559.4 273.4,556.9 C274.3,554.4 274.2,542.9 275.4,540.0 C276.6,537.1 283.0,528.8 285.4,528.0 C287.8,527.2 296.8,532.1 299.4,532.0 C302.0,531.9 310.4,527.7 311.7,526.7 C313.0,525.7 311.7,522.0 312.5,521.7 C313.3,521.5 318.2,524.6 320.0,524.2 C321.8,523.8 328.7,517.4 330.0,517.5 C331.3,517.6 332.3,523.6 333.3,525.0 C334.3,526.4 339.2,529.9 340.0,531.7 C340.8,533.5 340.0,541.4 340.8,543.3 C341.6,545.2 346.7,549.8 348.3,550.8 C349.9,551.8 355.0,552.9 356.7,553.0 C358.4,553.1 363.7,552.2 365.0,551.7 C366.3,551.2 368.8,547.8 370.0,547.5 C371.2,547.2 376.0,547.0 376.7,548.3 C377.4,549.5 376.0,558.2 376.7,560.0 C377.4,561.8 381.3,565.2 383.3,566.7 C385.3,568.2 393.7,573.5 396.7,575.0 C399.7,576.5 410.8,580.6 413.3,581.7 C415.8,582.8 419.2,585.5 421.7,585.8 C424.2,586.0 434.1,585.6 438.3,584.2 C442.5,582.8 459.1,573.4 463.3,571.7 C467.5,570.0 476.8,567.3 480.0,567.5 C483.2,567.7 492.3,573.0 495.0,573.3 C497.7,573.6 504.5,570.6 506.7,570.8 C508.9,571.0 513.4,574.5 516.7,575.0 C520.0,575.5 536.7,576.0 540.0,575.8 C543.3,575.6 547.2,574.1 550.0,573.3 C552.8,572.5 564.0,568.6 568.3,567.5 C572.6,566.4 589.5,563.3 593.3,562.5 C597.1,561.7 604.4,560.0 606.7,559.2 C609.0,558.5 613.9,557.5 616.7,555.0 C619.5,552.5 632.2,536.1 635.0,534.2 C637.8,532.3 642.7,536.0 645.0,535.8 C647.3,535.6 655.7,533.3 658.3,532.5 C660.9,531.7 668.1,527.0 670.8,527.5 C673.5,528.0 683.1,536.4 685.0,537.5 C686.9,538.6 688.5,538.1 690.0,538.3 C691.5,538.5 698.5,538.5 700.0,539.2 C701.5,539.9 703.5,544.6 705.0,545.0 C706.5,545.4 712.8,544.0 715.0,543.3 C717.2,542.5 724.7,538.8 726.7,537.5 C728.7,536.2 733.7,531.6 735.0,530.0 C736.3,528.4 739.7,523.9 740.0,521.7 C740.3,519.5 738.6,509.9 738.3,508.3 C738.0,506.7 736.5,506.1 736.7,505.8 C736.9,505.6 739.4,505.2 740.0,505.8 C740.6,506.4 742.3,510.1 742.5,511.7 C742.7,513.3 741.1,520.5 741.7,521.7 C742.3,522.9 746.0,523.5 748.3,523.3 C750.6,523.0 761.5,520.5 765.0,519.2 C768.5,518.0 780.1,512.7 783.3,510.8 C786.5,508.9 794.5,501.3 796.7,500.0 C798.9,498.7 803.0,497.1 805.0,497.5 C807.0,497.9 814.4,503.3 816.7,504.2 C819.0,505.1 828.3,506.0 828.3,506.7 C828.3,507.4 818.4,509.9 816.7,510.8 C815.0,511.7 812.4,514.2 811.7,515.8 C811.0,517.4 810.8,524.5 810.0,526.7 C809.2,529.0 805.0,535.1 803.3,538.3 C801.6,541.5 795.3,554.8 793.3,558.3 C791.3,561.8 785.6,570.1 783.3,573.3 C781.0,576.5 772.3,587.0 770.0,590.0 C767.7,593.0 761.8,600.5 760.0,603.3 C758.2,606.1 753.2,615.6 751.7,618.3 C750.2,621.0 746.4,627.8 745.0,630.0 C743.6,632.2 738.7,638.0 737.5,640.0 C736.3,642.0 733.5,648.3 733.3,650.0 C733.1,651.7 736.0,654.4 735.8,656.7 C735.5,659.0 731.7,670.6 730.8,673.3 C729.9,676.0 727.3,681.1 726.7,683.3 C726.1,685.5 726.3,692.7 725.0,695.0 C723.7,697.3 715.0,704.5 713.3,706.7 C711.6,708.9 708.9,713.4 708.3,716.7 C707.7,720.0 707.3,735.5 707.5,740.0 C707.7,744.5 708.8,759.0 710.0,761.7 C711.2,764.4 717.8,765.7 720.0,766.7 C722.2,767.7 729.4,770.0 731.7,771.7 C734.0,773.4 742.6,782.0 743.3,783.3 C744.0,784.6 739.5,784.8 738.3,785.0 C737.0,785.2 731.8,784.0 730.8,785.0 C729.8,786.0 728.2,793.5 728.3,795.0 C728.4,796.5 730.5,798.9 731.7,800.0 C732.9,801.1 739.5,805.0 740.0,805.8 C740.5,806.6 736.9,807.4 736.7,808.3 C736.5,809.2 736.8,813.9 738.3,815.0 C739.8,816.1 750.2,817.7 751.7,819.2 C753.2,820.7 753.6,828.6 753.3,830.0 C753.0,831.4 748.5,832.5 748.3,833.3 C748.1,834.0 750.5,836.2 751.7,837.5 C753.0,838.8 761.0,844.9 760.8,845.8 C760.6,846.7 751.6,846.0 750.0,846.7 C748.4,847.5 746.7,852.1 745.0,853.3 C743.3,854.5 735.3,857.1 733.3,858.3 C731.3,859.5 726.5,862.8 725.0,865.0 C723.5,867.2 719.5,877.7 718.3,880.0 C717.1,882.3 714.1,886.0 713.3,888.3 C712.5,890.6 709.8,900.5 710.0,903.3 C710.2,906.1 714.2,914.0 715.0,916.7 C715.8,919.4 716.8,928.7 717.5,930.0 C718.2,931.3 722.9,928.9 721.7,930.0 C720.5,931.1 708.0,940.3 705.8,940.8 C703.6,941.3 701.6,936.5 700.0,935.0 C698.4,933.5 691.7,926.5 690.0,925.8 C688.3,925.1 685.6,929.0 683.3,928.3 C681.0,927.6 669.7,919.9 666.7,919.2 C663.7,918.5 655.8,921.1 653.3,921.7 C650.8,922.3 644.7,925.1 641.7,925.0 C638.7,924.9 626.8,922.3 623.3,920.8 C619.8,919.3 610.9,911.8 606.7,910.0 C602.5,908.2 585.0,905.0 581.7,903.3 C578.4,901.6 575.1,897.1 573.3,893.3 C571.5,889.5 566.0,869.8 563.3,865.0 C560.6,860.2 550.4,848.5 546.7,845.0 C543.0,841.5 530.7,832.3 526.7,830.0 C522.7,827.7 510.5,823.0 506.7,821.7 C502.9,820.5 492.1,817.8 488.3,817.5 C484.5,817.2 470.8,817.9 468.3,818.3 C465.8,818.7 465.1,821.5 463.3,821.7 C461.5,821.9 452.7,821.2 450.0,820.0 C447.3,818.8 439.4,811.2 436.7,810.0 C434.0,808.8 426.8,809.0 423.3,807.5 C419.8,806.0 406.2,798.6 401.7,795.0 C397.2,791.4 381.6,774.2 378.3,771.7 C375.0,769.2 370.5,770.3 368.3,770.0 C366.1,769.7 359.5,769.8 356.7,768.3 C353.9,766.8 343.7,757.7 340.0,755.0 C336.3,752.3 324.0,745.2 320.0,741.7 C316.0,738.2 303.0,722.8 300.0,720.0 C297.0,717.2 291.7,714.9 290.0,714.2 C288.3,713.5 285.8,713.4 283.3,713.3 C280.8,713.2 268.0,714.8 265.0,713.3 C262.0,711.8 255.8,700.3 253.3,698.3 C250.8,696.3 244.0,693.9 240.0,693.3 C236.0,692.7 218.1,692.1 213.3,692.5 C208.5,692.9 194.9,698.4 191.7,697.5 C188.5,696.6 183.5,685.7 181.7,683.3 C179.9,680.9 175.3,674.4 173.3,673.3 C171.3,672.2 164.4,673.7 162.1,672.5 C159.8,671.3 151.9,663.2 150.4,660.9 C148.9,658.6 148.3,652.1 147.1,649.3 C145.9,646.5 139.3,635.6 138.8,632.6 C138.3,629.6 141.6,622.0 142.1,619.4 C142.6,616.8 143.1,609.1 143.8,606.1 C144.5,603.1 148.0,592.6 148.8,589.5 C149.6,586.4 150.7,577.4 152.2,574.6 Z" fill="none" stroke="#2a2a2a" stroke-width="1.05" stroke-linejoin="round"/>
<path d="M838.0,30.0 C857.6,29.4 1016.2,29.4 1036.0,30.0 C1055.8,30.6 1036.0,34.4 1035.8,36.0 C1035.6,37.6 1035.6,41.6 1034.0,46.0 C1032.4,50.4 1021.9,73.7 1020.0,80.0 C1018.1,86.3 1015.6,104.9 1015.0,109.2 C1014.4,113.5 1013.5,121.4 1014.2,123.3 C1014.9,125.2 1019.8,127.1 1021.7,128.3 C1023.6,129.5 1030.5,134.2 1033.3,135.0 C1036.1,135.8 1046.8,136.6 1050.0,136.7 C1053.2,136.8 1062.3,135.0 1065.0,135.8 C1067.7,136.6 1074.9,143.1 1076.7,145.0 C1078.5,146.9 1081.0,152.8 1083.3,155.0 C1085.6,157.2 1097.7,165.2 1100.0,166.7 C1102.3,168.2 1105.2,167.7 1106.7,170.0 C1108.2,172.3 1112.7,181.0 1115.0,190.0 C1117.3,199.0 1127.0,249.0 1130.0,260.0 C1133.0,271.0 1148.0,293.5 1145.0,300.0 C1142.0,306.5 1109.3,320.5 1100.0,325.0 C1090.7,329.5 1057.3,342.5 1052.0,345.0 C1046.7,347.5 1048.6,348.8 1046.7,350.0 C1044.8,351.2 1035.6,354.5 1033.3,356.7 C1031.0,358.9 1024.8,368.7 1023.3,371.7 C1021.8,374.7 1018.5,384.5 1018.3,386.7 C1018.0,388.9 1020.3,390.3 1020.8,393.3 C1021.3,396.3 1022.9,411.9 1023.3,416.7 C1023.7,421.5 1024.8,437.7 1025.0,441.7 C1025.2,445.7 1026.6,453.5 1025.8,456.7 C1025.0,459.9 1018.6,470.6 1016.7,473.3 C1014.8,476.0 1009.0,481.6 1006.7,483.3 C1004.4,485.0 994.8,489.2 993.3,490.0 C991.8,490.8 993.4,491.0 991.7,491.7 C990.0,492.4 978.9,495.7 976.7,496.7 C974.5,497.7 971.0,500.7 970.0,501.7 C969.0,502.7 967.9,505.4 966.7,506.7 C965.5,508.0 959.8,513.3 958.3,515.0 C956.8,516.7 953.9,520.5 951.7,523.3 C949.5,526.1 938.4,539.5 936.7,543.3 C935.0,547.1 935.7,558.2 935.0,561.7 C934.3,565.2 932.0,574.5 930.0,578.3 C928.0,582.0 917.8,596.9 915.0,599.2 C912.2,601.5 905.5,601.7 901.7,601.7 C897.9,601.7 881.7,599.2 876.7,599.2 C871.7,599.2 855.9,602.5 851.7,601.7 C847.5,601.0 837.7,594.4 835.0,591.7 C832.3,589.0 825.7,577.3 825.0,575.0 C824.3,572.7 828.4,570.5 828.3,568.3 C828.2,566.1 824.2,556.1 824.2,553.3 C824.2,550.5 828.3,542.7 828.3,540.0 C828.3,537.3 824.5,529.0 824.2,526.7 C823.9,524.4 823.2,518.4 825.0,516.7 C826.8,515.0 838.7,511.2 841.7,510.0 C844.7,508.8 852.8,506.3 855.0,505.0 C857.2,503.7 862.0,499.2 863.3,496.7 C864.6,494.2 867.6,482.0 868.3,480.0 C869.0,478.0 869.3,478.4 870.0,476.7 C870.7,475.0 873.7,466.3 875.0,463.3 C876.3,460.3 882.1,449.7 883.3,446.7 C884.5,443.7 887.2,435.6 886.7,433.3 C886.2,431.0 880.3,425.3 878.3,423.3 C876.3,421.3 868.0,414.9 866.7,413.3 C865.5,411.7 864.8,409.2 865.8,407.5 C866.8,405.8 874.5,398.3 876.7,396.7 C879.0,395.1 886.5,392.7 888.3,391.7 C890.1,390.7 893.0,387.7 895.0,386.7 C897.0,385.7 905.5,381.9 908.3,381.7 C911.1,381.5 920.8,385.2 923.3,385.0 C925.8,384.8 931.1,381.8 933.3,380.0 C935.5,378.2 943.5,369.7 945.0,366.7 C946.5,363.7 947.9,353.2 948.3,350.0 C948.7,346.8 949.4,337.5 949.2,335.0 C949.0,332.5 948.1,326.3 946.7,325.0 C945.3,323.7 936.7,323.4 935.0,321.7 C933.3,320.0 931.2,310.5 930.0,308.3 C928.8,306.1 924.3,302.5 923.3,300.0 C922.3,297.5 920.8,286.6 920.0,283.3 C919.2,280.0 916.3,270.2 915.8,266.7 C915.3,263.2 915.2,252.6 915.0,248.3 C914.8,244.0 914.1,227.8 913.3,223.3 C912.5,218.8 907.9,206.6 906.7,203.3 C905.5,200.0 902.7,192.3 901.7,190.0 C900.7,187.7 898.0,182.3 896.7,180.0 C895.4,177.7 890.1,169.0 888.3,166.7 C886.5,164.4 880.3,160.0 878.3,156.7 C876.3,153.4 870.0,137.3 868.3,133.3 C866.6,129.3 862.5,119.1 861.7,116.7 C861.0,114.3 861.8,112.9 860.8,109.2 C859.8,105.5 853.6,86.3 852.0,80.0 C850.4,73.7 846.2,50.4 845.0,46.0 C843.8,41.6 840.7,37.6 840.0,36.0 C839.3,34.4 818.4,30.6 838.0,30.0 Z" fill="none" stroke="#2a2a2a" stroke-width="1.05" stroke-linejoin="round"/>
<path d="M294.5,389.0 C294.8,387.9 295.9,385.9 297.0,385.0 C298.1,384.1 299.6,383.5 301.0,383.6 C302.4,383.7 305.2,384.5 305.5,385.5 C305.8,386.5 304.1,388.4 303.0,389.5 C301.9,390.6 300.3,392.0 299.0,392.3 C297.7,392.6 295.8,392.1 295.0,391.5 C294.2,390.9 294.2,390.1 294.5,389.0 Z" fill="#fff" stroke="#222" stroke-width="1"/>
<path d="M118.0,574.0 C118.8,573.2 120.5,572.2 121.5,572.5 C122.5,572.8 123.4,574.6 124.0,576.0 C124.6,577.4 125.5,579.8 125.0,581.0 C124.5,582.2 122.3,583.3 121.0,583.3 C119.7,583.3 117.7,582.0 117.0,581.0 C116.3,580.0 116.5,578.2 116.7,577.0 C116.9,575.8 117.2,574.8 118.0,574.0 Z" fill="#fff" stroke="#222" stroke-width="1"/>
<path d="M106.7,595.8 C107.7,594.5 111.0,591.4 112.5,591.7 C114.0,592.0 113.7,596.4 115.8,597.5 C117.9,598.6 122.9,597.6 125.0,598.3 C127.1,599.0 128.3,600.6 128.3,601.7 C128.3,602.8 127.2,605.0 125.0,605.0 C122.8,605.0 117.5,602.1 115.0,601.7 C112.5,601.3 111.4,602.9 110.0,602.5 C108.6,602.1 107.2,600.3 106.7,599.2 C106.2,598.1 105.7,597.0 106.7,595.8 Z" fill="#fff" stroke="#222" stroke-width="1"/>
<path d="M645.3,423.3 C645.6,422.3 645.9,421.7 647.5,421.3 C649.1,420.9 652.7,420.6 655.0,420.7 C657.3,420.8 660.0,420.7 661.3,421.7 C662.5,422.7 662.4,424.8 662.5,426.7 C662.6,428.6 662.8,432.0 662.2,433.3 C661.6,434.6 659.9,434.8 658.7,434.7 C657.5,434.6 656.5,433.3 655.0,432.5 C653.5,431.7 651.5,430.8 650.0,430.0 C648.5,429.2 646.6,428.6 645.8,427.5 C645.0,426.4 645.0,424.3 645.3,423.3 Z" fill="#fff" stroke="#222" stroke-width="1"/>
<path d="M548.0,430.0 C548.4,429.3 549.2,428.7 550.0,428.5 C550.8,428.3 552.3,428.4 553.0,429.0 C553.7,429.6 554.1,431.0 554.0,432.0 C553.9,433.0 553.3,434.5 552.5,435.0 C551.7,435.5 549.8,435.4 549.0,435.0 C548.2,434.6 547.7,433.3 547.5,432.5 C547.3,431.7 547.6,430.7 548.0,430.0 Z" fill="#c6e0fa" stroke="#222" stroke-width="1"/>
<path d="M587.5,421.7 C587.8,420.9 590.2,419.8 591.7,419.7 C593.2,419.6 595.3,419.9 596.7,420.8 C598.1,421.7 599.0,423.8 600.0,425.0 C601.0,426.2 602.8,427.3 602.5,428.0 C602.2,428.7 599.8,429.3 598.3,429.2 C596.8,429.1 594.7,428.3 593.3,427.5 C591.9,426.7 591.0,425.2 590.0,424.2 C589.0,423.2 587.2,422.4 587.5,421.7 Z" fill="#c6e0fa" stroke="#222" stroke-width="1"/>
<path d="M668.3,440.0 C670.0,438.6 674.6,437.0 676.7,436.7 C678.8,436.4 680.0,436.6 680.8,438.3 C681.6,440.0 681.0,445.0 681.7,446.7 C682.4,448.4 685.0,447.6 685.0,448.3 C685.0,449.0 682.5,449.7 681.7,450.8 C680.9,451.9 680.4,453.5 680.0,455.0 C679.6,456.5 679.8,459.2 679.2,460.0 C678.7,460.8 677.7,461.1 676.7,460.0 C675.7,458.9 674.7,454.8 673.3,453.3 C671.9,451.8 669.4,452.2 668.3,450.8 C667.2,449.4 666.7,446.8 666.7,445.0 C666.7,443.2 666.6,441.4 668.3,440.0 Z" fill="#c6e0fa" stroke="#222" stroke-width="1"/>
<path d="M679.2,463.3 C680.2,462.3 681.2,461.9 681.7,462.5 C682.2,463.1 681.7,465.4 682.5,466.7 C683.3,467.9 685.5,468.3 686.7,470.0 C688.0,471.7 690.0,475.0 690.0,476.7 C690.0,478.4 688.1,479.7 686.7,480.0 C685.3,480.3 683.4,479.4 681.7,478.3 C680.0,477.2 677.7,475.0 676.7,473.3 C675.7,471.6 675.4,470.0 675.8,468.3 C676.2,466.6 678.2,464.3 679.2,463.3 Z" fill="#c6e0fa" stroke="#222" stroke-width="1"/>
<path d="M700.0,405.8 C700.3,404.8 701.5,404.3 702.5,404.2 C703.5,404.1 705.4,404.2 705.8,405.0 C706.2,405.8 705.8,408.4 705.0,409.2 C704.2,410.0 701.6,410.6 700.8,410.0 C700.0,409.4 699.7,406.8 700.0,405.8 Z" fill="#c6e0fa" stroke="#222" stroke-width="1"/>
<path d="M729.2,364.2 C729.9,363.1 731.5,360.8 733.3,360.0 C735.1,359.2 738.8,358.6 740.0,359.2 C741.2,359.8 741.2,361.6 740.8,363.3 C740.4,365.0 738.8,368.1 737.5,369.2 C736.2,370.3 734.7,370.4 733.3,370.0 C731.9,369.6 729.9,367.7 729.2,366.7 C728.5,365.7 728.5,365.3 729.2,364.2 Z" fill="#c6e0fa" stroke="#222" stroke-width="1"/>
<path d="M1010.0,205.0 C1010.1,204.2 1011.4,202.8 1012.5,202.0 C1013.6,201.2 1015.5,200.4 1016.7,200.3 C1018.0,200.2 1019.7,200.7 1020.0,201.3 C1020.3,201.9 1019.5,202.9 1018.7,203.7 C1017.9,204.4 1016.2,205.3 1015.0,205.8 C1013.8,206.3 1012.5,206.8 1011.7,206.7 C1010.9,206.6 1009.9,205.8 1010.0,205.0 Z" fill="#e0f2fe" stroke="#333" stroke-width="0.9"/>
<path d="M1000.0,246.7 C999.6,245.7 1000.0,243.5 1000.8,242.5 C1001.6,241.5 1003.2,241.4 1005.0,240.8 C1006.8,240.2 1009.2,239.2 1011.7,239.2 C1014.2,239.2 1019.5,240.2 1020.0,240.8 C1020.5,241.4 1017.0,241.7 1015.0,242.5 C1013.0,243.3 1010.2,244.8 1008.3,245.8 C1006.3,246.8 1004.7,248.2 1003.3,248.3 C1001.9,248.5 1000.4,247.7 1000.0,246.7 Z" fill="#e0f2fe" stroke="#333" stroke-width="0.9"/>
<path d="M1027.5,253.3 C1027.8,252.5 1029.9,252.8 1031.7,252.5 C1033.5,252.2 1036.1,252.2 1038.3,251.7 C1040.5,251.2 1043.2,249.7 1045.0,249.7 C1046.8,249.7 1048.9,250.9 1049.2,251.7 C1049.5,252.4 1048.5,253.8 1046.7,254.2 C1044.9,254.6 1040.5,253.9 1038.3,254.2 C1036.1,254.5 1034.7,255.2 1033.3,255.8 C1031.9,256.4 1031.0,257.9 1030.0,257.5 C1029.0,257.1 1027.2,254.1 1027.5,253.3 Z" fill="#e0f2fe" stroke="#333" stroke-width="0.9"/>
</g>
<line x1="368.8" y1="36" x2="368.8" y2="987" stroke="#58626b" stroke-width="1.15"/>
<line x1="688.8" y1="36" x2="688.8" y2="987" stroke="#58626b" stroke-width="1.15"/>
<line x1="1008.8" y1="36" x2="1008.8" y2="987" stroke="#58626b" stroke-width="1.15"/>
<line x1="84" y1="307.45" x2="1171" y2="307.45" stroke="#58626b" stroke-width="1.15"/>
<line x1="84" y1="713.4" x2="1171" y2="713.4" stroke="#58626b" stroke-width="1.15"/>
<path d="M569.4,443.1 L575.0,460.3 L593.1,460.3 L578.4,470.9 L584.0,488.1 L569.4,477.4 L554.8,488.1 L560.4,470.9 L545.7,460.3 L563.8,460.3 Z M569.4,456.1 L572.1,464.3 L580.8,464.3 L573.8,469.5 L576.5,477.8 L569.4,472.7 L562.3,477.8 L565.0,469.5 L558.0,464.3 L566.7,464.3 Z" fill="#000" fill-rule="evenodd"/>
<rect x="83.9" y="25.4" width="284.9" height="10.8" fill="#000"/>
<rect x="83.9" y="987" width="284.9" height="10.6" fill="#000"/>
<rect x="688.8" y="25.4" width="320.0" height="10.8" fill="#000"/>
<rect x="688.8" y="987" width="320.0" height="10.6" fill="#000"/>
<rect x="72.9" y="35" width="11" height="272.45" fill="#000"/>
<rect x="1170.7" y="35" width="11.1" height="272.45" fill="#000"/>
<rect x="72.9" y="713.4" width="11" height="274.6" fill="#000"/>
<rect x="1170.7" y="713.4" width="11.1" height="274.6" fill="#000"/>
<rect x="73.5" y="26.15" width="1107.7" height="970.75" fill="none" stroke="#000" stroke-width="1.2"/>
<line x1="83.3" y1="25.4" x2="83.3" y2="997.6" stroke="#000" stroke-width="1.2"/>
<line x1="1171.35" y1="25.4" x2="1171.35" y2="997.6" stroke="#000" stroke-width="1.2"/>
<line x1="72.9" y1="35.65" x2="1181.8" y2="35.65" stroke="#000" stroke-width="1.1"/>
<line x1="72.9" y1="987.5" x2="1181.8" y2="987.5" stroke="#000" stroke-width="1.1"/>
<path d="M1153.5,298.2 L1160.5,300.1 L1155,303" fill="none" stroke="#666" stroke-width="0.9"/>
<defs><linearGradient id="gb" x1="0" y1="0" x2="0.3" y2="1"><stop offset="0" stop-color="#25a6d2"/><stop offset="1" stop-color="#0b557f"/></linearGradient><clipPath id="gclip"><circle cx="132.1" cy="78.1" r="30"/></clipPath></defs>
<circle cx="132.1" cy="78.1" r="30" fill="url(#gb)"/>
<g clip-path="url(#gclip)">
<polygon points="136.18,60.27 141.16,50.31 150.46,54.96 150.46,56.95 137.84,61.40" fill="#2aa23a"/>
<polygon points="136.18,61.60 150.46,56.95 151.45,64.92 143.82,63.26" fill="#e3101e"/>
<polygon points="150.46,54.62 157.76,59.94 163.07,71.89 161.75,75.21 151.45,65.91" fill="#c9b9cc"/>
<polygon points="137.31,62.39 144.48,63.26 151.45,66.05 145.81,72.22" fill="#2aa23a"/>
<polygon points="135.18,62.59 145.81,72.22 143.82,73.68 135.05,74.68" fill="#f0dc14"/>
<polygon points="145.81,72.22 151.45,66.05 160.08,74.88 151.12,84.17" fill="#f0dc14"/>
<polygon points="160.08,70.56 163.74,71.89 163.74,77.20 160.08,75.21" fill="#2aa23a"/>
<polygon points="134.19,74.68 144.48,73.35 150.79,84.64 134.19,89.95" fill="#e3101e"/>
<polygon points="151.12,84.17 160.08,75.08 163.74,81.18 159.09,93.14 154.44,96.79" fill="#c9b9cc"/>
<polygon points="154.44,96.46 158.42,92.47 155.77,97.12" fill="#e3101e"/>
<polygon points="133.86,89.95 150.79,84.84 154.77,97.12 148.46,103.76 132.53,109.74" fill="#2aa23a"/>
<path d="M134.85,61.60 C134.74,63.75 134.35,69.84 134.19,74.54 C134.02,79.25 134.24,84.17 133.86,89.82 C133.47,95.46 132.20,105.31 131.86,108.41" fill="none" stroke="#fff" stroke-width="0.9" stroke-linejoin="round" opacity="0.9"/>
<path d="M134.85,61.60 C133.14,63.31 127.49,68.07 124.56,71.89 C121.63,75.71 119.36,79.86 117.26,84.50 C115.15,89.15 112.83,97.23 111.94,99.78" fill="none" stroke="#fff" stroke-width="0.9" stroke-linejoin="round" opacity="0.9"/>
<path d="M134.85,61.60 C132.03,61.98 122.29,62.20 117.92,63.92 C113.55,65.64 111.28,69.45 108.62,71.89 C105.97,74.32 103.09,77.42 101.98,78.53" fill="none" stroke="#fff" stroke-width="0.9" stroke-linejoin="round" opacity="0.9"/>
<path d="M127.22,48.98 C128.49,51.08 132.53,61.37 134.85,61.60 C137.18,61.82 140.11,52.19 141.16,50.31" fill="none" stroke="#fff" stroke-width="0.9" stroke-linejoin="round" opacity="0.9"/>
<path d="M134.85,61.60 C136.68,63.37 143.10,68.46 145.81,72.22 C148.52,75.98 149.68,80.02 151.12,84.17 C152.56,88.32 153.89,94.96 154.44,97.12" fill="none" stroke="#fff" stroke-width="0.9" stroke-linejoin="round" opacity="0.9"/>
<path d="M101.98,77.20 C103.09,76.32 105.97,74.10 108.62,71.89 C111.28,69.68 113.55,65.64 117.92,63.92 C122.29,62.20 129.32,61.26 134.85,61.60 C140.39,61.93 146.64,64.09 151.12,65.91 C155.60,67.74 159.97,71.45 161.75,72.55" fill="none" stroke="#fff" stroke-width="0.9" stroke-linejoin="round" opacity="0.9"/>
<path d="M102.65,83.84 C105.08,83.95 112.05,83.51 117.26,84.50 C122.46,85.50 128.21,89.82 133.86,89.82 C139.50,89.82 146.47,86.16 151.12,84.50 C155.77,82.84 159.97,80.63 161.75,79.86" fill="none" stroke="#fff" stroke-width="0.9" stroke-linejoin="round" opacity="0.9"/>
<path d="M104.64,91.81 C105.86,93.14 107.41,97.90 111.94,99.78 C116.48,101.66 125.56,103.32 131.86,103.10 C138.17,102.88 145.14,100.33 149.79,98.45 C154.44,96.57 158.09,92.92 159.75,91.81" fill="none" stroke="#fff" stroke-width="0.9" stroke-linejoin="round" opacity="0.9"/>
<path d="M119.91,56.62 C121.13,55.73 123.79,52.30 127.22,51.30 C130.65,50.31 138.28,50.75 140.50,50.64" fill="none" stroke="#fff" stroke-width="0.9" stroke-linejoin="round" opacity="0.9"/>
<path d="M119.91,56.62 C119.80,58.05 118.47,62.70 119.25,65.25 C120.02,67.79 122.07,70.34 124.56,71.89 C127.05,73.44 130.87,74.32 134.19,74.54 C137.51,74.77 140.16,73.16 144.48,73.22 C148.80,73.27 157.48,74.60 160.08,74.88" fill="none" stroke="#fff" stroke-width="0.9" stroke-linejoin="round" opacity="0.9"/>
<path d="M108.62,71.89 L117.26,84.50" fill="none" stroke="#fff" stroke-width="0.9" stroke-linejoin="round" opacity="0.9"/>
<path d="M134.85,61.60 C137.45,60.77 146.86,56.89 150.46,56.62 C154.05,56.34 155.44,59.38 156.43,59.94" fill="none" stroke="#fff" stroke-width="0.9" stroke-linejoin="round" opacity="0.9"/>
<path d="M107.96,60.60 C109.95,59.94 115.43,56.45 119.91,56.62 C124.39,56.78 132.36,60.77 134.85,61.60" fill="none" stroke="#fff" stroke-width="0.9" stroke-linejoin="round" opacity="0.9"/>
</g>
<rect x="185" y="931.1" width="123.2" height="5.3" fill="#000"/>
<rect x="210.1" y="932.3" width="23.3" height="3.1" fill="#fff"/>
<rect x="259.1" y="932.3" width="23.100000000000012" height="3.1" fill="#fff"/>
<line x1="185" y1="931.1" x2="185" y2="940.6" stroke="#000" stroke-width="1"/>
<line x1="209.5" y1="931.1" x2="209.5" y2="937.8" stroke="#000" stroke-width="1"/>
<line x1="234" y1="931.1" x2="234" y2="937.8" stroke="#000" stroke-width="1"/>
<line x1="258.5" y1="931.1" x2="258.5" y2="937.8" stroke="#000" stroke-width="1"/>
<line x1="282.8" y1="931.1" x2="282.8" y2="937.8" stroke="#000" stroke-width="1"/>
<line x1="308.2" y1="931.1" x2="308.2" y2="940.6" stroke="#000" stroke-width="1"/>
<defs><linearGradient id="bl" x1="0" y1="0" x2="1" y2="0.2"><stop offset="0" stop-color="#1f56b8"/><stop offset="1" stop-color="#1ba3e8"/></linearGradient><path id="arc" d="M1131.50,932.67 A40.5,40.5 0 1,1 1131.64,932.35"/></defs>
<circle cx="1094.5" cy="916.2" r="32.5" fill="#1e1e1e"/>
<circle cx="1094.5" cy="916.2" r="18" fill="none" stroke="#e3101e" stroke-width="7.8"/>
<circle cx="1094.6" cy="916.2" r="7.9" fill="#e3101e"/>
<path d="M1100.5,910.5 L1127.2,900.3 Q1130.5,899.5 1130.5,903 L1130.5,931.5 Q1130.5,934.5 1127.2,933.8 L1100.5,922.5 Z" fill="url(#bl)"/>
<circle cx="1143.8" cy="916.4" r="9.6" fill="#e3101e"/>
<text x="1143.8" y="921.8" font-size="15" font-weight="bold" fill="#fff" text-anchor="middle" transform="rotate(95 1143.8 916.4)">?</text>
<text font-size="19.5" fill="#1e1e1e" stroke="#1e1e1e" stroke-width="0.55"><textPath href="#arc" startOffset="0" textLength="221" lengthAdjust="spacing"><tspan fill="#e3101e" stroke="#e3101e">www.</tspan>haisentito<tspan stroke-width="0" fill="#333">il</tspan>terremoto<tspan fill="#e3101e" stroke="#e3101e">.it</tspan></textPath></text>
<text x="369.3" y="16.7" font-size="23" text-anchor="middle" font-weight="normal" fill="#000" >13°30&#39;</text>
<text x="369.3" y="1023.9" font-size="23" text-anchor="middle" font-weight="normal" fill="#000" >13°30&#39;</text>
<text x="689.3" y="16.7" font-size="23" text-anchor="middle" font-weight="normal" fill="#000" >15°00&#39;</text>
<text x="689.3" y="1023.9" font-size="23" text-anchor="middle" font-weight="normal" fill="#000" >15°00&#39;</text>
<text x="1009.3" y="16.7" font-size="23" text-anchor="middle" font-weight="normal" fill="#000" >16°30&#39;</text>
<text x="1009.3" y="1023.9" font-size="23" text-anchor="middle" font-weight="normal" fill="#000" >16°30&#39;</text>
<text x="64" y="316.2" font-size="23" text-anchor="end" font-weight="normal" fill="#000" >39°00&#39;</text>
<text x="1190" y="316.2" font-size="23" text-anchor="start" font-weight="normal" fill="#000" >39°00&#39;</text>
<text x="64" y="722.2" font-size="23" text-anchor="end" font-weight="normal" fill="#000" >37°30&#39;</text>
<text x="1190" y="722.2" font-size="23" text-anchor="start" font-weight="normal" fill="#000" >37°30&#39;</text>
<rect x="535.5" y="46.5" width="618" height="62" fill="#fff" stroke="#000" stroke-width="1"/>
<text x="540" y="59.8" font-size="12.2" text-anchor="start" font-weight="normal" fill="#111" >Terremoto del 07-02-2025 16:19:12 (ora locale) Mw=4.7 Prof=7 km</text>
<text x="540" y="74.6" font-size="12.2" text-anchor="start" font-weight="normal" fill="#111" >Effetto acustico (rombo sismico)</text>
<text x="540" y="89.8" font-size="12.2" text-anchor="start" font-weight="normal" fill="#111" >Dati non verificati estratti da 377 questionari compilati tramite Internet, relativi a comuni con almeno 3 questionari.</text>
<text x="540" y="104.9" font-size="12.2" text-anchor="start" font-weight="normal" fill="#111" >Aggiornato il: 13-12-2025 16:48 (ora locale)</text>
<rect x="1051.5" y="171.5" width="101" height="332" fill="#fff" stroke="#000" stroke-width="1"/>
<text transform="translate(1102.5,192.8) scale(1.21,1)" font-size="12.5" text-anchor="middle" font-weight="bold" fill="#111" >Percentuale</text>
<text transform="translate(1102.5,208.9) scale(1.21,1)" font-size="12.5" text-anchor="middle" font-weight="bold" fill="#111" >di percezione</text>
<text transform="translate(1102.5,224.4) scale(1.21,1)" font-size="12.5" text-anchor="middle" font-weight="bold" fill="#111" >dell&#39;effetto</text>
<text transform="translate(1102.5,240.3) scale(1.21,1)" font-size="12.5" text-anchor="middle" font-weight="bold" fill="#111" >acustico</text>
<rect x="1060" y="254.9" width="80" height="36.8" fill="#e3f2fe"/>
<text transform="translate(1100.2,277.90000000000003) scale(1.2,1)" font-size="12.8" text-anchor="middle" font-weight="bold" fill="#111" >0 - 24%</text>
<rect x="1060" y="298.8" width="80" height="37.1" fill="#c6e0fa"/>
<text transform="translate(1100.2,321.95000000000005) scale(1.2,1)" font-size="12.8" text-anchor="middle" font-weight="bold" fill="#111" >25 - 49%</text>
<rect x="1060" y="344.2" width="80" height="36.5" fill="#6fb0fa"/>
<text transform="translate(1100.2,367.05) scale(1.2,1)" font-size="12.8" text-anchor="middle" font-weight="bold" fill="#111" >50 - 74%</text>
<rect x="1060" y="386.1" width="80" height="37.6" fill="#0064c8"/>
<text transform="translate(1100.2,409.50000000000006) scale(1.2,1)" font-size="12.8" text-anchor="middle" font-weight="bold" fill="#fff" >75 - 100%</text>
<line x1="1052" y1="435.5" x2="1152" y2="435.5" stroke="#000" stroke-width="1" stroke-dasharray="3,2.5"/>
<text transform="translate(1102.5,451.5) scale(1.21,1)" font-size="12.5" text-anchor="middle" font-weight="bold" fill="#111" >Epicentro</text>
<text transform="translate(1102.5,467.9) scale(1.21,1)" font-size="12.5" text-anchor="middle" font-weight="bold" fill="#111" >strumentale</text>
<polygon points="1099.90,480.20 1102.19,486.44 1108.84,486.70 1103.61,490.81 1105.43,497.20 1099.90,493.50 1094.37,497.20 1096.19,490.81 1090.96,486.70 1097.61,486.44" fill="#fff" stroke="#000" stroke-width="1.1"/>
<text transform="translate(170,74.6) scale(0.553,1)" font-size="13.4" text-anchor="start" font-weight="normal" fill="#444" letter-spacing="1.25" stroke="#444" stroke-width="0.25">ISTITUTO NAZIONALE</text>
<text transform="translate(170,89.5) scale(0.553,1)" font-size="13.4" text-anchor="start" font-weight="normal" fill="#444" letter-spacing="1.25" stroke="#444" stroke-width="0.25">DI GEOFISICA E VULCANOLOGIA</text>
<text x="246.2" y="916.5" font-size="30" text-anchor="middle" font-weight="normal" fill="#000" >km</text>
<text x="185.6" y="965.2" font-size="22" text-anchor="middle" font-weight="normal" fill="#000" >0</text>
<text x="307.6" y="965.2" font-size="22" text-anchor="middle" font-weight="normal" fill="#000" >50</text>
</svg>
</body></html>
